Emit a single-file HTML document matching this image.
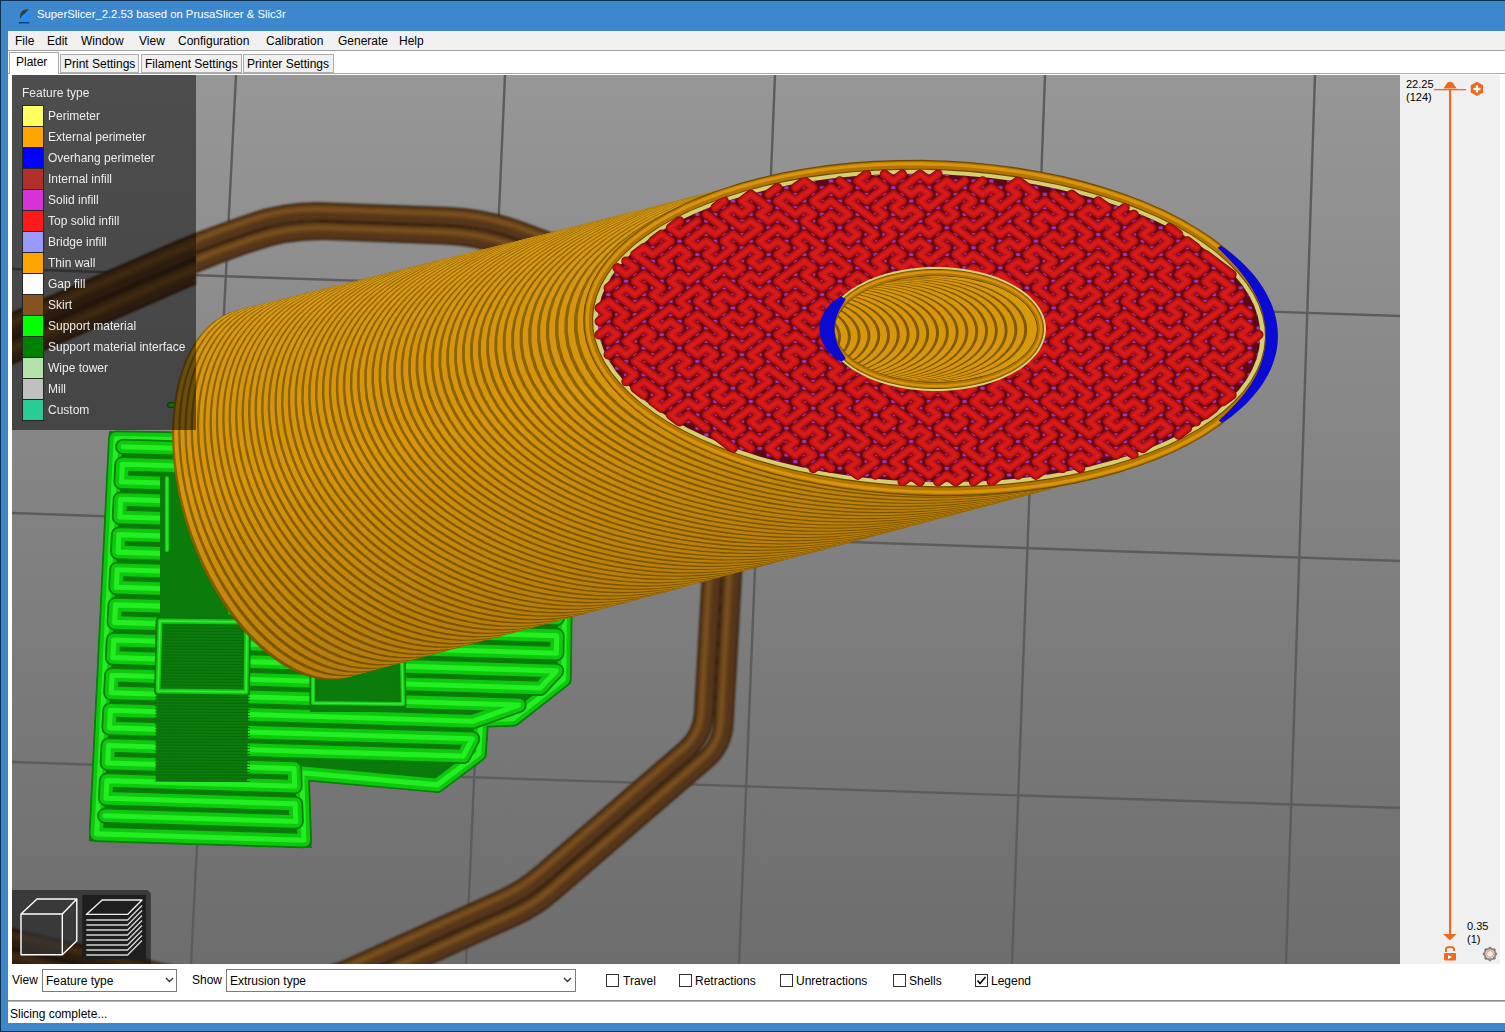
<!DOCTYPE html><html><head><meta charset="utf-8"><style>
html,body{margin:0;padding:0;}
body{width:1505px;height:1032px;position:relative;overflow:hidden;background:#3d87cd;font-family:"Liberation Sans",sans-serif;}
div{font-family:"Liberation Sans",sans-serif;}
</style></head><body>
<div style="position:absolute;left:0;top:0;width:1505px;height:1px;background:#12304f"></div>
<div style="position:absolute;left:0;top:0;width:1px;height:1032px;background:#12304f"></div>
<div style="position:absolute;left:0;top:1031px;width:1505px;height:1px;background:#12304f"></div>
<svg style="position:absolute;left:14px;top:4px" width="24" height="24" viewBox="0 0 24 24"><path d="M6.5 14.5 C5 10 7.5 4.5 14.8 5.2 L11 9.5 C8.5 11 7.2 12.5 7 14.5 Z" fill="#3c3c3c"/><path d="M7 15 C8 11.5 11.5 9.5 14.8 7.5 C16 11 15.5 15.5 13 17.2 C10.5 18.5 8 18 6 16.5 Z" fill="#1f8ef5"/><rect x="5" y="18" width="10.5" height="1.4" fill="#0a3470"/></svg>
<div style="position:absolute;left:37px;top:8px;color:#fff;font-size:11.3px;white-space:nowrap">SuperSlicer_2.2.53 based on PrusaSlicer &amp; Slic3r</div>
<div style="position:absolute;left:8px;top:31px;width:1497px;height:992px;background:#fff"></div>
<div style="position:absolute;left:8px;top:31px;width:1497px;height:19px;background:#f0f0f0"></div>
<div style="position:absolute;left:8px;top:50px;width:1497px;height:1px;background:#a0a0a0"></div>
<div style="position:absolute;left:15px;top:34px;font-size:12px;color:#000;white-space:nowrap">File</div>
<div style="position:absolute;left:47px;top:34px;font-size:12px;color:#000;white-space:nowrap">Edit</div>
<div style="position:absolute;left:81px;top:34px;font-size:12px;color:#000;white-space:nowrap">Window</div>
<div style="position:absolute;left:139px;top:34px;font-size:12px;color:#000;white-space:nowrap">View</div>
<div style="position:absolute;left:178px;top:34px;font-size:12px;color:#000;white-space:nowrap">Configuration</div>
<div style="position:absolute;left:266px;top:34px;font-size:12px;color:#000;white-space:nowrap">Calibration</div>
<div style="position:absolute;left:338px;top:34px;font-size:12px;color:#000;white-space:nowrap">Generate</div>
<div style="position:absolute;left:399px;top:34px;font-size:12px;color:#000;white-space:nowrap">Help</div>
<div style="position:absolute;left:8px;top:73px;width:1497px;height:1px;background:#a8a8a8"></div>
<div style="position:absolute;left:9px;top:52px;width:50px;height:22px;background:#fff;border:1px solid #a8a8a8;border-bottom:none;box-sizing:border-box"></div>
<div style="position:absolute;left:16px;top:55px;font-size:12px;white-space:nowrap">Plater</div>
<div style="position:absolute;left:60px;top:54px;width:79px;height:19px;background:#f0f0f0;border:1px solid #adadad;box-sizing:border-box"></div>
<div style="position:absolute;left:64px;top:57px;font-size:12px;white-space:nowrap">Print Settings</div>
<div style="position:absolute;left:141px;top:54px;width:101px;height:19px;background:#f0f0f0;border:1px solid #adadad;box-sizing:border-box"></div>
<div style="position:absolute;left:145px;top:57px;font-size:12px;white-space:nowrap">Filament Settings</div>
<div style="position:absolute;left:243px;top:54px;width:91px;height:19px;background:#f0f0f0;border:1px solid #adadad;box-sizing:border-box"></div>
<div style="position:absolute;left:247px;top:57px;font-size:12px;white-space:nowrap">Printer Settings</div>
<div style="position:absolute;left:1400px;top:75px;width:100px;height:889px;background:#f0f0f0"></div>
<div style="position:absolute;left:1406px;top:78px;font-size:11px;line-height:13px;color:#000">22.25<br>(124)</div>
<div style="position:absolute;left:1467px;top:920px;font-size:11px;line-height:13px;color:#000">0.35<br>(1)</div>
<svg style="position:absolute;left:1400px;top:75px" width="100" height="889" viewBox="0 0 100 889"><rect x="49" y="14" width="2.2" height="846" fill="#ed6b21"/><rect x="34" y="14" width="32" height="1.3" fill="#ed6b21"/><path d="M43.5 13.5 L47 8 Q50 5.5 53 8 L56.7 13.5 Z" fill="#ed6b21"/><path d="M77 6.7 L83.1 10.2 L83.1 17.5 L77 21 L70.7 17.5 L70.7 10.2 Z" fill="#ed6b21"/><rect x="75.9" y="10.5" width="2.2" height="7" fill="#fff"/><rect x="73.5" y="12.9" width="7" height="2.2" fill="#fff"/><path d="M43 859 L56.6 859 L50 865.5 Z" fill="#ed6b21"/><path d="M46 877 L46 874 Q46 872 50 872 Q54 872 54 874 L54 876" fill="none" stroke="#ed6b21" stroke-width="2"/><rect x="44" y="878" width="12" height="7.5" rx="1" fill="#ed6b21"/><path d="M48 880 L52 882 L48 884Z" fill="#fff"/><path d="M90.00 871.80 L92.14 873.83 L95.09 873.91 L95.17 876.86 L97.20 879.00 L95.17 881.14 L95.09 884.09 L92.14 884.17 L90.00 886.20 L87.86 884.17 L84.91 884.09 L84.83 881.14 L82.80 879.00 L84.83 876.86 L84.91 873.91 L87.86 873.83 Z" fill="#808080" stroke="#808080" stroke-width="1" stroke-linejoin="round"/><circle cx="90" cy="879" r="4.6" fill="#f0f0f0"/><circle cx="90" cy="879" r="3.4" fill="none" stroke="#ee8050" stroke-width="0.9"/></svg>
<div style="position:absolute;left:12px;top:973px;font-size:12px;white-space:nowrap">View</div>
<div style="position:absolute;left:42px;top:969px;width:135px;height:23px;border:1px solid #7a7a7a;box-sizing:border-box;background:#fff"></div>
<div style="position:absolute;left:46px;top:974px;font-size:12px;white-space:nowrap">Feature type</div>
<div style="position:absolute;left:192px;top:973px;font-size:12px;white-space:nowrap">Show</div>
<div style="position:absolute;left:226px;top:969px;width:350px;height:23px;border:1px solid #7a7a7a;box-sizing:border-box;background:#fff"></div>
<div style="position:absolute;left:230px;top:974px;font-size:12px;white-space:nowrap">Extrusion type</div>
<svg style="position:absolute;left:165px;top:976px" width="9" height="8"><path d="M1 2 L4.5 5.5 L8 2" fill="none" stroke="#333" stroke-width="1.4"/></svg>
<svg style="position:absolute;left:563px;top:976px" width="9" height="8"><path d="M1 2 L4.5 5.5 L8 2" fill="none" stroke="#333" stroke-width="1.4"/></svg>
<div style="position:absolute;left:606px;top:974px;width:13px;height:13px;border:1px solid #333;box-sizing:border-box;background:#fff"></div>
<div style="position:absolute;left:623px;top:974px;font-size:12px;white-space:nowrap">Travel</div>
<div style="position:absolute;left:679px;top:974px;width:13px;height:13px;border:1px solid #333;box-sizing:border-box;background:#fff"></div>
<div style="position:absolute;left:695px;top:974px;font-size:12px;white-space:nowrap">Retractions</div>
<div style="position:absolute;left:780px;top:974px;width:13px;height:13px;border:1px solid #333;box-sizing:border-box;background:#fff"></div>
<div style="position:absolute;left:796px;top:974px;font-size:12px;white-space:nowrap">Unretractions</div>
<div style="position:absolute;left:893px;top:974px;width:13px;height:13px;border:1px solid #333;box-sizing:border-box;background:#fff"></div>
<div style="position:absolute;left:909px;top:974px;font-size:12px;white-space:nowrap">Shells</div>
<div style="position:absolute;left:975px;top:974px;width:13px;height:13px;border:1px solid #333;box-sizing:border-box;background:#fff"></div>
<svg style="position:absolute;left:975px;top:974px" width="13" height="13"><path d="M2.5 6.5 L5 9.5 L10.5 3" fill="none" stroke="#000" stroke-width="1.6"/></svg>
<div style="position:absolute;left:991px;top:974px;font-size:12px;white-space:nowrap">Legend</div>
<div style="position:absolute;left:8px;top:1000px;width:1497px;height:1px;background:#8c8c8c"></div>
<div style="position:absolute;left:8px;top:1001px;width:1497px;height:1px;background:#b4b4b4"></div>
<div style="position:absolute;left:10px;top:1007px;font-size:12px;white-space:nowrap">Slicing complete...</div>
<svg style="position:absolute;left:0;top:0" width="1505" height="1032" viewBox="0 0 1505 1032">
<defs><clipPath id="vp"><rect x="12" y="75" width="1388" height="889"/></clipPath><linearGradient id="bg" x1="0" y1="75" x2="0" y2="964" gradientUnits="userSpaceOnUse"><stop offset="0" stop-color="#979797"/><stop offset="1" stop-color="#6d6d6d"/></linearGradient></defs>
<g clip-path="url(#vp)">
<rect x="12" y="75" width="1388" height="889" fill="url(#bg)"/>
<line x1="236" y1="75" x2="191" y2="964" stroke="#5c5c5c" stroke-width="2.4"/>
<line x1="505" y1="75" x2="466" y2="964" stroke="#5c5c5c" stroke-width="2.4"/>
<line x1="775" y1="75" x2="739" y2="964" stroke="#5c5c5c" stroke-width="2.4"/>
<line x1="1045" y1="75" x2="1012" y2="964" stroke="#5c5c5c" stroke-width="2.4"/>
<line x1="1315" y1="75" x2="1286" y2="964" stroke="#5c5c5c" stroke-width="2.4"/>
<line x1="12" y1="269" x2="1400" y2="316" stroke="#5c5c5c" stroke-width="2.4"/>
<line x1="12" y1="513" x2="1400" y2="561" stroke="#5c5c5c" stroke-width="2.4"/>
<line x1="12" y1="762" x2="1400" y2="808" stroke="#5c5c5c" stroke-width="2.4"/>
<filter id="bl1" x="-5%" y="-5%" width="110%" height="110%"><feGaussianBlur stdDeviation="0.9"/></filter>
<filter id="bl08" x="-2%" y="-2%" width="104%" height="104%"><feGaussianBlur stdDeviation="0.7"/></filter>
<g filter="url(#bl1)">
<clipPath id="skA"><rect x="0" y="0" width="196" height="600"/></clipPath><clipPath id="skB"><rect x="196" y="0" width="600" height="600"/></clipPath>
<g clip-path="url(#skA)">
<path d="M-35.2 346.0 L165.6 258.4 Q200.4 243.2 236.3 230.7 L250.9 225.6 Q286.8 213.1 324.8 214.5 L446.7 219.0 Q484.6 220.4 520.3 233.6 L635.8 276.3" fill="none" stroke="#3a2410" stroke-width="24.0" stroke-linejoin="round"/><path d="M-35.2 346.0 L165.6 258.4 Q200.4 243.2 236.3 230.7 L250.9 225.6 Q286.8 213.1 324.8 214.5 L446.7 219.0 Q484.6 220.4 520.3 233.6 L635.8 276.3" fill="none" stroke="#55361a" stroke-width="19.2" stroke-linejoin="round"/><path d="M-36.3 343.4 L164.5 255.8 Q199.4 240.6 235.2 228.1 L250.5 222.8 Q286.4 210.3 324.4 211.7 L447.2 216.2 Q485.2 217.6 520.8 230.8 L636.8 273.6" fill="none" stroke="#664218" stroke-width="10.8" stroke-linejoin="round"/><path d="M-36.3 343.4 L164.5 255.8 Q199.4 240.6 235.2 228.1 L250.5 222.8 Q286.4 210.3 324.4 211.7 L447.2 216.2 Q485.2 217.6 520.8 230.8 L636.8 273.6" fill="none" stroke="#7a5022" stroke-width="4.3" stroke-linejoin="round"/>
<path d="M-25.6 368.0 L174.3 280.7 Q209.1 265.5 245.0 253.0 L254.6 249.7 Q290.4 237.2 328.4 238.6 L441.9 242.9 Q479.9 244.3 515.6 257.4 L627.5 298.8" fill="none" stroke="#3a2410" stroke-width="24.0" stroke-linejoin="round"/><path d="M-25.6 368.0 L174.3 280.7 Q209.1 265.5 245.0 253.0 L254.6 249.7 Q290.4 237.2 328.4 238.6 L441.9 242.9 Q479.9 244.3 515.6 257.4 L627.5 298.8" fill="none" stroke="#55361a" stroke-width="19.2" stroke-linejoin="round"/><path d="M-26.7 365.4 L173.3 278.1 Q208.1 262.9 244.0 250.4 L254.1 246.9 Q290.0 234.4 328.0 235.8 L442.5 240.1 Q480.5 241.5 516.1 254.6 L628.5 296.1" fill="none" stroke="#664218" stroke-width="10.8" stroke-linejoin="round"/><path d="M-26.7 365.4 L173.3 278.1 Q208.1 262.9 244.0 250.4 L254.1 246.9 Q290.0 234.4 328.0 235.8 L442.5 240.1 Q480.5 241.5 516.1 254.6 L628.5 296.1" fill="none" stroke="#7a5022" stroke-width="4.3" stroke-linejoin="round"/>
</g><g clip-path="url(#skB)">
<path d="M-36.2 343.7 L164.6 256.1 Q199.5 240.9 235.4 228.4 L250.5 223.1 Q286.4 210.6 324.4 212.0 L447.2 216.5 Q485.1 217.9 520.8 231.1 L636.7 273.9" fill="none" stroke="#3a2410" stroke-width="19.0" stroke-linejoin="round"/><path d="M-36.2 343.7 L164.6 256.1 Q199.5 240.9 235.4 228.4 L250.5 223.1 Q286.4 210.6 324.4 212.0 L447.2 216.5 Q485.1 217.9 520.8 231.1 L636.7 273.9" fill="none" stroke="#55361a" stroke-width="15.2" stroke-linejoin="round"/><path d="M-37.3 341.1 L163.6 253.4 Q198.4 238.2 234.3 225.7 L250.1 220.2 Q286.0 207.7 324.0 209.2 L447.7 213.7 Q485.7 215.2 521.3 228.3 L637.7 271.3" fill="none" stroke="#664218" stroke-width="8.6" stroke-linejoin="round"/><path d="M-37.3 341.1 L163.6 253.4 Q198.4 238.2 234.3 225.7 L250.1 220.2 Q286.0 207.7 324.0 209.2 L447.7 213.7 Q485.7 215.2 521.3 228.3 L637.7 271.3" fill="none" stroke="#7a5022" stroke-width="3.4" stroke-linejoin="round"/>
<path d="M-28.8 360.7 L171.4 273.3 Q206.2 258.1 242.1 245.6 L253.3 241.7 Q289.2 229.2 327.2 230.6 L443.5 234.9 Q481.5 236.3 517.1 249.5 L630.3 291.3" fill="none" stroke="#3a2410" stroke-width="19.0" stroke-linejoin="round"/><path d="M-28.8 360.7 L171.4 273.3 Q206.2 258.1 242.1 245.6 L253.3 241.7 Q289.2 229.2 327.2 230.6 L443.5 234.9 Q481.5 236.3 517.1 249.5 L630.3 291.3" fill="none" stroke="#55361a" stroke-width="15.2" stroke-linejoin="round"/><path d="M-29.9 358.1 L170.4 270.7 Q205.2 255.5 241.1 243.0 L252.9 238.9 Q288.8 226.4 326.8 227.8 L444.1 232.1 Q482.0 233.5 517.7 246.7 L631.3 288.6" fill="none" stroke="#664218" stroke-width="8.6" stroke-linejoin="round"/><path d="M-29.9 358.1 L170.4 270.7 Q205.2 255.5 241.1 243.0 L252.9 238.9 Q288.8 226.4 326.8 227.8 L444.1 232.1 Q482.0 233.5 517.7 246.7 L631.3 288.6" fill="none" stroke="#7a5022" stroke-width="3.4" stroke-linejoin="round"/>
</g>
<path d="M734.0 539.4 L723.5 723.2 Q722.3 745.2 705.6 759.6 L551.2 892.6 Q534.6 907.0 514.5 916.0 L353.0 988.9 Q332.9 998.0 310.9 997.7 L193.2 996.3 Q171.2 996.0 149.8 991.0 L-37.7 947.3" fill="none" stroke="#3a2410" stroke-width="20.0" stroke-linejoin="round"/><path d="M734.0 539.4 L723.5 723.2 Q722.3 745.2 705.6 759.6 L551.2 892.6 Q534.6 907.0 514.5 916.0 L353.0 988.9 Q332.9 998.0 310.9 997.7 L193.2 996.3 Q171.2 996.0 149.8 991.0 L-37.7 947.3" fill="none" stroke="#55361a" stroke-width="16.0" stroke-linejoin="round"/><path d="M731.2 539.3 L720.8 721.9 Q719.5 743.8 702.9 758.2 L549.7 890.2 Q533.0 904.6 513.0 913.6 L352.4 986.1 Q332.3 995.2 310.3 994.9 L193.5 993.5 Q171.6 993.2 150.1 988.2 L-37.1 944.5" fill="none" stroke="#664218" stroke-width="9.0" stroke-linejoin="round"/><path d="M731.2 539.3 L720.8 721.9 Q719.5 743.8 702.9 758.2 L549.7 890.2 Q533.0 904.6 513.0 913.6 L352.4 986.1 Q332.3 995.2 310.3 994.9 L193.5 993.5 Q171.6 993.2 150.1 988.2 L-37.1 944.5" fill="none" stroke="#7a5022" stroke-width="3.6" stroke-linejoin="round"/>
<path d="M714.0 538.3 L704.0 713.6 Q702.8 735.6 686.1 749.9 L540.4 875.6 Q523.7 889.9 503.6 899.0 L348.8 968.9 Q328.7 977.9 306.7 977.7 L195.6 976.3 Q173.6 976.0 152.2 971.0 L-33.2 927.8" fill="none" stroke="#3a2410" stroke-width="20.0" stroke-linejoin="round"/><path d="M714.0 538.3 L704.0 713.6 Q702.8 735.6 686.1 749.9 L540.4 875.6 Q523.7 889.9 503.6 899.0 L348.8 968.9 Q328.7 977.9 306.7 977.7 L195.6 976.3 Q173.6 976.0 152.2 971.0 L-33.2 927.8" fill="none" stroke="#55361a" stroke-width="16.0" stroke-linejoin="round"/><path d="M711.3 538.1 L701.3 712.3 Q700.0 734.2 683.4 748.6 L538.8 873.2 Q522.2 887.6 502.1 896.6 L348.2 966.1 Q328.1 975.1 306.1 974.8 L196.0 973.5 Q174.0 973.2 152.5 968.2 L-32.5 925.1" fill="none" stroke="#664218" stroke-width="9.0" stroke-linejoin="round"/><path d="M711.3 538.1 L701.3 712.3 Q700.0 734.2 683.4 748.6 L538.8 873.2 Q522.2 887.6 502.1 896.6 L348.2 966.1 Q328.1 975.1 306.1 974.8 L196.0 973.5 Q174.0 973.2 152.5 968.2 L-32.5 925.1" fill="none" stroke="#7a5022" stroke-width="3.6" stroke-linejoin="round"/>
</g>
<path d="M109.0 431.0 L420.0 436.0 L560.0 445.0 L572.0 614.0 L571.0 683.0 L516.0 726.0 L488.0 727.0 L486.0 757.7 L439.5 792.6 L309.5 781.0 L311.7 847.9 L88.9 841.2 Z" fill="#0a7a0a"/>
<g filter="url(#bl08)">
<path d="M116.1 438.6 L96.8 833.9 L303.9 840.2 L301.7 772.8 L437.3 784.9 L478.7 753.8 L481.0 719.7 L513.3 718.6 L563.6 679.3 L564.5 614.2 L553.0 452.1 L419.7 443.5 L116.1 438.6 Z" fill="none" stroke="#087c08" stroke-width="16.0" stroke-linejoin="round" stroke-linecap="round"/><path d="M116.1 438.6 L96.8 833.9 L303.9 840.2 L301.7 772.8 L437.3 784.9 L478.7 753.8 L481.0 719.7 L513.3 718.6 L563.6 679.3 L564.5 614.2 L553.0 452.1 L419.7 443.5 L116.1 438.6 Z" fill="none" stroke="#0cc80c" stroke-width="12.5" stroke-linejoin="round" stroke-linecap="round"/><path d="M116.1 438.6 L96.8 833.9 L303.9 840.2 L301.7 772.8 L437.3 784.9 L478.7 753.8 L481.0 719.7 L513.3 718.6 L563.6 679.3 L564.5 614.2 L553.0 452.1 L419.7 443.5 L116.1 438.6 Z" fill="none" stroke="#22ee22" stroke-width="5.1" stroke-linejoin="round" stroke-linecap="round"/>
<path d="M123.2 446.7 L546.0 459.4 L547.2 477.0 L122.4 464.3 L121.5 481.8 L548.5 494.7 L549.7 512.3 L120.7 499.4 L119.8 517.0 L551.0 529.9 L552.2 547.6 L118.9 534.6 L118.1 552.1 L553.5 565.2 L554.7 582.8 L117.2 569.7 L116.4 587.3 L556.0 600.5 L556.9 618.1 L115.5 604.9 L114.6 622.4 L556.7 635.7 L556.4 653.3 L113.8 640.0 L112.9 657.6 L556.2 670.9 L540.2 688.0 L112.1 675.2 L111.2 692.7 L518.6 705.0 L473.3 721.2 L110.3 710.3 L109.5 727.9 L472.2 738.8 L463.2 756.1 L108.6 745.5 L107.7 763.0 L294.1 768.6 L294.7 786.2 L106.9 780.6 L106.0 798.2 L295.2 803.9 L295.8 821.5 L105.2 815.8" fill="none" stroke="#087c08" stroke-width="16.0" stroke-linejoin="round" stroke-linecap="round"/><path d="M123.2 446.7 L546.0 459.4 L547.2 477.0 L122.4 464.3 L121.5 481.8 L548.5 494.7 L549.7 512.3 L120.7 499.4 L119.8 517.0 L551.0 529.9 L552.2 547.6 L118.9 534.6 L118.1 552.1 L553.5 565.2 L554.7 582.8 L117.2 569.7 L116.4 587.3 L556.0 600.5 L556.9 618.1 L115.5 604.9 L114.6 622.4 L556.7 635.7 L556.4 653.3 L113.8 640.0 L112.9 657.6 L556.2 670.9 L540.2 688.0 L112.1 675.2 L111.2 692.7 L518.6 705.0 L473.3 721.2 L110.3 710.3 L109.5 727.9 L472.2 738.8 L463.2 756.1 L108.6 745.5 L107.7 763.0 L294.1 768.6 L294.7 786.2 L106.9 780.6 L106.0 798.2 L295.2 803.9 L295.8 821.5 L105.2 815.8" fill="none" stroke="#0cc80c" stroke-width="12.5" stroke-linejoin="round" stroke-linecap="round"/><path d="M123.2 446.7 L546.0 459.4 L547.2 477.0 L122.4 464.3 L121.5 481.8 L548.5 494.7 L549.7 512.3 L120.7 499.4 L119.8 517.0 L551.0 529.9 L552.2 547.6 L118.9 534.6 L118.1 552.1 L553.5 565.2 L554.7 582.8 L117.2 569.7 L116.4 587.3 L556.0 600.5 L556.9 618.1 L115.5 604.9 L114.6 622.4 L556.7 635.7 L556.4 653.3 L113.8 640.0 L112.9 657.6 L556.2 670.9 L540.2 688.0 L112.1 675.2 L111.2 692.7 L518.6 705.0 L473.3 721.2 L110.3 710.3 L109.5 727.9 L472.2 738.8 L463.2 756.1 L108.6 745.5 L107.7 763.0 L294.1 768.6 L294.7 786.2 L106.9 780.6 L106.0 798.2 L295.2 803.9 L295.8 821.5 L105.2 815.8" fill="none" stroke="#22ee22" stroke-width="5.1" stroke-linejoin="round" stroke-linecap="round"/>
</g>
<path d="M157 617 L250 617 L247 782 L156 781 Z" fill="#0b7c0b"/>
<g stroke="#0a6a0a" stroke-width="1"><line x1="155" y1="622" x2="250" y2="622.5"/><line x1="155" y1="625" x2="250" y2="625.5"/><line x1="155" y1="628" x2="250" y2="628.5"/><line x1="155" y1="631" x2="250" y2="631.5"/><line x1="155" y1="634" x2="250" y2="634.5"/><line x1="155" y1="637" x2="250" y2="637.5"/><line x1="155" y1="640" x2="250" y2="640.5"/><line x1="155" y1="643" x2="250" y2="643.5"/><line x1="155" y1="646" x2="250" y2="646.5"/><line x1="155" y1="649" x2="250" y2="649.5"/><line x1="155" y1="652" x2="250" y2="652.5"/><line x1="155" y1="655" x2="250" y2="655.5"/><line x1="155" y1="658" x2="250" y2="658.5"/><line x1="155" y1="661" x2="250" y2="661.5"/><line x1="155" y1="664" x2="250" y2="664.5"/><line x1="155" y1="667" x2="250" y2="667.5"/><line x1="155" y1="670" x2="250" y2="670.5"/><line x1="155" y1="673" x2="250" y2="673.5"/><line x1="155" y1="676" x2="250" y2="676.5"/><line x1="155" y1="679" x2="250" y2="679.5"/><line x1="155" y1="682" x2="250" y2="682.5"/><line x1="155" y1="685" x2="250" y2="685.5"/><line x1="155" y1="688" x2="250" y2="688.5"/><line x1="155" y1="691" x2="250" y2="691.5"/><line x1="155" y1="694" x2="250" y2="694.5"/><line x1="155" y1="697" x2="250" y2="697.5"/><line x1="155" y1="700" x2="250" y2="700.5"/><line x1="155" y1="703" x2="250" y2="703.5"/><line x1="155" y1="706" x2="250" y2="706.5"/><line x1="155" y1="709" x2="250" y2="709.5"/><line x1="155" y1="712" x2="250" y2="712.5"/><line x1="155" y1="715" x2="250" y2="715.5"/><line x1="155" y1="718" x2="250" y2="718.5"/><line x1="155" y1="721" x2="250" y2="721.5"/><line x1="155" y1="724" x2="250" y2="724.5"/><line x1="155" y1="727" x2="250" y2="727.5"/><line x1="155" y1="730" x2="250" y2="730.5"/><line x1="155" y1="733" x2="250" y2="733.5"/><line x1="155" y1="736" x2="250" y2="736.5"/><line x1="155" y1="739" x2="250" y2="739.5"/><line x1="155" y1="742" x2="250" y2="742.5"/><line x1="155" y1="745" x2="250" y2="745.5"/><line x1="155" y1="748" x2="250" y2="748.5"/><line x1="155" y1="751" x2="250" y2="751.5"/><line x1="155" y1="754" x2="250" y2="754.5"/><line x1="155" y1="757" x2="250" y2="757.5"/><line x1="155" y1="760" x2="250" y2="760.5"/><line x1="155" y1="763" x2="250" y2="763.5"/><line x1="155" y1="766" x2="250" y2="766.5"/><line x1="155" y1="769" x2="250" y2="769.5"/><line x1="155" y1="772" x2="250" y2="772.5"/><line x1="155" y1="775" x2="250" y2="775.5"/><line x1="155" y1="778" x2="250" y2="778.5"/><line x1="155" y1="781" x2="250" y2="781.5"/></g>
<path d="M160 621 L247 622 L246 692 L158 691 Z" fill="none" stroke="#0a7a0a" stroke-width="8.0" stroke-linejoin="round" stroke-linecap="round"/><path d="M160 621 L247 622 L246 692 L158 691 Z" fill="none" stroke="#16c816" stroke-width="4.8" stroke-linejoin="round" stroke-linecap="round"/><path d="M160 621 L247 622 L246 692 L158 691 Z" fill="none" stroke="#30f030" stroke-width="1.6" stroke-linejoin="round" stroke-linecap="round"/>
<path d="M160 476 L192 478 L200 554 L230 556 L228 617 L160 617 Z" fill="#0b7c0b"/>
<path d="M167 478 L167 550" fill="none" stroke="#0a7a0a" stroke-width="7.0" stroke-linejoin="round" stroke-linecap="round"/><path d="M167 478 L167 550" fill="none" stroke="#16c816" stroke-width="4.2" stroke-linejoin="round" stroke-linecap="round"/><path d="M167 478 L167 550" fill="none" stroke="#30f030" stroke-width="1.4" stroke-linejoin="round" stroke-linecap="round"/>
<path d="M310 654 L406 654 L406 712 L310 712 Z" fill="#0b7c0b"/>
<path d="M313 658 L402 658 L403 704 L313 703 Z" fill="none" stroke="#0a7a0a" stroke-width="7.0" stroke-linejoin="round" stroke-linecap="round"/><path d="M313 658 L402 658 L403 704 L313 703 Z" fill="none" stroke="#16c816" stroke-width="4.2" stroke-linejoin="round" stroke-linecap="round"/><path d="M313 658 L402 658 L403 704 L313 703 Z" fill="none" stroke="#30f030" stroke-width="1.4" stroke-linejoin="round" stroke-linecap="round"/>
<path d="M170 405 L195 405 L195 430" fill="none" stroke="#0a7a0a" stroke-width="6.0" stroke-linejoin="round" stroke-linecap="round"/><path d="M170 405 L195 405 L195 430" fill="none" stroke="#16c816" stroke-width="3.6" stroke-linejoin="round" stroke-linecap="round"/><path d="M170 405 L195 405 L195 430" fill="none" stroke="#30f030" stroke-width="1.2" stroke-linejoin="round" stroke-linecap="round"/>
<clipPath id="cylclip"><path d="M185.1 520.7 L189.7 535.1 L195.0 549.2 L200.8 562.9 L207.2 576.3 L214.1 589.1 L221.5 601.3 L229.4 612.9 L237.6 623.8 L246.1 633.8 L255.0 643.0 L264.0 651.3 L273.3 658.6 L282.6 664.9 L292.0 670.1 L301.5 674.2 L310.8 677.3 L320.0 679.2 L329.1 679.9 L337.9 679.5 L346.5 678.0 L354.7 675.4 L362.5 671.6 L369.9 666.7 L376.8 660.8 L383.2 653.8 L389.1 645.8 L394.3 636.9 L398.9 627.2 L402.8 616.6 L406.1 605.2 L408.6 593.2 L410.5 580.5 L411.6 567.4 L412.0 553.7 L411.6 539.7 L410.5 525.5 L408.6 511.0 L406.1 496.4 L402.8 481.8 L398.9 467.3 L394.3 452.9 L389.0 438.8 L383.2 425.1 L376.8 411.7 L369.9 398.9 L362.5 386.7 L354.6 375.1 L346.4 364.2 L337.9 354.2 L329.0 345.0 L320.0 336.7 L310.7 329.4 L301.4 323.1 L292.0 317.9 L282.5 313.8 L273.2 310.7 L264.0 308.8 L254.9 308.1 L246.1 308.5 L237.5 310.0 L229.3 312.6 L221.5 316.4 L214.1 321.3 L207.2 327.2 L200.8 334.2 L194.9 342.2 L189.7 351.1 L185.1 360.8 L181.2 371.4 L177.9 382.8 L175.4 394.8 L173.5 407.5 L172.4 420.6 L172.0 434.3 L172.4 448.3 L173.5 462.5 L175.4 477.0 L177.9 491.6 L181.2 506.2 Z"/><path d="M192.0 518.9 L196.8 533.2 L202.3 547.2 L208.4 560.9 L215.1 574.1 L222.3 586.9 L230.1 599.0 L238.3 610.5 L246.8 621.2 L255.8 631.2 L265.0 640.3 L274.5 648.4 L284.1 655.6 L293.9 661.8 L303.7 666.9 L313.5 670.9 L323.3 673.9 L332.9 675.7 L342.4 676.3 L351.6 675.9 L360.5 674.2 L369.0 671.5 L377.2 667.6 L384.9 662.7 L392.1 656.7 L398.8 649.6 L404.8 641.6 L410.3 632.7 L415.0 622.9 L419.1 612.3 L422.5 600.9 L425.2 588.8 L427.0 576.2 L428.2 563.0 L428.5 549.4 L428.1 535.4 L426.9 521.2 L425.0 506.7 L422.3 492.2 L418.9 477.7 L414.7 463.2 L409.9 448.9 L404.4 434.9 L398.3 421.2 L391.6 407.9 L384.4 395.2 L376.7 383.1 L368.5 371.6 L359.9 360.8 L351.0 350.9 L341.7 341.8 L332.3 333.6 L322.6 326.5 L312.9 320.3 L303.0 315.2 L293.2 311.1 L283.5 308.2 L273.8 306.4 L264.4 305.7 L255.2 306.2 L246.3 307.8 L237.7 310.6 L229.5 314.4 L221.8 319.4 L214.6 325.4 L208.0 332.4 L201.9 340.4 L196.5 349.4 L191.7 359.2 L187.6 369.8 L184.2 381.2 L181.6 393.2 L179.7 405.9 L178.6 419.1 L178.2 432.7 L178.6 446.7 L179.8 460.9 L181.7 475.3 L184.4 489.9 L187.9 504.4 Z"/><path d="M198.9 517.0 L203.9 531.3 L209.7 545.2 L216.0 558.8 L223.0 572.0 L230.6 584.6 L238.6 596.7 L247.2 608.1 L256.1 618.7 L265.4 628.6 L275.1 637.5 L284.9 645.6 L295.0 652.7 L305.1 658.7 L315.4 663.7 L325.6 667.7 L335.7 670.5 L345.8 672.2 L355.6 672.7 L365.2 672.2 L374.5 670.5 L383.4 667.6 L391.9 663.7 L399.9 658.7 L407.3 652.6 L414.3 645.5 L420.6 637.4 L426.2 628.5 L431.2 618.6 L435.4 608.0 L438.9 596.6 L441.6 584.5 L443.6 571.8 L444.7 558.7 L445.1 545.1 L444.6 531.1 L443.4 516.9 L441.3 502.5 L438.5 488.0 L434.9 473.5 L430.6 459.1 L425.6 444.9 L419.8 430.9 L413.5 417.3 L406.5 404.2 L398.9 391.5 L390.9 379.5 L382.3 368.1 L373.4 357.4 L364.1 347.6 L354.4 338.6 L344.6 330.6 L334.5 323.5 L324.4 317.4 L314.1 312.4 L303.9 308.5 L293.8 305.7 L283.7 304.0 L273.9 303.4 L264.3 304.0 L255.0 305.7 L246.1 308.5 L237.6 312.5 L229.6 317.5 L222.2 323.6 L215.2 330.6 L208.9 338.7 L203.3 347.7 L198.3 357.5 L194.1 368.2 L190.6 379.6 L187.9 391.6 L185.9 404.3 L184.8 417.5 L184.4 431.1 L184.9 445.0 L186.1 459.3 L188.2 473.7 L191.0 488.1 L194.6 502.6 Z"/><path d="M205.8 515.2 L211.1 529.3 L217.0 543.2 L223.7 556.7 L231.0 569.8 L238.8 582.4 L247.2 594.3 L256.1 605.6 L265.4 616.2 L275.1 625.9 L285.1 634.8 L295.4 642.7 L305.8 649.7 L316.4 655.7 L327.0 660.6 L337.6 664.4 L348.2 667.1 L358.6 668.7 L368.8 669.2 L378.8 668.5 L388.4 666.7 L397.7 663.8 L406.5 659.8 L414.8 654.7 L422.6 648.5 L429.7 641.4 L436.3 633.2 L442.1 624.2 L447.3 614.3 L451.6 603.7 L455.3 592.2 L458.1 580.2 L460.1 567.5 L461.3 554.3 L461.6 540.7 L461.1 526.8 L459.8 512.6 L457.7 498.3 L454.7 483.8 L451.0 469.4 L446.4 455.0 L441.2 440.9 L435.2 427.0 L428.6 413.5 L421.3 400.4 L413.4 387.8 L405.0 375.9 L396.2 364.6 L386.8 354.0 L377.2 344.3 L367.1 335.4 L356.9 327.5 L346.4 320.5 L335.9 314.6 L325.2 309.7 L314.6 305.8 L304.0 303.1 L293.6 301.5 L283.4 301.0 L273.5 301.7 L263.8 303.5 L254.6 306.4 L245.8 310.5 L237.5 315.6 L229.7 321.7 L222.5 328.9 L216.0 337.0 L210.1 346.0 L205.0 355.9 L200.6 366.6 L197.0 378.0 L194.2 390.0 L192.2 402.7 L191.0 415.9 L190.6 429.5 L191.1 443.4 L192.4 457.6 L194.6 472.0 L197.5 486.4 L201.3 500.8 Z"/><path d="M212.7 513.3 L218.2 527.4 L224.4 541.2 L231.3 554.7 L238.9 567.7 L247.1 580.1 L255.8 592.0 L265.0 603.2 L274.7 613.6 L284.8 623.3 L295.2 632.0 L305.8 639.9 L316.7 646.7 L327.6 652.6 L338.7 657.4 L349.7 661.1 L360.7 663.7 L371.5 665.2 L382.1 665.6 L392.4 664.8 L402.4 662.9 L412.0 659.9 L421.1 655.8 L429.7 650.7 L437.8 644.4 L445.2 637.2 L451.9 629.1 L458.0 620.0 L463.3 610.1 L467.9 599.4 L471.6 587.9 L474.5 575.8 L476.6 563.2 L477.8 550.0 L478.1 536.4 L477.6 522.5 L476.2 508.3 L473.9 494.0 L470.9 479.6 L467.0 465.2 L462.3 451.0 L456.8 436.9 L450.6 423.1 L443.7 409.6 L436.1 396.6 L427.9 384.1 L419.2 372.3 L410.0 361.1 L400.3 350.6 L390.2 341.0 L379.8 332.3 L369.2 324.4 L358.3 317.6 L347.4 311.7 L336.3 306.9 L325.3 303.2 L314.3 300.6 L303.5 299.1 L292.9 298.7 L282.6 299.5 L272.6 301.4 L263.0 304.4 L253.9 308.5 L245.3 313.6 L237.2 319.8 L229.8 327.1 L223.1 335.2 L217.0 344.3 L211.7 354.2 L207.1 364.9 L203.4 376.4 L200.5 388.4 L198.4 401.1 L197.2 414.3 L196.9 427.9 L197.4 441.8 L198.8 455.9 L201.1 470.3 L204.1 484.7 L208.0 499.0 Z"/><path d="M219.7 511.5 L225.4 525.5 L231.9 539.2 L239.0 552.6 L246.9 565.5 L255.4 577.9 L264.4 589.7 L274.0 600.8 L284.0 611.1 L294.5 620.6 L305.2 629.3 L316.3 637.0 L327.5 643.8 L338.9 649.5 L350.3 654.2 L361.8 657.8 L373.1 660.3 L384.3 661.7 L395.3 662.0 L406.0 661.2 L416.3 659.2 L426.2 656.1 L435.7 651.9 L444.6 646.7 L452.9 640.4 L460.6 633.1 L467.6 624.9 L473.9 615.8 L479.4 605.8 L484.0 595.1 L487.9 583.6 L490.9 571.5 L493.0 558.9 L494.2 545.7 L494.6 532.1 L494.0 518.2 L492.6 504.1 L490.2 489.8 L487.0 475.4 L482.9 461.1 L478.0 446.9 L472.3 432.9 L465.9 419.1 L458.7 405.8 L450.9 392.8 L442.4 380.5 L433.3 368.7 L423.8 357.6 L413.7 347.3 L403.3 337.7 L392.5 329.1 L381.5 321.3 L370.2 314.6 L358.9 308.8 L347.4 304.1 L336.0 300.5 L324.6 298.0 L313.4 296.6 L302.5 296.4 L291.8 297.2 L281.4 299.2 L271.5 302.3 L262.1 306.5 L253.1 311.7 L244.8 318.0 L237.1 325.2 L230.1 333.5 L223.9 342.6 L218.4 352.5 L213.7 363.3 L209.9 374.7 L206.9 386.8 L204.7 399.5 L203.5 412.7 L203.2 426.2 L203.7 440.1 L205.2 454.3 L207.5 468.6 L210.8 482.9 L214.8 497.2 Z"/><path d="M226.7 509.6 L232.6 523.6 L239.3 537.2 L246.7 550.5 L254.9 563.3 L263.7 575.6 L273.0 587.3 L283.0 598.3 L293.3 608.6 L304.2 618.0 L315.3 626.5 L326.7 634.2 L338.4 640.8 L350.1 646.5 L362.0 651.0 L373.8 654.6 L385.5 657.0 L397.1 658.3 L408.5 658.4 L419.5 657.5 L430.2 655.4 L440.5 652.2 L450.3 648.0 L459.5 642.7 L468.1 636.3 L476.0 629.0 L483.2 620.7 L489.7 611.6 L495.4 601.6 L500.2 590.8 L504.2 579.3 L507.2 567.2 L509.4 554.5 L510.7 541.4 L511.0 527.8 L510.4 513.9 L508.9 499.8 L506.4 485.6 L503.1 471.3 L498.9 457.0 L493.8 442.8 L487.9 428.9 L481.2 415.2 L473.8 401.9 L465.6 389.1 L456.8 376.8 L447.5 365.1 L437.5 354.1 L427.2 343.9 L416.3 334.4 L405.2 325.9 L393.8 318.3 L382.1 311.6 L370.4 306.0 L358.5 301.4 L346.7 297.9 L335.0 295.5 L323.4 294.2 L312.0 294.0 L301.0 294.9 L290.3 297.0 L280.0 300.2 L270.2 304.4 L261.0 309.8 L252.4 316.1 L244.5 323.4 L237.3 331.7 L230.8 340.9 L225.1 350.9 L220.3 361.6 L216.3 373.1 L213.3 385.2 L211.1 397.9 L209.8 411.0 L209.5 424.6 L210.1 438.5 L211.6 452.6 L214.1 466.8 L217.4 481.2 L221.6 495.4 Z"/><path d="M233.7 507.7 L239.8 521.6 L246.8 535.2 L254.5 548.4 L262.9 561.2 L272.0 573.4 L281.7 585.0 L291.9 595.9 L302.7 606.0 L313.9 615.3 L325.4 623.8 L337.2 631.3 L349.2 637.9 L361.4 643.4 L373.6 647.9 L385.8 651.3 L398.0 653.6 L409.9 654.8 L421.7 654.9 L433.1 653.8 L444.1 651.7 L454.7 648.4 L464.8 644.1 L474.3 638.7 L483.2 632.3 L491.4 624.9 L498.8 616.6 L505.5 607.4 L511.3 597.3 L516.3 586.5 L520.4 575.0 L523.6 562.9 L525.8 550.2 L527.1 537.1 L527.4 523.5 L526.8 509.7 L525.2 495.6 L522.6 481.4 L519.2 467.1 L514.8 452.9 L509.5 438.8 L503.4 424.9 L496.5 411.3 L488.8 398.1 L480.4 385.3 L471.3 373.1 L461.6 361.5 L451.3 350.6 L440.6 340.5 L429.4 331.2 L417.9 322.7 L406.0 315.2 L394.0 308.6 L381.8 303.1 L369.6 298.6 L357.4 295.2 L345.3 292.9 L333.3 291.7 L321.6 291.6 L310.2 292.7 L299.1 294.8 L288.5 298.1 L278.4 302.4 L268.9 307.8 L260.0 314.2 L251.9 321.6 L244.4 329.9 L237.7 339.1 L231.9 349.2 L226.9 360.0 L222.8 371.5 L219.7 383.6 L217.4 396.3 L216.2 409.4 L215.8 423.0 L216.5 436.8 L218.1 450.9 L220.6 465.1 L224.1 479.4 L228.5 493.6 Z"/><path d="M240.8 505.8 L247.1 519.7 L254.3 533.2 L262.2 546.3 L270.9 559.0 L280.3 571.1 L290.3 582.6 L300.9 593.4 L312.0 603.5 L323.6 612.7 L335.5 621.0 L347.7 628.5 L360.1 634.9 L372.7 640.3 L385.3 644.7 L397.9 648.0 L410.4 650.2 L422.8 651.3 L434.9 651.3 L446.6 650.2 L458.0 647.9 L469.0 644.6 L479.4 640.2 L489.2 634.7 L498.3 628.2 L506.7 620.8 L514.4 612.4 L521.3 603.2 L527.3 593.1 L532.4 582.3 L536.6 570.8 L539.9 558.6 L542.2 545.9 L543.5 532.8 L543.8 519.2 L543.1 505.4 L541.5 491.4 L538.8 477.2 L535.2 463.0 L530.7 448.8 L525.2 434.7 L518.9 420.9 L511.7 407.4 L503.8 394.2 L495.1 381.6 L485.7 369.5 L475.7 358.0 L465.1 347.2 L454.0 337.1 L442.4 327.9 L430.5 319.5 L418.3 312.1 L405.9 305.7 L393.3 300.2 L380.7 295.9 L368.1 292.6 L355.6 290.4 L343.2 289.3 L331.1 289.3 L319.4 290.4 L308.0 292.6 L297.0 296.0 L286.6 300.4 L276.8 305.9 L267.7 312.3 L259.3 319.8 L251.6 328.2 L244.7 337.4 L238.7 347.5 L233.6 358.3 L229.4 369.8 L226.1 382.0 L223.8 394.6 L222.5 407.8 L222.2 421.3 L222.9 435.2 L224.5 449.2 L227.2 463.4 L230.8 477.6 L235.3 491.8 Z"/><path d="M247.8 504.0 L254.4 517.7 L261.8 531.2 L270.0 544.2 L279.0 556.8 L288.7 568.8 L299.0 580.3 L309.9 591.0 L321.4 600.9 L333.3 610.0 L345.6 618.3 L358.2 625.6 L371.0 631.9 L383.9 637.3 L396.9 641.5 L409.9 644.7 L422.8 646.8 L435.6 647.8 L448.0 647.7 L460.2 646.5 L471.9 644.2 L483.2 640.8 L493.9 636.3 L504.0 630.7 L513.4 624.2 L522.1 616.7 L530.0 608.3 L537.0 599.0 L543.2 588.9 L548.5 578.0 L552.8 566.5 L556.2 554.3 L558.5 541.6 L559.8 528.5 L560.1 515.0 L559.4 501.2 L557.7 487.1 L555.0 473.0 L551.2 458.8 L546.5 444.7 L540.9 430.7 L534.4 416.9 L527.0 403.5 L518.8 390.4 L509.8 377.8 L500.1 365.8 L489.7 354.4 L478.8 343.7 L467.4 333.7 L455.4 324.6 L443.2 316.4 L430.6 309.0 L417.8 302.7 L404.8 297.4 L391.8 293.1 L378.8 289.9 L365.9 287.8 L353.2 286.8 L340.7 286.9 L328.6 288.1 L316.8 290.5 L305.6 293.9 L294.9 298.4 L284.8 303.9 L275.4 310.4 L266.7 317.9 L258.8 326.4 L251.7 335.7 L245.5 345.8 L240.3 356.6 L235.9 368.2 L232.6 380.3 L230.3 393.0 L228.9 406.1 L228.6 419.7 L229.3 433.5 L231.1 447.5 L233.8 461.7 L237.5 475.8 L242.2 490.0 Z"/><path d="M254.9 502.1 L261.7 515.8 L269.3 529.1 L277.8 542.1 L287.0 554.6 L297.0 566.6 L307.7 577.9 L319.0 588.5 L330.8 598.4 L343.0 607.4 L355.7 615.5 L368.6 622.7 L381.8 629.0 L395.2 634.2 L408.6 638.4 L422.0 641.5 L435.2 643.5 L448.3 644.4 L461.2 644.2 L473.7 642.9 L485.8 640.4 L497.3 636.9 L508.4 632.4 L518.8 626.8 L528.4 620.2 L537.4 612.6 L545.5 604.1 L552.8 594.8 L559.1 584.7 L564.5 573.8 L569.0 562.2 L572.4 550.0 L574.8 537.4 L576.1 524.2 L576.4 510.7 L575.7 496.9 L573.9 482.9 L571.1 468.8 L567.2 454.7 L562.4 440.6 L556.6 426.7 L549.8 413.0 L542.2 399.6 L533.7 386.6 L524.5 374.1 L514.5 362.1 L503.8 350.8 L492.5 340.2 L480.7 330.4 L468.5 321.3 L455.8 313.2 L442.9 306.0 L429.7 299.7 L416.3 294.5 L402.9 290.3 L389.5 287.2 L376.3 285.2 L363.2 284.3 L350.3 284.5 L337.8 285.9 L325.7 288.3 L314.2 291.8 L303.1 296.3 L292.7 301.9 L283.1 308.5 L274.1 316.1 L266.0 324.6 L258.7 333.9 L252.4 344.1 L247.0 354.9 L242.5 366.5 L239.1 378.7 L236.7 391.4 L235.4 404.5 L235.1 418.0 L235.8 431.8 L237.6 445.8 L240.4 459.9 L244.3 474.0 L249.1 488.1 Z"/><path d="M262.1 500.2 L269.0 513.8 L276.9 527.1 L285.6 540.0 L295.1 552.4 L305.4 564.3 L316.4 575.5 L328.0 586.1 L340.2 595.8 L352.8 604.7 L365.8 612.8 L379.1 619.9 L392.7 626.0 L406.4 631.1 L420.2 635.2 L434.0 638.2 L447.7 640.1 L461.1 640.9 L474.3 640.6 L487.2 639.2 L499.6 636.7 L511.5 633.1 L522.8 628.5 L533.5 622.8 L543.5 616.2 L552.7 608.5 L561.0 600.0 L568.5 590.6 L575.0 580.4 L580.5 569.5 L585.1 558.0 L588.6 545.8 L591.0 533.1 L592.4 519.9 L592.7 506.4 L591.9 492.7 L590.1 478.7 L587.2 464.6 L583.2 450.5 L578.2 436.5 L572.2 422.6 L565.2 409.0 L557.4 395.7 L548.6 382.8 L539.1 370.3 L528.8 358.5 L517.8 347.3 L506.2 336.7 L494.1 327.0 L481.5 318.1 L468.4 310.0 L455.1 302.9 L441.5 296.8 L427.8 291.7 L414.0 287.6 L400.3 284.6 L386.6 282.7 L373.1 281.9 L359.9 282.2 L347.1 283.6 L334.6 286.1 L322.7 289.7 L311.4 294.3 L300.7 300.0 L290.8 306.6 L281.6 314.3 L273.2 322.8 L265.8 332.2 L259.3 342.3 L253.7 353.3 L249.2 364.8 L245.7 377.0 L243.2 389.7 L241.8 402.8 L241.5 416.3 L242.3 430.1 L244.2 444.1 L247.1 458.2 L251.1 472.3 L256.1 486.3 Z"/><path d="M269.2 498.2 L276.4 511.8 L284.5 525.1 L293.4 537.9 L303.3 550.2 L313.8 562.0 L325.1 573.2 L337.1 583.6 L349.6 593.2 L362.5 602.1 L375.9 610.0 L389.6 617.0 L403.6 623.1 L417.7 628.1 L431.9 632.0 L446.0 634.9 L460.1 636.8 L473.9 637.5 L487.5 637.1 L500.7 635.6 L513.4 633.0 L525.7 629.3 L537.3 624.6 L548.3 618.9 L558.5 612.1 L567.9 604.5 L576.5 595.9 L584.1 586.5 L590.8 576.2 L596.5 565.3 L601.2 553.7 L604.8 541.5 L607.3 528.8 L608.7 515.7 L609.0 502.2 L608.2 488.4 L606.2 474.5 L603.2 460.5 L599.1 446.4 L594.0 432.4 L587.8 418.6 L580.6 405.0 L572.5 391.8 L563.6 379.0 L553.7 366.6 L543.2 354.8 L531.9 343.7 L519.9 333.3 L507.4 323.6 L494.5 314.8 L481.1 306.8 L467.4 299.8 L453.4 293.8 L439.3 288.8 L425.1 284.8 L411.0 281.9 L396.9 280.1 L383.1 279.4 L369.5 279.8 L356.3 281.3 L343.6 283.9 L331.3 287.5 L319.7 292.2 L308.7 298.0 L298.5 304.7 L289.1 312.4 L280.5 321.0 L272.9 330.4 L266.2 340.6 L260.5 351.6 L255.8 363.2 L252.2 375.3 L249.7 388.0 L248.3 401.2 L248.0 414.7 L248.8 428.4 L250.8 442.4 L253.8 456.4 L257.9 470.5 L263.0 484.4 Z"/><path d="M276.4 496.3 L283.8 509.8 L292.1 523.0 L301.3 535.8 L311.4 548.0 L322.3 559.7 L333.9 570.8 L346.1 581.1 L359.0 590.7 L372.3 599.4 L386.1 607.3 L400.1 614.2 L414.5 620.1 L429.0 625.0 L443.5 628.9 L458.0 631.7 L472.4 633.4 L486.7 634.0 L500.6 633.5 L514.1 631.9 L527.2 629.3 L539.8 625.5 L551.7 620.7 L563.0 614.9 L573.5 608.1 L583.1 600.4 L591.9 591.8 L599.8 582.3 L606.6 572.1 L612.5 561.1 L617.2 549.5 L620.9 537.3 L623.5 524.6 L624.9 511.4 L625.2 498.0 L624.3 484.2 L622.3 470.3 L619.2 456.3 L615.0 442.3 L609.7 428.4 L603.3 414.6 L596.0 401.1 L587.7 387.9 L578.4 375.2 L568.3 362.9 L557.5 351.2 L545.9 340.1 L533.6 329.8 L520.8 320.2 L507.4 311.5 L493.7 303.7 L479.6 296.8 L465.3 290.8 L450.8 285.9 L436.2 282.0 L421.7 279.2 L407.3 277.5 L393.1 276.9 L379.2 277.4 L365.6 279.0 L352.5 281.7 L340.0 285.4 L328.0 290.2 L316.8 296.0 L306.3 302.8 L296.6 310.5 L287.8 319.2 L280.0 328.6 L273.1 338.9 L267.3 349.8 L262.5 361.5 L258.8 373.7 L256.3 386.4 L254.8 399.5 L254.6 413.0 L255.4 426.7 L257.4 440.6 L260.5 454.6 L264.8 468.6 L270.1 482.6 Z"/><path d="M283.6 494.4 L291.2 507.9 L299.7 521.0 L309.2 533.6 L319.6 545.8 L330.7 557.4 L342.6 568.4 L355.2 578.7 L368.4 588.1 L382.1 596.8 L396.2 604.5 L410.7 611.3 L425.4 617.1 L440.2 622.0 L455.1 625.7 L470.0 628.4 L484.8 630.0 L499.4 630.6 L513.7 630.0 L527.6 628.3 L541.0 625.6 L553.9 621.7 L566.1 616.9 L577.7 611.0 L588.4 604.1 L598.3 596.3 L607.3 587.7 L615.4 578.2 L622.4 567.9 L628.4 556.9 L633.3 545.2 L637.0 533.0 L639.6 520.3 L641.1 507.2 L641.4 493.7 L640.5 480.0 L638.4 466.1 L635.2 452.1 L630.9 438.2 L625.4 424.3 L618.9 410.6 L611.3 397.1 L602.8 384.0 L593.3 371.4 L582.9 359.2 L571.8 347.6 L559.9 336.6 L547.3 326.3 L534.1 316.9 L520.4 308.2 L506.3 300.5 L491.8 293.7 L477.1 287.9 L462.3 283.0 L447.4 279.3 L432.5 276.6 L417.7 275.0 L403.1 274.4 L388.8 275.0 L374.9 276.7 L361.5 279.4 L348.6 283.3 L336.4 288.1 L324.8 294.0 L314.1 300.9 L304.2 308.7 L295.2 317.3 L287.1 326.8 L280.1 337.1 L274.1 348.1 L269.2 359.8 L265.5 372.0 L262.9 384.7 L261.4 397.8 L261.1 411.3 L262.0 425.0 L264.1 438.9 L267.3 452.9 L271.6 466.8 L277.1 480.7 Z"/><path d="M290.9 492.5 L298.6 505.9 L307.4 518.9 L317.1 531.5 L327.8 543.6 L339.2 555.1 L351.4 566.0 L364.3 576.2 L377.8 585.6 L391.9 594.1 L406.3 601.7 L421.2 608.4 L436.2 614.2 L451.5 618.9 L466.8 622.6 L482.1 625.2 L497.2 626.7 L512.2 627.1 L526.8 626.4 L541.0 624.7 L554.8 621.8 L568.0 617.9 L580.5 613.0 L592.4 607.1 L603.4 600.1 L613.5 592.3 L622.7 583.6 L631.0 574.0 L638.2 563.7 L644.3 552.7 L649.3 541.0 L653.1 528.8 L655.8 516.1 L657.2 503.0 L657.5 489.5 L656.6 475.8 L654.5 461.9 L651.2 448.0 L646.7 434.1 L641.1 420.2 L634.4 406.6 L626.6 393.2 L617.9 380.2 L608.1 367.6 L597.5 355.4 L586.0 343.9 L573.8 333.0 L560.9 322.9 L547.4 313.5 L533.4 305.0 L518.9 297.3 L504.1 290.6 L489.0 284.9 L473.8 280.2 L458.5 276.5 L443.2 273.9 L428.0 272.4 L413.1 272.0 L398.5 272.6 L384.2 274.4 L370.4 277.2 L357.3 281.1 L344.7 286.1 L332.9 292.0 L321.9 298.9 L311.7 306.8 L302.5 315.5 L294.3 325.1 L287.1 335.4 L281.0 346.4 L276.0 358.1 L272.1 370.3 L269.5 383.0 L268.0 396.1 L267.7 409.6 L268.7 423.3 L270.8 437.1 L274.1 451.1 L278.6 465.0 L284.2 478.8 Z"/><path d="M298.1 490.5 L306.1 503.9 L315.1 516.8 L325.1 529.4 L336.0 541.4 L347.7 552.8 L360.2 563.6 L373.5 573.7 L387.3 583.0 L401.7 591.4 L416.5 599.0 L431.7 605.6 L447.1 611.2 L462.7 615.8 L478.4 619.4 L494.1 621.9 L509.6 623.3 L524.9 623.7 L539.9 622.9 L554.5 621.1 L568.6 618.1 L582.1 614.2 L594.9 609.2 L607.0 603.1 L618.3 596.2 L628.7 588.3 L638.1 579.5 L646.5 569.9 L653.9 559.5 L660.1 548.5 L665.2 536.8 L669.1 524.6 L671.9 511.8 L673.4 498.7 L673.6 485.3 L672.7 471.6 L670.5 457.8 L667.1 443.9 L662.5 430.0 L656.7 416.2 L649.9 402.6 L641.9 389.3 L632.9 376.3 L622.9 363.8 L612.0 351.7 L600.3 340.3 L587.8 329.5 L574.5 319.4 L560.7 310.2 L546.3 301.7 L531.5 294.2 L516.3 287.6 L500.9 281.9 L485.3 277.3 L469.6 273.7 L453.9 271.2 L438.4 269.8 L423.1 269.5 L408.1 270.2 L393.5 272.1 L379.4 275.0 L365.9 279.0 L353.1 284.0 L341.0 290.0 L329.7 297.0 L319.3 304.9 L309.9 313.7 L301.5 323.3 L294.1 333.6 L287.9 344.7 L282.8 356.3 L278.9 368.6 L276.1 381.3 L274.6 394.4 L274.4 407.9 L275.3 421.5 L277.5 435.4 L280.9 449.3 L285.5 463.2 L291.3 476.9 Z"/><path d="M305.4 488.6 L313.6 501.9 L322.8 514.8 L333.0 527.2 L344.2 539.2 L356.2 550.5 L369.1 561.2 L382.6 571.2 L396.8 580.4 L411.5 588.8 L426.7 596.2 L442.2 602.7 L458.0 608.3 L474.0 612.8 L490.0 616.2 L506.1 618.7 L522.0 620.0 L537.6 620.2 L553.0 619.4 L567.9 617.4 L582.3 614.4 L596.1 610.4 L609.3 605.3 L621.6 599.2 L633.2 592.2 L643.8 584.2 L653.4 575.4 L662.0 565.8 L669.6 555.4 L675.9 544.3 L681.1 532.6 L685.2 520.3 L687.9 507.6 L689.4 494.5 L689.7 481.1 L688.7 467.4 L686.5 453.6 L683.0 439.7 L678.3 425.9 L672.4 412.2 L665.3 398.6 L657.2 385.4 L647.9 372.5 L637.7 360.0 L626.6 348.0 L614.5 336.7 L601.7 326.0 L588.2 316.0 L574.0 306.8 L559.3 298.5 L544.1 291.0 L528.5 284.5 L512.7 279.0 L496.8 274.4 L480.7 271.0 L464.7 268.6 L448.8 267.2 L433.1 267.0 L417.8 267.8 L402.9 269.8 L388.4 272.8 L374.6 276.8 L361.5 281.9 L349.1 288.0 L337.6 295.0 L327.0 303.0 L317.3 311.8 L308.7 321.5 L301.2 331.8 L294.8 342.9 L289.6 354.6 L285.6 366.9 L282.8 379.6 L281.3 392.7 L281.0 406.1 L282.0 419.8 L284.3 433.6 L287.8 447.5 L292.5 461.3 L298.4 475.0 Z"/><path d="M312.8 486.6 L321.1 499.8 L330.6 512.7 L341.0 525.1 L352.5 537.0 L364.8 548.2 L377.9 558.9 L391.8 568.7 L406.3 577.8 L421.3 586.1 L436.9 593.4 L452.8 599.9 L468.9 605.3 L485.3 609.7 L501.7 613.1 L518.1 615.4 L534.3 616.6 L550.3 616.8 L566.0 615.9 L581.3 613.8 L596.0 610.7 L610.2 606.6 L623.6 601.5 L636.2 595.3 L648.0 588.2 L658.9 580.2 L668.7 571.3 L677.5 561.7 L685.2 551.2 L691.7 540.1 L697.0 528.4 L701.1 516.1 L703.9 503.4 L705.5 490.3 L705.7 476.9 L704.7 463.2 L702.4 449.5 L698.8 435.6 L694.0 421.8 L688.0 408.1 L680.7 394.6 L672.4 381.4 L662.9 368.6 L652.5 356.2 L641.0 344.3 L628.7 333.1 L615.6 322.4 L601.7 312.5 L587.2 303.4 L572.2 295.2 L556.6 287.8 L540.7 281.4 L524.6 276.0 L508.2 271.6 L491.8 268.2 L475.4 265.9 L459.2 264.6 L443.2 264.5 L427.5 265.4 L412.2 267.5 L397.5 270.5 L383.3 274.7 L369.9 279.8 L357.3 286.0 L345.5 293.1 L334.6 301.1 L324.8 310.0 L316.0 319.6 L308.3 330.1 L301.8 341.2 L296.5 352.9 L292.4 365.1 L289.6 377.9 L288.0 391.0 L287.8 404.4 L288.8 418.0 L291.1 431.8 L294.7 445.7 L299.5 459.5 L305.5 473.1 Z"/><path d="M320.1 484.7 L328.7 497.8 L338.3 510.6 L349.0 522.9 L360.7 534.7 L373.3 545.9 L386.8 556.5 L400.9 566.3 L415.8 575.3 L431.2 583.4 L447.0 590.7 L463.3 597.0 L479.8 602.3 L496.5 606.7 L513.3 609.9 L530.1 612.2 L546.7 613.3 L563.0 613.4 L579.1 612.3 L594.7 610.2 L609.7 607.1 L624.2 602.9 L637.9 597.6 L650.8 591.4 L662.8 584.2 L673.9 576.2 L684.0 567.3 L693.0 557.5 L700.8 547.1 L707.5 536.0 L712.9 524.2 L717.1 511.9 L719.9 499.2 L721.5 486.1 L721.7 472.7 L720.7 459.1 L718.3 445.3 L714.6 431.5 L709.7 417.8 L703.5 404.1 L696.1 390.7 L687.6 377.5 L677.9 364.8 L667.2 352.4 L655.5 340.6 L642.9 329.4 L629.5 318.9 L615.3 309.1 L600.5 300.1 L585.1 291.9 L569.2 284.7 L553.0 278.4 L536.4 273.0 L519.7 268.7 L502.9 265.4 L486.2 263.2 L469.6 262.1 L453.2 262.0 L437.2 263.0 L421.6 265.1 L406.5 268.3 L392.1 272.5 L378.4 277.7 L365.4 283.9 L353.4 291.1 L342.3 299.2 L332.3 308.1 L323.3 317.8 L315.4 328.3 L308.8 339.4 L303.4 351.1 L299.2 363.4 L296.3 376.1 L294.8 389.2 L294.5 402.7 L295.6 416.3 L297.9 430.0 L301.6 443.8 L306.6 457.6 L312.7 471.2 Z"/><path d="M327.5 482.7 L336.3 495.8 L346.2 508.5 L357.1 520.8 L369.0 532.5 L381.9 543.6 L395.6 554.0 L410.1 563.8 L425.3 572.7 L441.0 580.7 L457.2 587.9 L473.8 594.1 L490.7 599.4 L507.8 603.6 L524.9 606.8 L542.0 608.9 L559.0 610.0 L575.7 609.9 L592.1 608.8 L608.0 606.6 L623.4 603.4 L638.1 599.1 L652.2 593.8 L665.4 587.5 L677.6 580.3 L689.0 572.2 L699.2 563.2 L708.4 553.5 L716.4 543.0 L723.2 531.8 L728.7 520.0 L733.0 507.8 L735.9 495.0 L737.5 481.9 L737.7 468.5 L736.6 454.9 L734.2 441.2 L730.4 427.4 L725.4 413.7 L719.0 400.1 L711.5 386.7 L702.7 373.6 L692.8 360.9 L681.9 348.7 L670.0 337.0 L657.1 325.8 L643.4 315.4 L628.9 305.7 L613.7 296.7 L598.0 288.7 L581.8 281.5 L565.2 275.3 L548.3 270.1 L531.2 265.8 L514.1 262.6 L497.0 260.5 L480.0 259.5 L463.3 259.5 L446.9 260.6 L431.0 262.8 L415.6 266.0 L400.9 270.3 L386.8 275.6 L373.6 281.9 L361.4 289.1 L350.0 297.3 L339.8 306.2 L330.6 316.0 L322.6 326.5 L315.8 337.6 L310.3 349.4 L306.0 361.7 L303.1 374.4 L301.5 387.5 L301.3 400.9 L302.4 414.5 L304.8 428.2 L308.6 442.0 L313.6 455.7 L320.0 469.3 Z"/><path d="M335.0 480.7 L343.9 493.8 L354.0 506.4 L365.2 518.6 L377.4 530.2 L390.5 541.3 L404.5 551.6 L419.3 561.3 L434.8 570.1 L450.9 578.1 L467.4 585.1 L484.4 591.3 L501.6 596.4 L519.1 600.5 L536.6 603.6 L554.0 605.7 L571.3 606.6 L588.4 606.5 L605.1 605.3 L621.4 603.0 L637.1 599.7 L652.1 595.3 L666.4 590.0 L679.9 583.6 L692.4 576.4 L704.0 568.2 L714.4 559.2 L723.8 549.4 L731.9 538.8 L738.9 527.7 L744.5 515.9 L748.8 503.6 L751.8 490.8 L753.4 477.7 L753.6 464.4 L752.5 450.8 L750.0 437.1 L746.2 423.3 L741.0 409.6 L734.5 396.1 L726.8 382.8 L717.8 369.7 L707.8 357.1 L696.6 344.9 L684.4 333.3 L671.2 322.2 L657.2 311.9 L642.4 302.2 L626.9 293.4 L610.9 285.4 L594.3 278.4 L577.4 272.2 L560.1 267.1 L542.7 263.0 L525.2 259.9 L507.7 257.8 L490.4 256.9 L473.3 257.0 L456.6 258.2 L440.4 260.5 L424.7 263.8 L409.6 268.2 L395.3 273.5 L381.9 279.9 L369.3 287.1 L357.8 295.3 L347.3 304.3 L338.0 314.1 L329.8 324.7 L322.9 335.8 L317.3 347.6 L312.9 359.9 L310.0 372.7 L308.3 385.8 L308.1 399.1 L309.2 412.7 L311.7 426.4 L315.6 440.2 L320.8 453.9 L327.2 467.4 Z"/><path d="M342.4 478.7 L351.6 491.7 L361.9 504.3 L373.3 516.4 L385.7 528.0 L399.2 538.9 L413.5 549.2 L428.6 558.8 L444.3 567.5 L460.8 575.4 L477.7 582.4 L495.0 588.4 L512.6 593.5 L530.3 597.5 L548.2 600.5 L566.0 602.4 L583.7 603.3 L601.1 603.1 L618.1 601.8 L634.7 599.4 L650.7 596.0 L666.1 591.6 L680.6 586.2 L694.4 579.8 L707.2 572.4 L718.9 564.2 L729.6 555.1 L739.1 545.3 L747.5 534.7 L754.5 523.5 L760.2 511.7 L764.6 499.4 L767.7 486.7 L769.3 473.6 L769.5 460.2 L768.4 446.6 L765.8 433.0 L761.9 419.3 L756.6 405.6 L750.0 392.1 L742.1 378.8 L732.9 365.9 L722.6 353.3 L711.2 341.2 L698.8 329.6 L685.3 318.6 L671.0 308.3 L655.9 298.8 L640.2 290.1 L623.7 282.2 L606.8 275.2 L589.5 269.2 L571.9 264.1 L554.2 260.1 L536.3 257.1 L518.5 255.1 L500.8 254.3 L483.4 254.5 L466.4 255.8 L449.8 258.1 L433.8 261.5 L418.4 266.0 L403.9 271.4 L390.1 277.8 L377.3 285.2 L365.6 293.4 L354.9 302.4 L345.4 312.3 L337.0 322.8 L330.0 334.1 L324.3 345.8 L319.9 358.2 L316.8 370.9 L315.2 384.0 L315.0 397.4 L316.1 410.9 L318.7 424.6 L322.6 438.3 L327.9 452.0 L334.5 465.5 Z"/><path d="M349.9 476.7 L359.2 489.7 L369.8 502.2 L381.4 514.2 L394.1 525.7 L407.8 536.6 L422.4 546.8 L437.8 556.3 L453.9 564.9 L470.6 572.7 L487.9 579.6 L505.5 585.5 L523.5 590.5 L541.6 594.4 L559.8 597.3 L578.0 599.2 L596.0 600.0 L613.7 599.7 L631.1 598.3 L648.0 595.9 L664.3 592.4 L680.0 587.9 L694.8 582.4 L708.8 575.9 L721.9 568.5 L733.9 560.2 L744.8 551.1 L754.5 541.2 L762.9 530.6 L770.1 519.4 L775.9 507.6 L780.4 495.3 L783.5 482.5 L785.2 469.4 L785.4 456.1 L784.2 442.5 L781.6 428.9 L777.5 415.2 L772.1 401.6 L765.4 388.1 L757.3 374.9 L748.0 362.0 L737.5 349.5 L725.8 337.4 L713.1 325.9 L699.4 315.0 L684.9 304.8 L669.5 295.4 L653.3 286.7 L636.6 278.9 L619.4 272.0 L601.7 266.1 L583.8 261.1 L565.7 257.2 L547.4 254.3 L529.3 252.5 L511.3 251.7 L493.5 252.0 L476.1 253.4 L459.2 255.8 L442.9 259.3 L427.3 263.8 L412.4 269.3 L398.4 275.8 L385.4 283.2 L373.4 291.4 L362.5 300.5 L352.8 310.4 L344.3 321.0 L337.1 332.2 L331.3 344.1 L326.8 356.4 L323.8 369.1 L322.1 382.2 L321.9 395.6 L323.1 409.1 L325.7 422.8 L329.7 436.5 L335.1 450.1 L341.9 463.5 Z"/><path d="M357.5 474.7 L367.0 487.6 L377.7 500.0 L389.6 512.0 L402.5 523.5 L416.5 534.3 L431.4 544.4 L447.1 553.8 L463.5 562.3 L480.5 570.0 L498.1 576.8 L516.1 582.7 L534.4 587.5 L552.9 591.4 L571.4 594.2 L589.9 595.9 L608.3 596.6 L626.4 596.2 L644.1 594.8 L661.3 592.3 L677.9 588.7 L693.9 584.1 L709.0 578.6 L723.3 572.0 L736.6 564.6 L748.8 556.2 L759.9 547.1 L769.7 537.2 L778.4 526.5 L785.7 515.3 L791.6 503.4 L796.2 491.1 L799.3 478.4 L801.0 465.3 L801.2 451.9 L800.0 438.4 L797.3 424.8 L793.2 411.1 L787.6 397.6 L780.8 384.1 L772.5 371.0 L763.0 358.1 L752.3 345.7 L740.4 333.7 L727.5 322.3 L713.5 311.5 L698.6 301.3 L682.9 292.0 L666.5 283.4 L649.5 275.7 L631.9 268.9 L613.9 263.0 L595.6 258.2 L577.1 254.3 L558.6 251.5 L540.1 249.8 L521.7 249.1 L503.6 249.5 L485.9 250.9 L468.7 253.4 L452.1 257.0 L436.1 261.6 L421.0 267.2 L406.7 273.7 L393.4 281.1 L381.2 289.5 L370.1 298.6 L360.3 308.5 L351.6 319.2 L344.3 330.4 L338.4 342.3 L333.8 354.6 L330.7 367.3 L329.0 380.4 L328.8 393.8 L330.0 407.3 L332.7 420.9 L336.8 434.6 L342.4 448.2 L349.2 461.6 Z"/><path d="M365.0 472.7 L374.7 485.5 L385.7 497.9 L397.8 509.8 L411.0 521.2 L425.2 531.9 L440.4 542.0 L456.3 551.2 L473.1 559.7 L490.5 567.3 L508.4 574.0 L526.7 579.8 L545.3 584.6 L564.1 588.3 L583.0 591.0 L601.9 592.7 L620.6 593.3 L639.0 592.8 L657.1 591.3 L674.6 588.7 L691.5 585.1 L707.8 580.4 L723.2 574.8 L737.7 568.2 L751.2 560.7 L763.6 552.3 L774.9 543.1 L785.0 533.1 L793.8 522.5 L801.2 511.2 L807.2 499.3 L811.9 487.0 L815.0 474.2 L816.7 461.1 L817.0 447.8 L815.7 434.3 L813.0 420.7 L808.8 407.1 L803.1 393.5 L796.1 380.2 L787.7 367.1 L778.0 354.3 L767.1 341.9 L755.0 330.0 L741.8 318.6 L727.6 307.9 L712.4 297.8 L696.4 288.5 L679.7 280.1 L662.3 272.4 L644.4 265.7 L626.1 260.0 L607.4 255.2 L588.6 251.5 L569.7 248.7 L550.9 247.1 L532.2 246.5 L513.7 246.9 L495.7 248.5 L478.2 251.1 L461.2 254.7 L445.0 259.4 L429.6 265.0 L415.1 271.6 L401.5 279.1 L389.1 287.5 L377.8 296.7 L367.8 306.7 L359.0 317.3 L351.6 328.6 L345.5 340.5 L340.9 352.8 L337.7 365.6 L336.0 378.6 L335.8 392.0 L337.1 405.5 L339.8 419.1 L344.0 432.7 L349.6 446.2 L356.7 459.6 Z"/><path d="M372.6 470.7 L382.5 483.4 L393.6 495.8 L406.0 507.6 L419.4 518.9 L433.9 529.6 L449.4 539.5 L465.7 548.7 L482.7 557.1 L500.4 564.7 L518.6 571.3 L537.3 576.9 L556.2 581.6 L575.4 585.3 L594.6 587.9 L613.8 589.5 L632.9 590.0 L651.6 589.4 L670.0 587.8 L687.9 585.1 L705.1 581.4 L721.6 576.7 L737.3 571.0 L752.1 564.3 L765.8 556.8 L778.5 548.3 L790.0 539.1 L800.2 529.1 L809.1 518.4 L816.7 507.1 L822.8 495.2 L827.5 482.9 L830.7 470.1 L832.5 457.0 L832.7 443.7 L831.4 430.2 L828.6 416.6 L824.3 403.0 L818.6 389.5 L811.4 376.2 L802.9 363.2 L793.0 350.4 L781.9 338.1 L769.5 326.2 L756.1 315.0 L741.6 304.3 L726.1 294.3 L709.8 285.1 L692.8 276.7 L675.1 269.2 L656.9 262.6 L638.2 256.9 L619.3 252.2 L600.1 248.6 L580.9 245.9 L561.7 244.4 L542.6 243.9 L523.9 244.4 L505.5 246.0 L487.6 248.7 L470.4 252.4 L453.9 257.2 L438.2 262.9 L423.4 269.5 L409.7 277.1 L397.0 285.5 L385.5 294.8 L375.3 304.8 L366.4 315.5 L358.8 326.8 L352.7 338.6 L348.0 351.0 L344.8 363.7 L343.0 376.8 L342.8 390.2 L344.1 403.7 L346.9 417.2 L351.2 430.8 L356.9 444.3 L364.1 457.6 Z"/><path d="M380.3 468.7 L390.3 481.4 L401.7 493.6 L414.2 505.4 L427.9 516.6 L442.7 527.2 L458.4 537.1 L475.0 546.2 L492.3 554.5 L510.3 562.0 L528.9 568.5 L547.9 574.1 L567.2 578.7 L586.7 582.2 L606.3 584.8 L625.8 586.3 L645.2 586.7 L664.2 586.0 L682.9 584.3 L701.1 581.6 L718.6 577.8 L735.4 573.0 L751.4 567.2 L766.4 560.5 L780.4 552.9 L793.3 544.4 L805.0 535.1 L815.4 525.1 L824.4 514.3 L832.1 503.0 L838.4 491.1 L843.1 478.8 L846.4 466.0 L848.2 452.9 L848.4 439.6 L847.0 426.1 L844.2 412.6 L839.8 399.0 L834.0 385.6 L826.7 372.3 L818.0 359.3 L807.9 346.6 L796.6 334.3 L784.0 322.5 L770.3 311.3 L755.6 300.7 L739.9 290.8 L723.3 281.7 L705.9 273.4 L687.9 266.0 L669.4 259.4 L650.4 253.9 L631.1 249.3 L611.6 245.7 L592.0 243.2 L572.5 241.7 L553.1 241.3 L534.0 241.9 L515.3 243.6 L497.2 246.4 L479.6 250.1 L462.8 254.9 L446.9 260.7 L431.8 267.4 L417.8 275.1 L405.0 283.6 L393.3 292.8 L382.9 302.9 L373.8 313.6 L366.1 324.9 L359.9 336.8 L355.1 349.2 L351.8 361.9 L350.1 375.0 L349.9 388.3 L351.2 401.8 L354.1 415.4 L358.4 428.9 L364.3 442.4 L371.6 455.7 Z"/><path d="M388.0 466.6 L398.2 479.3 L409.7 491.5 L422.5 503.2 L436.5 514.3 L451.5 524.8 L467.5 534.6 L484.3 543.7 L502.0 551.9 L520.3 559.3 L539.2 565.7 L558.5 571.2 L578.1 575.7 L598.0 579.2 L617.9 581.6 L637.7 583.0 L657.4 583.4 L676.8 582.6 L695.8 580.8 L714.3 578.0 L732.2 574.2 L749.2 569.3 L765.5 563.4 L780.7 556.7 L795.0 549.0 L808.1 540.4 L819.9 531.1 L830.5 521.0 L839.7 510.3 L847.5 498.9 L853.9 487.0 L858.7 474.7 L862.0 461.9 L863.8 448.8 L864.0 435.5 L862.6 422.0 L859.7 408.5 L855.3 395.0 L849.3 381.6 L841.9 368.3 L833.0 355.4 L822.8 342.7 L811.3 330.5 L798.5 318.8 L784.5 307.7 L769.5 297.2 L753.5 287.4 L736.7 278.3 L719.0 270.1 L700.7 262.7 L681.8 256.3 L662.5 250.8 L642.9 246.3 L623.0 242.8 L603.1 240.4 L583.3 239.0 L563.6 238.6 L544.2 239.4 L525.2 241.2 L506.7 244.0 L488.8 247.8 L471.8 252.7 L455.5 258.6 L440.3 265.3 L426.0 273.0 L412.9 281.6 L401.1 290.9 L390.5 301.0 L381.3 311.7 L373.5 323.1 L367.1 335.0 L362.3 347.3 L359.0 360.1 L357.2 373.2 L357.0 386.5 L358.4 400.0 L361.3 413.5 L365.7 427.0 L371.7 440.4 L379.1 453.7 Z"/><path d="M395.7 464.6 L406.1 477.2 L417.8 489.3 L430.8 501.0 L445.0 512.0 L460.3 522.5 L476.5 532.2 L493.7 541.2 L511.6 549.3 L530.3 556.6 L549.5 562.9 L569.1 568.3 L589.1 572.7 L609.2 576.1 L629.5 578.5 L649.7 579.8 L669.7 580.1 L689.4 579.2 L708.7 577.4 L727.5 574.5 L745.7 570.5 L763.0 565.6 L779.5 559.7 L795.0 552.8 L809.5 545.1 L822.8 536.5 L834.8 527.1 L845.6 517.0 L855.0 506.3 L862.9 494.9 L869.3 483.0 L874.3 470.6 L877.6 457.8 L879.4 444.7 L879.6 431.4 L878.2 418.0 L875.2 404.5 L870.7 391.0 L864.6 377.6 L857.1 364.4 L848.1 351.5 L837.6 338.9 L825.9 326.8 L812.9 315.1 L798.7 304.0 L783.5 293.6 L767.2 283.9 L750.1 274.9 L732.1 266.8 L713.5 259.5 L694.3 253.1 L674.6 247.7 L654.7 243.3 L634.5 239.9 L614.3 237.6 L594.1 236.3 L574.1 236.0 L554.3 236.8 L535.0 238.7 L516.2 241.6 L498.1 245.5 L480.7 250.5 L464.2 256.4 L448.7 263.2 L434.3 271.0 L421.0 279.5 L408.9 288.9 L398.2 299.0 L388.8 309.8 L380.9 321.2 L374.4 333.1 L369.5 345.5 L366.1 358.3 L364.3 371.3 L364.2 384.6 L365.5 398.1 L368.5 411.6 L373.0 425.1 L379.1 438.5 L386.7 451.7 Z"/><path d="M403.5 462.5 L414.0 475.0 L426.0 487.1 L439.2 498.7 L453.6 509.7 L469.1 520.1 L485.6 529.7 L503.1 538.6 L521.3 546.7 L540.3 553.9 L559.8 560.1 L579.7 565.4 L600.0 569.8 L620.5 573.1 L641.1 575.4 L661.6 576.6 L682.0 576.7 L702.0 575.9 L721.6 573.9 L740.7 570.9 L759.1 566.9 L776.8 561.9 L793.5 555.9 L809.3 549.0 L824.0 541.2 L837.5 532.6 L849.7 523.2 L860.6 513.0 L870.2 502.2 L878.2 490.8 L884.7 478.9 L889.7 466.5 L893.1 453.7 L895.0 440.7 L895.1 427.4 L893.7 413.9 L890.7 400.4 L886.1 387.0 L879.9 373.6 L872.2 360.5 L863.0 347.6 L852.5 335.1 L840.5 323.0 L827.3 311.4 L812.9 300.4 L797.4 290.1 L780.9 280.4 L763.4 271.5 L745.2 263.5 L726.2 256.3 L706.7 250.0 L686.8 244.7 L666.5 240.4 L646.0 237.1 L625.4 234.8 L604.9 233.6 L584.5 233.4 L564.5 234.3 L544.9 236.2 L525.8 239.2 L507.4 243.2 L489.7 248.2 L473.0 254.2 L457.2 261.1 L442.5 268.9 L429.0 277.5 L416.8 286.9 L405.9 297.1 L396.3 307.9 L388.3 319.3 L381.8 331.3 L376.8 343.6 L373.4 356.4 L371.5 369.5 L371.4 382.8 L372.8 396.2 L375.8 409.7 L380.4 423.2 L386.6 436.5 L394.3 449.6 Z"/><path d="M411.3 460.4 L422.0 472.9 L434.1 484.9 L447.6 496.5 L462.2 507.4 L478.0 517.7 L494.8 527.3 L512.5 536.1 L531.0 544.1 L550.3 551.2 L570.1 557.3 L590.4 562.6 L611.0 566.8 L631.8 570.0 L652.7 572.2 L673.5 573.4 L694.2 573.4 L714.6 572.5 L734.5 570.4 L753.9 567.4 L772.6 563.3 L790.5 558.2 L807.5 552.2 L823.5 545.2 L838.4 537.4 L852.1 528.7 L864.6 519.3 L875.7 509.1 L885.3 498.2 L893.5 486.8 L900.1 474.8 L905.2 462.4 L908.6 449.7 L910.5 436.6 L910.6 423.3 L909.2 409.9 L906.1 396.4 L901.4 383.0 L895.1 369.7 L887.3 356.6 L878.0 343.8 L867.2 331.3 L855.1 319.3 L841.7 307.7 L827.0 296.8 L811.3 286.5 L794.5 276.9 L776.7 268.1 L758.2 260.2 L739.0 253.1 L719.2 246.9 L698.9 241.6 L678.3 237.4 L657.5 234.2 L636.6 232.0 L615.7 230.9 L595.1 230.8 L574.7 231.7 L554.8 233.8 L535.4 236.8 L516.7 240.9 L498.8 246.0 L481.7 252.0 L465.7 259.0 L450.8 266.8 L437.1 275.5 L424.7 285.0 L413.6 295.1 L403.9 306.0 L395.8 317.4 L389.1 329.4 L384.1 341.8 L380.6 354.6 L378.8 367.6 L378.6 380.9 L380.1 394.3 L383.1 407.8 L387.8 421.2 L394.1 434.5 L401.9 447.6 Z"/><path d="M419.1 458.4 L430.0 470.8 L442.4 482.8 L456.0 494.2 L470.9 505.1 L486.9 515.3 L503.9 524.8 L521.9 533.5 L540.8 541.4 L560.3 548.5 L580.4 554.6 L601.0 559.7 L621.9 563.9 L643.1 567.0 L664.3 569.1 L685.4 570.1 L706.4 570.1 L727.1 569.1 L747.3 567.0 L767.0 563.9 L786.0 559.7 L804.2 554.6 L821.5 548.5 L837.7 541.4 L852.8 533.5 L866.8 524.8 L879.4 515.3 L890.6 505.1 L900.4 494.2 L908.7 482.8 L915.4 470.8 L920.6 458.4 L924.1 445.6 L925.9 432.5 L926.1 419.3 L924.6 405.9 L921.5 392.4 L916.7 379.0 L910.3 365.8 L902.4 352.7 L892.9 339.9 L882.0 327.5 L869.6 315.5 L856.0 304.1 L841.1 293.2 L825.1 283.0 L808.1 273.5 L790.1 264.8 L771.2 256.9 L751.7 249.8 L731.6 243.7 L711.0 238.6 L690.1 234.4 L668.9 231.3 L647.7 229.2 L626.6 228.1 L605.6 228.1 L584.9 229.2 L564.7 231.3 L545.0 234.4 L526.0 238.6 L507.8 243.7 L490.5 249.8 L474.3 256.8 L459.2 264.7 L445.2 273.5 L432.6 283.0 L421.4 293.2 L411.6 304.1 L403.3 315.5 L396.6 327.5 L391.4 339.9 L387.9 352.7 L386.1 365.7 L385.9 379.0 L387.4 392.4 L390.5 405.9 L395.3 419.2 L401.7 432.5 L409.6 445.6 Z"/><path d="M427.0 456.3 L438.1 468.6 L450.6 480.6 L464.5 491.9 L479.6 502.8 L495.8 512.9 L513.1 522.3 L531.4 531.0 L550.5 538.8 L570.3 545.7 L590.8 551.8 L611.6 556.8 L632.9 560.9 L654.3 563.9 L675.9 566.0 L697.4 566.9 L718.7 566.9 L739.6 565.7 L760.2 563.5 L780.1 560.3 L799.4 556.1 L817.8 550.9 L835.4 544.7 L851.9 537.7 L867.2 529.7 L881.3 520.9 L894.1 511.4 L905.5 501.1 L915.5 490.2 L923.9 478.8 L930.7 466.8 L935.9 454.4 L939.4 441.6 L941.3 428.5 L941.5 415.2 L940.0 401.9 L936.8 388.4 L931.9 375.1 L925.4 361.8 L917.4 348.8 L907.8 336.1 L896.7 323.7 L884.1 311.8 L870.3 300.4 L855.2 289.6 L838.9 279.5 L821.6 270.0 L803.4 261.4 L784.2 253.6 L764.4 246.6 L744.0 240.6 L723.1 235.5 L701.9 231.5 L680.4 228.4 L658.9 226.4 L637.4 225.4 L616.1 225.5 L595.1 226.6 L574.6 228.8 L554.6 232.0 L535.4 236.2 L516.9 241.5 L499.4 247.6 L482.9 254.7 L467.5 262.6 L453.4 271.4 L440.6 281.0 L429.2 291.2 L419.3 302.1 L410.9 313.6 L404.1 325.6 L398.9 338.0 L395.3 350.8 L393.4 363.9 L393.3 377.1 L394.8 390.5 L398.0 403.9 L402.8 417.3 L409.3 430.5 L417.4 443.5 Z"/><path d="M434.9 454.2 L446.2 466.5 L458.9 478.3 L473.0 489.7 L488.3 500.4 L504.8 510.5 L522.3 519.9 L540.9 528.4 L560.3 536.2 L580.4 543.0 L601.1 549.0 L622.3 553.9 L643.9 557.9 L665.6 560.9 L687.5 562.8 L709.3 563.7 L730.9 563.6 L752.1 562.4 L773.0 560.1 L793.2 556.8 L812.8 552.5 L831.5 547.3 L849.3 541.0 L866.0 533.9 L881.6 525.9 L895.9 517.1 L908.8 507.5 L920.4 497.2 L930.5 486.3 L939.0 474.8 L945.9 462.8 L951.2 450.3 L954.8 437.5 L956.7 424.5 L956.8 411.2 L955.3 397.9 L952.0 384.5 L947.1 371.1 L940.5 357.9 L932.3 344.9 L922.6 332.3 L911.3 319.9 L898.6 308.1 L884.5 296.8 L869.2 286.0 L852.7 275.9 L835.2 266.6 L816.6 258.0 L797.2 250.3 L777.1 243.4 L756.4 237.5 L735.2 232.5 L713.6 228.5 L691.9 225.5 L670.0 223.6 L648.2 222.7 L626.6 222.9 L605.4 224.1 L584.5 226.3 L564.3 229.6 L544.7 233.9 L526.0 239.2 L508.2 245.4 L491.5 252.5 L475.9 260.5 L461.6 269.4 L448.7 278.9 L437.1 289.2 L427.0 300.2 L418.5 311.7 L411.6 323.7 L406.3 336.1 L402.7 348.9 L400.8 361.9 L400.7 375.2 L402.2 388.6 L405.5 402.0 L410.4 415.3 L417.0 428.5 L425.2 441.5 Z"/><path d="M442.9 452.1 L454.3 464.3 L467.2 476.1 L481.5 487.4 L497.0 498.1 L513.8 508.1 L531.6 517.4 L550.4 525.9 L570.1 533.5 L590.5 540.3 L611.5 546.2 L633.0 551.1 L654.8 555.0 L676.9 557.9 L699.1 559.7 L721.2 560.5 L743.1 560.3 L764.6 559.0 L785.8 556.7 L806.3 553.3 L826.1 549.0 L845.1 543.6 L863.1 537.3 L880.1 530.1 L895.8 522.1 L910.4 513.2 L923.5 503.6 L935.2 493.3 L945.4 482.3 L954.1 470.8 L961.1 458.8 L966.4 446.3 L970.1 433.5 L972.0 420.5 L972.1 407.2 L970.6 393.9 L967.3 380.5 L962.2 367.2 L955.6 354.0 L947.2 341.1 L937.3 328.4 L925.9 316.2 L913.0 304.4 L898.8 293.1 L883.2 282.4 L866.5 272.4 L848.7 263.1 L829.9 254.6 L810.2 247.0 L789.8 240.2 L768.8 234.3 L747.3 229.4 L725.4 225.5 L703.3 222.6 L681.2 220.8 L659.1 220.0 L637.2 220.2 L615.6 221.5 L594.5 223.8 L574.0 227.2 L554.1 231.5 L535.2 236.9 L517.1 243.2 L500.2 250.4 L484.4 258.4 L469.9 267.3 L456.7 276.9 L445.0 287.2 L434.8 298.2 L426.2 309.7 L419.2 321.7 L413.8 334.2 L410.2 347.0 L408.3 360.0 L408.1 373.3 L409.7 386.6 L413.0 400.0 L418.0 413.3 L424.7 426.5 L433.0 439.4 Z"/><path d="M450.9 449.9 L462.5 462.1 L475.6 473.9 L490.1 485.1 L505.8 495.7 L522.8 505.7 L540.9 514.9 L559.9 523.3 L579.9 530.9 L600.6 537.6 L621.9 543.4 L643.7 548.2 L665.8 552.0 L688.2 554.8 L710.6 556.6 L733.0 557.3 L755.3 557.0 L777.1 555.6 L798.5 553.2 L819.3 549.8 L839.4 545.4 L858.7 540.0 L876.9 533.6 L894.1 526.4 L910.1 518.3 L924.8 509.4 L938.1 499.7 L950.0 489.4 L960.4 478.4 L969.1 466.8 L976.2 454.8 L981.6 442.3 L985.3 429.5 L987.2 416.5 L987.4 403.3 L985.8 389.9 L982.4 376.6 L977.3 363.3 L970.5 350.2 L962.1 337.2 L952.1 324.6 L940.5 312.4 L927.4 300.7 L912.9 289.5 L897.2 278.9 L880.2 268.9 L862.1 259.7 L843.1 251.3 L823.1 243.7 L802.4 237.0 L781.1 231.2 L759.3 226.4 L737.2 222.6 L714.8 219.8 L692.4 218.0 L670.0 217.2 L647.7 217.6 L625.9 218.9 L604.5 221.3 L583.7 224.8 L563.6 229.2 L544.3 234.6 L526.1 240.9 L508.9 248.2 L492.9 256.3 L478.2 265.2 L464.9 274.9 L453.0 285.2 L442.6 296.2 L433.9 307.7 L426.8 319.8 L421.4 332.2 L417.7 345.0 L415.8 358.1 L415.6 371.3 L417.2 384.7 L420.6 398.0 L425.7 411.3 L432.5 424.4 L440.9 437.3 Z"/><path d="M459.0 447.8 L470.8 459.9 L484.0 471.6 L498.7 482.8 L514.7 493.3 L531.9 503.2 L550.2 512.4 L569.5 520.7 L589.7 528.2 L610.7 534.9 L632.3 540.6 L654.3 545.3 L676.8 549.0 L699.5 551.8 L722.2 553.5 L744.9 554.1 L767.4 553.7 L789.6 552.3 L811.3 549.8 L832.4 546.3 L852.7 541.8 L872.2 536.4 L890.7 530.0 L908.1 522.7 L924.3 514.5 L939.2 505.6 L952.7 495.8 L964.7 485.5 L975.2 474.4 L984.1 462.9 L991.3 450.8 L996.7 438.4 L1000.4 425.6 L1002.4 412.5 L1002.5 399.3 L1000.9 386.0 L997.5 372.6 L992.4 359.4 L985.5 346.3 L976.9 333.4 L966.7 320.9 L955.0 308.7 L941.7 297.0 L927.1 285.8 L911.1 275.3 L893.9 265.4 L875.6 256.3 L856.3 247.9 L836.0 240.4 L815.1 233.8 L793.5 228.1 L771.4 223.3 L749.0 219.6 L726.3 216.9 L703.5 215.2 L680.8 214.5 L658.3 214.9 L636.2 216.4 L614.5 218.8 L593.4 222.3 L573.0 226.8 L553.5 232.3 L535.0 238.7 L517.6 246.0 L501.4 254.1 L486.5 263.1 L473.0 272.8 L461.0 283.2 L450.5 294.2 L441.7 305.8 L434.5 317.8 L429.0 330.3 L425.3 343.1 L423.4 356.1 L423.2 369.4 L424.8 382.7 L428.2 396.0 L433.4 409.3 L440.3 422.4 L448.8 435.2 Z"/><path d="M467.2 445.6 L479.1 457.7 L492.5 469.4 L507.3 480.5 L523.5 491.0 L541.0 500.8 L559.5 509.9 L579.1 518.2 L599.6 525.6 L620.8 532.1 L642.7 537.8 L665.0 542.4 L687.8 546.1 L710.8 548.7 L733.8 550.4 L756.8 550.9 L779.6 550.5 L802.0 548.9 L824.0 546.4 L845.4 542.8 L866.0 538.3 L885.7 532.8 L904.4 526.3 L922.1 518.9 L938.5 510.7 L953.6 501.7 L967.2 492.0 L979.4 481.6 L990.0 470.5 L999.0 458.9 L1006.3 446.9 L1011.8 434.4 L1015.5 421.6 L1017.5 408.5 L1017.7 395.3 L1016.0 382.0 L1012.6 368.7 L1007.3 355.5 L1000.3 342.4 L991.7 329.6 L981.3 317.1 L969.4 305.0 L956.0 293.3 L941.2 282.2 L925.0 271.7 L907.5 261.9 L889.0 252.8 L869.4 244.6 L848.9 237.1 L827.7 230.6 L805.8 224.9 L783.5 220.3 L760.7 216.6 L737.7 214.0 L714.7 212.4 L691.7 211.8 L668.9 212.3 L646.5 213.8 L624.5 216.3 L603.1 219.9 L582.5 224.4 L562.8 230.0 L544.1 236.4 L526.4 243.8 L510.0 252.0 L494.9 261.0 L481.3 270.7 L469.1 281.1 L458.5 292.2 L449.5 303.8 L442.2 315.8 L436.7 328.3 L433.0 341.1 L431.0 354.2 L430.8 367.4 L432.5 380.7 L435.9 394.0 L441.2 407.2 L448.2 420.3 L456.8 433.1 Z"/><path d="M475.3 443.5 L487.4 455.5 L501.0 467.1 L516.1 478.2 L532.4 488.6 L550.1 498.3 L568.9 507.4 L588.7 515.6 L609.4 522.9 L631.0 529.4 L653.1 535.0 L675.8 539.5 L698.8 543.1 L722.0 545.7 L745.4 547.2 L768.7 547.7 L791.7 547.2 L814.5 545.6 L836.7 543.0 L858.3 539.4 L879.2 534.7 L899.2 529.2 L918.2 522.6 L936.0 515.2 L952.6 507.0 L967.9 497.9 L981.7 488.2 L994.0 477.7 L1004.8 466.6 L1013.8 455.0 L1021.2 442.9 L1026.8 430.5 L1030.6 417.6 L1032.6 404.6 L1032.7 391.4 L1031.0 378.1 L1027.5 364.8 L1022.2 351.6 L1015.2 338.6 L1006.4 325.8 L995.9 313.3 L983.8 301.3 L970.2 289.7 L955.2 278.6 L938.8 268.2 L921.2 258.4 L902.4 249.4 L882.5 241.2 L861.8 233.9 L840.3 227.4 L818.1 221.8 L795.5 217.2 L772.5 213.7 L749.2 211.1 L725.9 209.5 L702.6 209.0 L679.5 209.6 L656.8 211.2 L634.5 213.8 L612.9 217.4 L592.0 222.0 L572.1 227.6 L553.1 234.2 L535.3 241.6 L518.6 249.8 L503.4 258.8 L489.5 268.6 L477.2 279.1 L466.5 290.2 L457.4 301.8 L450.1 313.9 L444.5 326.3 L440.7 339.1 L438.7 352.2 L438.5 365.4 L440.2 378.7 L443.7 392.0 L449.0 405.2 L456.1 418.2 L464.9 431.0 Z"/><path d="M483.6 441.3 L495.8 453.3 L509.6 464.8 L524.8 475.8 L541.4 486.2 L559.3 495.9 L578.3 504.8 L598.4 513.0 L619.4 520.3 L641.1 526.7 L663.5 532.1 L686.5 536.7 L709.8 540.2 L733.3 542.7 L757.0 544.1 L780.5 544.6 L803.9 543.9 L826.9 542.3 L849.4 539.6 L871.3 535.9 L892.4 531.2 L912.6 525.6 L931.8 519.0 L949.9 511.5 L966.7 503.2 L982.1 494.2 L996.1 484.3 L1008.6 473.8 L1019.5 462.8 L1028.6 451.1 L1036.1 439.0 L1041.7 426.5 L1045.6 413.7 L1047.6 400.7 L1047.7 387.5 L1046.0 374.2 L1042.5 360.9 L1037.1 347.8 L1029.9 334.8 L1021.0 322.0 L1010.4 309.6 L998.2 297.6 L984.4 286.0 L969.2 275.0 L952.6 264.7 L934.7 255.0 L915.7 246.0 L895.6 237.9 L874.6 230.6 L852.9 224.2 L830.5 218.7 L807.5 214.2 L784.2 210.7 L760.7 208.2 L737.0 206.7 L713.5 206.3 L690.1 206.9 L667.1 208.6 L644.6 211.3 L622.7 215.0 L601.6 219.6 L581.4 225.3 L562.2 231.9 L544.1 239.3 L527.3 247.6 L511.9 256.7 L497.9 266.5 L485.4 277.0 L474.5 288.1 L465.4 299.7 L457.9 311.8 L452.3 324.3 L448.4 337.1 L446.4 350.2 L446.3 363.4 L448.0 376.7 L451.5 389.9 L456.9 403.1 L464.1 416.1 L473.0 428.9 Z"/><path d="M491.9 439.1 L504.3 451.1 L518.2 462.5 L533.6 473.5 L550.4 483.8 L568.5 493.4 L587.7 502.3 L608.1 510.4 L629.3 517.6 L651.3 523.9 L674.0 529.3 L697.2 533.8 L720.8 537.2 L744.6 539.6 L768.5 541.0 L792.4 541.4 L816.0 540.7 L839.3 539.0 L862.1 536.2 L884.2 532.4 L905.6 527.7 L926.0 522.0 L945.4 515.4 L963.7 507.8 L980.7 499.5 L996.3 490.4 L1010.5 480.5 L1023.1 470.0 L1034.1 458.9 L1043.4 447.2 L1050.9 435.1 L1056.6 422.6 L1060.5 409.8 L1062.5 396.8 L1062.6 383.6 L1060.9 370.3 L1057.3 357.1 L1051.9 343.9 L1044.6 330.9 L1035.6 318.2 L1024.9 305.8 L1012.5 293.9 L998.6 282.4 L983.1 271.4 L966.3 261.1 L948.3 251.5 L929.0 242.6 L908.7 234.6 L887.5 227.3 L865.4 221.0 L842.7 215.6 L819.5 211.2 L795.9 207.7 L772.1 205.3 L748.2 203.9 L724.4 203.6 L700.7 204.2 L677.5 206.0 L654.7 208.7 L632.6 212.5 L611.2 217.2 L590.7 222.9 L571.3 229.6 L553.0 237.1 L536.0 245.4 L520.4 254.5 L506.3 264.4 L493.6 274.9 L482.7 286.0 L473.4 297.7 L465.9 309.8 L460.1 322.3 L456.3 335.1 L454.3 348.2 L454.1 361.4 L455.8 374.6 L459.4 387.9 L464.9 401.0 L472.1 414.0 L481.2 426.7 Z"/><path d="M500.2 436.9 L512.8 448.8 L526.9 460.2 L542.5 471.1 L559.5 481.4 L577.8 490.9 L597.2 499.8 L617.8 507.8 L639.3 514.9 L661.5 521.2 L684.5 526.5 L708.0 530.9 L731.8 534.2 L755.9 536.6 L780.1 537.9 L804.2 538.2 L828.1 537.4 L851.7 535.6 L874.7 532.8 L897.1 529.0 L918.7 524.2 L939.4 518.4 L959.0 511.7 L977.5 504.2 L994.7 495.8 L1010.5 486.6 L1024.8 476.7 L1037.6 466.2 L1048.6 455.0 L1058.0 443.4 L1065.6 431.2 L1071.4 418.7 L1075.3 405.9 L1077.4 392.9 L1077.5 379.7 L1075.7 366.4 L1072.1 353.2 L1066.6 340.1 L1059.2 327.2 L1050.1 314.5 L1039.3 302.1 L1026.7 290.2 L1012.6 278.8 L997.0 267.9 L980.0 257.6 L961.7 248.1 L942.3 239.2 L921.7 231.2 L900.2 224.1 L878.0 217.8 L855.0 212.5 L831.5 208.1 L807.7 204.8 L783.6 202.4 L759.4 201.1 L735.3 200.8 L711.4 201.6 L687.8 203.4 L664.8 206.2 L642.4 210.0 L620.8 214.8 L600.1 220.6 L580.5 227.3 L562.0 234.8 L544.8 243.2 L529.0 252.4 L514.7 262.3 L501.9 272.8 L490.9 284.0 L481.5 295.6 L473.9 307.8 L468.1 320.3 L464.2 333.1 L462.1 346.1 L462.0 359.3 L463.8 372.6 L467.4 385.8 L472.9 398.9 L480.3 411.8 L489.4 424.5 Z"/><path d="M508.7 434.6 L521.3 446.5 L535.6 457.9 L551.4 468.8 L568.6 479.0 L587.1 488.5 L606.8 497.2 L627.5 505.2 L649.3 512.2 L671.8 518.4 L695.0 523.7 L718.7 528.0 L742.9 531.3 L767.2 533.6 L791.7 534.8 L816.0 535.0 L840.2 534.2 L864.0 532.3 L887.3 529.4 L909.9 525.6 L931.8 520.7 L952.7 514.9 L972.5 508.1 L991.2 500.5 L1008.6 492.1 L1024.6 482.9 L1039.0 473.0 L1051.9 462.4 L1063.1 451.2 L1072.6 439.5 L1080.3 427.4 L1086.1 414.9 L1090.1 402.0 L1092.1 389.0 L1092.3 375.8 L1090.5 362.6 L1086.8 349.4 L1081.2 336.3 L1073.8 323.4 L1064.6 310.7 L1053.6 298.4 L1040.9 286.5 L1026.7 275.1 L1010.9 264.3 L993.7 254.1 L975.2 244.6 L955.5 235.9 L934.7 227.9 L913.0 220.8 L890.5 214.6 L867.3 209.4 L843.5 205.1 L819.4 201.8 L795.0 199.5 L770.6 198.3 L746.2 198.1 L722.0 198.9 L698.2 200.7 L675.0 203.6 L652.3 207.5 L630.5 212.4 L609.6 218.2 L589.7 224.9 L571.0 232.5 L553.7 241.0 L537.7 250.2 L523.2 260.1 L510.3 270.7 L499.1 281.9 L489.6 293.6 L481.9 305.7 L476.1 318.2 L472.2 331.0 L470.1 344.1 L470.0 357.2 L471.8 370.5 L475.5 383.7 L481.0 396.8 L488.5 409.7 L497.7 422.3 Z"/><path d="M517.2 432.4 L530.0 444.2 L544.4 455.6 L560.3 466.4 L577.7 476.5 L596.4 486.0 L616.3 494.7 L637.3 502.5 L659.3 509.6 L682.1 515.7 L705.5 520.9 L729.5 525.1 L753.9 528.3 L778.5 530.5 L803.2 531.7 L827.9 531.8 L852.3 531.0 L876.3 529.0 L899.9 526.1 L922.7 522.1 L944.8 517.2 L966.0 511.3 L986.0 504.5 L1004.9 496.9 L1022.4 488.4 L1038.6 479.2 L1053.2 469.2 L1066.2 458.6 L1077.6 447.4 L1087.1 435.7 L1094.9 423.5 L1100.8 411.0 L1104.8 398.2 L1106.9 385.2 L1107.0 372.0 L1105.2 358.8 L1101.4 345.6 L1095.8 332.5 L1088.3 319.6 L1078.9 307.0 L1067.8 294.7 L1055.0 282.9 L1040.6 271.6 L1024.7 260.8 L1007.3 250.6 L988.6 241.2 L968.7 232.5 L947.7 224.6 L925.7 217.6 L902.9 211.5 L879.5 206.3 L855.5 202.0 L831.1 198.8 L806.5 196.6 L781.8 195.4 L757.1 195.3 L732.7 196.2 L708.7 198.1 L685.1 201.1 L662.3 205.0 L640.2 209.9 L619.0 215.8 L599.0 222.6 L580.1 230.3 L562.6 238.7 L546.4 248.0 L531.8 257.9 L518.8 268.5 L507.4 279.7 L497.9 291.5 L490.1 303.6 L484.2 316.1 L480.2 329.0 L478.1 342.0 L478.0 355.2 L479.8 368.4 L483.6 381.6 L489.2 394.6 L496.7 407.5 L506.1 420.1 Z"/><path d="M525.7 430.1 L538.7 441.9 L553.2 453.2 L569.3 464.0 L586.9 474.1 L605.8 483.4 L625.9 492.1 L647.2 499.9 L669.3 506.9 L692.4 512.9 L716.1 518.1 L740.3 522.2 L764.9 525.4 L789.8 527.5 L814.8 528.6 L839.7 528.7 L864.3 527.7 L888.6 525.7 L912.4 522.7 L935.5 518.7 L957.8 513.7 L979.2 507.8 L999.4 501.0 L1018.5 493.3 L1036.2 484.7 L1052.6 475.5 L1067.3 465.5 L1080.5 454.8 L1091.9 443.6 L1101.6 431.9 L1109.4 419.7 L1115.4 407.2 L1119.4 394.4 L1121.5 381.3 L1121.6 368.2 L1119.8 355.0 L1116.0 341.8 L1110.3 328.7 L1102.7 315.9 L1093.2 303.3 L1082.0 291.1 L1069.1 279.3 L1054.5 268.0 L1038.4 257.2 L1020.8 247.2 L1001.9 237.8 L981.8 229.1 L960.6 221.3 L938.4 214.3 L915.4 208.3 L891.7 203.2 L867.5 199.0 L842.8 195.9 L817.9 193.7 L793.0 192.6 L768.1 192.5 L743.4 193.5 L719.1 195.5 L695.3 198.5 L672.2 202.5 L649.9 207.5 L628.6 213.4 L608.3 220.2 L589.2 227.9 L571.5 236.5 L555.2 245.8 L540.4 255.7 L527.3 266.4 L515.8 277.6 L506.2 289.3 L498.3 301.5 L492.4 314.0 L488.4 326.9 L486.3 339.9 L486.1 353.0 L488.0 366.3 L491.8 379.4 L497.5 392.5 L505.1 405.3 L514.5 417.9 Z"/><path d="M534.4 427.9 L547.4 439.6 L562.2 450.9 L578.4 461.6 L596.2 471.6 L615.3 480.9 L635.6 489.5 L657.0 497.3 L679.4 504.2 L702.7 510.2 L726.6 515.2 L751.1 519.3 L776.0 522.4 L801.1 524.5 L826.3 525.5 L851.5 525.5 L876.4 524.5 L900.9 522.4 L924.9 519.4 L948.3 515.3 L970.8 510.3 L992.3 504.3 L1012.8 497.4 L1032.1 489.7 L1050.0 481.1 L1066.4 471.8 L1081.4 461.8 L1094.6 451.1 L1106.2 439.8 L1115.9 428.1 L1123.9 415.9 L1129.9 403.4 L1133.9 390.5 L1136.0 377.5 L1136.1 364.4 L1134.3 351.2 L1130.5 338.0 L1124.7 325.0 L1117.0 312.2 L1107.5 299.6 L1096.1 287.4 L1083.1 275.7 L1068.3 264.4 L1052.1 253.7 L1034.3 243.7 L1015.2 234.4 L994.9 225.8 L973.5 218.0 L951.1 211.1 L927.8 205.1 L903.9 200.1 L879.4 196.0 L854.5 192.9 L829.4 190.8 L804.2 189.8 L779.0 189.8 L754.1 190.8 L729.6 192.8 L705.6 195.9 L682.2 200.0 L659.7 205.0 L638.2 211.0 L617.7 217.9 L598.4 225.6 L580.5 234.2 L564.1 243.5 L549.1 253.5 L535.9 264.2 L524.3 275.4 L514.6 287.2 L506.6 299.4 L500.6 311.9 L496.6 324.7 L494.5 337.8 L494.4 350.9 L496.2 364.1 L500.0 377.3 L505.8 390.3 L513.5 403.1 L523.0 415.7 Z"/><path d="M543.1 425.6 L556.3 437.3 L571.1 448.5 L587.6 459.1 L605.5 469.1 L624.8 478.4 L645.3 486.9 L666.9 494.6 L689.6 501.5 L713.0 507.4 L737.2 512.4 L761.9 516.4 L787.0 519.4 L812.4 521.4 L837.9 522.4 L863.2 522.4 L888.4 521.3 L913.2 519.2 L937.4 516.0 L961.0 511.9 L983.7 506.8 L1005.5 500.8 L1026.1 493.9 L1045.6 486.1 L1063.6 477.5 L1080.3 468.1 L1095.3 458.1 L1108.7 447.4 L1120.4 436.1 L1130.2 424.3 L1138.2 412.1 L1144.2 399.6 L1148.3 386.8 L1150.5 373.7 L1150.6 360.6 L1148.7 347.4 L1144.8 334.3 L1139.0 321.3 L1131.2 308.5 L1121.6 295.9 L1110.2 283.8 L1097.0 272.1 L1082.1 260.9 L1065.7 250.2 L1047.7 240.2 L1028.5 231.0 L1007.9 222.4 L986.3 214.7 L963.7 207.9 L940.2 202.0 L916.0 197.0 L891.3 192.9 L866.2 189.9 L840.8 187.9 L815.4 186.9 L790.0 187.0 L764.9 188.1 L740.1 190.2 L715.8 193.3 L692.3 197.4 L669.5 202.5 L647.8 208.6 L627.1 215.5 L607.7 223.3 L589.6 231.9 L573.0 241.2 L557.9 251.3 L544.5 262.0 L532.9 273.3 L523.0 285.0 L515.1 297.2 L509.0 309.8 L504.9 322.6 L502.8 335.6 L502.7 348.8 L504.6 361.9 L508.4 375.1 L514.2 388.1 L522.0 400.9 L531.6 413.4 Z"/><path d="M551.9 423.2 L565.2 434.9 L580.2 446.1 L596.8 456.7 L614.9 466.6 L634.4 475.8 L655.1 484.3 L676.9 492.0 L699.7 498.7 L723.4 504.6 L747.8 509.6 L772.8 513.5 L798.1 516.5 L823.7 518.4 L849.4 519.3 L875.0 519.2 L900.4 518.1 L925.4 515.9 L949.9 512.7 L973.6 508.5 L996.6 503.4 L1018.5 497.3 L1039.4 490.3 L1059.0 482.5 L1077.2 473.9 L1094.0 464.5 L1109.2 454.4 L1122.7 443.7 L1134.5 432.4 L1144.4 420.6 L1152.4 408.4 L1158.5 395.8 L1162.7 383.0 L1164.8 370.0 L1164.9 356.8 L1163.0 343.7 L1159.1 330.6 L1153.2 317.6 L1145.4 304.8 L1135.7 292.3 L1124.1 280.2 L1110.8 268.5 L1095.8 257.3 L1079.2 246.8 L1061.1 236.8 L1041.6 227.6 L1020.9 219.1 L999.1 211.5 L976.3 204.7 L952.6 198.8 L928.2 193.9 L903.2 189.9 L877.9 187.0 L852.3 185.0 L826.6 184.1 L801.0 184.2 L775.6 185.3 L750.6 187.5 L726.1 190.7 L702.4 194.9 L679.4 200.0 L657.5 206.1 L636.6 213.1 L617.0 220.9 L598.8 229.6 L582.0 238.9 L566.8 249.0 L553.3 259.8 L541.5 271.0 L531.6 282.8 L523.6 295.0 L517.5 307.6 L513.3 320.4 L511.2 333.4 L511.1 346.6 L513.0 359.7 L516.9 372.9 L522.8 385.9 L530.6 398.6 L540.3 411.1 Z"/><path d="M560.8 420.9 L574.2 432.5 L589.4 443.7 L606.1 454.2 L624.4 464.1 L644.0 473.3 L664.9 481.7 L686.9 489.3 L710.0 496.0 L733.9 501.8 L758.5 506.7 L783.6 510.6 L809.2 513.5 L835.0 515.4 L860.9 516.3 L886.8 516.1 L912.4 514.9 L937.6 512.7 L962.3 509.4 L986.2 505.2 L1009.4 500.0 L1031.5 493.9 L1052.6 486.8 L1072.3 479.0 L1090.7 470.3 L1107.6 460.9 L1123.0 450.8 L1136.6 440.0 L1148.5 428.7 L1158.5 416.9 L1166.6 404.7 L1172.7 392.1 L1176.9 379.3 L1179.0 366.3 L1179.1 353.1 L1177.2 340.0 L1173.3 326.9 L1167.3 313.9 L1159.4 301.2 L1149.6 288.7 L1138.0 276.6 L1124.5 265.0 L1109.4 253.8 L1092.6 243.3 L1074.4 233.4 L1054.8 224.2 L1033.9 215.8 L1011.8 208.2 L988.8 201.5 L964.9 195.7 L940.3 190.8 L915.1 186.9 L889.6 184.0 L863.7 182.1 L837.8 181.2 L812.0 181.4 L786.4 182.6 L761.2 184.8 L736.5 188.1 L712.5 192.3 L689.4 197.5 L667.2 203.6 L646.2 210.7 L626.4 218.5 L608.0 227.2 L591.1 236.6 L575.8 246.7 L562.2 257.5 L550.3 268.8 L540.3 280.6 L532.2 292.8 L526.0 305.4 L521.9 318.2 L519.7 331.2 L519.6 344.4 L521.5 357.5 L525.5 370.6 L531.4 383.6 L539.3 396.3 L549.1 408.8 Z"/><path d="M569.8 418.5 L583.4 430.1 L598.6 441.2 L615.5 451.7 L633.9 461.6 L653.7 470.7 L674.8 479.1 L697.0 486.6 L720.2 493.3 L744.3 499.0 L769.1 503.9 L794.5 507.7 L820.3 510.6 L846.3 512.4 L872.5 513.2 L898.5 513.0 L924.3 511.7 L949.8 509.4 L974.6 506.1 L998.8 501.8 L1022.1 496.6 L1044.5 490.4 L1065.7 483.4 L1085.6 475.5 L1104.1 466.7 L1121.2 457.3 L1136.6 447.1 L1150.4 436.4 L1162.3 425.0 L1172.4 413.2 L1180.6 401.0 L1186.8 388.4 L1191.0 375.6 L1193.2 362.6 L1193.3 349.4 L1191.3 336.3 L1187.3 323.2 L1181.3 310.3 L1173.4 297.5 L1163.5 285.1 L1151.7 273.0 L1138.1 261.4 L1122.9 250.4 L1106.0 239.9 L1087.6 230.0 L1067.8 220.9 L1046.7 212.5 L1024.5 205.0 L1001.3 198.3 L977.2 192.5 L952.4 187.7 L927.0 183.9 L901.2 181.0 L875.2 179.2 L849.0 178.4 L823.0 178.6 L797.2 179.9 L771.7 182.2 L746.9 185.4 L722.7 189.7 L699.4 195.0 L677.0 201.1 L655.8 208.2 L635.9 216.1 L617.4 224.8 L600.3 234.3 L584.9 244.4 L571.1 255.2 L559.2 266.5 L549.1 278.3 L540.9 290.6 L534.7 303.1 L530.5 316.0 L528.3 329.0 L528.2 342.1 L530.2 355.3 L534.2 368.4 L540.2 381.3 L548.1 394.0 L558.0 406.5 Z"/><path d="M578.9 416.1 L592.6 427.7 L608.0 438.7 L625.0 449.2 L643.5 459.0 L663.5 468.1 L684.7 476.4 L707.1 483.9 L730.5 490.5 L754.8 496.2 L779.8 501.0 L805.4 504.8 L831.4 507.6 L857.6 509.4 L884.0 510.1 L910.2 509.8 L936.2 508.5 L961.9 506.2 L986.9 502.8 L1011.3 498.5 L1034.8 493.2 L1057.3 487.0 L1078.7 479.9 L1098.8 472.0 L1117.5 463.2 L1134.6 453.7 L1150.2 443.6 L1164.0 432.8 L1176.1 421.4 L1186.3 409.6 L1194.5 397.3 L1200.7 384.8 L1205.0 371.9 L1207.1 358.9 L1207.2 345.8 L1205.3 332.7 L1201.3 319.6 L1195.2 306.7 L1187.2 294.0 L1177.2 281.5 L1165.3 269.5 L1151.7 257.9 L1136.3 246.9 L1119.2 236.4 L1100.7 226.6 L1080.8 217.5 L1059.5 209.2 L1037.1 201.7 L1013.7 195.1 L989.4 189.4 L964.4 184.6 L938.8 180.8 L912.8 178.1 L886.6 176.3 L860.3 175.5 L834.0 175.8 L808.0 177.1 L782.4 179.5 L757.3 182.8 L732.9 187.1 L709.4 192.4 L686.9 198.6 L665.6 205.7 L645.5 213.7 L626.8 222.4 L609.6 231.9 L594.1 242.1 L580.2 252.9 L568.2 264.2 L558.0 276.1 L549.8 288.3 L543.5 300.9 L539.3 313.7 L537.1 326.7 L537.0 339.8 L539.0 353.0 L543.0 366.1 L549.0 379.0 L557.1 391.7 L567.1 404.1 Z"/><path d="M588.2 413.7 L601.9 425.2 L617.5 436.2 L634.6 446.7 L653.3 456.4 L673.4 465.5 L694.8 473.8 L717.3 481.2 L740.9 487.8 L765.4 493.4 L790.6 498.1 L816.3 501.9 L842.5 504.6 L869.0 506.4 L895.5 507.1 L921.9 506.7 L948.1 505.4 L974.0 503.0 L999.2 499.6 L1023.7 495.2 L1047.4 489.9 L1070.1 483.6 L1091.6 476.5 L1111.8 468.5 L1130.7 459.7 L1148.0 450.2 L1163.6 440.0 L1177.6 429.2 L1189.7 417.8 L1199.9 406.0 L1208.2 393.7 L1214.5 381.1 L1218.8 368.3 L1221.0 355.3 L1221.1 342.2 L1219.1 329.1 L1215.0 316.0 L1208.9 303.1 L1200.8 290.4 L1190.8 278.0 L1178.8 266.0 L1165.1 254.5 L1149.5 243.5 L1132.4 233.0 L1113.7 223.3 L1093.6 214.2 L1072.2 206.0 L1049.7 198.5 L1026.1 191.9 L1001.6 186.3 L976.4 181.6 L950.7 177.8 L924.5 175.1 L898.0 173.4 L871.5 172.7 L845.1 173.0 L818.9 174.4 L793.0 176.7 L767.8 180.1 L743.3 184.5 L719.6 189.8 L696.9 196.1 L675.4 203.2 L655.2 211.2 L636.3 220.0 L619.0 229.5 L603.4 239.7 L589.4 250.5 L577.3 261.9 L567.1 273.7 L558.8 286.0 L552.5 298.6 L548.2 311.4 L546.0 324.4 L545.9 337.5 L547.9 350.7 L552.0 363.7 L558.1 376.6 L566.2 389.3 L576.2 401.7 Z"/><path d="M597.6 411.2 L611.4 422.7 L627.1 433.7 L644.3 444.1 L663.1 453.8 L683.4 462.8 L704.9 471.1 L727.6 478.5 L751.4 485.0 L776.0 490.6 L801.4 495.3 L827.3 499.0 L853.7 501.7 L880.3 503.3 L907.0 504.0 L933.6 503.6 L960.0 502.2 L986.0 499.8 L1011.4 496.3 L1036.1 491.9 L1059.9 486.6 L1082.8 480.3 L1104.4 473.1 L1124.8 465.1 L1143.7 456.3 L1161.1 446.7 L1176.9 436.5 L1191.0 425.7 L1203.2 414.3 L1213.5 402.4 L1221.8 390.2 L1228.1 377.6 L1232.4 364.7 L1234.6 351.7 L1234.7 338.6 L1232.7 325.5 L1228.6 312.5 L1222.5 299.6 L1214.3 286.9 L1204.2 274.5 L1192.2 262.6 L1178.3 251.1 L1162.7 240.1 L1145.4 229.7 L1126.6 220.0 L1106.4 211.0 L1084.8 202.7 L1062.1 195.3 L1038.4 188.8 L1013.7 183.2 L988.4 178.5 L962.4 174.8 L936.1 172.1 L909.5 170.4 L882.8 169.8 L856.1 170.2 L829.8 171.6 L803.8 174.0 L778.3 177.4 L753.6 181.9 L729.8 187.2 L707.0 193.5 L685.3 200.7 L665.0 208.7 L646.0 217.5 L628.6 227.1 L612.8 237.3 L598.8 248.1 L586.6 259.5 L576.3 271.4 L567.9 283.6 L561.6 296.2 L557.3 309.0 L555.1 322.1 L555.0 335.2 L557.0 348.3 L561.1 361.3 L567.3 374.2 L575.4 386.9 L585.5 399.2 Z"/><path d="M607.2 408.7 L621.1 420.2 L636.8 431.1 L654.2 441.5 L673.1 451.2 L693.5 460.2 L715.2 468.4 L738.0 475.7 L761.9 482.2 L786.7 487.8 L812.2 492.4 L838.3 496.1 L864.8 498.7 L891.6 500.3 L918.5 500.9 L945.3 500.5 L971.8 499.1 L997.9 496.6 L1023.5 493.1 L1048.4 488.7 L1072.3 483.3 L1095.3 477.0 L1117.1 469.7 L1137.6 461.7 L1156.6 452.9 L1174.2 443.3 L1190.0 433.1 L1204.1 422.2 L1216.4 410.8 L1226.8 398.9 L1235.2 386.7 L1241.5 374.1 L1245.8 361.2 L1248.0 348.2 L1248.1 335.1 L1246.1 322.0 L1242.0 309.0 L1235.8 296.1 L1227.6 283.4 L1217.4 271.1 L1205.3 259.2 L1191.4 247.7 L1175.7 236.7 L1158.3 226.4 L1139.4 216.7 L1119.0 207.7 L1097.3 199.5 L1074.5 192.1 L1050.6 185.7 L1025.8 180.1 L1000.3 175.5 L974.2 171.8 L947.7 169.2 L920.9 167.5 L894.0 166.9 L867.2 167.3 L840.7 168.8 L814.6 171.2 L789.0 174.7 L764.1 179.2 L740.2 184.6 L717.2 190.9 L695.4 198.1 L674.9 206.2 L655.9 215.0 L638.3 224.6 L622.5 234.8 L608.4 245.7 L596.1 257.0 L585.7 268.9 L577.3 281.2 L571.0 293.8 L566.7 306.6 L564.5 319.6 L564.4 332.7 L566.4 345.9 L570.5 358.9 L576.7 371.8 L584.9 384.4 L595.1 396.7 Z"/><path d="M617.0 406.1 L631.1 417.6 L646.9 428.5 L664.3 438.8 L683.3 448.5 L703.8 457.4 L725.6 465.6 L748.6 472.9 L772.6 479.4 L797.5 484.9 L823.1 489.5 L849.4 493.1 L876.0 495.7 L902.9 497.3 L929.9 497.9 L956.9 497.5 L983.5 496.0 L1009.8 493.5 L1035.5 490.0 L1060.5 485.5 L1084.6 480.0 L1107.7 473.7 L1129.6 466.5 L1150.2 458.4 L1169.3 449.5 L1186.9 439.9 L1202.9 429.7 L1217.1 418.8 L1229.4 407.4 L1239.8 395.5 L1248.2 383.2 L1254.6 370.6 L1259.0 357.8 L1261.2 344.8 L1261.3 331.7 L1259.2 318.6 L1255.1 305.6 L1248.9 292.7 L1240.6 280.1 L1230.4 267.7 L1218.2 255.8 L1204.2 244.4 L1188.4 233.4 L1170.9 223.1 L1151.9 213.4 L1131.4 204.5 L1109.6 196.3 L1086.7 189.0 L1062.7 182.5 L1037.8 177.0 L1012.1 172.4 L985.9 168.8 L959.2 166.2 L932.3 164.6 L905.3 164.0 L878.4 164.5 L851.7 166.0 L825.4 168.5 L799.7 172.0 L774.7 176.5 L750.6 181.9 L727.6 188.2 L705.7 195.5 L685.1 203.5 L665.9 212.4 L648.3 222.0 L632.4 232.3 L618.2 243.1 L605.9 254.5 L595.4 266.4 L587.0 278.7 L580.6 291.3 L576.3 304.1 L574.1 317.1 L574.0 330.2 L576.0 343.3 L580.1 356.4 L586.4 369.2 L594.6 381.9 L604.9 394.2 Z"/><path d="M627.4 403.4 L641.4 414.9 L657.3 425.8 L674.8 436.1 L693.9 445.7 L714.5 454.6 L736.3 462.8 L759.4 470.1 L783.5 476.5 L808.5 482.0 L834.2 486.6 L860.5 490.2 L887.3 492.8 L914.3 494.3 L941.4 494.9 L968.4 494.4 L995.2 492.9 L1021.5 490.4 L1047.3 486.9 L1072.4 482.3 L1096.6 476.9 L1119.7 470.5 L1141.7 463.3 L1162.4 455.2 L1181.6 446.3 L1199.3 436.7 L1215.3 426.4 L1229.5 415.5 L1241.9 404.1 L1252.3 392.2 L1260.8 380.0 L1267.2 367.4 L1271.5 354.5 L1273.7 341.5 L1273.8 328.4 L1271.8 315.3 L1267.7 302.3 L1261.4 289.4 L1253.1 276.8 L1242.8 264.5 L1230.6 252.6 L1216.6 241.1 L1200.7 230.2 L1183.2 219.9 L1164.1 210.3 L1143.5 201.4 L1121.7 193.2 L1098.6 185.9 L1074.5 179.5 L1049.5 174.0 L1023.8 169.4 L997.5 165.8 L970.7 163.2 L943.7 161.7 L916.6 161.1 L889.6 161.6 L862.8 163.1 L836.5 165.6 L810.7 169.1 L785.6 173.7 L761.4 179.1 L738.3 185.5 L716.3 192.7 L695.6 200.8 L676.4 209.7 L658.7 219.3 L642.7 229.6 L628.5 240.5 L616.1 251.9 L605.7 263.8 L597.2 276.0 L590.8 288.6 L586.5 301.5 L584.3 314.5 L584.2 327.6 L586.2 340.7 L590.3 353.7 L596.6 366.6 L604.9 379.2 L615.2 391.5 Z"/></clipPath>
<filter id="bl13" x="-2%" y="-2%" width="104%" height="104%"><feGaussianBlur stdDeviation="0.75"/></filter>
<g clip-path="url(#cylclip)"><g filter="url(#bl13)">
<rect x="150" y="140" width="1150" height="560" fill="#7a5200"/>
<path d="M185.1 520.7 L189.7 535.1 L195.0 549.2 L200.8 562.9 L207.2 576.3 L214.1 589.1 L221.5 601.3 L229.4 612.9 L237.6 623.8 L246.1 633.8 L255.0 643.0 L264.0 651.3 L273.3 658.6 L282.6 664.9 L292.0 670.1 L301.5 674.2 L310.8 677.3 L320.0 679.2 L329.1 679.9 L337.9 679.5 L346.5 678.0 L354.7 675.4 L362.5 671.6 L369.9 666.7 L376.8 660.8 L383.2 653.8 L389.1 645.8 L394.3 636.9 L398.9 627.2 L402.8 616.6 L406.1 605.2 L408.6 593.2 L410.5 580.5 L411.6 567.4 L412.0 553.7 L411.6 539.7 L410.5 525.5 L408.6 511.0 L406.1 496.4 L402.8 481.8 L398.9 467.3 L394.3 452.9 L389.0 438.8 L383.2 425.1 L376.8 411.7 L369.9 398.9 L362.5 386.7 L354.6 375.1 L346.4 364.2 L337.9 354.2 L329.0 345.0 L320.0 336.7 L310.7 329.4 L301.4 323.1 L292.0 317.9 L282.5 313.8 L273.2 310.7 L264.0 308.8 L254.9 308.1 L246.1 308.5 L237.5 310.0 L229.3 312.6 L221.5 316.4 L214.1 321.3 L207.2 327.2 L200.8 334.2 L194.9 342.2 L189.7 351.1 L185.1 360.8 L181.2 371.4 L177.9 382.8 L175.4 394.8 L173.5 407.5 L172.4 420.6 L172.0 434.3 L172.4 448.3 L173.5 462.5 L175.4 477.0 L177.9 491.6 L181.2 506.2 Z" fill="#8c6204"/><path d="M187.6 520.1 L192.3 534.4 L197.6 548.5 L203.5 562.2 L210.0 575.5 L217.1 588.3 L224.6 600.5 L232.6 612.1 L240.9 622.9 L249.6 632.9 L258.6 642.0 L267.8 650.2 L277.2 657.5 L286.7 663.8 L296.2 668.9 L305.8 673.0 L315.3 676.0 L324.7 677.9 L333.9 678.6 L342.8 678.2 L351.5 676.7 L359.9 674.0 L367.8 670.1 L375.3 665.2 L382.3 659.3 L388.8 652.3 L394.7 644.3 L400.0 635.4 L404.7 625.6 L408.7 615.0 L412.0 603.7 L414.6 591.6 L416.4 579.0 L417.6 565.8 L417.9 552.2 L417.5 538.2 L416.4 523.9 L414.5 509.4 L411.9 494.9 L408.6 480.3 L404.6 465.8 L399.9 451.5 L394.6 437.4 L388.6 423.7 L382.1 410.4 L375.1 397.6 L367.6 385.4 L359.6 373.8 L351.3 363.0 L342.6 353.0 L333.6 343.8 L324.4 335.6 L315.0 328.4 L305.5 322.1 L296.0 316.9 L286.4 312.8 L276.9 309.8 L267.5 308.0 L258.3 307.2 L249.3 307.7 L240.7 309.2 L232.3 311.9 L224.4 315.7 L216.9 320.6 L209.8 326.6 L203.4 333.6 L197.4 341.5 L192.1 350.5 L187.5 360.2 L183.5 370.8 L180.2 382.2 L177.6 394.2 L175.7 406.9 L174.6 420.1 L174.3 433.7 L174.6 447.7 L175.8 462.0 L177.7 476.4 L180.3 491.0 L183.6 505.6 Z" fill="#d8960a"/>
<path d="M192.0 518.9 L196.8 533.2 L202.3 547.2 L208.4 560.9 L215.1 574.1 L222.3 586.9 L230.1 599.0 L238.3 610.5 L246.8 621.2 L255.8 631.2 L265.0 640.3 L274.5 648.4 L284.1 655.6 L293.9 661.8 L303.7 666.9 L313.5 670.9 L323.3 673.9 L332.9 675.7 L342.4 676.3 L351.6 675.9 L360.5 674.2 L369.0 671.5 L377.2 667.6 L384.9 662.7 L392.1 656.7 L398.8 649.6 L404.8 641.6 L410.3 632.7 L415.0 622.9 L419.1 612.3 L422.5 600.9 L425.2 588.8 L427.0 576.2 L428.2 563.0 L428.5 549.4 L428.1 535.4 L426.9 521.2 L425.0 506.7 L422.3 492.2 L418.9 477.7 L414.7 463.2 L409.9 448.9 L404.4 434.9 L398.3 421.2 L391.6 407.9 L384.4 395.2 L376.7 383.1 L368.5 371.6 L359.9 360.8 L351.0 350.9 L341.7 341.8 L332.3 333.6 L322.6 326.5 L312.9 320.3 L303.0 315.2 L293.2 311.1 L283.5 308.2 L273.8 306.4 L264.4 305.7 L255.2 306.2 L246.3 307.8 L237.7 310.6 L229.5 314.4 L221.8 319.4 L214.6 325.4 L208.0 332.4 L201.9 340.4 L196.5 349.4 L191.7 359.2 L187.6 369.8 L184.2 381.2 L181.6 393.2 L179.7 405.9 L178.6 419.1 L178.2 432.7 L178.6 446.7 L179.8 460.9 L181.7 475.3 L184.4 489.9 L187.9 504.4 Z" fill="#8c6204"/><path d="M194.5 518.2 L199.4 532.5 L205.0 546.5 L211.2 560.1 L217.9 573.4 L225.3 586.1 L233.2 598.2 L241.5 609.6 L250.2 620.3 L259.3 630.2 L268.6 639.3 L278.2 647.4 L288.0 654.5 L297.9 660.7 L307.9 665.8 L317.9 669.8 L327.8 672.7 L337.5 674.4 L347.1 675.0 L356.5 674.5 L365.5 672.9 L374.2 670.1 L382.5 666.2 L390.3 661.2 L397.6 655.2 L404.3 648.1 L410.5 640.1 L416.0 631.2 L420.8 621.3 L425.0 610.7 L428.4 599.3 L431.1 587.3 L433.0 574.6 L434.1 561.5 L434.5 547.8 L434.1 533.9 L432.9 519.6 L430.9 505.2 L428.1 490.7 L424.7 476.2 L420.5 461.7 L415.6 447.5 L410.0 433.5 L403.8 419.8 L397.0 406.6 L389.6 393.9 L381.8 381.8 L373.5 370.3 L364.8 359.6 L355.7 349.7 L346.3 340.7 L336.7 332.5 L326.9 325.4 L317.0 319.3 L307.0 314.2 L297.1 310.2 L287.2 307.3 L277.4 305.5 L267.8 304.9 L258.5 305.4 L249.4 307.1 L240.7 309.8 L232.5 313.7 L224.6 318.7 L217.3 324.7 L210.6 331.8 L204.5 339.8 L198.9 348.8 L194.1 358.6 L189.9 369.2 L186.5 380.6 L183.9 392.7 L181.9 405.3 L180.8 418.5 L180.4 432.1 L180.9 446.1 L182.1 460.3 L184.1 474.7 L186.8 489.3 L190.3 503.8 Z" fill="#d8960a"/>
<path d="M198.9 517.0 L203.9 531.3 L209.7 545.2 L216.0 558.8 L223.0 572.0 L230.6 584.6 L238.6 596.7 L247.2 608.1 L256.1 618.7 L265.4 628.6 L275.1 637.5 L284.9 645.6 L295.0 652.7 L305.1 658.7 L315.4 663.7 L325.6 667.7 L335.7 670.5 L345.8 672.2 L355.6 672.7 L365.2 672.2 L374.5 670.5 L383.4 667.6 L391.9 663.7 L399.9 658.7 L407.3 652.6 L414.3 645.5 L420.6 637.4 L426.2 628.5 L431.2 618.6 L435.4 608.0 L438.9 596.6 L441.6 584.5 L443.6 571.8 L444.7 558.7 L445.1 545.1 L444.6 531.1 L443.4 516.9 L441.3 502.5 L438.5 488.0 L434.9 473.5 L430.6 459.1 L425.6 444.9 L419.8 430.9 L413.5 417.3 L406.5 404.2 L398.9 391.5 L390.9 379.5 L382.3 368.1 L373.4 357.4 L364.1 347.6 L354.4 338.6 L344.6 330.6 L334.5 323.5 L324.4 317.4 L314.1 312.4 L303.9 308.5 L293.8 305.7 L283.7 304.0 L273.9 303.4 L264.3 304.0 L255.0 305.7 L246.1 308.5 L237.6 312.5 L229.6 317.5 L222.2 323.6 L215.2 330.6 L208.9 338.7 L203.3 347.7 L198.3 357.5 L194.1 368.2 L190.6 379.6 L187.9 391.6 L185.9 404.3 L184.8 417.5 L184.4 431.1 L184.9 445.0 L186.1 459.3 L188.2 473.7 L191.0 488.1 L194.6 502.6 Z" fill="#8c6204"/><path d="M201.4 516.4 L206.5 530.6 L212.3 544.5 L218.8 558.1 L225.9 571.2 L233.5 583.8 L241.7 595.8 L250.4 607.2 L259.5 617.8 L268.9 627.6 L278.7 636.5 L288.7 644.5 L298.9 651.6 L309.2 657.6 L319.6 662.6 L329.9 666.5 L340.2 669.3 L350.4 670.9 L360.4 671.5 L370.1 670.8 L379.5 669.1 L388.5 666.2 L397.1 662.3 L405.2 657.2 L412.8 651.1 L419.8 644.0 L426.2 635.9 L431.9 626.9 L437.0 617.1 L441.3 606.4 L444.8 595.0 L447.6 582.9 L449.5 570.3 L450.7 557.1 L451.0 543.5 L450.6 529.6 L449.3 515.3 L447.2 501.0 L444.4 486.5 L440.7 472.0 L436.3 457.6 L431.2 443.4 L425.4 429.5 L418.9 415.9 L411.8 402.8 L404.2 390.2 L396.0 378.2 L387.3 366.8 L378.2 356.2 L368.8 346.4 L359.0 337.5 L349.0 329.5 L338.8 322.4 L328.5 316.4 L318.1 311.4 L307.8 307.5 L297.5 304.7 L287.3 303.1 L277.3 302.6 L267.6 303.2 L258.2 304.9 L249.2 307.8 L240.6 311.7 L232.4 316.8 L224.9 322.9 L217.9 330.0 L211.5 338.1 L205.8 347.1 L200.7 356.9 L196.4 367.6 L192.9 379.0 L190.1 391.1 L188.2 403.7 L187.0 416.9 L186.6 430.5 L187.1 444.4 L188.4 458.7 L190.5 473.0 L193.3 487.5 L197.0 502.0 Z" fill="#d8960a"/>
<path d="M205.8 515.2 L211.1 529.3 L217.0 543.2 L223.7 556.7 L231.0 569.8 L238.8 582.4 L247.2 594.3 L256.1 605.6 L265.4 616.2 L275.1 625.9 L285.1 634.8 L295.4 642.7 L305.8 649.7 L316.4 655.7 L327.0 660.6 L337.6 664.4 L348.2 667.1 L358.6 668.7 L368.8 669.2 L378.8 668.5 L388.4 666.7 L397.7 663.8 L406.5 659.8 L414.8 654.7 L422.6 648.5 L429.7 641.4 L436.3 633.2 L442.1 624.2 L447.3 614.3 L451.6 603.7 L455.3 592.2 L458.1 580.2 L460.1 567.5 L461.3 554.3 L461.6 540.7 L461.1 526.8 L459.8 512.6 L457.7 498.3 L454.7 483.8 L451.0 469.4 L446.4 455.0 L441.2 440.9 L435.2 427.0 L428.6 413.5 L421.3 400.4 L413.4 387.8 L405.0 375.9 L396.2 364.6 L386.8 354.0 L377.2 344.3 L367.1 335.4 L356.9 327.5 L346.4 320.5 L335.9 314.6 L325.2 309.7 L314.6 305.8 L304.0 303.1 L293.6 301.5 L283.4 301.0 L273.5 301.7 L263.8 303.5 L254.6 306.4 L245.8 310.5 L237.5 315.6 L229.7 321.7 L222.5 328.9 L216.0 337.0 L210.1 346.0 L205.0 355.9 L200.6 366.6 L197.0 378.0 L194.2 390.0 L192.2 402.7 L191.0 415.9 L190.6 429.5 L191.1 443.4 L192.4 457.6 L194.6 472.0 L197.5 486.4 L201.3 500.8 Z" fill="#8c6204"/><path d="M208.3 514.5 L213.6 528.6 L219.7 542.5 L226.4 556.0 L233.8 569.1 L241.8 581.6 L250.3 593.5 L259.3 604.8 L268.8 615.3 L278.6 625.0 L288.7 633.8 L299.1 641.7 L309.7 648.6 L320.4 654.5 L331.2 659.4 L342.0 663.2 L352.7 665.9 L363.2 667.4 L373.6 667.9 L383.7 667.2 L393.5 665.3 L402.8 662.4 L411.7 658.3 L420.2 653.2 L428.0 647.0 L435.3 639.9 L441.9 631.7 L447.8 622.7 L453.0 612.8 L457.5 602.1 L461.1 590.7 L464.0 578.6 L466.0 565.9 L467.2 552.8 L467.6 539.2 L467.1 525.3 L465.7 511.1 L463.5 496.7 L460.5 482.3 L456.7 467.9 L452.1 453.6 L446.8 439.4 L440.7 425.6 L434.0 412.1 L426.6 399.0 L418.7 386.5 L410.1 374.6 L401.1 363.3 L391.7 352.8 L381.9 343.1 L371.7 334.3 L361.3 326.4 L350.7 319.5 L340.0 313.5 L329.2 308.7 L318.5 304.9 L307.8 302.2 L297.2 300.6 L286.8 300.2 L276.7 300.9 L267.0 302.7 L257.6 305.7 L248.7 309.7 L240.3 314.9 L232.4 321.0 L225.1 328.2 L218.5 336.3 L212.6 345.4 L207.4 355.3 L203.0 366.0 L199.3 377.4 L196.4 389.5 L194.4 402.1 L193.2 415.3 L192.9 428.9 L193.4 442.8 L194.7 457.0 L196.9 471.4 L199.9 485.8 L203.7 500.2 Z" fill="#d8960a"/>
<path d="M212.7 513.3 L218.2 527.4 L224.4 541.2 L231.3 554.7 L238.9 567.7 L247.1 580.1 L255.8 592.0 L265.0 603.2 L274.7 613.6 L284.8 623.3 L295.2 632.0 L305.8 639.9 L316.7 646.7 L327.6 652.6 L338.7 657.4 L349.7 661.1 L360.7 663.7 L371.5 665.2 L382.1 665.6 L392.4 664.8 L402.4 662.9 L412.0 659.9 L421.1 655.8 L429.7 650.7 L437.8 644.4 L445.2 637.2 L451.9 629.1 L458.0 620.0 L463.3 610.1 L467.9 599.4 L471.6 587.9 L474.5 575.8 L476.6 563.2 L477.8 550.0 L478.1 536.4 L477.6 522.5 L476.2 508.3 L473.9 494.0 L470.9 479.6 L467.0 465.2 L462.3 451.0 L456.8 436.9 L450.6 423.1 L443.7 409.6 L436.1 396.6 L427.9 384.1 L419.2 372.3 L410.0 361.1 L400.3 350.6 L390.2 341.0 L379.8 332.3 L369.2 324.4 L358.3 317.6 L347.4 311.7 L336.3 306.9 L325.3 303.2 L314.3 300.6 L303.5 299.1 L292.9 298.7 L282.6 299.5 L272.6 301.4 L263.0 304.4 L253.9 308.5 L245.3 313.6 L237.2 319.8 L229.8 327.1 L223.1 335.2 L217.0 344.3 L211.7 354.2 L207.1 364.9 L203.4 376.4 L200.5 388.4 L198.4 401.1 L197.2 414.3 L196.9 427.9 L197.4 441.8 L198.8 455.9 L201.1 470.3 L204.1 484.7 L208.0 499.0 Z" fill="#8c6204"/><path d="M215.3 512.7 L220.8 526.7 L227.1 540.5 L234.1 553.9 L241.8 566.9 L250.1 579.3 L258.9 591.2 L268.3 602.3 L278.1 612.7 L288.3 622.3 L298.8 631.0 L309.6 638.8 L320.6 645.7 L331.7 651.5 L342.9 656.2 L354.0 659.9 L365.1 662.5 L376.1 664.0 L386.8 664.3 L397.3 663.5 L407.4 661.6 L417.1 658.5 L426.4 654.4 L435.1 649.2 L443.2 643.0 L450.7 635.8 L457.6 627.6 L463.7 618.5 L469.1 608.5 L473.7 597.8 L477.5 586.4 L480.4 574.3 L482.5 561.6 L483.7 548.5 L484.0 534.9 L483.5 521.0 L482.1 506.8 L479.8 492.5 L476.7 478.1 L472.7 463.7 L467.9 449.5 L462.4 435.4 L456.1 421.6 L449.1 408.2 L441.4 395.3 L433.1 382.8 L424.3 371.0 L414.9 359.8 L405.1 349.4 L394.9 339.8 L384.4 331.1 L373.6 323.3 L362.6 316.5 L351.5 310.7 L340.3 305.9 L329.1 302.2 L318.1 299.6 L307.1 298.2 L296.4 297.9 L285.9 298.7 L275.8 300.6 L266.1 303.6 L256.8 307.7 L248.1 312.9 L240.0 319.2 L232.5 326.4 L225.6 334.6 L219.5 343.7 L214.1 353.6 L209.5 364.3 L205.7 375.8 L202.8 387.9 L200.7 400.5 L199.5 413.7 L199.2 427.3 L199.7 441.2 L201.1 455.3 L203.4 469.7 L206.5 484.0 L210.5 498.4 Z" fill="#d8960a"/>
<path d="M219.7 511.5 L225.4 525.5 L231.9 539.2 L239.0 552.6 L246.9 565.5 L255.4 577.9 L264.4 589.7 L274.0 600.8 L284.0 611.1 L294.5 620.6 L305.2 629.3 L316.3 637.0 L327.5 643.8 L338.9 649.5 L350.3 654.2 L361.8 657.8 L373.1 660.3 L384.3 661.7 L395.3 662.0 L406.0 661.2 L416.3 659.2 L426.2 656.1 L435.7 651.9 L444.6 646.7 L452.9 640.4 L460.6 633.1 L467.6 624.9 L473.9 615.8 L479.4 605.8 L484.0 595.1 L487.9 583.6 L490.9 571.5 L493.0 558.9 L494.2 545.7 L494.6 532.1 L494.0 518.2 L492.6 504.1 L490.2 489.8 L487.0 475.4 L482.9 461.1 L478.0 446.9 L472.3 432.9 L465.9 419.1 L458.7 405.8 L450.9 392.8 L442.4 380.5 L433.3 368.7 L423.8 357.6 L413.7 347.3 L403.3 337.7 L392.5 329.1 L381.5 321.3 L370.2 314.6 L358.9 308.8 L347.4 304.1 L336.0 300.5 L324.6 298.0 L313.4 296.6 L302.5 296.4 L291.8 297.2 L281.4 299.2 L271.5 302.3 L262.1 306.5 L253.1 311.7 L244.8 318.0 L237.1 325.2 L230.1 333.5 L223.9 342.6 L218.4 352.5 L213.7 363.3 L209.9 374.7 L206.9 386.8 L204.7 399.5 L203.5 412.7 L203.2 426.2 L203.7 440.1 L205.2 454.3 L207.5 468.6 L210.8 482.9 L214.8 497.2 Z" fill="#8c6204"/><path d="M222.2 510.8 L228.0 524.8 L234.5 538.5 L241.8 551.8 L249.8 564.7 L258.3 577.1 L267.5 588.8 L277.2 599.9 L287.4 610.2 L297.9 619.7 L308.9 628.3 L320.0 636.0 L331.4 642.7 L342.9 648.4 L354.5 653.1 L366.1 656.6 L377.6 659.1 L388.9 660.5 L400.0 660.7 L410.9 659.8 L421.3 657.8 L431.4 654.7 L440.9 650.5 L450.0 645.2 L458.4 638.9 L466.2 631.6 L473.2 623.4 L479.6 614.3 L485.1 604.3 L489.9 593.5 L493.8 582.1 L496.8 570.0 L498.9 557.3 L500.2 544.1 L500.5 530.6 L499.9 516.7 L498.4 502.6 L496.1 488.3 L492.8 473.9 L488.7 459.6 L483.7 445.4 L477.9 431.4 L471.4 417.7 L464.1 404.4 L456.2 391.5 L447.6 379.1 L438.4 367.4 L428.7 356.3 L418.6 346.0 L408.0 336.5 L397.1 327.9 L385.9 320.2 L374.5 313.5 L363.0 307.8 L351.4 303.2 L339.8 299.6 L328.4 297.1 L317.0 295.7 L305.9 295.5 L295.1 296.4 L284.6 298.4 L274.6 301.5 L265.0 305.7 L256.0 311.0 L247.6 317.3 L239.8 324.6 L232.7 332.8 L226.4 342.0 L220.8 351.9 L216.1 362.7 L212.2 374.2 L209.2 386.3 L207.0 398.9 L205.8 412.1 L205.4 425.6 L206.0 439.5 L207.5 453.7 L209.9 467.9 L213.1 482.3 L217.3 496.6 Z" fill="#d8960a"/>
<path d="M226.7 509.6 L232.6 523.6 L239.3 537.2 L246.7 550.5 L254.9 563.3 L263.7 575.6 L273.0 587.3 L283.0 598.3 L293.3 608.6 L304.2 618.0 L315.3 626.5 L326.7 634.2 L338.4 640.8 L350.1 646.5 L362.0 651.0 L373.8 654.6 L385.5 657.0 L397.1 658.3 L408.5 658.4 L419.5 657.5 L430.2 655.4 L440.5 652.2 L450.3 648.0 L459.5 642.7 L468.1 636.3 L476.0 629.0 L483.2 620.7 L489.7 611.6 L495.4 601.6 L500.2 590.8 L504.2 579.3 L507.2 567.2 L509.4 554.5 L510.7 541.4 L511.0 527.8 L510.4 513.9 L508.9 499.8 L506.4 485.6 L503.1 471.3 L498.9 457.0 L493.8 442.8 L487.9 428.9 L481.2 415.2 L473.8 401.9 L465.6 389.1 L456.8 376.8 L447.5 365.1 L437.5 354.1 L427.2 343.9 L416.3 334.4 L405.2 325.9 L393.8 318.3 L382.1 311.6 L370.4 306.0 L358.5 301.4 L346.7 297.9 L335.0 295.5 L323.4 294.2 L312.0 294.0 L301.0 294.9 L290.3 297.0 L280.0 300.2 L270.2 304.4 L261.0 309.8 L252.4 316.1 L244.5 323.4 L237.3 331.7 L230.8 340.9 L225.1 350.9 L220.3 361.6 L216.3 373.1 L213.3 385.2 L211.1 397.9 L209.8 411.0 L209.5 424.6 L210.1 438.5 L211.6 452.6 L214.1 466.8 L217.4 481.2 L221.6 495.4 Z" fill="#8c6204"/><path d="M229.2 508.9 L235.2 522.9 L242.0 536.5 L249.5 549.8 L257.8 562.6 L266.6 574.8 L276.1 586.5 L286.2 597.4 L296.7 607.6 L307.6 617.0 L318.9 625.5 L330.5 633.1 L342.3 639.8 L354.2 645.4 L366.2 649.9 L378.1 653.4 L390.0 655.7 L401.7 657.0 L413.2 657.1 L424.4 656.2 L435.2 654.1 L445.6 650.9 L455.5 646.6 L464.8 641.2 L473.5 634.9 L481.6 627.5 L488.9 619.2 L495.4 610.1 L501.1 600.0 L506.0 589.3 L510.0 577.8 L513.1 565.7 L515.3 553.0 L516.6 539.8 L516.9 526.3 L516.3 512.4 L514.8 498.3 L512.3 484.1 L508.9 469.8 L504.6 455.5 L499.5 441.4 L493.5 427.4 L486.7 413.8 L479.2 400.5 L470.9 387.7 L462.0 375.5 L452.5 363.8 L442.5 352.9 L432.0 342.7 L421.0 333.3 L409.8 324.7 L398.2 317.2 L386.4 310.5 L374.5 304.9 L362.5 300.4 L350.5 296.9 L338.7 294.5 L326.9 293.3 L315.5 293.1 L304.3 294.1 L293.4 296.2 L283.1 299.4 L273.2 303.7 L263.9 309.1 L255.2 315.4 L247.1 322.8 L239.8 331.1 L233.3 340.2 L227.6 350.3 L222.7 361.0 L218.7 372.5 L215.6 384.6 L213.4 397.3 L212.1 410.5 L211.8 424.0 L212.4 437.9 L213.9 452.0 L216.4 466.2 L219.8 480.5 L224.1 494.8 Z" fill="#d8960a"/>
<path d="M233.7 507.7 L239.8 521.6 L246.8 535.2 L254.5 548.4 L262.9 561.2 L272.0 573.4 L281.7 585.0 L291.9 595.9 L302.7 606.0 L313.9 615.3 L325.4 623.8 L337.2 631.3 L349.2 637.9 L361.4 643.4 L373.6 647.9 L385.8 651.3 L398.0 653.6 L409.9 654.8 L421.7 654.9 L433.1 653.8 L444.1 651.7 L454.7 648.4 L464.8 644.1 L474.3 638.7 L483.2 632.3 L491.4 624.9 L498.8 616.6 L505.5 607.4 L511.3 597.3 L516.3 586.5 L520.4 575.0 L523.6 562.9 L525.8 550.2 L527.1 537.1 L527.4 523.5 L526.8 509.7 L525.2 495.6 L522.6 481.4 L519.2 467.1 L514.8 452.9 L509.5 438.8 L503.4 424.9 L496.5 411.3 L488.8 398.1 L480.4 385.3 L471.3 373.1 L461.6 361.5 L451.3 350.6 L440.6 340.5 L429.4 331.2 L417.9 322.7 L406.0 315.2 L394.0 308.6 L381.8 303.1 L369.6 298.6 L357.4 295.2 L345.3 292.9 L333.3 291.7 L321.6 291.6 L310.2 292.7 L299.1 294.8 L288.5 298.1 L278.4 302.4 L268.9 307.8 L260.0 314.2 L251.9 321.6 L244.4 329.9 L237.7 339.1 L231.9 349.2 L226.9 360.0 L222.8 371.5 L219.7 383.6 L217.4 396.3 L216.2 409.4 L215.8 423.0 L216.5 436.8 L218.1 450.9 L220.6 465.1 L224.1 479.4 L228.5 493.6 Z" fill="#8c6204"/><path d="M236.3 507.0 L242.4 520.9 L249.5 534.5 L257.3 547.7 L265.8 560.4 L275.0 572.6 L284.8 584.1 L295.2 595.0 L306.0 605.1 L317.4 614.4 L329.0 622.8 L341.0 630.3 L353.1 636.8 L365.5 642.3 L377.8 646.7 L390.2 650.1 L402.5 652.4 L414.6 653.5 L426.4 653.6 L438.0 652.5 L449.1 650.3 L459.9 647.0 L470.1 642.7 L479.7 637.3 L488.6 630.8 L496.9 623.4 L504.5 615.1 L511.2 605.9 L517.1 595.8 L522.1 585.0 L526.3 573.5 L529.5 561.4 L531.7 548.7 L533.0 535.5 L533.3 522.0 L532.7 508.1 L531.0 494.1 L528.5 479.9 L525.0 465.6 L520.5 451.4 L515.2 437.3 L509.0 423.4 L502.0 409.9 L494.2 396.7 L485.7 384.0 L476.5 371.8 L466.6 360.2 L456.3 349.4 L445.4 339.3 L434.1 330.0 L422.4 321.6 L410.5 314.1 L398.3 307.6 L386.0 302.1 L373.6 297.6 L361.3 294.3 L349.0 292.0 L336.9 290.8 L325.0 290.8 L313.5 291.9 L302.3 294.0 L291.6 297.3 L281.4 301.7 L271.8 307.1 L262.8 313.5 L254.5 321.0 L247.0 329.3 L240.2 338.5 L234.3 348.6 L229.3 359.4 L225.2 370.9 L222.0 383.0 L219.7 395.7 L218.4 408.8 L218.1 422.4 L218.8 436.2 L220.4 450.3 L223.0 464.5 L226.5 478.8 L230.9 493.0 Z" fill="#d8960a"/>
<path d="M240.8 505.8 L247.1 519.7 L254.3 533.2 L262.2 546.3 L270.9 559.0 L280.3 571.1 L290.3 582.6 L300.9 593.4 L312.0 603.5 L323.6 612.7 L335.5 621.0 L347.7 628.5 L360.1 634.9 L372.7 640.3 L385.3 644.7 L397.9 648.0 L410.4 650.2 L422.8 651.3 L434.9 651.3 L446.6 650.2 L458.0 647.9 L469.0 644.6 L479.4 640.2 L489.2 634.7 L498.3 628.2 L506.7 620.8 L514.4 612.4 L521.3 603.2 L527.3 593.1 L532.4 582.3 L536.6 570.8 L539.9 558.6 L542.2 545.9 L543.5 532.8 L543.8 519.2 L543.1 505.4 L541.5 491.4 L538.8 477.2 L535.2 463.0 L530.7 448.8 L525.2 434.7 L518.9 420.9 L511.7 407.4 L503.8 394.2 L495.1 381.6 L485.7 369.5 L475.7 358.0 L465.1 347.2 L454.0 337.1 L442.4 327.9 L430.5 319.5 L418.3 312.1 L405.9 305.7 L393.3 300.2 L380.7 295.9 L368.1 292.6 L355.6 290.4 L343.2 289.3 L331.1 289.3 L319.4 290.4 L308.0 292.6 L297.0 296.0 L286.6 300.4 L276.8 305.9 L267.7 312.3 L259.3 319.8 L251.6 328.2 L244.7 337.4 L238.7 347.5 L233.6 358.3 L229.4 369.8 L226.1 382.0 L223.8 394.6 L222.5 407.8 L222.2 421.3 L222.9 435.2 L224.5 449.2 L227.2 463.4 L230.8 477.6 L235.3 491.8 Z" fill="#8c6204"/><path d="M243.3 505.2 L249.7 519.0 L257.0 532.5 L265.0 545.6 L273.8 558.2 L283.3 570.3 L293.5 581.8 L304.2 592.5 L315.4 602.5 L327.1 611.7 L339.1 620.0 L351.5 627.4 L364.0 633.8 L376.7 639.2 L389.5 643.6 L402.2 646.8 L414.9 649.0 L427.4 650.1 L439.6 650.0 L451.5 648.8 L463.0 646.6 L474.1 643.2 L484.6 638.8 L494.5 633.3 L503.7 626.8 L512.3 619.3 L520.0 610.9 L527.0 601.7 L533.0 591.6 L538.2 580.7 L542.5 569.2 L545.7 557.1 L548.0 544.4 L549.4 531.2 L549.7 517.7 L549.0 503.9 L547.3 489.8 L544.6 475.7 L541.0 461.5 L536.4 447.3 L530.9 433.3 L524.5 419.5 L517.2 406.0 L509.2 392.9 L500.4 380.2 L490.9 368.1 L480.7 356.7 L470.0 345.9 L458.8 335.9 L447.1 326.7 L435.1 318.4 L422.7 311.0 L410.2 304.6 L397.5 299.2 L384.7 294.9 L372.0 291.6 L359.3 289.4 L346.8 288.4 L334.6 288.4 L322.7 289.6 L311.2 291.9 L300.1 295.2 L289.6 299.7 L279.7 305.2 L270.4 311.7 L261.9 319.1 L254.2 327.5 L247.2 336.8 L241.2 346.9 L236.0 357.7 L231.7 369.2 L228.4 381.4 L226.1 394.1 L224.8 407.2 L224.5 420.7 L225.2 434.6 L226.9 448.6 L229.6 462.8 L233.2 477.0 L237.8 491.1 Z" fill="#d8960a"/>
<path d="M247.8 504.0 L254.4 517.7 L261.8 531.2 L270.0 544.2 L279.0 556.8 L288.7 568.8 L299.0 580.3 L309.9 591.0 L321.4 600.9 L333.3 610.0 L345.6 618.3 L358.2 625.6 L371.0 631.9 L383.9 637.3 L396.9 641.5 L409.9 644.7 L422.8 646.8 L435.6 647.8 L448.0 647.7 L460.2 646.5 L471.9 644.2 L483.2 640.8 L493.9 636.3 L504.0 630.7 L513.4 624.2 L522.1 616.7 L530.0 608.3 L537.0 599.0 L543.2 588.9 L548.5 578.0 L552.8 566.5 L556.2 554.3 L558.5 541.6 L559.8 528.5 L560.1 515.0 L559.4 501.2 L557.7 487.1 L555.0 473.0 L551.2 458.8 L546.5 444.7 L540.9 430.7 L534.4 416.9 L527.0 403.5 L518.8 390.4 L509.8 377.8 L500.1 365.8 L489.7 354.4 L478.8 343.7 L467.4 333.7 L455.4 324.6 L443.2 316.4 L430.6 309.0 L417.8 302.7 L404.8 297.4 L391.8 293.1 L378.8 289.9 L365.9 287.8 L353.2 286.8 L340.7 286.9 L328.6 288.1 L316.8 290.5 L305.6 293.9 L294.9 298.4 L284.8 303.9 L275.4 310.4 L266.7 317.9 L258.8 326.4 L251.7 335.7 L245.5 345.8 L240.3 356.6 L235.9 368.2 L232.6 380.3 L230.3 393.0 L228.9 406.1 L228.6 419.7 L229.3 433.5 L231.1 447.5 L233.8 461.7 L237.5 475.8 L242.2 490.0 Z" fill="#8c6204"/><path d="M250.4 503.3 L257.0 517.0 L264.5 530.4 L272.8 543.5 L281.9 556.0 L291.7 568.0 L302.1 579.4 L313.2 590.1 L324.8 600.0 L336.8 609.1 L349.2 617.3 L361.9 624.6 L374.9 630.9 L388.0 636.2 L401.1 640.4 L414.3 643.6 L427.3 645.6 L440.2 646.6 L452.8 646.5 L465.0 645.2 L476.9 642.8 L488.3 639.4 L499.1 634.9 L509.3 629.3 L518.8 622.8 L527.6 615.2 L535.6 606.8 L542.7 597.5 L549.0 587.4 L554.3 576.5 L558.6 564.9 L562.0 552.8 L564.4 540.1 L565.7 527.0 L566.0 513.4 L565.3 499.6 L563.5 485.6 L560.8 471.5 L557.0 457.3 L552.2 443.2 L546.5 429.2 L539.9 415.5 L532.5 402.1 L524.1 389.0 L515.1 376.5 L505.3 364.5 L494.8 353.1 L483.7 342.4 L472.2 332.5 L460.1 323.4 L447.7 315.2 L435.0 307.9 L422.1 301.6 L409.0 296.4 L395.8 292.1 L382.7 288.9 L369.6 286.9 L356.8 285.9 L344.2 286.1 L331.9 287.3 L320.0 289.7 L308.7 293.1 L297.8 297.6 L287.6 303.2 L278.1 309.8 L269.3 317.3 L261.4 325.7 L254.2 335.0 L248.0 345.2 L242.7 356.0 L238.3 367.6 L234.9 379.7 L232.6 392.4 L231.2 405.6 L230.9 419.1 L231.7 432.9 L233.4 446.9 L236.2 461.0 L239.9 475.2 L244.7 489.3 Z" fill="#d8960a"/>
<path d="M254.9 502.1 L261.7 515.8 L269.3 529.1 L277.8 542.1 L287.0 554.6 L297.0 566.6 L307.7 577.9 L319.0 588.5 L330.8 598.4 L343.0 607.4 L355.7 615.5 L368.6 622.7 L381.8 629.0 L395.2 634.2 L408.6 638.4 L422.0 641.5 L435.2 643.5 L448.3 644.4 L461.2 644.2 L473.7 642.9 L485.8 640.4 L497.3 636.9 L508.4 632.4 L518.8 626.8 L528.4 620.2 L537.4 612.6 L545.5 604.1 L552.8 594.8 L559.1 584.7 L564.5 573.8 L569.0 562.2 L572.4 550.0 L574.8 537.4 L576.1 524.2 L576.4 510.7 L575.7 496.9 L573.9 482.9 L571.1 468.8 L567.2 454.7 L562.4 440.6 L556.6 426.7 L549.8 413.0 L542.2 399.6 L533.7 386.6 L524.5 374.1 L514.5 362.1 L503.8 350.8 L492.5 340.2 L480.7 330.4 L468.5 321.3 L455.8 313.2 L442.9 306.0 L429.7 299.7 L416.3 294.5 L402.9 290.3 L389.5 287.2 L376.3 285.2 L363.2 284.3 L350.3 284.5 L337.8 285.9 L325.7 288.3 L314.2 291.8 L303.1 296.3 L292.7 301.9 L283.1 308.5 L274.1 316.1 L266.0 324.6 L258.7 333.9 L252.4 344.1 L247.0 354.9 L242.5 366.5 L239.1 378.7 L236.7 391.4 L235.4 404.5 L235.1 418.0 L235.8 431.8 L237.6 445.8 L240.4 459.9 L244.3 474.0 L249.1 488.1 Z" fill="#8c6204"/><path d="M257.5 501.4 L264.3 515.1 L272.0 528.4 L280.6 541.4 L290.0 553.8 L300.1 565.8 L310.8 577.0 L322.2 587.6 L334.1 597.4 L346.5 606.4 L359.3 614.5 L372.4 621.7 L385.8 627.9 L399.2 633.1 L412.8 637.2 L426.3 640.3 L439.7 642.3 L452.9 643.1 L465.9 642.9 L478.5 641.5 L490.7 639.1 L502.4 635.6 L513.6 631.0 L524.1 625.4 L533.9 618.7 L542.9 611.1 L551.1 602.6 L558.4 593.3 L564.8 583.1 L570.3 572.2 L574.8 560.7 L578.2 548.5 L580.6 535.8 L582.0 522.7 L582.3 509.2 L581.6 495.4 L579.7 481.4 L576.9 467.3 L573.0 453.2 L568.1 439.1 L562.2 425.2 L555.4 411.5 L547.7 398.2 L539.1 385.2 L529.7 372.7 L519.6 360.8 L508.9 349.5 L497.5 339.0 L485.5 329.1 L473.1 320.1 L460.4 312.0 L447.3 304.9 L433.9 298.7 L420.5 293.5 L406.9 289.3 L393.4 286.3 L380.0 284.3 L366.7 283.4 L353.8 283.7 L341.1 285.0 L328.9 287.5 L317.2 291.0 L306.1 295.6 L295.6 301.2 L285.8 307.9 L276.8 315.4 L268.6 323.9 L261.3 333.3 L254.8 343.4 L249.4 354.3 L244.9 365.9 L241.5 378.1 L239.0 390.8 L237.7 403.9 L237.4 417.4 L238.1 431.2 L240.0 445.2 L242.8 459.3 L246.7 473.4 L251.6 487.5 Z" fill="#d8960a"/>
<path d="M262.1 500.2 L269.0 513.8 L276.9 527.1 L285.6 540.0 L295.1 552.4 L305.4 564.3 L316.4 575.5 L328.0 586.1 L340.2 595.8 L352.8 604.7 L365.8 612.8 L379.1 619.9 L392.7 626.0 L406.4 631.1 L420.2 635.2 L434.0 638.2 L447.7 640.1 L461.1 640.9 L474.3 640.6 L487.2 639.2 L499.6 636.7 L511.5 633.1 L522.8 628.5 L533.5 622.8 L543.5 616.2 L552.7 608.5 L561.0 600.0 L568.5 590.6 L575.0 580.4 L580.5 569.5 L585.1 558.0 L588.6 545.8 L591.0 533.1 L592.4 519.9 L592.7 506.4 L591.9 492.7 L590.1 478.7 L587.2 464.6 L583.2 450.5 L578.2 436.5 L572.2 422.6 L565.2 409.0 L557.4 395.7 L548.6 382.8 L539.1 370.3 L528.8 358.5 L517.8 347.3 L506.2 336.7 L494.1 327.0 L481.5 318.1 L468.4 310.0 L455.1 302.9 L441.5 296.8 L427.8 291.7 L414.0 287.6 L400.3 284.6 L386.6 282.7 L373.1 281.9 L359.9 282.2 L347.1 283.6 L334.6 286.1 L322.7 289.7 L311.4 294.3 L300.7 300.0 L290.8 306.6 L281.6 314.3 L273.2 322.8 L265.8 332.2 L259.3 342.3 L253.7 353.3 L249.2 364.8 L245.7 377.0 L243.2 389.7 L241.8 402.8 L241.5 416.3 L242.3 430.1 L244.2 444.1 L247.1 458.2 L251.1 472.3 L256.1 486.3 Z" fill="#8c6204"/><path d="M264.6 499.5 L271.7 513.1 L279.6 526.4 L288.4 539.3 L298.1 551.6 L308.5 563.5 L319.6 574.7 L331.3 585.2 L343.5 594.9 L356.3 603.8 L369.4 611.8 L382.9 618.9 L396.6 625.0 L410.5 630.0 L424.4 634.1 L438.3 637.0 L452.1 638.9 L465.7 639.7 L479.1 639.3 L492.0 637.9 L504.6 635.4 L516.6 631.8 L528.1 627.1 L538.8 621.4 L548.9 614.7 L558.2 607.1 L566.6 598.5 L574.1 589.1 L580.7 578.9 L586.3 568.0 L590.9 556.4 L594.4 544.2 L596.9 531.5 L598.3 518.4 L598.6 504.9 L597.8 491.1 L595.9 477.2 L592.9 463.1 L588.9 449.0 L583.9 435.0 L577.8 421.2 L570.8 407.6 L562.8 394.3 L554.0 381.4 L544.4 369.0 L534.0 357.2 L522.9 346.0 L511.2 335.5 L498.9 325.8 L486.1 316.9 L473.0 308.9 L459.5 301.8 L445.8 295.7 L432.0 290.6 L418.0 286.6 L404.1 283.6 L390.3 281.7 L376.7 281.0 L363.4 281.3 L350.4 282.7 L337.9 285.3 L325.8 288.9 L314.4 293.6 L303.6 299.3 L293.6 305.9 L284.3 313.6 L275.9 322.1 L268.3 331.5 L261.7 341.7 L256.1 352.6 L251.6 364.2 L248.0 376.4 L245.5 389.1 L244.2 402.2 L243.9 415.7 L244.7 429.5 L246.5 443.5 L249.5 457.5 L253.5 471.6 L258.6 485.6 Z" fill="#d8960a"/>
<path d="M269.2 498.2 L276.4 511.8 L284.5 525.1 L293.4 537.9 L303.3 550.2 L313.8 562.0 L325.1 573.2 L337.1 583.6 L349.6 593.2 L362.5 602.1 L375.9 610.0 L389.6 617.0 L403.6 623.1 L417.7 628.1 L431.9 632.0 L446.0 634.9 L460.1 636.8 L473.9 637.5 L487.5 637.1 L500.7 635.6 L513.4 633.0 L525.7 629.3 L537.3 624.6 L548.3 618.9 L558.5 612.1 L567.9 604.5 L576.5 595.9 L584.1 586.5 L590.8 576.2 L596.5 565.3 L601.2 553.7 L604.8 541.5 L607.3 528.8 L608.7 515.7 L609.0 502.2 L608.2 488.4 L606.2 474.5 L603.2 460.5 L599.1 446.4 L594.0 432.4 L587.8 418.6 L580.6 405.0 L572.5 391.8 L563.6 379.0 L553.7 366.6 L543.2 354.8 L531.9 343.7 L519.9 333.3 L507.4 323.6 L494.5 314.8 L481.1 306.8 L467.4 299.8 L453.4 293.8 L439.3 288.8 L425.1 284.8 L411.0 281.9 L396.9 280.1 L383.1 279.4 L369.5 279.8 L356.3 281.3 L343.6 283.9 L331.3 287.5 L319.7 292.2 L308.7 298.0 L298.5 304.7 L289.1 312.4 L280.5 321.0 L272.9 330.4 L266.2 340.6 L260.5 351.6 L255.8 363.2 L252.2 375.3 L249.7 388.0 L248.3 401.2 L248.0 414.7 L248.8 428.4 L250.8 442.4 L253.8 456.4 L257.9 470.5 L263.0 484.4 Z" fill="#8c6204"/><path d="M271.8 497.6 L279.0 511.1 L287.2 524.3 L296.3 537.1 L306.2 549.4 L316.9 561.2 L328.3 572.3 L340.3 582.7 L352.9 592.3 L366.1 601.1 L379.6 609.0 L393.4 616.0 L407.5 622.0 L421.7 627.0 L436.1 630.9 L450.3 633.8 L464.5 635.5 L478.5 636.2 L492.2 635.8 L505.5 634.3 L518.4 631.6 L530.8 628.0 L542.5 623.2 L553.6 617.5 L563.9 610.7 L573.4 603.0 L582.0 594.4 L589.8 585.0 L596.5 574.7 L602.3 563.8 L607.0 552.2 L610.6 540.0 L613.1 527.3 L614.5 514.2 L614.8 500.7 L614.0 486.9 L612.0 473.0 L609.0 459.0 L604.8 444.9 L599.6 431.0 L593.4 417.2 L586.2 403.6 L578.0 390.4 L568.9 377.6 L559.0 365.3 L548.3 353.5 L536.9 342.4 L524.9 332.0 L512.2 322.4 L499.1 313.6 L485.6 305.7 L471.8 298.7 L457.7 292.7 L443.4 287.8 L429.1 283.8 L414.9 281.0 L400.7 279.2 L386.7 278.5 L373.0 278.9 L359.7 280.5 L346.8 283.1 L334.4 286.8 L322.7 291.5 L311.6 297.3 L301.3 304.0 L291.8 311.7 L283.1 320.3 L275.4 329.8 L268.7 340.0 L262.9 350.9 L258.2 362.5 L254.6 374.7 L252.1 387.4 L250.7 400.6 L250.4 414.1 L251.2 427.8 L253.2 441.7 L256.2 455.8 L260.4 469.8 L265.6 483.8 Z" fill="#d8960a"/>
<path d="M276.4 496.3 L283.8 509.8 L292.1 523.0 L301.3 535.8 L311.4 548.0 L322.3 559.7 L333.9 570.8 L346.1 581.1 L359.0 590.7 L372.3 599.4 L386.1 607.3 L400.1 614.2 L414.5 620.1 L429.0 625.0 L443.5 628.9 L458.0 631.7 L472.4 633.4 L486.7 634.0 L500.6 633.5 L514.1 631.9 L527.2 629.3 L539.8 625.5 L551.7 620.7 L563.0 614.9 L573.5 608.1 L583.1 600.4 L591.9 591.8 L599.8 582.3 L606.6 572.1 L612.5 561.1 L617.2 549.5 L620.9 537.3 L623.5 524.6 L624.9 511.4 L625.2 498.0 L624.3 484.2 L622.3 470.3 L619.2 456.3 L615.0 442.3 L609.7 428.4 L603.3 414.6 L596.0 401.1 L587.7 387.9 L578.4 375.2 L568.3 362.9 L557.5 351.2 L545.9 340.1 L533.6 329.8 L520.8 320.2 L507.4 311.5 L493.7 303.7 L479.6 296.8 L465.3 290.8 L450.8 285.9 L436.2 282.0 L421.7 279.2 L407.3 277.5 L393.1 276.9 L379.2 277.4 L365.6 279.0 L352.5 281.7 L340.0 285.4 L328.0 290.2 L316.8 296.0 L306.3 302.8 L296.6 310.5 L287.8 319.2 L280.0 328.6 L273.1 338.9 L267.3 349.8 L262.5 361.5 L258.8 373.7 L256.3 386.4 L254.8 399.5 L254.6 413.0 L255.4 426.7 L257.4 440.6 L260.5 454.6 L264.8 468.6 L270.1 482.6 Z" fill="#8c6204"/><path d="M279.0 495.6 L286.4 509.1 L294.8 522.3 L304.2 535.0 L314.3 547.2 L325.3 558.9 L337.0 569.9 L349.4 580.2 L362.4 589.8 L375.8 598.5 L389.7 606.3 L403.9 613.1 L418.4 619.0 L433.0 623.9 L447.7 627.7 L462.4 630.5 L476.9 632.2 L491.3 632.8 L505.3 632.2 L519.0 630.6 L532.2 627.9 L544.9 624.2 L556.9 619.3 L568.3 613.5 L578.9 606.7 L588.6 598.9 L597.5 590.3 L605.4 580.8 L612.3 570.5 L618.2 559.6 L623.0 547.9 L626.7 535.7 L629.3 523.0 L630.7 509.9 L631.0 496.4 L630.2 482.7 L628.1 468.8 L625.0 454.8 L620.7 440.8 L615.4 426.9 L608.9 413.2 L601.5 399.7 L593.1 386.5 L583.8 373.8 L573.6 361.5 L562.6 349.9 L550.9 338.9 L538.5 328.6 L525.6 319.0 L512.1 310.3 L498.2 302.5 L484.0 295.7 L469.6 289.8 L454.9 284.9 L440.2 281.1 L425.6 278.3 L411.0 276.6 L396.7 276.0 L382.6 276.5 L369.0 278.2 L355.7 280.9 L343.1 284.6 L331.0 289.5 L319.7 295.3 L309.1 302.1 L299.3 309.9 L290.5 318.5 L282.5 328.0 L275.6 338.2 L269.7 349.2 L264.9 360.9 L261.2 373.1 L258.6 385.8 L257.2 398.9 L256.9 412.4 L257.8 426.1 L259.8 440.0 L263.0 454.0 L267.2 468.0 L272.6 481.9 Z" fill="#d8960a"/>
<path d="M283.6 494.4 L291.2 507.9 L299.7 521.0 L309.2 533.6 L319.6 545.8 L330.7 557.4 L342.6 568.4 L355.2 578.7 L368.4 588.1 L382.1 596.8 L396.2 604.5 L410.7 611.3 L425.4 617.1 L440.2 622.0 L455.1 625.7 L470.0 628.4 L484.8 630.0 L499.4 630.6 L513.7 630.0 L527.6 628.3 L541.0 625.6 L553.9 621.7 L566.1 616.9 L577.7 611.0 L588.4 604.1 L598.3 596.3 L607.3 587.7 L615.4 578.2 L622.4 567.9 L628.4 556.9 L633.3 545.2 L637.0 533.0 L639.6 520.3 L641.1 507.2 L641.4 493.7 L640.5 480.0 L638.4 466.1 L635.2 452.1 L630.9 438.2 L625.4 424.3 L618.9 410.6 L611.3 397.1 L602.8 384.0 L593.3 371.4 L582.9 359.2 L571.8 347.6 L559.9 336.6 L547.3 326.3 L534.1 316.9 L520.4 308.2 L506.3 300.5 L491.8 293.7 L477.1 287.9 L462.3 283.0 L447.4 279.3 L432.5 276.6 L417.7 275.0 L403.1 274.4 L388.8 275.0 L374.9 276.7 L361.5 279.4 L348.6 283.3 L336.4 288.1 L324.8 294.0 L314.1 300.9 L304.2 308.7 L295.2 317.3 L287.1 326.8 L280.1 337.1 L274.1 348.1 L269.2 359.8 L265.5 372.0 L262.9 384.7 L261.4 397.8 L261.1 411.3 L262.0 425.0 L264.1 438.9 L267.3 452.9 L271.6 466.8 L277.1 480.7 Z" fill="#8c6204"/><path d="M286.2 493.7 L293.9 507.1 L302.5 520.2 L312.1 532.9 L322.5 545.0 L333.8 556.6 L345.8 567.5 L358.5 577.8 L371.8 587.2 L385.6 595.8 L399.9 603.5 L414.4 610.3 L429.3 616.1 L444.3 620.8 L459.3 624.6 L474.4 627.2 L489.3 628.8 L504.0 629.3 L518.4 628.7 L532.4 627.0 L546.0 624.2 L559.0 620.4 L571.3 615.5 L583.0 609.6 L593.8 602.7 L603.8 594.9 L612.9 586.2 L621.0 576.7 L628.1 566.4 L634.1 555.4 L639.0 543.7 L642.8 531.5 L645.4 518.8 L646.9 505.7 L647.2 492.2 L646.3 478.5 L644.2 464.6 L641.0 450.7 L636.6 436.7 L631.1 422.8 L624.5 409.2 L616.8 395.7 L608.2 382.6 L598.6 370.0 L588.2 357.8 L576.9 346.2 L564.9 335.3 L552.2 325.1 L538.9 315.7 L525.1 307.1 L510.8 299.4 L496.3 292.6 L481.4 286.8 L466.4 282.0 L451.4 278.3 L436.3 275.6 L421.4 274.0 L406.7 273.6 L392.3 274.2 L378.2 275.9 L364.7 278.6 L351.7 282.5 L339.4 287.4 L327.7 293.3 L316.9 300.2 L306.9 308.0 L297.8 316.7 L289.7 326.2 L282.6 336.5 L276.6 347.5 L271.7 359.2 L267.9 371.4 L265.2 384.1 L263.8 397.2 L263.5 410.7 L264.4 424.4 L266.5 438.3 L269.7 452.2 L274.1 466.2 L279.6 480.0 Z" fill="#d8960a"/>
<path d="M290.9 492.5 L298.6 505.9 L307.4 518.9 L317.1 531.5 L327.8 543.6 L339.2 555.1 L351.4 566.0 L364.3 576.2 L377.8 585.6 L391.9 594.1 L406.3 601.7 L421.2 608.4 L436.2 614.2 L451.5 618.9 L466.8 622.6 L482.1 625.2 L497.2 626.7 L512.2 627.1 L526.8 626.4 L541.0 624.7 L554.8 621.8 L568.0 617.9 L580.5 613.0 L592.4 607.1 L603.4 600.1 L613.5 592.3 L622.7 583.6 L631.0 574.0 L638.2 563.7 L644.3 552.7 L649.3 541.0 L653.1 528.8 L655.8 516.1 L657.2 503.0 L657.5 489.5 L656.6 475.8 L654.5 461.9 L651.2 448.0 L646.7 434.1 L641.1 420.2 L634.4 406.6 L626.6 393.2 L617.9 380.2 L608.1 367.6 L597.5 355.4 L586.0 343.9 L573.8 333.0 L560.9 322.9 L547.4 313.5 L533.4 305.0 L518.9 297.3 L504.1 290.6 L489.0 284.9 L473.8 280.2 L458.5 276.5 L443.2 273.9 L428.0 272.4 L413.1 272.0 L398.5 272.6 L384.2 274.4 L370.4 277.2 L357.3 281.1 L344.7 286.1 L332.9 292.0 L321.9 298.9 L311.7 306.8 L302.5 315.5 L294.3 325.1 L287.1 335.4 L281.0 346.4 L276.0 358.1 L272.1 370.3 L269.5 383.0 L268.0 396.1 L267.7 409.6 L268.7 423.3 L270.8 437.1 L274.1 451.1 L278.6 465.0 L284.2 478.8 Z" fill="#8c6204"/><path d="M293.5 491.8 L301.3 505.1 L310.2 518.2 L320.0 530.7 L330.7 542.8 L342.3 554.3 L354.6 565.2 L367.6 575.3 L381.2 584.6 L395.4 593.1 L410.0 600.7 L425.0 607.4 L440.2 613.1 L455.5 617.8 L471.0 621.4 L486.4 624.0 L501.7 625.5 L516.7 625.9 L531.5 625.2 L545.9 623.4 L559.8 620.5 L573.1 616.6 L585.7 611.6 L597.6 605.6 L608.7 598.7 L619.0 590.8 L628.3 582.1 L636.6 572.5 L643.8 562.2 L650.0 551.2 L655.0 539.5 L658.9 527.3 L661.6 514.6 L663.0 501.4 L663.3 488.0 L662.4 474.3 L660.2 460.4 L656.9 446.5 L652.4 432.6 L646.7 418.8 L640.0 405.2 L632.1 391.8 L623.3 378.8 L613.5 366.2 L602.7 354.1 L591.2 342.6 L578.8 331.8 L565.8 321.6 L552.2 312.3 L538.0 303.8 L523.4 296.2 L508.5 289.5 L493.3 283.8 L477.9 279.1 L462.5 275.5 L447.1 272.9 L431.8 271.5 L416.7 271.1 L401.9 271.8 L387.6 273.6 L373.7 276.4 L360.4 280.4 L347.7 285.3 L335.8 291.3 L324.7 298.2 L314.5 306.1 L305.2 314.8 L296.9 324.4 L289.6 334.7 L283.5 345.8 L278.4 357.4 L274.6 369.7 L271.9 382.4 L270.4 395.5 L270.1 409.0 L271.1 422.6 L273.2 436.5 L276.5 450.4 L281.1 464.3 L286.7 478.1 Z" fill="#d8960a"/>
<path d="M298.1 490.5 L306.1 503.9 L315.1 516.8 L325.1 529.4 L336.0 541.4 L347.7 552.8 L360.2 563.6 L373.5 573.7 L387.3 583.0 L401.7 591.4 L416.5 599.0 L431.7 605.6 L447.1 611.2 L462.7 615.8 L478.4 619.4 L494.1 621.9 L509.6 623.3 L524.9 623.7 L539.9 622.9 L554.5 621.1 L568.6 618.1 L582.1 614.2 L594.9 609.2 L607.0 603.1 L618.3 596.2 L628.7 588.3 L638.1 579.5 L646.5 569.9 L653.9 559.5 L660.1 548.5 L665.2 536.8 L669.1 524.6 L671.9 511.8 L673.4 498.7 L673.6 485.3 L672.7 471.6 L670.5 457.8 L667.1 443.9 L662.5 430.0 L656.7 416.2 L649.9 402.6 L641.9 389.3 L632.9 376.3 L622.9 363.8 L612.0 351.7 L600.3 340.3 L587.8 329.5 L574.5 319.4 L560.7 310.2 L546.3 301.7 L531.5 294.2 L516.3 287.6 L500.9 281.9 L485.3 277.3 L469.6 273.7 L453.9 271.2 L438.4 269.8 L423.1 269.5 L408.1 270.2 L393.5 272.1 L379.4 275.0 L365.9 279.0 L353.1 284.0 L341.0 290.0 L329.7 297.0 L319.3 304.9 L309.9 313.7 L301.5 323.3 L294.1 333.6 L287.9 344.7 L282.8 356.3 L278.9 368.6 L276.1 381.3 L274.6 394.4 L274.4 407.9 L275.3 421.5 L277.5 435.4 L280.9 449.3 L285.5 463.2 L291.3 476.9 Z" fill="#8c6204"/><path d="M300.8 489.8 L308.8 503.1 L317.9 516.1 L327.9 528.6 L338.9 540.6 L350.8 552.0 L363.4 562.8 L376.7 572.8 L390.7 582.1 L405.2 590.5 L420.2 598.0 L435.5 604.6 L451.1 610.2 L466.8 614.7 L482.6 618.3 L498.4 620.7 L514.0 622.1 L529.5 622.4 L544.6 621.6 L559.3 619.8 L573.5 616.8 L587.1 612.8 L600.1 607.8 L612.3 601.7 L623.6 594.7 L634.1 586.8 L643.6 578.0 L652.1 568.4 L659.5 558.0 L665.8 547.0 L671.0 535.3 L674.9 523.0 L677.6 510.3 L679.2 497.2 L679.4 483.8 L678.4 470.1 L676.2 456.3 L672.8 442.4 L668.2 428.5 L662.4 414.7 L655.4 401.2 L647.4 387.9 L638.3 374.9 L628.3 362.4 L617.3 350.4 L605.4 339.0 L592.8 328.2 L579.4 318.2 L565.5 308.9 L551.0 300.5 L536.0 293.0 L520.7 286.5 L505.1 280.9 L489.4 276.3 L473.6 272.7 L457.8 270.3 L442.2 268.9 L426.7 268.6 L411.6 269.4 L396.9 271.2 L382.7 274.2 L369.1 278.2 L356.1 283.2 L343.9 289.3 L332.6 296.3 L322.1 304.2 L312.6 313.0 L304.1 322.6 L296.7 333.0 L290.4 344.0 L285.2 355.7 L281.3 368.0 L278.5 380.7 L277.0 393.8 L276.8 407.2 L277.7 420.9 L280.0 434.7 L283.4 448.6 L288.0 462.5 L293.8 476.3 Z" fill="#d8960a"/>
<path d="M305.4 488.6 L313.6 501.9 L322.8 514.8 L333.0 527.2 L344.2 539.2 L356.2 550.5 L369.1 561.2 L382.6 571.2 L396.8 580.4 L411.5 588.8 L426.7 596.2 L442.2 602.7 L458.0 608.3 L474.0 612.8 L490.0 616.2 L506.1 618.7 L522.0 620.0 L537.6 620.2 L553.0 619.4 L567.9 617.4 L582.3 614.4 L596.1 610.4 L609.3 605.3 L621.6 599.2 L633.2 592.2 L643.8 584.2 L653.4 575.4 L662.0 565.8 L669.6 555.4 L675.9 544.3 L681.1 532.6 L685.2 520.3 L687.9 507.6 L689.4 494.5 L689.7 481.1 L688.7 467.4 L686.5 453.6 L683.0 439.7 L678.3 425.9 L672.4 412.2 L665.3 398.6 L657.2 385.4 L647.9 372.5 L637.7 360.0 L626.6 348.0 L614.5 336.7 L601.7 326.0 L588.2 316.0 L574.0 306.8 L559.3 298.5 L544.1 291.0 L528.5 284.5 L512.7 279.0 L496.8 274.4 L480.7 271.0 L464.7 268.6 L448.8 267.2 L433.1 267.0 L417.8 267.8 L402.9 269.8 L388.4 272.8 L374.6 276.8 L361.5 281.9 L349.1 288.0 L337.6 295.0 L327.0 303.0 L317.3 311.8 L308.7 321.5 L301.2 331.8 L294.8 342.9 L289.6 354.6 L285.6 366.9 L282.8 379.6 L281.3 392.7 L281.0 406.1 L282.0 419.8 L284.3 433.6 L287.8 447.5 L292.5 461.3 L298.4 475.0 Z" fill="#8c6204"/><path d="M308.1 487.9 L316.3 501.1 L325.6 514.0 L335.9 526.5 L347.2 538.4 L359.3 549.7 L372.2 560.4 L385.9 570.3 L400.2 579.5 L415.0 587.8 L430.3 595.2 L446.0 601.7 L461.9 607.2 L478.1 611.7 L494.2 615.1 L510.4 617.5 L526.4 618.8 L542.2 619.0 L557.7 618.1 L572.7 616.1 L587.2 613.1 L601.2 609.0 L614.4 603.9 L626.9 597.8 L638.5 590.8 L649.2 582.8 L658.9 573.9 L667.6 564.3 L675.2 553.9 L681.6 542.8 L686.9 531.1 L690.9 518.8 L693.7 506.1 L695.2 493.0 L695.5 479.6 L694.5 465.9 L692.2 452.1 L688.7 438.3 L683.9 424.4 L678.0 410.7 L670.9 397.2 L662.6 383.9 L653.3 371.1 L643.0 358.6 L631.8 346.7 L619.6 335.4 L606.7 324.7 L593.1 314.7 L578.8 305.6 L563.9 297.3 L548.6 289.9 L532.9 283.4 L517.0 277.9 L500.9 273.4 L484.7 270.0 L468.6 267.6 L452.5 266.3 L436.7 266.1 L421.3 267.0 L406.2 268.9 L391.7 272.0 L377.8 276.1 L364.5 281.2 L352.1 287.3 L340.4 294.3 L329.7 302.3 L320.0 311.1 L311.3 320.8 L303.7 331.2 L297.3 342.3 L292.1 354.0 L288.0 366.2 L285.2 379.0 L283.7 392.1 L283.5 405.5 L284.5 419.2 L286.7 433.0 L290.3 446.8 L295.0 460.6 L301.0 474.4 Z" fill="#d8960a"/>
<path d="M312.8 486.6 L321.1 499.8 L330.6 512.7 L341.0 525.1 L352.5 537.0 L364.8 548.2 L377.9 558.9 L391.8 568.7 L406.3 577.8 L421.3 586.1 L436.9 593.4 L452.8 599.9 L468.9 605.3 L485.3 609.7 L501.7 613.1 L518.1 615.4 L534.3 616.6 L550.3 616.8 L566.0 615.9 L581.3 613.8 L596.0 610.7 L610.2 606.6 L623.6 601.5 L636.2 595.3 L648.0 588.2 L658.9 580.2 L668.7 571.3 L677.5 561.7 L685.2 551.2 L691.7 540.1 L697.0 528.4 L701.1 516.1 L703.9 503.4 L705.5 490.3 L705.7 476.9 L704.7 463.2 L702.4 449.5 L698.8 435.6 L694.0 421.8 L688.0 408.1 L680.7 394.6 L672.4 381.4 L662.9 368.6 L652.5 356.2 L641.0 344.3 L628.7 333.1 L615.6 322.4 L601.7 312.5 L587.2 303.4 L572.2 295.2 L556.6 287.8 L540.7 281.4 L524.6 276.0 L508.2 271.6 L491.8 268.2 L475.4 265.9 L459.2 264.6 L443.2 264.5 L427.5 265.4 L412.2 267.5 L397.5 270.5 L383.3 274.7 L369.9 279.8 L357.3 286.0 L345.5 293.1 L334.6 301.1 L324.8 310.0 L316.0 319.6 L308.3 330.1 L301.8 341.2 L296.5 352.9 L292.4 365.1 L289.6 377.9 L288.0 391.0 L287.8 404.4 L288.8 418.0 L291.1 431.8 L294.7 445.7 L299.5 459.5 L305.5 473.1 Z" fill="#8c6204"/><path d="M315.4 485.9 L323.8 499.1 L333.4 511.9 L343.9 524.3 L355.4 536.1 L367.8 547.4 L381.1 558.0 L395.1 567.8 L409.7 576.9 L424.9 585.1 L440.5 592.5 L456.5 598.8 L472.8 604.2 L489.3 608.6 L505.9 612.0 L522.4 614.2 L538.8 615.4 L554.9 615.6 L570.7 614.6 L586.1 612.5 L601.0 609.4 L615.2 605.3 L628.7 600.1 L641.5 593.9 L653.4 586.8 L664.3 578.8 L674.2 569.9 L683.1 560.2 L690.8 549.7 L697.4 538.6 L702.8 526.9 L706.9 514.6 L709.7 501.9 L711.3 488.8 L711.5 475.4 L710.5 461.7 L708.1 448.0 L704.5 434.1 L699.7 420.4 L693.6 406.7 L686.3 393.2 L677.8 380.0 L668.3 367.2 L657.8 354.9 L646.3 343.0 L633.8 331.8 L620.6 321.2 L606.6 311.3 L592.0 302.2 L576.8 294.0 L561.2 286.7 L545.1 280.3 L528.8 274.9 L512.4 270.5 L495.8 267.2 L479.3 264.9 L462.9 263.7 L446.8 263.6 L431.0 264.6 L415.6 266.6 L400.7 269.7 L386.5 273.9 L373.0 279.1 L360.2 285.2 L348.3 292.4 L337.4 300.4 L327.5 309.3 L318.6 319.0 L310.9 329.4 L304.3 340.5 L298.9 352.3 L294.8 364.5 L292.0 377.2 L290.4 390.4 L290.2 403.8 L291.2 417.4 L293.6 431.2 L297.2 445.0 L302.0 458.8 L308.1 472.5 Z" fill="#d8960a"/>
<path d="M320.1 484.7 L328.7 497.8 L338.3 510.6 L349.0 522.9 L360.7 534.7 L373.3 545.9 L386.8 556.5 L400.9 566.3 L415.8 575.3 L431.2 583.4 L447.0 590.7 L463.3 597.0 L479.8 602.3 L496.5 606.7 L513.3 609.9 L530.1 612.2 L546.7 613.3 L563.0 613.4 L579.1 612.3 L594.7 610.2 L609.7 607.1 L624.2 602.9 L637.9 597.6 L650.8 591.4 L662.8 584.2 L673.9 576.2 L684.0 567.3 L693.0 557.5 L700.8 547.1 L707.5 536.0 L712.9 524.2 L717.1 511.9 L719.9 499.2 L721.5 486.1 L721.7 472.7 L720.7 459.1 L718.3 445.3 L714.6 431.5 L709.7 417.8 L703.5 404.1 L696.1 390.7 L687.6 377.5 L677.9 364.8 L667.2 352.4 L655.5 340.6 L642.9 329.4 L629.5 318.9 L615.3 309.1 L600.5 300.1 L585.1 291.9 L569.2 284.7 L553.0 278.4 L536.4 273.0 L519.7 268.7 L502.9 265.4 L486.2 263.2 L469.6 262.1 L453.2 262.0 L437.2 263.0 L421.6 265.1 L406.5 268.3 L392.1 272.5 L378.4 277.7 L365.4 283.9 L353.4 291.1 L342.3 299.2 L332.3 308.1 L323.3 317.8 L315.4 328.3 L308.8 339.4 L303.4 351.1 L299.2 363.4 L296.3 376.1 L294.8 389.2 L294.5 402.7 L295.6 416.3 L297.9 430.0 L301.6 443.8 L306.6 457.6 L312.7 471.2 Z" fill="#8c6204"/><path d="M322.8 484.0 L331.4 497.1 L341.2 509.8 L351.9 522.1 L363.7 533.9 L376.4 545.1 L389.9 555.6 L404.2 565.4 L419.2 574.3 L434.7 582.5 L450.7 589.7 L467.1 596.0 L483.7 601.3 L500.6 605.6 L517.5 608.8 L534.4 611.0 L551.1 612.1 L567.6 612.1 L583.8 611.1 L599.5 608.9 L614.7 605.7 L629.2 601.5 L643.0 596.2 L656.0 590.0 L668.2 582.8 L679.3 574.7 L689.5 565.8 L698.5 556.1 L706.4 545.6 L713.1 534.5 L718.6 522.7 L722.8 510.4 L725.7 497.7 L727.3 484.6 L727.5 471.2 L726.4 457.6 L724.0 443.8 L720.3 430.0 L715.3 416.3 L709.1 402.7 L701.6 389.3 L693.0 376.1 L683.3 363.4 L672.5 351.1 L660.7 339.3 L648.0 328.1 L634.5 317.6 L620.2 307.9 L605.3 298.9 L589.7 290.8 L573.7 283.5 L557.4 277.3 L540.7 272.0 L523.9 267.7 L506.9 264.4 L490.1 262.2 L473.3 261.1 L456.8 261.1 L440.7 262.2 L425.0 264.3 L409.8 267.5 L395.2 271.7 L381.4 277.0 L368.4 283.2 L356.3 290.4 L345.1 298.5 L335.0 307.4 L325.9 317.2 L318.0 327.6 L311.3 338.8 L305.8 350.5 L301.7 362.8 L298.8 375.5 L297.2 388.6 L296.9 402.0 L298.0 415.6 L300.4 429.4 L304.1 443.2 L309.1 456.9 L315.3 470.6 Z" fill="#d8960a"/>
<path d="M327.5 482.7 L336.3 495.8 L346.2 508.5 L357.1 520.8 L369.0 532.5 L381.9 543.6 L395.6 554.0 L410.1 563.8 L425.3 572.7 L441.0 580.7 L457.2 587.9 L473.8 594.1 L490.7 599.4 L507.8 603.6 L524.9 606.8 L542.0 608.9 L559.0 610.0 L575.7 609.9 L592.1 608.8 L608.0 606.6 L623.4 603.4 L638.1 599.1 L652.2 593.8 L665.4 587.5 L677.6 580.3 L689.0 572.2 L699.2 563.2 L708.4 553.5 L716.4 543.0 L723.2 531.8 L728.7 520.0 L733.0 507.8 L735.9 495.0 L737.5 481.9 L737.7 468.5 L736.6 454.9 L734.2 441.2 L730.4 427.4 L725.4 413.7 L719.0 400.1 L711.5 386.7 L702.7 373.6 L692.8 360.9 L681.9 348.7 L670.0 337.0 L657.1 325.8 L643.4 315.4 L628.9 305.7 L613.7 296.7 L598.0 288.7 L581.8 281.5 L565.2 275.3 L548.3 270.1 L531.2 265.8 L514.1 262.6 L497.0 260.5 L480.0 259.5 L463.3 259.5 L446.9 260.6 L431.0 262.8 L415.6 266.0 L400.9 270.3 L386.8 275.6 L373.6 281.9 L361.4 289.1 L350.0 297.3 L339.8 306.2 L330.6 316.0 L322.6 326.5 L315.8 337.6 L310.3 349.4 L306.0 361.7 L303.1 374.4 L301.5 387.5 L301.3 400.9 L302.4 414.5 L304.8 428.2 L308.6 442.0 L313.6 455.7 L320.0 469.3 Z" fill="#8c6204"/><path d="M330.2 482.0 L339.0 495.1 L349.0 507.7 L360.0 520.0 L372.0 531.7 L385.0 542.8 L398.8 553.2 L413.4 562.9 L428.7 571.7 L444.6 579.8 L460.9 586.9 L477.6 593.1 L494.7 598.3 L511.9 602.5 L529.1 605.7 L546.4 607.7 L563.4 608.8 L580.3 608.7 L596.8 607.5 L612.8 605.3 L628.3 602.1 L643.2 597.7 L657.3 592.4 L670.6 586.1 L683.0 578.9 L694.4 570.7 L704.7 561.8 L713.9 552.0 L722.0 541.5 L728.8 530.3 L734.4 518.5 L738.7 506.3 L741.6 493.5 L743.2 480.4 L743.5 467.0 L742.3 453.4 L739.9 439.7 L736.1 426.0 L731.0 412.2 L724.6 398.7 L717.0 385.3 L708.2 372.2 L698.2 359.5 L687.2 347.3 L675.2 335.6 L662.2 324.5 L648.4 314.1 L633.8 304.4 L618.5 295.5 L602.6 287.5 L586.3 280.4 L569.6 274.2 L552.5 269.0 L535.3 264.8 L518.1 261.6 L500.8 259.6 L483.7 258.5 L466.9 258.6 L450.4 259.7 L434.4 262.0 L418.9 265.2 L404.0 269.5 L389.9 274.9 L376.6 281.2 L364.2 288.4 L352.8 296.6 L342.5 305.5 L333.2 315.3 L325.2 325.8 L318.4 337.0 L312.8 348.8 L308.5 361.0 L305.6 373.8 L304.0 386.9 L303.7 400.3 L304.8 413.9 L307.3 427.6 L311.1 441.3 L316.2 455.1 L322.6 468.6 Z" fill="#d8960a"/>
<path d="M335.0 480.7 L343.9 493.8 L354.0 506.4 L365.2 518.6 L377.4 530.2 L390.5 541.3 L404.5 551.6 L419.3 561.3 L434.8 570.1 L450.9 578.1 L467.4 585.1 L484.4 591.3 L501.6 596.4 L519.1 600.5 L536.6 603.6 L554.0 605.7 L571.3 606.6 L588.4 606.5 L605.1 605.3 L621.4 603.0 L637.1 599.7 L652.1 595.3 L666.4 590.0 L679.9 583.6 L692.4 576.4 L704.0 568.2 L714.4 559.2 L723.8 549.4 L731.9 538.8 L738.9 527.7 L744.5 515.9 L748.8 503.6 L751.8 490.8 L753.4 477.7 L753.6 464.4 L752.5 450.8 L750.0 437.1 L746.2 423.3 L741.0 409.6 L734.5 396.1 L726.8 382.8 L717.8 369.7 L707.8 357.1 L696.6 344.9 L684.4 333.3 L671.2 322.2 L657.2 311.9 L642.4 302.2 L626.9 293.4 L610.9 285.4 L594.3 278.4 L577.4 272.2 L560.1 267.1 L542.7 263.0 L525.2 259.9 L507.7 257.8 L490.4 256.9 L473.3 257.0 L456.6 258.2 L440.4 260.5 L424.7 263.8 L409.6 268.2 L395.3 273.5 L381.9 279.9 L369.3 287.1 L357.8 295.3 L347.3 304.3 L338.0 314.1 L329.8 324.7 L322.9 335.8 L317.3 347.6 L312.9 359.9 L310.0 372.7 L308.3 385.8 L308.1 399.1 L309.2 412.7 L311.7 426.4 L315.6 440.2 L320.8 453.9 L327.2 467.4 Z" fill="#8c6204"/><path d="M337.6 480.0 L346.7 493.0 L356.8 505.6 L368.1 517.8 L380.4 529.4 L393.6 540.4 L407.7 550.8 L422.6 560.4 L438.2 569.2 L454.4 577.1 L471.1 584.1 L488.2 590.2 L505.6 595.4 L523.1 599.4 L540.7 602.5 L558.3 604.5 L575.8 605.4 L593.0 605.3 L609.8 604.0 L626.2 601.7 L642.0 598.4 L657.1 594.0 L671.5 588.6 L685.1 582.2 L697.7 574.9 L709.4 566.7 L719.9 557.7 L729.3 547.9 L737.5 537.4 L744.5 526.2 L750.2 514.4 L754.5 502.1 L757.5 489.3 L759.1 476.2 L759.4 462.9 L758.2 449.3 L755.7 435.6 L751.8 421.9 L746.6 408.2 L740.1 394.7 L732.3 381.4 L723.3 368.3 L713.1 355.7 L701.9 343.6 L689.6 331.9 L676.3 320.9 L662.2 310.6 L647.3 301.0 L631.7 292.2 L615.5 284.3 L598.8 277.2 L581.7 271.1 L564.4 266.0 L546.8 261.9 L529.2 258.9 L511.6 256.9 L494.2 255.9 L477.0 256.1 L460.1 257.3 L443.8 259.6 L428.0 263.0 L412.8 267.4 L398.4 272.8 L384.8 279.1 L372.2 286.4 L360.6 294.6 L350.0 303.7 L340.6 313.5 L332.4 324.0 L325.4 335.2 L319.8 347.0 L315.4 359.3 L312.4 372.0 L310.8 385.1 L310.6 398.5 L311.7 412.1 L314.2 425.8 L318.1 439.5 L323.3 453.2 L329.9 466.7 Z" fill="#d8960a"/>
<path d="M342.4 478.7 L351.6 491.7 L361.9 504.3 L373.3 516.4 L385.7 528.0 L399.2 538.9 L413.5 549.2 L428.6 558.8 L444.3 567.5 L460.8 575.4 L477.7 582.4 L495.0 588.4 L512.6 593.5 L530.3 597.5 L548.2 600.5 L566.0 602.4 L583.7 603.3 L601.1 603.1 L618.1 601.8 L634.7 599.4 L650.7 596.0 L666.1 591.6 L680.6 586.2 L694.4 579.8 L707.2 572.4 L718.9 564.2 L729.6 555.1 L739.1 545.3 L747.5 534.7 L754.5 523.5 L760.2 511.7 L764.6 499.4 L767.7 486.7 L769.3 473.6 L769.5 460.2 L768.4 446.6 L765.8 433.0 L761.9 419.3 L756.6 405.6 L750.0 392.1 L742.1 378.8 L732.9 365.9 L722.6 353.3 L711.2 341.2 L698.8 329.6 L685.3 318.6 L671.0 308.3 L655.9 298.8 L640.2 290.1 L623.7 282.2 L606.8 275.2 L589.5 269.2 L571.9 264.1 L554.2 260.1 L536.3 257.1 L518.5 255.1 L500.8 254.3 L483.4 254.5 L466.4 255.8 L449.8 258.1 L433.8 261.5 L418.4 266.0 L403.9 271.4 L390.1 277.8 L377.3 285.2 L365.6 293.4 L354.9 302.4 L345.4 312.3 L337.0 322.8 L330.0 334.1 L324.3 345.8 L319.9 358.2 L316.8 370.9 L315.2 384.0 L315.0 397.4 L316.1 410.9 L318.7 424.6 L322.6 438.3 L327.9 452.0 L334.5 465.5 Z" fill="#8c6204"/><path d="M345.1 478.0 L354.3 491.0 L364.7 503.5 L376.2 515.6 L388.7 527.2 L402.3 538.1 L416.7 548.4 L431.9 557.9 L447.8 566.6 L464.3 574.4 L481.3 581.4 L498.8 587.4 L516.5 592.4 L534.4 596.4 L552.4 599.4 L570.3 601.3 L588.1 602.1 L605.6 601.8 L622.8 600.5 L639.5 598.1 L655.6 594.7 L671.1 590.3 L685.8 584.8 L699.6 578.4 L712.5 571.0 L724.3 562.8 L735.1 553.7 L744.7 543.8 L753.0 533.3 L760.1 522.0 L765.9 510.2 L770.3 497.9 L773.4 485.2 L775.0 472.1 L775.2 458.7 L774.1 445.2 L771.5 431.5 L767.5 417.8 L762.2 404.2 L755.5 390.7 L747.6 377.4 L738.4 364.5 L728.0 351.9 L716.5 339.8 L703.9 328.3 L690.4 317.3 L676.0 307.1 L660.8 297.6 L644.9 288.9 L628.4 281.0 L611.4 274.1 L593.9 268.1 L576.2 263.0 L558.3 259.0 L540.3 256.1 L522.4 254.2 L504.6 253.3 L487.1 253.6 L469.9 254.9 L453.2 257.3 L437.1 260.7 L421.6 265.2 L406.9 270.6 L393.1 277.1 L380.2 284.4 L368.4 292.7 L357.6 301.8 L348.0 311.6 L339.7 322.2 L332.6 333.4 L326.8 345.2 L322.4 357.5 L319.3 370.3 L317.7 383.4 L317.4 396.7 L318.6 410.3 L321.2 424.0 L325.2 437.6 L330.5 451.3 L337.2 464.8 Z" fill="#d8960a"/>
<path d="M349.9 476.7 L359.2 489.7 L369.8 502.2 L381.4 514.2 L394.1 525.7 L407.8 536.6 L422.4 546.8 L437.8 556.3 L453.9 564.9 L470.6 572.7 L487.9 579.6 L505.5 585.5 L523.5 590.5 L541.6 594.4 L559.8 597.3 L578.0 599.2 L596.0 600.0 L613.7 599.7 L631.1 598.3 L648.0 595.9 L664.3 592.4 L680.0 587.9 L694.8 582.4 L708.8 575.9 L721.9 568.5 L733.9 560.2 L744.8 551.1 L754.5 541.2 L762.9 530.6 L770.1 519.4 L775.9 507.6 L780.4 495.3 L783.5 482.5 L785.2 469.4 L785.4 456.1 L784.2 442.5 L781.6 428.9 L777.5 415.2 L772.1 401.6 L765.4 388.1 L757.3 374.9 L748.0 362.0 L737.5 349.5 L725.8 337.4 L713.1 325.9 L699.4 315.0 L684.9 304.8 L669.5 295.4 L653.3 286.7 L636.6 278.9 L619.4 272.0 L601.7 266.1 L583.8 261.1 L565.7 257.2 L547.4 254.3 L529.3 252.5 L511.3 251.7 L493.5 252.0 L476.1 253.4 L459.2 255.8 L442.9 259.3 L427.3 263.8 L412.4 269.3 L398.4 275.8 L385.4 283.2 L373.4 291.4 L362.5 300.5 L352.8 310.4 L344.3 321.0 L337.1 332.2 L331.3 344.1 L326.8 356.4 L323.8 369.1 L322.1 382.2 L321.9 395.6 L323.1 409.1 L325.7 422.8 L329.7 436.5 L335.1 450.1 L341.9 463.5 Z" fill="#8c6204"/><path d="M352.6 476.0 L362.0 488.9 L372.6 501.4 L384.3 513.4 L397.1 524.9 L410.9 535.8 L425.6 545.9 L441.1 555.4 L457.4 564.0 L474.2 571.7 L491.6 578.6 L509.3 584.5 L527.4 589.4 L545.7 593.3 L564.0 596.2 L582.3 598.0 L600.4 598.8 L618.3 598.4 L635.8 597.0 L652.8 594.6 L669.2 591.1 L685.0 586.5 L700.0 581.0 L714.0 574.5 L727.2 567.1 L739.2 558.8 L750.2 549.7 L760.0 539.8 L768.5 529.2 L775.7 517.9 L781.6 506.1 L786.1 493.8 L789.2 481.0 L790.9 467.9 L791.1 454.6 L789.9 441.0 L787.2 427.4 L783.2 413.7 L777.7 400.1 L770.9 386.7 L762.8 373.5 L753.4 360.6 L742.8 348.1 L731.1 336.1 L718.3 324.6 L704.5 313.7 L689.8 303.6 L674.3 294.1 L658.1 285.5 L641.2 277.8 L623.9 270.9 L606.1 265.0 L588.0 260.1 L569.8 256.2 L551.5 253.3 L533.2 251.5 L515.0 250.7 L497.2 251.1 L479.7 252.5 L462.6 254.9 L446.2 258.5 L430.4 263.0 L415.5 268.5 L401.4 275.0 L388.3 282.4 L376.2 290.7 L365.2 299.9 L355.5 309.7 L347.0 320.3 L339.7 331.6 L333.8 343.4 L329.3 355.7 L326.3 368.5 L324.6 381.6 L324.4 394.9 L325.6 408.5 L328.2 422.1 L332.3 435.8 L337.7 449.4 L344.5 462.8 Z" fill="#d8960a"/>
<path d="M357.5 474.7 L367.0 487.6 L377.7 500.0 L389.6 512.0 L402.5 523.5 L416.5 534.3 L431.4 544.4 L447.1 553.8 L463.5 562.3 L480.5 570.0 L498.1 576.8 L516.1 582.7 L534.4 587.5 L552.9 591.4 L571.4 594.2 L589.9 595.9 L608.3 596.6 L626.4 596.2 L644.1 594.8 L661.3 592.3 L677.9 588.7 L693.9 584.1 L709.0 578.6 L723.3 572.0 L736.6 564.6 L748.8 556.2 L759.9 547.1 L769.7 537.2 L778.4 526.5 L785.7 515.3 L791.6 503.4 L796.2 491.1 L799.3 478.4 L801.0 465.3 L801.2 451.9 L800.0 438.4 L797.3 424.8 L793.2 411.1 L787.6 397.6 L780.8 384.1 L772.5 371.0 L763.0 358.1 L752.3 345.7 L740.4 333.7 L727.5 322.3 L713.5 311.5 L698.6 301.3 L682.9 292.0 L666.5 283.4 L649.5 275.7 L631.9 268.9 L613.9 263.0 L595.6 258.2 L577.1 254.3 L558.6 251.5 L540.1 249.8 L521.7 249.1 L503.6 249.5 L485.9 250.9 L468.7 253.4 L452.1 257.0 L436.1 261.6 L421.0 267.2 L406.7 273.7 L393.4 281.1 L381.2 289.5 L370.1 298.6 L360.3 308.5 L351.6 319.2 L344.3 330.4 L338.4 342.3 L333.8 354.6 L330.7 367.3 L329.0 380.4 L328.8 393.8 L330.0 407.3 L332.7 420.9 L336.8 434.6 L342.4 448.2 L349.2 461.6 Z" fill="#8c6204"/><path d="M360.2 474.0 L369.8 486.8 L380.6 499.3 L392.5 511.2 L405.6 522.6 L419.6 533.4 L434.6 543.5 L450.4 552.9 L466.9 561.4 L484.1 569.1 L501.8 575.8 L519.9 581.6 L538.3 586.5 L556.9 590.3 L575.6 593.1 L594.2 594.8 L612.7 595.4 L630.9 595.0 L648.8 593.5 L666.1 591.0 L682.8 587.4 L698.9 582.8 L714.1 577.2 L728.5 570.6 L741.8 563.2 L754.1 554.8 L765.3 545.6 L775.2 535.7 L783.9 525.1 L791.3 513.8 L797.2 502.0 L801.8 489.6 L805.0 476.9 L806.7 463.8 L806.9 450.4 L805.6 436.9 L802.9 423.3 L798.8 409.7 L793.2 396.1 L786.3 382.7 L778.0 369.6 L768.4 356.7 L757.6 344.3 L745.7 332.3 L732.6 320.9 L718.6 310.2 L703.6 300.1 L687.8 290.7 L671.2 282.2 L654.1 274.5 L636.4 267.8 L618.3 261.9 L599.9 257.1 L581.3 253.3 L562.6 250.5 L544.0 248.8 L525.5 248.1 L507.3 248.6 L489.4 250.0 L472.1 252.6 L455.3 256.2 L439.3 260.8 L424.1 266.4 L409.7 272.9 L396.4 280.4 L384.1 288.8 L372.9 297.9 L363.0 307.9 L354.3 318.5 L346.9 329.8 L340.9 341.6 L336.4 353.9 L333.2 366.7 L331.5 379.8 L331.3 393.1 L332.6 406.7 L335.3 420.3 L339.4 433.9 L345.0 447.5 L351.9 460.9 Z" fill="#d8960a"/>
<path d="M365.0 472.7 L374.7 485.5 L385.7 497.9 L397.8 509.8 L411.0 521.2 L425.2 531.9 L440.4 542.0 L456.3 551.2 L473.1 559.7 L490.5 567.3 L508.4 574.0 L526.7 579.8 L545.3 584.6 L564.1 588.3 L583.0 591.0 L601.9 592.7 L620.6 593.3 L639.0 592.8 L657.1 591.3 L674.6 588.7 L691.5 585.1 L707.8 580.4 L723.2 574.8 L737.7 568.2 L751.2 560.7 L763.6 552.3 L774.9 543.1 L785.0 533.1 L793.8 522.5 L801.2 511.2 L807.2 499.3 L811.9 487.0 L815.0 474.2 L816.7 461.1 L817.0 447.8 L815.7 434.3 L813.0 420.7 L808.8 407.1 L803.1 393.5 L796.1 380.2 L787.7 367.1 L778.0 354.3 L767.1 341.9 L755.0 330.0 L741.8 318.6 L727.6 307.9 L712.4 297.8 L696.4 288.5 L679.7 280.1 L662.3 272.4 L644.4 265.7 L626.1 260.0 L607.4 255.2 L588.6 251.5 L569.7 248.7 L550.9 247.1 L532.2 246.5 L513.7 246.9 L495.7 248.5 L478.2 251.1 L461.2 254.7 L445.0 259.4 L429.6 265.0 L415.1 271.6 L401.5 279.1 L389.1 287.5 L377.8 296.7 L367.8 306.7 L359.0 317.3 L351.6 328.6 L345.5 340.5 L340.9 352.8 L337.7 365.6 L336.0 378.6 L335.8 392.0 L337.1 405.5 L339.8 419.1 L344.0 432.7 L349.6 446.2 L356.7 459.6 Z" fill="#8c6204"/><path d="M367.8 472.0 L377.5 484.8 L388.5 497.1 L400.7 509.0 L414.0 520.4 L428.3 531.1 L443.6 541.1 L459.7 550.3 L476.5 558.8 L494.0 566.4 L512.1 573.0 L530.5 578.8 L549.3 583.5 L568.2 587.2 L587.2 589.9 L606.2 591.5 L625.0 592.1 L643.6 591.6 L661.7 590.0 L679.4 587.4 L696.4 583.8 L712.7 579.1 L728.3 573.4 L742.9 566.8 L756.5 559.2 L769.0 550.8 L780.3 541.6 L790.5 531.7 L799.3 521.0 L806.8 509.7 L812.9 497.8 L817.5 485.5 L820.7 472.7 L822.4 459.7 L822.6 446.3 L821.4 432.8 L818.6 419.2 L814.4 405.6 L808.7 392.1 L801.6 378.8 L793.2 365.7 L783.4 352.9 L772.4 340.5 L760.2 328.6 L746.9 317.3 L732.6 306.6 L717.3 296.6 L701.2 287.3 L684.4 278.9 L666.9 271.3 L648.9 264.6 L630.4 258.9 L611.7 254.1 L592.7 250.4 L573.7 247.7 L554.7 246.1 L535.9 245.5 L517.4 246.0 L499.2 247.6 L481.6 250.2 L464.5 253.9 L448.2 258.6 L432.7 264.2 L418.1 270.9 L404.5 278.4 L392.0 286.8 L380.6 296.0 L370.5 306.0 L361.6 316.7 L354.2 327.9 L348.1 339.8 L343.4 352.1 L340.2 364.9 L338.5 378.0 L338.3 391.3 L339.6 404.8 L342.4 418.4 L346.6 432.0 L352.3 445.5 L359.3 458.9 Z" fill="#d8960a"/>
<path d="M372.6 470.7 L382.5 483.4 L393.6 495.8 L406.0 507.6 L419.4 518.9 L433.9 529.6 L449.4 539.5 L465.7 548.7 L482.7 557.1 L500.4 564.7 L518.6 571.3 L537.3 576.9 L556.2 581.6 L575.4 585.3 L594.6 587.9 L613.8 589.5 L632.9 590.0 L651.6 589.4 L670.0 587.8 L687.9 585.1 L705.1 581.4 L721.6 576.7 L737.3 571.0 L752.1 564.3 L765.8 556.8 L778.5 548.3 L790.0 539.1 L800.2 529.1 L809.1 518.4 L816.7 507.1 L822.8 495.2 L827.5 482.9 L830.7 470.1 L832.5 457.0 L832.7 443.7 L831.4 430.2 L828.6 416.6 L824.3 403.0 L818.6 389.5 L811.4 376.2 L802.9 363.2 L793.0 350.4 L781.9 338.1 L769.5 326.2 L756.1 315.0 L741.6 304.3 L726.1 294.3 L709.8 285.1 L692.8 276.7 L675.1 269.2 L656.9 262.6 L638.2 256.9 L619.3 252.2 L600.1 248.6 L580.9 245.9 L561.7 244.4 L542.6 243.9 L523.9 244.4 L505.5 246.0 L487.6 248.7 L470.4 252.4 L453.9 257.2 L438.2 262.9 L423.4 269.5 L409.7 277.1 L397.0 285.5 L385.5 294.8 L375.3 304.8 L366.4 315.5 L358.8 326.8 L352.7 338.6 L348.0 351.0 L344.8 363.7 L343.0 376.8 L342.8 390.2 L344.1 403.7 L346.9 417.2 L351.2 430.8 L356.9 444.3 L364.1 457.6 Z" fill="#8c6204"/><path d="M375.4 470.0 L385.3 482.7 L396.5 495.0 L408.9 506.8 L422.5 518.1 L437.1 528.7 L452.6 538.6 L469.0 547.8 L486.2 556.2 L504.0 563.7 L522.3 570.3 L541.1 575.9 L560.2 580.5 L579.5 584.2 L598.8 586.8 L618.1 588.3 L637.3 588.8 L656.2 588.2 L674.7 586.6 L692.6 583.9 L710.0 580.1 L726.6 575.4 L742.4 569.6 L757.2 562.9 L771.1 555.4 L783.8 546.9 L795.4 537.6 L805.7 527.6 L814.6 516.9 L822.2 505.6 L828.4 493.7 L833.2 481.4 L836.4 468.6 L838.1 455.5 L838.3 442.2 L837.0 428.7 L834.2 415.2 L829.9 401.6 L824.1 388.1 L816.9 374.8 L808.3 361.7 L798.4 349.0 L787.2 336.7 L774.7 324.9 L761.2 313.6 L746.6 303.0 L731.1 293.1 L714.7 283.9 L697.5 275.5 L679.7 268.0 L661.4 261.5 L642.6 255.8 L623.5 251.2 L604.2 247.5 L584.9 244.9 L565.5 243.4 L546.4 242.9 L527.5 243.5 L509.0 245.2 L491.1 247.9 L473.7 251.6 L457.1 256.4 L441.3 262.1 L426.5 268.8 L412.6 276.4 L399.9 284.8 L388.3 294.1 L378.0 304.1 L369.0 314.8 L361.4 326.1 L355.3 338.0 L350.5 350.3 L347.3 363.1 L345.6 376.2 L345.4 389.5 L346.7 403.0 L349.5 416.6 L353.8 430.1 L359.6 443.6 L366.8 456.9 Z" fill="#d8960a"/>
<path d="M380.3 468.7 L390.3 481.4 L401.7 493.6 L414.2 505.4 L427.9 516.6 L442.7 527.2 L458.4 537.1 L475.0 546.2 L492.3 554.5 L510.3 562.0 L528.9 568.5 L547.9 574.1 L567.2 578.7 L586.7 582.2 L606.3 584.8 L625.8 586.3 L645.2 586.7 L664.2 586.0 L682.9 584.3 L701.1 581.6 L718.6 577.8 L735.4 573.0 L751.4 567.2 L766.4 560.5 L780.4 552.9 L793.3 544.4 L805.0 535.1 L815.4 525.1 L824.4 514.3 L832.1 503.0 L838.4 491.1 L843.1 478.8 L846.4 466.0 L848.2 452.9 L848.4 439.6 L847.0 426.1 L844.2 412.6 L839.8 399.0 L834.0 385.6 L826.7 372.3 L818.0 359.3 L807.9 346.6 L796.6 334.3 L784.0 322.5 L770.3 311.3 L755.6 300.7 L739.9 290.8 L723.3 281.7 L705.9 273.4 L687.9 266.0 L669.4 259.4 L650.4 253.9 L631.1 249.3 L611.6 245.7 L592.0 243.2 L572.5 241.7 L553.1 241.3 L534.0 241.9 L515.3 243.6 L497.2 246.4 L479.6 250.1 L462.8 254.9 L446.9 260.7 L431.8 267.4 L417.8 275.1 L405.0 283.6 L393.3 292.8 L382.9 302.9 L373.8 313.6 L366.1 324.9 L359.9 336.8 L355.1 349.2 L351.8 361.9 L350.1 375.0 L349.9 388.3 L351.2 401.8 L354.1 415.4 L358.4 428.9 L364.3 442.4 L371.6 455.7 Z" fill="#8c6204"/><path d="M383.0 467.9 L393.2 480.6 L404.6 492.9 L417.2 504.6 L431.0 515.8 L445.8 526.3 L461.7 536.2 L478.3 545.3 L495.8 553.6 L513.9 561.0 L532.6 567.5 L551.7 573.0 L571.1 577.6 L590.7 581.1 L610.4 583.6 L630.1 585.1 L649.6 585.5 L668.8 584.8 L687.6 583.1 L705.9 580.3 L723.5 576.5 L740.4 571.7 L756.5 565.9 L771.6 559.1 L785.7 551.5 L798.6 543.0 L810.4 533.7 L820.8 523.6 L829.9 512.9 L837.7 501.5 L844.0 489.6 L848.8 477.3 L852.0 464.5 L853.8 451.4 L854.0 438.1 L852.7 424.6 L849.8 411.1 L845.4 397.6 L839.5 384.1 L832.2 370.9 L823.4 357.9 L813.3 345.2 L801.9 332.9 L789.2 321.2 L775.4 310.0 L760.6 299.4 L744.8 289.6 L728.1 280.5 L710.6 272.2 L692.5 264.8 L673.8 258.3 L654.7 252.8 L635.3 248.2 L615.7 244.7 L596.0 242.2 L576.3 240.7 L556.9 240.3 L537.7 241.0 L518.9 242.7 L500.6 245.5 L482.9 249.3 L466.0 254.1 L450.0 259.9 L434.9 266.7 L420.8 274.3 L407.8 282.8 L396.1 292.1 L385.6 302.2 L376.5 312.9 L368.8 324.3 L362.5 336.1 L357.7 348.5 L354.4 361.3 L352.6 374.4 L352.4 387.7 L353.8 401.2 L356.7 414.7 L361.1 428.2 L366.9 441.7 L374.3 454.9 Z" fill="#d8960a"/>
<path d="M388.0 466.6 L398.2 479.3 L409.7 491.5 L422.5 503.2 L436.5 514.3 L451.5 524.8 L467.5 534.6 L484.3 543.7 L502.0 551.9 L520.3 559.3 L539.2 565.7 L558.5 571.2 L578.1 575.7 L598.0 579.2 L617.9 581.6 L637.7 583.0 L657.4 583.4 L676.8 582.6 L695.8 580.8 L714.3 578.0 L732.2 574.2 L749.2 569.3 L765.5 563.4 L780.7 556.7 L795.0 549.0 L808.1 540.4 L819.9 531.1 L830.5 521.0 L839.7 510.3 L847.5 498.9 L853.9 487.0 L858.7 474.7 L862.0 461.9 L863.8 448.8 L864.0 435.5 L862.6 422.0 L859.7 408.5 L855.3 395.0 L849.3 381.6 L841.9 368.3 L833.0 355.4 L822.8 342.7 L811.3 330.5 L798.5 318.8 L784.5 307.7 L769.5 297.2 L753.5 287.4 L736.7 278.3 L719.0 270.1 L700.7 262.7 L681.8 256.3 L662.5 250.8 L642.9 246.3 L623.0 242.8 L603.1 240.4 L583.3 239.0 L563.6 238.6 L544.2 239.4 L525.2 241.2 L506.7 244.0 L488.8 247.8 L471.8 252.7 L455.5 258.6 L440.3 265.3 L426.0 273.0 L412.9 281.6 L401.1 290.9 L390.5 301.0 L381.3 311.7 L373.5 323.1 L367.1 335.0 L362.3 347.3 L359.0 360.1 L357.2 373.2 L357.0 386.5 L358.4 400.0 L361.3 413.5 L365.7 427.0 L371.7 440.4 L379.1 453.7 Z" fill="#8c6204"/><path d="M390.7 465.9 L401.0 478.5 L412.7 490.7 L425.5 502.4 L439.5 513.5 L454.6 524.0 L470.7 533.8 L487.7 542.8 L505.5 551.0 L523.9 558.3 L542.9 564.7 L562.3 570.2 L582.1 574.6 L602.0 578.1 L622.0 580.5 L642.0 581.9 L661.9 582.2 L681.4 581.4 L700.5 579.6 L719.1 576.7 L737.0 572.8 L754.2 568.0 L770.5 562.1 L785.9 555.3 L800.2 547.6 L813.4 539.0 L825.3 529.7 L835.9 519.6 L845.2 508.8 L853.1 497.5 L859.4 485.6 L864.3 473.2 L867.7 460.4 L869.4 447.3 L869.6 434.0 L868.3 420.6 L865.3 407.1 L860.8 393.5 L854.8 380.1 L847.4 366.9 L838.4 354.0 L828.1 341.4 L816.5 329.2 L803.7 317.5 L789.7 306.4 L774.6 295.9 L758.5 286.1 L741.5 277.1 L723.7 268.9 L705.3 261.6 L686.3 255.2 L666.9 249.7 L647.1 245.2 L627.2 241.8 L607.1 239.4 L587.2 238.0 L567.3 237.7 L547.8 238.5 L528.7 240.3 L510.1 243.1 L492.2 247.0 L475.0 251.9 L458.7 257.8 L443.3 264.6 L429.0 272.3 L415.8 280.8 L403.9 290.2 L393.3 300.3 L384.0 311.0 L376.1 322.4 L369.7 334.3 L364.9 346.7 L361.5 359.4 L359.8 372.5 L359.6 385.8 L360.9 399.3 L363.9 412.8 L368.4 426.3 L374.4 439.7 L381.8 452.9 Z" fill="#d8960a"/>
<path d="M395.7 464.6 L406.1 477.2 L417.8 489.3 L430.8 501.0 L445.0 512.0 L460.3 522.5 L476.5 532.2 L493.7 541.2 L511.6 549.3 L530.3 556.6 L549.5 562.9 L569.1 568.3 L589.1 572.7 L609.2 576.1 L629.5 578.5 L649.7 579.8 L669.7 580.1 L689.4 579.2 L708.7 577.4 L727.5 574.5 L745.7 570.5 L763.0 565.6 L779.5 559.7 L795.0 552.8 L809.5 545.1 L822.8 536.5 L834.8 527.1 L845.6 517.0 L855.0 506.3 L862.9 494.9 L869.3 483.0 L874.3 470.6 L877.6 457.8 L879.4 444.7 L879.6 431.4 L878.2 418.0 L875.2 404.5 L870.7 391.0 L864.6 377.6 L857.1 364.4 L848.1 351.5 L837.6 338.9 L825.9 326.8 L812.9 315.1 L798.7 304.0 L783.5 293.6 L767.2 283.9 L750.1 274.9 L732.1 266.8 L713.5 259.5 L694.3 253.1 L674.6 247.7 L654.7 243.3 L634.5 239.9 L614.3 237.6 L594.1 236.3 L574.1 236.0 L554.3 236.8 L535.0 238.7 L516.2 241.6 L498.1 245.5 L480.7 250.5 L464.2 256.4 L448.7 263.2 L434.3 271.0 L421.0 279.5 L408.9 288.9 L398.2 299.0 L388.8 309.8 L380.9 321.2 L374.4 333.1 L369.5 345.5 L366.1 358.3 L364.3 371.3 L364.2 384.6 L365.5 398.1 L368.5 411.6 L373.0 425.1 L379.1 438.5 L386.7 451.7 Z" fill="#8c6204"/><path d="M398.5 463.8 L409.0 476.4 L420.8 488.5 L433.8 500.1 L448.1 511.2 L463.5 521.6 L479.8 531.3 L497.1 540.2 L515.1 548.4 L533.9 555.6 L553.2 561.9 L572.9 567.3 L593.0 571.7 L613.3 575.0 L633.7 577.4 L654.0 578.6 L674.1 578.9 L694.0 578.0 L713.4 576.1 L732.3 573.2 L750.5 569.2 L768.0 564.3 L784.6 558.3 L800.2 551.5 L814.7 543.7 L828.1 535.1 L840.2 525.7 L851.0 515.6 L860.4 504.8 L868.4 493.4 L874.9 481.5 L879.8 469.1 L883.2 456.3 L885.0 443.3 L885.2 430.0 L883.8 416.5 L880.8 403.0 L876.2 389.5 L870.1 376.2 L862.5 363.0 L853.5 350.1 L843.0 337.5 L831.2 325.4 L818.1 313.8 L803.8 302.7 L788.5 292.3 L772.1 282.6 L754.9 273.7 L736.8 265.6 L718.1 258.3 L698.8 252.0 L679.0 246.6 L658.9 242.3 L638.6 238.9 L618.3 236.6 L598.0 235.3 L577.8 235.1 L558.0 235.9 L538.6 237.8 L519.7 240.7 L501.4 244.7 L484.0 249.7 L467.4 255.6 L451.8 262.5 L437.2 270.2 L423.9 278.8 L411.7 288.2 L400.9 298.3 L391.5 309.1 L383.5 320.5 L377.1 332.4 L372.1 344.8 L368.7 357.6 L366.9 370.7 L366.7 384.0 L368.1 397.4 L371.1 410.9 L375.7 424.4 L381.8 437.8 L389.4 450.9 Z" fill="#d8960a"/>
<path d="M403.5 462.5 L414.0 475.0 L426.0 487.1 L439.2 498.7 L453.6 509.7 L469.1 520.1 L485.6 529.7 L503.1 538.6 L521.3 546.7 L540.3 553.9 L559.8 560.1 L579.7 565.4 L600.0 569.8 L620.5 573.1 L641.1 575.4 L661.6 576.6 L682.0 576.7 L702.0 575.9 L721.6 573.9 L740.7 570.9 L759.1 566.9 L776.8 561.9 L793.5 555.9 L809.3 549.0 L824.0 541.2 L837.5 532.6 L849.7 523.2 L860.6 513.0 L870.2 502.2 L878.2 490.8 L884.7 478.9 L889.7 466.5 L893.1 453.7 L895.0 440.7 L895.1 427.4 L893.7 413.9 L890.7 400.4 L886.1 387.0 L879.9 373.6 L872.2 360.5 L863.0 347.6 L852.5 335.1 L840.5 323.0 L827.3 311.4 L812.9 300.4 L797.4 290.1 L780.9 280.4 L763.4 271.5 L745.2 263.5 L726.2 256.3 L706.7 250.0 L686.8 244.7 L666.5 240.4 L646.0 237.1 L625.4 234.8 L604.9 233.6 L584.5 233.4 L564.5 234.3 L544.9 236.2 L525.8 239.2 L507.4 243.2 L489.7 248.2 L473.0 254.2 L457.2 261.1 L442.5 268.9 L429.0 277.5 L416.8 286.9 L405.9 297.1 L396.3 307.9 L388.3 319.3 L381.8 331.3 L376.8 343.6 L373.4 356.4 L371.5 369.5 L371.4 382.8 L372.8 396.2 L375.8 409.7 L380.4 423.2 L386.6 436.5 L394.3 449.6 Z" fill="#8c6204"/><path d="M406.3 461.8 L416.9 474.3 L428.9 486.3 L442.2 497.9 L456.7 508.9 L472.3 519.2 L488.9 528.8 L506.5 537.7 L524.8 545.7 L543.9 552.9 L563.5 559.1 L583.6 564.4 L604.0 568.7 L624.6 572.0 L645.3 574.2 L665.9 575.4 L686.4 575.6 L706.5 574.6 L726.3 572.7 L745.4 569.7 L764.0 565.6 L781.7 560.6 L798.6 554.6 L814.4 547.7 L829.2 539.9 L842.8 531.2 L855.1 521.8 L866.1 511.6 L875.6 500.8 L883.7 489.4 L890.3 477.4 L895.3 465.0 L898.7 452.3 L900.5 439.2 L900.7 425.9 L899.3 412.5 L896.2 399.0 L891.6 385.6 L885.4 372.2 L877.7 359.1 L868.4 346.2 L857.8 333.7 L845.8 321.7 L832.5 310.1 L818.0 299.1 L802.4 288.8 L785.8 279.2 L768.2 270.3 L749.9 262.3 L730.8 255.1 L711.2 248.9 L691.1 243.6 L670.7 239.3 L650.1 236.0 L629.4 233.8 L608.8 232.6 L588.3 232.5 L568.2 233.4 L548.4 235.3 L529.2 238.4 L510.7 242.4 L493.0 247.4 L476.1 253.4 L460.3 260.3 L445.5 268.2 L431.9 276.8 L419.6 286.2 L408.6 296.4 L399.1 307.2 L391.0 318.6 L384.4 330.6 L379.4 343.0 L376.0 355.7 L374.2 368.8 L374.0 382.1 L375.4 395.5 L378.4 409.0 L383.1 422.5 L389.3 435.8 L397.0 448.9 Z" fill="#d8960a"/>
<path d="M411.3 460.4 L422.0 472.9 L434.1 484.9 L447.6 496.5 L462.2 507.4 L478.0 517.7 L494.8 527.3 L512.5 536.1 L531.0 544.1 L550.3 551.2 L570.1 557.3 L590.4 562.6 L611.0 566.8 L631.8 570.0 L652.7 572.2 L673.5 573.4 L694.2 573.4 L714.6 572.5 L734.5 570.4 L753.9 567.4 L772.6 563.3 L790.5 558.2 L807.5 552.2 L823.5 545.2 L838.4 537.4 L852.1 528.7 L864.6 519.3 L875.7 509.1 L885.3 498.2 L893.5 486.8 L900.1 474.8 L905.2 462.4 L908.6 449.7 L910.5 436.6 L910.6 423.3 L909.2 409.9 L906.1 396.4 L901.4 383.0 L895.1 369.7 L887.3 356.6 L878.0 343.8 L867.2 331.3 L855.1 319.3 L841.7 307.7 L827.0 296.8 L811.3 286.5 L794.5 276.9 L776.7 268.1 L758.2 260.2 L739.0 253.1 L719.2 246.9 L698.9 241.6 L678.3 237.4 L657.5 234.2 L636.6 232.0 L615.7 230.9 L595.1 230.8 L574.7 231.7 L554.8 233.8 L535.4 236.8 L516.7 240.9 L498.8 246.0 L481.7 252.0 L465.7 259.0 L450.8 266.8 L437.1 275.5 L424.7 285.0 L413.6 295.1 L403.9 306.0 L395.8 317.4 L389.1 329.4 L384.1 341.8 L380.6 354.6 L378.8 367.6 L378.6 380.9 L380.1 394.3 L383.1 407.8 L387.8 421.2 L394.1 434.5 L401.9 447.6 Z" fill="#8c6204"/><path d="M414.1 459.7 L424.9 472.1 L437.1 484.2 L450.6 495.7 L465.3 506.6 L481.2 516.8 L498.1 526.4 L515.9 535.2 L534.5 543.1 L553.9 550.2 L573.8 556.3 L594.2 561.5 L614.9 565.7 L635.8 568.9 L656.9 571.1 L677.8 572.2 L698.6 572.3 L719.1 571.3 L739.1 569.2 L758.6 566.1 L777.4 562.0 L795.4 556.9 L812.5 550.9 L828.6 543.9 L843.6 536.0 L857.4 527.3 L869.9 517.8 L881.0 507.6 L890.7 496.8 L899.0 485.3 L905.6 473.4 L910.7 461.0 L914.2 448.2 L916.0 435.1 L916.2 421.9 L914.7 408.4 L911.6 395.0 L906.9 381.6 L900.6 368.3 L892.7 355.2 L883.4 342.4 L872.5 329.9 L860.3 317.9 L846.8 306.4 L832.1 295.5 L816.3 285.2 L799.4 275.7 L781.5 266.9 L762.9 259.0 L743.6 251.9 L723.6 245.7 L703.3 240.5 L682.5 236.3 L661.6 233.1 L640.6 231.0 L619.6 229.9 L598.8 229.8 L578.4 230.8 L558.3 232.9 L538.8 236.0 L520.0 240.1 L502.0 245.2 L484.9 251.2 L468.8 258.2 L453.8 266.1 L440.0 274.8 L427.5 284.2 L416.4 294.4 L406.7 305.3 L398.5 316.7 L391.8 328.7 L386.7 341.1 L383.3 353.9 L381.4 366.9 L381.2 380.2 L382.7 393.6 L385.8 407.1 L390.5 420.5 L396.8 433.8 L404.7 446.9 Z" fill="#d8960a"/>
<path d="M419.1 458.4 L430.0 470.8 L442.4 482.8 L456.0 494.2 L470.9 505.1 L486.9 515.3 L503.9 524.8 L521.9 533.5 L540.8 541.4 L560.3 548.5 L580.4 554.6 L601.0 559.7 L621.9 563.9 L643.1 567.0 L664.3 569.1 L685.4 570.1 L706.4 570.1 L727.1 569.1 L747.3 567.0 L767.0 563.9 L786.0 559.7 L804.2 554.6 L821.5 548.5 L837.7 541.4 L852.8 533.5 L866.8 524.8 L879.4 515.3 L890.6 505.1 L900.4 494.2 L908.7 482.8 L915.4 470.8 L920.6 458.4 L924.1 445.6 L925.9 432.5 L926.1 419.3 L924.6 405.9 L921.5 392.4 L916.7 379.0 L910.3 365.8 L902.4 352.7 L892.9 339.9 L882.0 327.5 L869.6 315.5 L856.0 304.1 L841.1 293.2 L825.1 283.0 L808.1 273.5 L790.1 264.8 L771.2 256.9 L751.7 249.8 L731.6 243.7 L711.0 238.6 L690.1 234.4 L668.9 231.3 L647.7 229.2 L626.6 228.1 L605.6 228.1 L584.9 229.2 L564.7 231.3 L545.0 234.4 L526.0 238.6 L507.8 243.7 L490.5 249.8 L474.3 256.8 L459.2 264.7 L445.2 273.5 L432.6 283.0 L421.4 293.2 L411.6 304.1 L403.3 315.5 L396.6 327.5 L391.4 339.9 L387.9 352.7 L386.1 365.7 L385.9 379.0 L387.4 392.4 L390.5 405.9 L395.3 419.2 L401.7 432.5 L409.6 445.6 Z" fill="#8c6204"/><path d="M421.9 457.6 L432.9 470.0 L445.3 482.0 L459.0 493.4 L474.0 504.2 L490.1 514.4 L507.2 523.9 L525.3 532.6 L544.3 540.5 L563.9 547.5 L584.1 553.6 L604.8 558.7 L625.9 562.8 L647.1 565.9 L668.5 568.0 L689.7 569.0 L710.8 569.0 L731.6 567.9 L752.0 565.8 L771.7 562.6 L790.8 558.4 L809.1 553.2 L826.5 547.1 L842.8 540.1 L858.0 532.2 L872.0 523.4 L884.7 513.9 L896.0 503.7 L905.8 492.8 L914.2 481.3 L920.9 469.4 L926.1 456.9 L929.6 444.2 L931.5 431.1 L931.6 417.8 L930.1 404.4 L927.0 391.0 L922.2 377.6 L915.8 364.4 L907.8 351.3 L898.2 338.5 L887.3 326.1 L874.9 314.2 L861.2 302.8 L846.2 291.9 L830.1 281.7 L812.9 272.2 L794.8 263.5 L775.9 255.7 L756.3 248.7 L736.1 242.6 L715.4 237.5 L694.3 233.4 L673.1 230.3 L651.7 228.2 L630.5 227.2 L609.4 227.2 L588.6 228.3 L568.2 230.4 L548.5 233.6 L529.4 237.7 L511.1 242.9 L493.7 249.0 L477.4 256.1 L462.2 264.0 L448.2 272.7 L435.5 282.2 L424.2 292.5 L414.4 303.4 L406.0 314.8 L399.3 326.8 L394.1 339.2 L390.6 352.0 L388.7 365.1 L388.5 378.3 L390.0 391.7 L393.2 405.2 L398.0 418.5 L404.4 431.8 L412.4 444.9 Z" fill="#d8960a"/>
<path d="M427.0 456.3 L438.1 468.6 L450.6 480.6 L464.5 491.9 L479.6 502.8 L495.8 512.9 L513.1 522.3 L531.4 531.0 L550.5 538.8 L570.3 545.7 L590.8 551.8 L611.6 556.8 L632.9 560.9 L654.3 563.9 L675.9 566.0 L697.4 566.9 L718.7 566.9 L739.6 565.7 L760.2 563.5 L780.1 560.3 L799.4 556.1 L817.8 550.9 L835.4 544.7 L851.9 537.7 L867.2 529.7 L881.3 520.9 L894.1 511.4 L905.5 501.1 L915.5 490.2 L923.9 478.8 L930.7 466.8 L935.9 454.4 L939.4 441.6 L941.3 428.5 L941.5 415.2 L940.0 401.9 L936.8 388.4 L931.9 375.1 L925.4 361.8 L917.4 348.8 L907.8 336.1 L896.7 323.7 L884.1 311.8 L870.3 300.4 L855.2 289.6 L838.9 279.5 L821.6 270.0 L803.4 261.4 L784.2 253.6 L764.4 246.6 L744.0 240.6 L723.1 235.5 L701.9 231.5 L680.4 228.4 L658.9 226.4 L637.4 225.4 L616.1 225.5 L595.1 226.6 L574.6 228.8 L554.6 232.0 L535.4 236.2 L516.9 241.5 L499.4 247.6 L482.9 254.7 L467.5 262.6 L453.4 271.4 L440.6 281.0 L429.2 291.2 L419.3 302.1 L410.9 313.6 L404.1 325.6 L398.9 338.0 L395.3 350.8 L393.4 363.9 L393.3 377.1 L394.8 390.5 L398.0 403.9 L402.8 417.3 L409.3 430.5 L417.4 443.5 Z" fill="#8c6204"/><path d="M429.8 455.5 L441.0 467.9 L453.6 479.8 L467.5 491.1 L482.7 501.9 L499.0 512.0 L516.4 521.4 L534.8 530.1 L554.0 537.9 L573.9 544.8 L594.5 550.8 L615.5 555.8 L636.8 559.8 L658.4 562.8 L680.0 564.8 L701.6 565.8 L723.0 565.7 L744.1 564.5 L764.8 562.3 L784.8 559.1 L804.2 554.8 L822.8 549.6 L840.4 543.4 L856.9 536.3 L872.4 528.3 L886.6 519.5 L899.4 510.0 L910.9 499.7 L920.9 488.8 L929.3 477.3 L936.2 465.3 L941.4 452.9 L945.0 440.1 L946.8 427.1 L947.0 413.8 L945.5 400.4 L942.3 387.0 L937.4 373.7 L930.9 360.4 L922.8 347.4 L913.1 334.7 L901.9 322.4 L889.4 310.5 L875.4 299.1 L860.2 288.3 L843.9 278.2 L826.5 268.8 L808.1 260.2 L788.9 252.4 L769.0 245.5 L748.5 239.5 L727.5 234.4 L706.1 230.4 L684.5 227.4 L662.9 225.4 L641.3 224.4 L619.9 224.6 L598.8 225.7 L578.2 227.9 L558.1 231.2 L538.7 235.4 L520.2 240.6 L502.6 246.8 L486.0 253.9 L470.6 261.9 L456.4 270.7 L443.5 280.2 L432.0 290.5 L422.1 301.4 L413.6 312.9 L406.8 324.9 L401.5 337.3 L398.0 350.1 L396.1 363.2 L395.9 376.4 L397.4 389.8 L400.7 403.2 L405.5 416.6 L412.1 429.8 L420.2 442.8 Z" fill="#d8960a"/>
<path d="M434.9 454.2 L446.2 466.5 L458.9 478.3 L473.0 489.7 L488.3 500.4 L504.8 510.5 L522.3 519.9 L540.9 528.4 L560.3 536.2 L580.4 543.0 L601.1 549.0 L622.3 553.9 L643.9 557.9 L665.6 560.9 L687.5 562.8 L709.3 563.7 L730.9 563.6 L752.1 562.4 L773.0 560.1 L793.2 556.8 L812.8 552.5 L831.5 547.3 L849.3 541.0 L866.0 533.9 L881.6 525.9 L895.9 517.1 L908.8 507.5 L920.4 497.2 L930.5 486.3 L939.0 474.8 L945.9 462.8 L951.2 450.3 L954.8 437.5 L956.7 424.5 L956.8 411.2 L955.3 397.9 L952.0 384.5 L947.1 371.1 L940.5 357.9 L932.3 344.9 L922.6 332.3 L911.3 319.9 L898.6 308.1 L884.5 296.8 L869.2 286.0 L852.7 275.9 L835.2 266.6 L816.6 258.0 L797.2 250.3 L777.1 243.4 L756.4 237.5 L735.2 232.5 L713.6 228.5 L691.9 225.5 L670.0 223.6 L648.2 222.7 L626.6 222.9 L605.4 224.1 L584.5 226.3 L564.3 229.6 L544.7 233.9 L526.0 239.2 L508.2 245.4 L491.5 252.5 L475.9 260.5 L461.6 269.4 L448.7 278.9 L437.1 289.2 L427.0 300.2 L418.5 311.7 L411.6 323.7 L406.3 336.1 L402.7 348.9 L400.8 361.9 L400.7 375.2 L402.2 388.6 L405.5 402.0 L410.4 415.3 L417.0 428.5 L425.2 441.5 Z" fill="#8c6204"/><path d="M437.8 453.4 L449.1 465.7 L461.9 477.5 L476.0 488.9 L491.4 499.6 L508.0 509.6 L525.7 519.0 L544.3 527.5 L563.8 535.2 L584.0 542.1 L604.8 548.0 L626.1 552.9 L647.8 556.9 L669.7 559.8 L691.6 561.7 L713.5 562.6 L735.3 562.4 L756.6 561.1 L777.6 558.9 L797.9 555.6 L817.6 551.2 L836.4 545.9 L854.2 539.7 L871.1 532.5 L886.7 524.5 L901.1 515.7 L914.1 506.1 L925.8 495.8 L935.9 484.8 L944.4 473.3 L951.4 461.3 L956.7 448.9 L960.3 436.1 L962.2 423.0 L962.3 409.8 L960.8 396.4 L957.5 383.0 L952.6 369.7 L945.9 356.5 L937.7 343.6 L927.9 330.9 L916.6 318.6 L903.8 306.8 L889.7 295.4 L874.3 284.7 L857.7 274.7 L840.0 265.3 L821.4 256.8 L801.9 249.1 L781.7 242.2 L760.9 236.3 L739.5 231.4 L717.9 227.4 L696.0 224.5 L674.0 222.6 L652.1 221.7 L630.4 221.9 L609.0 223.1 L588.1 225.4 L567.8 228.7 L548.1 233.1 L529.3 238.3 L511.4 244.6 L494.6 251.7 L479.0 259.8 L464.6 268.6 L451.6 278.2 L439.9 288.5 L429.8 299.4 L421.3 311.0 L414.3 323.0 L409.0 335.4 L405.4 348.2 L403.5 361.3 L403.3 374.5 L404.9 387.9 L408.2 401.2 L413.1 414.6 L419.7 427.8 L428.0 440.7 Z" fill="#d8960a"/>
<path d="M442.9 452.1 L454.3 464.3 L467.2 476.1 L481.5 487.4 L497.0 498.1 L513.8 508.1 L531.6 517.4 L550.4 525.9 L570.1 533.5 L590.5 540.3 L611.5 546.2 L633.0 551.1 L654.8 555.0 L676.9 557.9 L699.1 559.7 L721.2 560.5 L743.1 560.3 L764.6 559.0 L785.8 556.7 L806.3 553.3 L826.1 549.0 L845.1 543.6 L863.1 537.3 L880.1 530.1 L895.8 522.1 L910.4 513.2 L923.5 503.6 L935.2 493.3 L945.4 482.3 L954.1 470.8 L961.1 458.8 L966.4 446.3 L970.1 433.5 L972.0 420.5 L972.1 407.2 L970.6 393.9 L967.3 380.5 L962.2 367.2 L955.6 354.0 L947.2 341.1 L937.3 328.4 L925.9 316.2 L913.0 304.4 L898.8 293.1 L883.2 282.4 L866.5 272.4 L848.7 263.1 L829.9 254.6 L810.2 247.0 L789.8 240.2 L768.8 234.3 L747.3 229.4 L725.4 225.5 L703.3 222.6 L681.2 220.8 L659.1 220.0 L637.2 220.2 L615.6 221.5 L594.5 223.8 L574.0 227.2 L554.1 231.5 L535.2 236.9 L517.1 243.2 L500.2 250.4 L484.4 258.4 L469.9 267.3 L456.7 276.9 L445.0 287.2 L434.8 298.2 L426.2 309.7 L419.2 321.7 L413.8 334.2 L410.2 347.0 L408.3 360.0 L408.1 373.3 L409.7 386.6 L413.0 400.0 L418.0 413.3 L424.7 426.5 L433.0 439.4 Z" fill="#8c6204"/><path d="M445.8 451.3 L457.3 463.5 L470.2 475.3 L484.6 486.6 L500.2 497.2 L517.0 507.2 L534.9 516.5 L553.8 524.9 L573.6 532.6 L594.1 539.3 L615.2 545.2 L636.8 550.0 L658.8 553.9 L681.0 556.8 L703.2 558.6 L725.4 559.4 L747.5 559.1 L769.1 557.8 L790.4 555.4 L811.0 552.1 L830.9 547.7 L850.0 542.3 L868.1 536.0 L885.1 528.8 L901.0 520.7 L915.6 511.8 L928.8 502.2 L940.6 491.9 L950.8 480.9 L959.5 469.4 L966.5 457.3 L971.9 444.9 L975.5 432.1 L977.5 419.0 L977.6 405.8 L976.0 392.5 L972.7 379.1 L967.7 365.8 L961.0 352.6 L952.6 339.7 L942.6 327.1 L931.1 314.8 L918.2 303.0 L903.9 291.8 L888.2 281.1 L871.4 271.2 L853.5 261.9 L834.6 253.4 L814.9 245.8 L794.3 239.0 L773.2 233.2 L751.6 228.3 L729.7 224.5 L707.5 221.6 L685.2 219.8 L663.0 219.0 L641.0 219.3 L619.3 220.6 L598.1 222.9 L577.4 226.3 L557.5 230.7 L538.5 236.1 L520.4 242.4 L503.3 249.6 L487.5 257.6 L472.9 266.5 L459.6 276.2 L447.9 286.5 L437.6 297.5 L428.9 309.0 L421.9 321.0 L416.5 333.5 L412.9 346.3 L411.0 359.3 L410.8 372.6 L412.4 385.9 L415.7 399.3 L420.8 412.6 L427.5 425.7 L435.8 438.7 Z" fill="#d8960a"/>
<path d="M450.9 449.9 L462.5 462.1 L475.6 473.9 L490.1 485.1 L505.8 495.7 L522.8 505.7 L540.9 514.9 L559.9 523.3 L579.9 530.9 L600.6 537.6 L621.9 543.4 L643.7 548.2 L665.8 552.0 L688.2 554.8 L710.6 556.6 L733.0 557.3 L755.3 557.0 L777.1 555.6 L798.5 553.2 L819.3 549.8 L839.4 545.4 L858.7 540.0 L876.9 533.6 L894.1 526.4 L910.1 518.3 L924.8 509.4 L938.1 499.7 L950.0 489.4 L960.4 478.4 L969.1 466.8 L976.2 454.8 L981.6 442.3 L985.3 429.5 L987.2 416.5 L987.4 403.3 L985.8 389.9 L982.4 376.6 L977.3 363.3 L970.5 350.2 L962.1 337.2 L952.1 324.6 L940.5 312.4 L927.4 300.7 L912.9 289.5 L897.2 278.9 L880.2 268.9 L862.1 259.7 L843.1 251.3 L823.1 243.7 L802.4 237.0 L781.1 231.2 L759.3 226.4 L737.2 222.6 L714.8 219.8 L692.4 218.0 L670.0 217.2 L647.7 217.6 L625.9 218.9 L604.5 221.3 L583.7 224.8 L563.6 229.2 L544.3 234.6 L526.1 240.9 L508.9 248.2 L492.9 256.3 L478.2 265.2 L464.9 274.9 L453.0 285.2 L442.6 296.2 L433.9 307.7 L426.8 319.8 L421.4 332.2 L417.7 345.0 L415.8 358.1 L415.6 371.3 L417.2 384.7 L420.6 398.0 L425.7 411.3 L432.5 424.4 L440.9 437.3 Z" fill="#8c6204"/><path d="M453.8 449.2 L465.5 461.3 L478.6 473.1 L493.2 484.3 L509.0 494.9 L526.1 504.8 L544.2 514.0 L563.4 522.4 L583.4 529.9 L604.2 536.6 L625.6 542.4 L647.5 547.1 L669.8 550.9 L692.3 553.7 L714.8 555.5 L737.3 556.2 L759.6 555.8 L781.6 554.4 L803.1 552.0 L824.0 548.6 L844.2 544.1 L863.5 538.7 L881.9 532.3 L899.2 525.0 L915.2 516.9 L930.0 508.0 L943.4 498.3 L955.3 488.0 L965.7 477.0 L974.5 465.4 L981.6 453.4 L987.1 440.9 L990.7 428.1 L992.7 415.1 L992.8 401.8 L991.2 388.5 L987.9 375.2 L982.7 361.9 L975.9 348.8 L967.4 335.9 L957.3 323.3 L945.7 311.1 L932.6 299.4 L918.0 288.2 L902.2 277.6 L885.1 267.7 L867.0 258.5 L847.8 250.1 L827.8 242.5 L807.0 235.8 L785.6 230.1 L763.7 225.3 L741.4 221.5 L718.9 218.7 L696.4 217.0 L673.9 216.3 L651.6 216.6 L629.6 218.0 L608.1 220.4 L587.2 223.9 L567.0 228.3 L547.7 233.8 L529.3 240.1 L512.0 247.4 L496.0 255.5 L481.2 264.4 L467.8 274.1 L455.9 284.5 L445.5 295.5 L436.7 307.0 L429.6 319.1 L424.1 331.5 L420.4 344.3 L418.5 357.4 L418.4 370.6 L420.0 383.9 L423.3 397.3 L428.4 410.6 L435.3 423.7 L443.7 436.6 Z" fill="#d8960a"/>
<path d="M459.0 447.8 L470.8 459.9 L484.0 471.6 L498.7 482.8 L514.7 493.3 L531.9 503.2 L550.2 512.4 L569.5 520.7 L589.7 528.2 L610.7 534.9 L632.3 540.6 L654.3 545.3 L676.8 549.0 L699.5 551.8 L722.2 553.5 L744.9 554.1 L767.4 553.7 L789.6 552.3 L811.3 549.8 L832.4 546.3 L852.7 541.8 L872.2 536.4 L890.7 530.0 L908.1 522.7 L924.3 514.5 L939.2 505.6 L952.7 495.8 L964.7 485.5 L975.2 474.4 L984.1 462.9 L991.3 450.8 L996.7 438.4 L1000.4 425.6 L1002.4 412.5 L1002.5 399.3 L1000.9 386.0 L997.5 372.6 L992.4 359.4 L985.5 346.3 L976.9 333.4 L966.7 320.9 L955.0 308.7 L941.7 297.0 L927.1 285.8 L911.1 275.3 L893.9 265.4 L875.6 256.3 L856.3 247.9 L836.0 240.4 L815.1 233.8 L793.5 228.1 L771.4 223.3 L749.0 219.6 L726.3 216.9 L703.5 215.2 L680.8 214.5 L658.3 214.9 L636.2 216.4 L614.5 218.8 L593.4 222.3 L573.0 226.8 L553.5 232.3 L535.0 238.7 L517.6 246.0 L501.4 254.1 L486.5 263.1 L473.0 272.8 L461.0 283.2 L450.5 294.2 L441.7 305.8 L434.5 317.8 L429.0 330.3 L425.3 343.1 L423.4 356.1 L423.2 369.4 L424.8 382.7 L428.2 396.0 L433.4 409.3 L440.3 422.4 L448.8 435.2 Z" fill="#8c6204"/><path d="M461.9 447.0 L473.8 459.2 L487.1 470.8 L501.8 482.0 L517.9 492.5 L535.1 502.4 L553.5 511.5 L572.9 519.8 L593.2 527.3 L614.3 533.9 L636.0 539.6 L658.2 544.3 L680.8 548.0 L703.5 550.7 L726.4 552.3 L749.2 553.0 L771.8 552.6 L794.1 551.1 L815.9 548.6 L837.1 545.1 L857.5 540.5 L877.1 535.1 L895.7 528.6 L913.1 521.3 L929.4 513.1 L944.4 504.2 L958.0 494.5 L970.0 484.1 L980.6 473.0 L989.4 461.5 L996.7 449.4 L1002.2 436.9 L1005.9 424.1 L1007.8 411.1 L1008.0 397.9 L1006.4 384.5 L1002.9 371.2 L997.8 358.0 L990.8 344.9 L982.2 332.0 L972.0 319.5 L960.2 307.4 L946.9 295.7 L932.1 284.5 L916.1 274.0 L898.8 264.2 L880.4 255.0 L861.0 246.7 L840.7 239.2 L819.6 232.6 L797.9 226.9 L775.7 222.2 L753.2 218.5 L730.4 215.8 L707.5 214.2 L684.7 213.5 L662.1 214.0 L639.9 215.4 L618.1 217.9 L596.9 221.4 L576.4 226.0 L556.9 231.4 L538.3 237.9 L520.8 245.2 L504.5 253.4 L489.6 262.3 L476.0 272.0 L463.9 282.5 L453.4 293.5 L444.5 305.1 L437.3 317.1 L431.8 329.6 L428.1 342.4 L426.1 355.4 L425.9 368.7 L427.6 382.0 L431.0 395.3 L436.2 408.5 L443.1 421.6 L451.7 434.5 Z" fill="#d8960a"/>
<path d="M467.2 445.6 L479.1 457.7 L492.5 469.4 L507.3 480.5 L523.5 491.0 L541.0 500.8 L559.5 509.9 L579.1 518.2 L599.6 525.6 L620.8 532.1 L642.7 537.8 L665.0 542.4 L687.8 546.1 L710.8 548.7 L733.8 550.4 L756.8 550.9 L779.6 550.5 L802.0 548.9 L824.0 546.4 L845.4 542.8 L866.0 538.3 L885.7 532.8 L904.4 526.3 L922.1 518.9 L938.5 510.7 L953.6 501.7 L967.2 492.0 L979.4 481.6 L990.0 470.5 L999.0 458.9 L1006.3 446.9 L1011.8 434.4 L1015.5 421.6 L1017.5 408.5 L1017.7 395.3 L1016.0 382.0 L1012.6 368.7 L1007.3 355.5 L1000.3 342.4 L991.7 329.6 L981.3 317.1 L969.4 305.0 L956.0 293.3 L941.2 282.2 L925.0 271.7 L907.5 261.9 L889.0 252.8 L869.4 244.6 L848.9 237.1 L827.7 230.6 L805.8 224.9 L783.5 220.3 L760.7 216.6 L737.7 214.0 L714.7 212.4 L691.7 211.8 L668.9 212.3 L646.5 213.8 L624.5 216.3 L603.1 219.9 L582.5 224.4 L562.8 230.0 L544.1 236.4 L526.4 243.8 L510.0 252.0 L494.9 261.0 L481.3 270.7 L469.1 281.1 L458.5 292.2 L449.5 303.8 L442.2 315.8 L436.7 328.3 L433.0 341.1 L431.0 354.2 L430.8 367.4 L432.5 380.7 L435.9 394.0 L441.2 407.2 L448.2 420.3 L456.8 433.1 Z" fill="#8c6204"/><path d="M470.1 444.9 L482.1 456.9 L495.6 468.6 L510.5 479.7 L526.7 490.1 L544.2 499.9 L562.9 509.0 L582.6 517.2 L603.1 524.6 L624.5 531.2 L646.4 536.8 L668.9 541.4 L691.8 545.0 L714.8 547.6 L738.0 549.2 L761.1 549.8 L784.0 549.3 L806.5 547.7 L828.6 545.2 L850.0 541.6 L870.7 537.0 L890.6 531.5 L909.4 525.0 L927.1 517.6 L943.6 509.4 L958.7 500.4 L972.5 490.6 L984.7 480.2 L995.3 469.1 L1004.3 457.5 L1011.6 445.5 L1017.2 433.0 L1021.0 420.2 L1022.9 407.1 L1023.1 393.9 L1021.4 380.6 L1018.0 367.3 L1012.7 354.1 L1005.7 341.0 L997.0 328.2 L986.6 315.7 L974.6 303.6 L961.1 292.0 L946.2 280.9 L930.0 270.5 L912.4 260.7 L893.8 251.6 L874.1 243.4 L853.6 235.9 L832.2 229.4 L810.3 223.8 L787.8 219.2 L764.9 215.6 L741.9 212.9 L718.7 211.3 L695.6 210.8 L672.7 211.3 L650.2 212.8 L628.1 215.4 L606.7 219.0 L586.0 223.6 L566.1 229.1 L547.3 235.6 L529.6 243.0 L513.1 251.2 L498.0 260.2 L484.2 270.0 L472.0 280.4 L461.4 291.5 L452.3 303.1 L445.0 315.1 L439.5 327.6 L435.7 340.4 L433.8 353.5 L433.6 366.7 L435.3 380.0 L438.7 393.3 L444.0 406.5 L451.0 419.5 L459.7 432.4 Z" fill="#d8960a"/>
<path d="M475.3 443.5 L487.4 455.5 L501.0 467.1 L516.1 478.2 L532.4 488.6 L550.1 498.3 L568.9 507.4 L588.7 515.6 L609.4 522.9 L631.0 529.4 L653.1 535.0 L675.8 539.5 L698.8 543.1 L722.0 545.7 L745.4 547.2 L768.7 547.7 L791.7 547.2 L814.5 545.6 L836.7 543.0 L858.3 539.4 L879.2 534.7 L899.2 529.2 L918.2 522.6 L936.0 515.2 L952.6 507.0 L967.9 497.9 L981.7 488.2 L994.0 477.7 L1004.8 466.6 L1013.8 455.0 L1021.2 442.9 L1026.8 430.5 L1030.6 417.6 L1032.6 404.6 L1032.7 391.4 L1031.0 378.1 L1027.5 364.8 L1022.2 351.6 L1015.2 338.6 L1006.4 325.8 L995.9 313.3 L983.8 301.3 L970.2 289.7 L955.2 278.6 L938.8 268.2 L921.2 258.4 L902.4 249.4 L882.5 241.2 L861.8 233.9 L840.3 227.4 L818.1 221.8 L795.5 217.2 L772.5 213.7 L749.2 211.1 L725.9 209.5 L702.6 209.0 L679.5 209.6 L656.8 211.2 L634.5 213.8 L612.9 217.4 L592.0 222.0 L572.1 227.6 L553.1 234.2 L535.3 241.6 L518.6 249.8 L503.4 258.8 L489.5 268.6 L477.2 279.1 L466.5 290.2 L457.4 301.8 L450.1 313.9 L444.5 326.3 L440.7 339.1 L438.7 352.2 L438.5 365.4 L440.2 378.7 L443.7 392.0 L449.0 405.2 L456.1 418.2 L464.9 431.0 Z" fill="#8c6204"/><path d="M478.3 442.7 L490.4 454.7 L504.1 466.3 L519.2 477.3 L535.7 487.7 L553.4 497.5 L572.3 506.4 L592.2 514.6 L613.0 522.0 L634.6 528.4 L656.9 533.9 L679.6 538.5 L702.8 542.1 L726.1 544.6 L749.6 546.1 L772.9 546.6 L796.1 546.0 L818.9 544.4 L841.3 541.8 L863.0 538.1 L884.0 533.5 L904.0 527.9 L923.1 521.3 L941.0 513.9 L957.7 505.6 L973.0 496.6 L986.9 486.8 L999.3 476.3 L1010.1 465.2 L1019.2 453.6 L1026.6 441.5 L1032.2 429.0 L1036.0 416.2 L1038.0 403.2 L1038.1 390.0 L1036.4 376.7 L1032.9 363.4 L1027.6 350.2 L1020.5 337.2 L1011.6 324.4 L1001.1 312.0 L989.0 299.9 L975.4 288.4 L960.2 277.3 L943.8 266.9 L926.0 257.2 L907.2 248.2 L887.3 240.0 L866.4 232.7 L844.8 226.2 L822.6 220.7 L799.8 216.2 L776.7 212.6 L753.3 210.0 L729.9 208.5 L706.5 208.1 L683.3 208.6 L660.5 210.2 L638.2 212.9 L616.4 216.5 L595.5 221.2 L575.4 226.8 L556.4 233.3 L538.4 240.8 L521.8 249.0 L506.4 258.1 L492.5 267.9 L480.1 278.3 L469.4 289.4 L460.3 301.0 L452.9 313.1 L447.3 325.6 L443.5 338.4 L441.5 351.5 L441.3 364.7 L443.0 378.0 L446.5 391.2 L451.9 404.4 L459.0 417.4 L467.8 430.2 Z" fill="#d8960a"/>
<path d="M483.6 441.3 L495.8 453.3 L509.6 464.8 L524.8 475.8 L541.4 486.2 L559.3 495.9 L578.3 504.8 L598.4 513.0 L619.4 520.3 L641.1 526.7 L663.5 532.1 L686.5 536.7 L709.8 540.2 L733.3 542.7 L757.0 544.1 L780.5 544.6 L803.9 543.9 L826.9 542.3 L849.4 539.6 L871.3 535.9 L892.4 531.2 L912.6 525.6 L931.8 519.0 L949.9 511.5 L966.7 503.2 L982.1 494.2 L996.1 484.3 L1008.6 473.8 L1019.5 462.8 L1028.6 451.1 L1036.1 439.0 L1041.7 426.5 L1045.6 413.7 L1047.6 400.7 L1047.7 387.5 L1046.0 374.2 L1042.5 360.9 L1037.1 347.8 L1029.9 334.8 L1021.0 322.0 L1010.4 309.6 L998.2 297.6 L984.4 286.0 L969.2 275.0 L952.6 264.7 L934.7 255.0 L915.7 246.0 L895.6 237.9 L874.6 230.6 L852.9 224.2 L830.5 218.7 L807.5 214.2 L784.2 210.7 L760.7 208.2 L737.0 206.7 L713.5 206.3 L690.1 206.9 L667.1 208.6 L644.6 211.3 L622.7 215.0 L601.6 219.6 L581.4 225.3 L562.2 231.9 L544.1 239.3 L527.3 247.6 L511.9 256.7 L497.9 266.5 L485.4 277.0 L474.5 288.1 L465.4 299.7 L457.9 311.8 L452.3 324.3 L448.4 337.1 L446.4 350.2 L446.3 363.4 L448.0 376.7 L451.5 389.9 L456.9 403.1 L464.1 416.1 L473.0 428.9 Z" fill="#8c6204"/><path d="M486.6 440.5 L498.8 452.5 L512.7 464.0 L528.0 475.0 L544.6 485.3 L562.6 495.0 L581.7 503.9 L601.9 512.0 L622.9 519.3 L644.8 525.7 L667.3 531.1 L690.3 535.6 L713.8 539.1 L737.4 541.6 L761.1 543.0 L784.8 543.4 L808.2 542.8 L831.3 541.1 L854.0 538.4 L875.9 534.7 L897.1 529.9 L917.4 524.3 L936.7 517.7 L954.9 510.2 L971.7 501.9 L987.3 492.8 L1001.3 483.0 L1013.8 472.5 L1024.7 461.4 L1033.9 449.7 L1041.4 437.6 L1047.1 425.1 L1050.9 412.3 L1053.0 399.3 L1053.1 386.1 L1051.4 372.8 L1047.8 359.5 L1042.4 346.4 L1035.2 333.4 L1026.3 320.6 L1015.6 308.2 L1003.4 296.2 L989.5 284.7 L974.2 273.7 L957.5 263.4 L939.6 253.7 L920.5 244.8 L900.3 236.7 L879.3 229.4 L857.4 223.0 L834.9 217.6 L811.8 213.1 L788.4 209.6 L764.8 207.2 L741.1 205.7 L717.4 205.3 L693.9 206.0 L670.8 207.6 L648.2 210.4 L626.3 214.1 L605.1 218.8 L584.7 224.4 L565.5 231.0 L547.3 238.5 L530.5 246.8 L514.9 255.9 L500.9 265.8 L488.4 276.3 L477.5 287.4 L468.2 299.0 L460.8 311.1 L455.1 323.6 L451.2 336.4 L449.2 349.5 L449.1 362.7 L450.8 375.9 L454.4 389.2 L459.8 402.3 L467.0 415.3 L475.9 428.1 Z" fill="#d8960a"/>
<path d="M491.9 439.1 L504.3 451.1 L518.2 462.5 L533.6 473.5 L550.4 483.8 L568.5 493.4 L587.7 502.3 L608.1 510.4 L629.3 517.6 L651.3 523.9 L674.0 529.3 L697.2 533.8 L720.8 537.2 L744.6 539.6 L768.5 541.0 L792.4 541.4 L816.0 540.7 L839.3 539.0 L862.1 536.2 L884.2 532.4 L905.6 527.7 L926.0 522.0 L945.4 515.4 L963.7 507.8 L980.7 499.5 L996.3 490.4 L1010.5 480.5 L1023.1 470.0 L1034.1 458.9 L1043.4 447.2 L1050.9 435.1 L1056.6 422.6 L1060.5 409.8 L1062.5 396.8 L1062.6 383.6 L1060.9 370.3 L1057.3 357.1 L1051.9 343.9 L1044.6 330.9 L1035.6 318.2 L1024.9 305.8 L1012.5 293.9 L998.6 282.4 L983.1 271.4 L966.3 261.1 L948.3 251.5 L929.0 242.6 L908.7 234.6 L887.5 227.3 L865.4 221.0 L842.7 215.6 L819.5 211.2 L795.9 207.7 L772.1 205.3 L748.2 203.9 L724.4 203.6 L700.7 204.2 L677.5 206.0 L654.7 208.7 L632.6 212.5 L611.2 217.2 L590.7 222.9 L571.3 229.6 L553.0 237.1 L536.0 245.4 L520.4 254.5 L506.3 264.4 L493.6 274.9 L482.7 286.0 L473.4 297.7 L465.9 309.8 L460.1 322.3 L456.3 335.1 L454.3 348.2 L454.1 361.4 L455.8 374.6 L459.4 387.9 L464.9 401.0 L472.1 414.0 L481.2 426.7 Z" fill="#8c6204"/><path d="M494.9 438.3 L507.3 450.3 L521.3 461.7 L536.8 472.6 L553.7 482.9 L571.8 492.5 L591.2 501.4 L611.6 509.4 L632.9 516.6 L655.0 522.9 L677.8 528.3 L701.1 532.7 L724.8 536.1 L748.7 538.5 L772.7 539.9 L796.6 540.2 L820.4 539.5 L843.7 537.8 L866.6 535.0 L888.8 531.2 L910.3 526.4 L930.8 520.7 L950.3 514.1 L968.7 506.5 L985.7 498.2 L1001.4 489.0 L1015.7 479.2 L1028.3 468.6 L1039.3 457.5 L1048.7 445.8 L1056.2 433.7 L1061.9 421.2 L1065.8 408.4 L1067.9 395.4 L1068.0 382.2 L1066.3 368.9 L1062.6 355.7 L1057.2 342.5 L1049.9 329.6 L1040.8 316.9 L1030.1 304.5 L1017.6 292.5 L1003.6 281.1 L988.2 270.2 L971.3 259.9 L953.1 250.3 L933.8 241.4 L913.4 233.4 L892.1 226.2 L869.9 219.8 L847.2 214.5 L823.9 210.1 L800.2 206.7 L776.2 204.3 L752.2 202.9 L728.3 202.6 L704.6 203.3 L681.2 205.0 L658.3 207.8 L636.1 211.6 L614.7 216.4 L594.1 222.1 L574.6 228.7 L556.3 236.3 L539.2 244.6 L523.5 253.8 L509.3 263.6 L496.6 274.2 L485.6 285.3 L476.3 297.0 L468.7 309.1 L463.0 321.6 L459.1 334.4 L457.1 347.4 L456.9 360.6 L458.7 373.9 L462.3 387.1 L467.8 400.3 L475.1 413.2 L484.1 425.9 Z" fill="#d8960a"/>
<path d="M500.2 436.9 L512.8 448.8 L526.9 460.2 L542.5 471.1 L559.5 481.4 L577.8 490.9 L597.2 499.8 L617.8 507.8 L639.3 514.9 L661.5 521.2 L684.5 526.5 L708.0 530.9 L731.8 534.2 L755.9 536.6 L780.1 537.9 L804.2 538.2 L828.1 537.4 L851.7 535.6 L874.7 532.8 L897.1 529.0 L918.7 524.2 L939.4 518.4 L959.0 511.7 L977.5 504.2 L994.7 495.8 L1010.5 486.6 L1024.8 476.7 L1037.6 466.2 L1048.6 455.0 L1058.0 443.4 L1065.6 431.2 L1071.4 418.7 L1075.3 405.9 L1077.4 392.9 L1077.5 379.7 L1075.7 366.4 L1072.1 353.2 L1066.6 340.1 L1059.2 327.2 L1050.1 314.5 L1039.3 302.1 L1026.7 290.2 L1012.6 278.8 L997.0 267.9 L980.0 257.6 L961.7 248.1 L942.3 239.2 L921.7 231.2 L900.2 224.1 L878.0 217.8 L855.0 212.5 L831.5 208.1 L807.7 204.8 L783.6 202.4 L759.4 201.1 L735.3 200.8 L711.4 201.6 L687.8 203.4 L664.8 206.2 L642.4 210.0 L620.8 214.8 L600.1 220.6 L580.5 227.3 L562.0 234.8 L544.8 243.2 L529.0 252.4 L514.7 262.3 L501.9 272.8 L490.9 284.0 L481.5 295.6 L473.9 307.8 L468.1 320.3 L464.2 333.1 L462.1 346.1 L462.0 359.3 L463.8 372.6 L467.4 385.8 L472.9 398.9 L480.3 411.8 L489.4 424.5 Z" fill="#8c6204"/><path d="M503.3 436.1 L515.8 448.0 L530.0 459.4 L545.7 470.3 L562.7 480.5 L581.1 490.0 L600.7 498.8 L621.3 506.8 L642.8 514.0 L665.2 520.2 L688.3 525.5 L711.8 529.8 L735.8 533.2 L760.0 535.5 L784.3 536.8 L808.5 537.0 L832.5 536.3 L856.1 534.4 L879.2 531.6 L901.7 527.8 L923.4 522.9 L944.2 517.1 L963.9 510.4 L982.4 502.9 L999.7 494.5 L1015.6 485.3 L1029.9 475.4 L1042.7 464.8 L1053.9 453.7 L1063.3 442.0 L1070.9 429.8 L1076.7 417.3 L1080.6 404.5 L1082.7 391.5 L1082.8 378.3 L1081.1 365.1 L1077.4 351.8 L1071.9 338.7 L1064.5 325.8 L1055.3 313.1 L1044.4 300.8 L1031.9 288.9 L1017.7 277.5 L1002.0 266.6 L985.0 256.4 L966.6 246.8 L947.0 238.0 L926.4 230.0 L904.8 222.9 L882.5 216.7 L859.4 211.4 L835.8 207.0 L811.9 203.7 L787.7 201.4 L763.4 200.1 L739.2 199.8 L715.2 200.6 L691.6 202.4 L668.5 205.3 L646.0 209.1 L624.3 213.9 L603.5 219.7 L583.8 226.4 L565.3 234.0 L548.0 242.4 L532.1 251.6 L517.8 261.5 L505.0 272.1 L493.8 283.2 L484.4 294.9 L476.8 307.0 L471.0 319.5 L467.0 332.4 L465.0 345.4 L464.9 358.6 L466.6 371.8 L470.3 385.0 L475.8 398.1 L483.2 411.1 L492.4 423.7 Z" fill="#d8960a"/>
<path d="M508.7 434.6 L521.3 446.5 L535.6 457.9 L551.4 468.8 L568.6 479.0 L587.1 488.5 L606.8 497.2 L627.5 505.2 L649.3 512.2 L671.8 518.4 L695.0 523.7 L718.7 528.0 L742.9 531.3 L767.2 533.6 L791.7 534.8 L816.0 535.0 L840.2 534.2 L864.0 532.3 L887.3 529.4 L909.9 525.6 L931.8 520.7 L952.7 514.9 L972.5 508.1 L991.2 500.5 L1008.6 492.1 L1024.6 482.9 L1039.0 473.0 L1051.9 462.4 L1063.1 451.2 L1072.6 439.5 L1080.3 427.4 L1086.1 414.9 L1090.1 402.0 L1092.1 389.0 L1092.3 375.8 L1090.5 362.6 L1086.8 349.4 L1081.2 336.3 L1073.8 323.4 L1064.6 310.7 L1053.6 298.4 L1040.9 286.5 L1026.7 275.1 L1010.9 264.3 L993.7 254.1 L975.2 244.6 L955.5 235.9 L934.7 227.9 L913.0 220.8 L890.5 214.6 L867.3 209.4 L843.5 205.1 L819.4 201.8 L795.0 199.5 L770.6 198.3 L746.2 198.1 L722.0 198.9 L698.2 200.7 L675.0 203.6 L652.3 207.5 L630.5 212.4 L609.6 218.2 L589.7 224.9 L571.0 232.5 L553.7 241.0 L537.7 250.2 L523.2 260.1 L510.3 270.7 L499.1 281.9 L489.6 293.6 L481.9 305.7 L476.1 318.2 L472.2 331.0 L470.1 344.1 L470.0 357.2 L471.8 370.5 L475.5 383.7 L481.0 396.8 L488.5 409.7 L497.7 422.3 Z" fill="#8c6204"/><path d="M511.7 433.8 L524.4 445.7 L538.7 457.1 L554.6 467.9 L571.8 478.1 L590.4 487.6 L610.2 496.3 L631.1 504.2 L652.9 511.3 L675.5 517.5 L698.8 522.7 L722.6 526.9 L746.8 530.2 L771.3 532.5 L795.8 533.7 L820.3 533.9 L844.6 533.0 L868.4 531.1 L891.8 528.2 L914.5 524.3 L936.5 519.4 L957.5 513.6 L977.4 506.8 L996.1 499.2 L1013.6 490.8 L1029.6 481.5 L1044.2 471.6 L1057.1 461.0 L1068.3 449.8 L1077.9 438.1 L1085.6 426.0 L1091.4 413.5 L1095.4 400.6 L1097.4 387.6 L1097.6 374.4 L1095.8 361.2 L1092.1 348.0 L1086.5 334.9 L1079.0 322.0 L1069.7 309.4 L1058.7 297.1 L1046.0 285.2 L1031.7 273.8 L1015.9 263.0 L998.6 252.9 L980.0 243.4 L960.2 234.6 L939.4 226.7 L917.6 219.7 L895.0 213.5 L871.7 208.3 L847.8 204.0 L823.6 200.7 L799.2 198.5 L774.6 197.2 L750.1 197.1 L725.9 197.9 L702.0 199.8 L678.6 202.7 L655.9 206.6 L634.0 211.5 L613.0 217.3 L593.0 224.1 L574.3 231.7 L556.9 240.2 L540.8 249.4 L526.3 259.3 L513.4 269.9 L502.1 281.1 L492.6 292.8 L484.9 304.9 L479.0 317.5 L475.0 330.3 L473.0 343.3 L472.9 356.5 L474.7 369.7 L478.4 382.9 L484.0 396.0 L491.4 408.9 L500.7 421.6 Z" fill="#d8960a"/>
<path d="M517.2 432.4 L530.0 444.2 L544.4 455.6 L560.3 466.4 L577.7 476.5 L596.4 486.0 L616.3 494.7 L637.3 502.5 L659.3 509.6 L682.1 515.7 L705.5 520.9 L729.5 525.1 L753.9 528.3 L778.5 530.5 L803.2 531.7 L827.9 531.8 L852.3 531.0 L876.3 529.0 L899.9 526.1 L922.7 522.1 L944.8 517.2 L966.0 511.3 L986.0 504.5 L1004.9 496.9 L1022.4 488.4 L1038.6 479.2 L1053.2 469.2 L1066.2 458.6 L1077.6 447.4 L1087.1 435.7 L1094.9 423.5 L1100.8 411.0 L1104.8 398.2 L1106.9 385.2 L1107.0 372.0 L1105.2 358.8 L1101.4 345.6 L1095.8 332.5 L1088.3 319.6 L1078.9 307.0 L1067.8 294.7 L1055.0 282.9 L1040.6 271.6 L1024.7 260.8 L1007.3 250.6 L988.6 241.2 L968.7 232.5 L947.7 224.6 L925.7 217.6 L902.9 211.5 L879.5 206.3 L855.5 202.0 L831.1 198.8 L806.5 196.6 L781.8 195.4 L757.1 195.3 L732.7 196.2 L708.7 198.1 L685.1 201.1 L662.3 205.0 L640.2 209.9 L619.0 215.8 L599.0 222.6 L580.1 230.3 L562.6 238.7 L546.4 248.0 L531.8 257.9 L518.8 268.5 L507.4 279.7 L497.9 291.5 L490.1 303.6 L484.2 316.1 L480.2 329.0 L478.1 342.0 L478.0 355.2 L479.8 368.4 L483.6 381.6 L489.2 394.6 L496.7 407.5 L506.1 420.1 Z" fill="#8c6204"/><path d="M520.2 431.6 L533.1 443.4 L547.6 454.7 L563.6 465.5 L581.0 475.6 L599.8 485.1 L619.8 493.7 L640.9 501.6 L662.9 508.6 L685.8 514.7 L709.3 519.9 L733.4 524.1 L757.9 527.3 L782.6 529.4 L807.4 530.6 L832.1 530.7 L856.6 529.8 L880.8 527.8 L904.4 524.9 L927.4 520.9 L949.5 516.0 L970.7 510.1 L990.9 503.3 L1009.8 495.6 L1027.4 487.1 L1043.6 477.8 L1058.3 467.9 L1071.4 457.2 L1082.7 446.0 L1092.4 434.3 L1100.1 422.2 L1106.0 409.6 L1110.1 396.8 L1112.1 383.8 L1112.3 370.6 L1110.4 357.4 L1106.7 344.2 L1101.0 331.1 L1093.5 318.3 L1084.1 305.7 L1073.0 293.4 L1060.1 281.6 L1045.6 270.3 L1029.6 259.5 L1012.2 249.4 L993.4 240.0 L973.4 231.3 L952.3 223.4 L930.3 216.4 L907.4 210.3 L883.9 205.1 L859.8 201.0 L835.3 197.8 L810.6 195.6 L785.8 194.4 L761.1 194.3 L736.6 195.2 L712.4 197.2 L688.8 200.1 L665.8 204.1 L643.7 209.1 L622.5 215.0 L602.3 221.8 L583.4 229.4 L565.8 237.9 L549.6 247.2 L534.9 257.1 L521.8 267.8 L510.4 279.0 L500.8 290.7 L493.1 302.9 L487.1 315.4 L483.1 328.2 L481.1 341.2 L480.9 354.4 L482.8 367.6 L486.5 380.8 L492.2 393.9 L499.7 406.7 L509.1 419.3 Z" fill="#d8960a"/>
<path d="M525.7 430.1 L538.7 441.9 L553.2 453.2 L569.3 464.0 L586.9 474.1 L605.8 483.4 L625.9 492.1 L647.2 499.9 L669.3 506.9 L692.4 512.9 L716.1 518.1 L740.3 522.2 L764.9 525.4 L789.8 527.5 L814.8 528.6 L839.7 528.7 L864.3 527.7 L888.6 525.7 L912.4 522.7 L935.5 518.7 L957.8 513.7 L979.2 507.8 L999.4 501.0 L1018.5 493.3 L1036.2 484.7 L1052.6 475.5 L1067.3 465.5 L1080.5 454.8 L1091.9 443.6 L1101.6 431.9 L1109.4 419.7 L1115.4 407.2 L1119.4 394.4 L1121.5 381.3 L1121.6 368.2 L1119.8 355.0 L1116.0 341.8 L1110.3 328.7 L1102.7 315.9 L1093.2 303.3 L1082.0 291.1 L1069.1 279.3 L1054.5 268.0 L1038.4 257.2 L1020.8 247.2 L1001.9 237.8 L981.8 229.1 L960.6 221.3 L938.4 214.3 L915.4 208.3 L891.7 203.2 L867.5 199.0 L842.8 195.9 L817.9 193.7 L793.0 192.6 L768.1 192.5 L743.4 193.5 L719.1 195.5 L695.3 198.5 L672.2 202.5 L649.9 207.5 L628.6 213.4 L608.3 220.2 L589.2 227.9 L571.5 236.5 L555.2 245.8 L540.4 255.7 L527.3 266.4 L515.8 277.6 L506.2 289.3 L498.3 301.5 L492.4 314.0 L488.4 326.9 L486.3 339.9 L486.1 353.0 L488.0 366.3 L491.8 379.4 L497.5 392.5 L505.1 405.3 L514.5 417.9 Z" fill="#8c6204"/><path d="M528.8 429.3 L541.8 441.1 L556.4 452.4 L572.6 463.1 L590.2 473.2 L609.2 482.5 L629.4 491.2 L650.7 499.0 L673.0 505.9 L696.1 511.9 L719.9 517.0 L744.2 521.2 L768.9 524.3 L793.9 526.4 L818.9 527.5 L843.9 527.5 L868.7 526.6 L893.1 524.6 L916.9 521.5 L940.1 517.5 L962.5 512.5 L983.9 506.5 L1004.3 499.7 L1023.4 492.0 L1041.2 483.4 L1057.6 474.1 L1072.4 464.1 L1085.6 453.5 L1097.1 442.3 L1106.8 430.5 L1114.6 418.3 L1120.6 405.8 L1124.6 393.0 L1126.7 380.0 L1126.8 366.8 L1125.0 353.6 L1121.2 340.4 L1115.5 327.4 L1107.9 314.5 L1098.4 302.0 L1087.1 289.8 L1074.1 278.0 L1059.5 266.7 L1043.3 256.0 L1025.7 245.9 L1006.7 236.5 L986.5 227.9 L965.2 220.1 L943.0 213.2 L919.9 207.1 L896.1 202.0 L871.8 197.9 L847.0 194.8 L822.1 192.7 L797.0 191.6 L772.0 191.5 L747.3 192.5 L722.9 194.5 L699.0 197.6 L675.8 201.6 L653.4 206.6 L632.0 212.5 L611.7 219.4 L592.5 227.1 L574.7 235.6 L558.4 244.9 L543.6 254.9 L530.4 265.6 L518.9 276.8 L509.2 288.6 L501.3 300.7 L495.3 313.3 L491.3 326.1 L489.2 339.1 L489.1 352.3 L490.9 365.5 L494.7 378.6 L500.5 391.7 L508.1 404.5 L517.6 417.1 Z" fill="#d8960a"/>
<path d="M534.4 427.9 L547.4 439.6 L562.2 450.9 L578.4 461.6 L596.2 471.6 L615.3 480.9 L635.6 489.5 L657.0 497.3 L679.4 504.2 L702.7 510.2 L726.6 515.2 L751.1 519.3 L776.0 522.4 L801.1 524.5 L826.3 525.5 L851.5 525.5 L876.4 524.5 L900.9 522.4 L924.9 519.4 L948.3 515.3 L970.8 510.3 L992.3 504.3 L1012.8 497.4 L1032.1 489.7 L1050.0 481.1 L1066.4 471.8 L1081.4 461.8 L1094.6 451.1 L1106.2 439.8 L1115.9 428.1 L1123.9 415.9 L1129.9 403.4 L1133.9 390.5 L1136.0 377.5 L1136.1 364.4 L1134.3 351.2 L1130.5 338.0 L1124.7 325.0 L1117.0 312.2 L1107.5 299.6 L1096.1 287.4 L1083.1 275.7 L1068.3 264.4 L1052.1 253.7 L1034.3 243.7 L1015.2 234.4 L994.9 225.8 L973.5 218.0 L951.1 211.1 L927.8 205.1 L903.9 200.1 L879.4 196.0 L854.5 192.9 L829.4 190.8 L804.2 189.8 L779.0 189.8 L754.1 190.8 L729.6 192.8 L705.6 195.9 L682.2 200.0 L659.7 205.0 L638.2 211.0 L617.7 217.9 L598.4 225.6 L580.5 234.2 L564.1 243.5 L549.1 253.5 L535.9 264.2 L524.3 275.4 L514.6 287.2 L506.6 299.4 L500.6 311.9 L496.6 324.7 L494.5 337.8 L494.4 350.9 L496.2 364.1 L500.0 377.3 L505.8 390.3 L513.5 403.1 L523.0 415.7 Z" fill="#8c6204"/><path d="M537.5 427.0 L550.6 438.8 L565.4 450.0 L581.7 460.7 L599.5 470.7 L618.7 480.0 L639.1 488.6 L660.6 496.3 L683.1 503.2 L706.4 509.2 L730.4 514.2 L755.0 518.3 L780.0 521.3 L805.2 523.4 L830.5 524.4 L855.7 524.4 L880.7 523.3 L905.3 521.3 L929.4 518.2 L952.9 514.1 L975.4 509.0 L997.1 503.0 L1017.6 496.1 L1036.9 488.4 L1054.9 479.8 L1071.4 470.5 L1086.4 460.4 L1099.7 449.7 L1111.3 438.5 L1121.1 426.7 L1129.0 414.6 L1135.0 402.0 L1139.1 389.2 L1141.2 376.2 L1141.3 363.0 L1139.5 349.8 L1135.6 336.7 L1129.9 323.6 L1122.1 310.8 L1112.6 298.3 L1101.2 286.1 L1088.1 274.4 L1073.3 263.1 L1057.0 252.5 L1039.2 242.4 L1020.0 233.1 L999.6 224.6 L978.1 216.8 L955.6 210.0 L932.3 204.0 L908.3 198.9 L883.7 194.9 L858.7 191.8 L833.5 189.8 L808.2 188.7 L783.0 188.8 L758.0 189.8 L733.4 191.9 L709.3 195.0 L685.8 199.1 L663.2 204.1 L641.6 210.1 L621.1 217.0 L601.8 224.8 L583.8 233.4 L567.3 242.7 L552.3 252.7 L539.0 263.4 L527.4 274.7 L517.6 286.4 L509.7 298.6 L503.6 311.1 L499.6 324.0 L497.5 337.0 L497.3 350.1 L499.2 363.3 L503.0 376.5 L508.8 389.5 L516.5 402.3 L526.1 414.9 Z" fill="#d8960a"/>
<path d="M543.1 425.6 L556.3 437.3 L571.1 448.5 L587.6 459.1 L605.5 469.1 L624.8 478.4 L645.3 486.9 L666.9 494.6 L689.6 501.5 L713.0 507.4 L737.2 512.4 L761.9 516.4 L787.0 519.4 L812.4 521.4 L837.9 522.4 L863.2 522.4 L888.4 521.3 L913.2 519.2 L937.4 516.0 L961.0 511.9 L983.7 506.8 L1005.5 500.8 L1026.1 493.9 L1045.6 486.1 L1063.6 477.5 L1080.3 468.1 L1095.3 458.1 L1108.7 447.4 L1120.4 436.1 L1130.2 424.3 L1138.2 412.1 L1144.2 399.6 L1148.3 386.8 L1150.5 373.7 L1150.6 360.6 L1148.7 347.4 L1144.8 334.3 L1139.0 321.3 L1131.2 308.5 L1121.6 295.9 L1110.2 283.8 L1097.0 272.1 L1082.1 260.9 L1065.7 250.2 L1047.7 240.2 L1028.5 231.0 L1007.9 222.4 L986.3 214.7 L963.7 207.9 L940.2 202.0 L916.0 197.0 L891.3 192.9 L866.2 189.9 L840.8 187.9 L815.4 186.9 L790.0 187.0 L764.9 188.1 L740.1 190.2 L715.8 193.3 L692.3 197.4 L669.5 202.5 L647.8 208.6 L627.1 215.5 L607.7 223.3 L589.6 231.9 L573.0 241.2 L557.9 251.3 L544.5 262.0 L532.9 273.3 L523.0 285.0 L515.1 297.2 L509.0 309.8 L504.9 322.6 L502.8 335.6 L502.7 348.8 L504.6 361.9 L508.4 375.1 L514.2 388.1 L522.0 400.9 L531.6 413.4 Z" fill="#8c6204"/><path d="M546.2 424.7 L559.5 436.4 L574.4 447.6 L590.9 458.2 L608.9 468.2 L628.2 477.5 L648.8 486.0 L670.5 493.7 L693.2 500.5 L716.8 506.4 L741.0 511.4 L765.8 515.4 L791.0 518.4 L816.5 520.4 L842.0 521.3 L867.5 521.2 L892.7 520.1 L917.6 518.0 L941.9 514.8 L965.5 510.7 L988.3 505.6 L1010.2 499.5 L1030.9 492.6 L1050.4 484.8 L1068.5 476.2 L1085.2 466.8 L1100.3 456.7 L1113.8 446.0 L1125.5 434.8 L1135.3 423.0 L1143.3 410.8 L1149.4 398.2 L1153.5 385.4 L1155.6 372.4 L1155.8 359.2 L1153.9 346.1 L1150.0 332.9 L1144.1 319.9 L1136.4 307.1 L1126.7 294.6 L1115.2 282.5 L1102.0 270.8 L1087.0 259.6 L1070.5 249.0 L1052.6 239.0 L1033.2 229.7 L1012.6 221.2 L990.9 213.6 L968.2 206.7 L944.7 200.8 L920.4 195.9 L895.6 191.9 L870.4 188.9 L845.0 186.9 L819.4 185.9 L794.0 186.0 L768.7 187.1 L743.9 189.2 L719.5 192.4 L695.9 196.5 L673.1 201.6 L651.3 207.7 L630.5 214.6 L611.0 222.4 L592.9 231.0 L576.2 240.4 L561.1 250.5 L547.7 261.2 L536.0 272.5 L526.1 284.2 L518.1 296.4 L512.0 309.0 L507.9 321.8 L505.8 334.8 L505.7 348.0 L507.6 361.2 L511.5 374.3 L517.3 387.3 L525.1 400.1 L534.8 412.6 Z" fill="#d8960a"/>
<path d="M551.9 423.2 L565.2 434.9 L580.2 446.1 L596.8 456.7 L614.9 466.6 L634.4 475.8 L655.1 484.3 L676.9 492.0 L699.7 498.7 L723.4 504.6 L747.8 509.6 L772.8 513.5 L798.1 516.5 L823.7 518.4 L849.4 519.3 L875.0 519.2 L900.4 518.1 L925.4 515.9 L949.9 512.7 L973.6 508.5 L996.6 503.4 L1018.5 497.3 L1039.4 490.3 L1059.0 482.5 L1077.2 473.9 L1094.0 464.5 L1109.2 454.4 L1122.7 443.7 L1134.5 432.4 L1144.4 420.6 L1152.4 408.4 L1158.5 395.8 L1162.7 383.0 L1164.8 370.0 L1164.9 356.8 L1163.0 343.7 L1159.1 330.6 L1153.2 317.6 L1145.4 304.8 L1135.7 292.3 L1124.1 280.2 L1110.8 268.5 L1095.8 257.3 L1079.2 246.8 L1061.1 236.8 L1041.6 227.6 L1020.9 219.1 L999.1 211.5 L976.3 204.7 L952.6 198.8 L928.2 193.9 L903.2 189.9 L877.9 187.0 L852.3 185.0 L826.6 184.1 L801.0 184.2 L775.6 185.3 L750.6 187.5 L726.1 190.7 L702.4 194.9 L679.4 200.0 L657.5 206.1 L636.6 213.1 L617.0 220.9 L598.8 229.6 L582.0 238.9 L566.8 249.0 L553.3 259.8 L541.5 271.0 L531.6 282.8 L523.6 295.0 L517.5 307.6 L513.3 320.4 L511.2 333.4 L511.1 346.6 L513.0 359.7 L516.9 372.9 L522.8 385.9 L530.6 398.6 L540.3 411.1 Z" fill="#8c6204"/><path d="M555.1 422.4 L568.5 434.1 L583.5 445.2 L600.2 455.8 L618.3 465.7 L637.8 474.9 L658.6 483.4 L680.5 491.0 L703.4 497.8 L727.2 503.6 L751.6 508.5 L776.7 512.5 L802.1 515.4 L827.8 517.3 L853.6 518.2 L879.2 518.1 L904.7 516.9 L929.8 514.7 L954.3 511.5 L978.2 507.3 L1001.2 502.2 L1023.2 496.1 L1044.1 489.1 L1063.8 481.2 L1082.1 472.6 L1098.9 463.2 L1114.2 453.1 L1127.7 442.4 L1139.5 431.1 L1149.5 419.3 L1157.5 407.1 L1163.7 394.5 L1167.8 381.7 L1169.9 368.6 L1170.1 355.5 L1168.1 342.3 L1164.2 329.2 L1158.3 316.2 L1150.5 303.5 L1140.7 291.0 L1129.1 278.9 L1115.7 267.2 L1100.7 256.1 L1084.0 245.5 L1065.9 235.6 L1046.4 226.4 L1025.6 217.9 L1003.7 210.3 L980.8 203.5 L957.0 197.7 L932.5 192.8 L907.5 188.8 L882.1 185.9 L856.4 184.0 L830.6 183.1 L804.9 183.2 L779.5 184.4 L754.4 186.6 L729.9 189.8 L706.0 194.0 L683.0 199.1 L661.0 205.2 L640.1 212.2 L620.4 220.1 L602.1 228.7 L585.3 238.1 L570.0 248.2 L556.5 258.9 L544.7 270.2 L534.7 282.0 L526.6 294.2 L520.5 306.8 L516.4 319.6 L514.2 332.7 L514.1 345.8 L516.0 359.0 L520.0 372.1 L525.9 385.0 L533.7 397.8 L543.5 410.3 Z" fill="#d8960a"/>
<path d="M560.8 420.9 L574.2 432.5 L589.4 443.7 L606.1 454.2 L624.4 464.1 L644.0 473.3 L664.9 481.7 L686.9 489.3 L710.0 496.0 L733.9 501.8 L758.5 506.7 L783.6 510.6 L809.2 513.5 L835.0 515.4 L860.9 516.3 L886.8 516.1 L912.4 514.9 L937.6 512.7 L962.3 509.4 L986.2 505.2 L1009.4 500.0 L1031.5 493.9 L1052.6 486.8 L1072.3 479.0 L1090.7 470.3 L1107.6 460.9 L1123.0 450.8 L1136.6 440.0 L1148.5 428.7 L1158.5 416.9 L1166.6 404.7 L1172.7 392.1 L1176.9 379.3 L1179.0 366.3 L1179.1 353.1 L1177.2 340.0 L1173.3 326.9 L1167.3 313.9 L1159.4 301.2 L1149.6 288.7 L1138.0 276.6 L1124.5 265.0 L1109.4 253.8 L1092.6 243.3 L1074.4 233.4 L1054.8 224.2 L1033.9 215.8 L1011.8 208.2 L988.8 201.5 L964.9 195.7 L940.3 190.8 L915.1 186.9 L889.6 184.0 L863.7 182.1 L837.8 181.2 L812.0 181.4 L786.4 182.6 L761.2 184.8 L736.5 188.1 L712.5 192.3 L689.4 197.5 L667.2 203.6 L646.2 210.7 L626.4 218.5 L608.0 227.2 L591.1 236.6 L575.8 246.7 L562.2 257.5 L550.3 268.8 L540.3 280.6 L532.2 292.8 L526.0 305.4 L521.9 318.2 L519.7 331.2 L519.6 344.4 L521.5 357.5 L525.5 370.6 L531.4 383.6 L539.3 396.3 L549.1 408.8 Z" fill="#8c6204"/><path d="M564.0 420.0 L577.5 431.7 L592.7 442.8 L609.5 453.3 L627.8 463.2 L647.5 472.4 L668.4 480.7 L690.5 488.3 L713.6 495.0 L737.6 500.8 L762.3 505.7 L787.5 509.6 L813.2 512.4 L839.1 514.3 L865.1 515.2 L891.0 515.0 L916.7 513.7 L942.0 511.5 L966.7 508.2 L990.8 504.0 L1014.0 498.8 L1036.2 492.6 L1057.3 485.6 L1077.1 477.7 L1095.6 469.0 L1112.5 459.6 L1127.9 449.5 L1141.6 438.7 L1153.5 427.4 L1163.5 415.6 L1171.6 403.3 L1177.8 390.8 L1182.0 377.9 L1184.1 364.9 L1184.2 351.8 L1182.3 338.6 L1178.4 325.6 L1172.4 312.6 L1164.5 299.8 L1154.6 287.4 L1142.9 275.3 L1129.4 263.7 L1114.2 252.6 L1097.5 242.0 L1079.2 232.2 L1059.5 223.0 L1038.5 214.6 L1016.4 207.0 L993.3 200.3 L969.3 194.5 L944.6 189.7 L919.4 185.8 L893.7 182.9 L867.8 181.1 L841.9 180.2 L815.9 180.4 L790.3 181.6 L765.0 183.9 L740.2 187.1 L716.2 191.4 L693.0 196.6 L670.7 202.7 L649.7 209.8 L629.8 217.7 L611.4 226.4 L594.4 235.8 L579.0 245.9 L565.4 256.7 L553.5 268.0 L543.4 279.8 L535.3 292.0 L529.1 304.6 L525.0 317.4 L522.8 330.4 L522.7 343.6 L524.6 356.7 L528.6 369.8 L534.5 382.8 L542.5 395.5 L552.3 408.0 Z" fill="#d8960a"/>
<path d="M569.8 418.5 L583.4 430.1 L598.6 441.2 L615.5 451.7 L633.9 461.6 L653.7 470.7 L674.8 479.1 L697.0 486.6 L720.2 493.3 L744.3 499.0 L769.1 503.9 L794.5 507.7 L820.3 510.6 L846.3 512.4 L872.5 513.2 L898.5 513.0 L924.3 511.7 L949.8 509.4 L974.6 506.1 L998.8 501.8 L1022.1 496.6 L1044.5 490.4 L1065.7 483.4 L1085.6 475.5 L1104.1 466.7 L1121.2 457.3 L1136.6 447.1 L1150.4 436.4 L1162.3 425.0 L1172.4 413.2 L1180.6 401.0 L1186.8 388.4 L1191.0 375.6 L1193.2 362.6 L1193.3 349.4 L1191.3 336.3 L1187.3 323.2 L1181.3 310.3 L1173.4 297.5 L1163.5 285.1 L1151.7 273.0 L1138.1 261.4 L1122.9 250.4 L1106.0 239.9 L1087.6 230.0 L1067.8 220.9 L1046.7 212.5 L1024.5 205.0 L1001.3 198.3 L977.2 192.5 L952.4 187.7 L927.0 183.9 L901.2 181.0 L875.2 179.2 L849.0 178.4 L823.0 178.6 L797.2 179.9 L771.7 182.2 L746.9 185.4 L722.7 189.7 L699.4 195.0 L677.0 201.1 L655.8 208.2 L635.9 216.1 L617.4 224.8 L600.3 234.3 L584.9 244.4 L571.1 255.2 L559.2 266.5 L549.1 278.3 L540.9 290.6 L534.7 303.1 L530.5 316.0 L528.3 329.0 L528.2 342.1 L530.2 355.3 L534.2 368.4 L540.2 381.3 L548.1 394.0 L558.0 406.5 Z" fill="#8c6204"/><path d="M573.1 417.7 L586.7 429.3 L602.0 440.3 L618.9 450.8 L637.4 460.7 L657.2 469.8 L678.4 478.1 L700.6 485.6 L723.9 492.3 L748.1 498.0 L773.0 502.8 L798.4 506.7 L824.3 509.5 L850.4 511.3 L876.6 512.1 L902.7 511.8 L928.6 510.6 L954.1 508.3 L979.1 504.9 L1003.3 500.6 L1026.7 495.4 L1049.1 489.2 L1070.4 482.1 L1090.4 474.2 L1109.0 465.5 L1126.0 456.0 L1141.5 445.8 L1155.3 435.1 L1167.3 423.7 L1177.4 411.9 L1185.6 399.7 L1191.8 387.1 L1196.0 374.3 L1198.2 361.2 L1198.3 348.1 L1196.4 335.0 L1192.4 321.9 L1186.3 309.0 L1178.4 296.2 L1168.4 283.8 L1156.6 271.8 L1143.0 260.2 L1127.7 249.1 L1110.8 238.6 L1092.3 228.8 L1072.5 219.7 L1051.3 211.3 L1029.1 203.8 L1005.8 197.1 L981.6 191.4 L956.7 186.6 L931.3 182.8 L905.4 180.0 L879.3 178.1 L853.1 177.4 L827.0 177.6 L801.1 178.9 L775.6 181.2 L750.6 184.5 L726.4 188.8 L703.0 194.1 L680.6 200.2 L659.3 207.3 L639.3 215.2 L620.7 224.0 L603.6 233.4 L588.2 243.6 L574.4 254.4 L562.4 265.7 L552.3 277.5 L544.1 289.8 L537.9 302.3 L533.7 315.2 L531.5 328.2 L531.4 341.3 L533.3 354.5 L537.3 367.5 L543.3 380.5 L551.3 393.2 L561.3 405.6 Z" fill="#d8960a"/>
<path d="M578.9 416.1 L592.6 427.7 L608.0 438.7 L625.0 449.2 L643.5 459.0 L663.5 468.1 L684.7 476.4 L707.1 483.9 L730.5 490.5 L754.8 496.2 L779.8 501.0 L805.4 504.8 L831.4 507.6 L857.6 509.4 L884.0 510.1 L910.2 509.8 L936.2 508.5 L961.9 506.2 L986.9 502.8 L1011.3 498.5 L1034.8 493.2 L1057.3 487.0 L1078.7 479.9 L1098.8 472.0 L1117.5 463.2 L1134.6 453.7 L1150.2 443.6 L1164.0 432.8 L1176.1 421.4 L1186.3 409.6 L1194.5 397.3 L1200.7 384.8 L1205.0 371.9 L1207.1 358.9 L1207.2 345.8 L1205.3 332.7 L1201.3 319.6 L1195.2 306.7 L1187.2 294.0 L1177.2 281.5 L1165.3 269.5 L1151.7 257.9 L1136.3 246.9 L1119.2 236.4 L1100.7 226.6 L1080.8 217.5 L1059.5 209.2 L1037.1 201.7 L1013.7 195.1 L989.4 189.4 L964.4 184.6 L938.8 180.8 L912.8 178.1 L886.6 176.3 L860.3 175.5 L834.0 175.8 L808.0 177.1 L782.4 179.5 L757.3 182.8 L732.9 187.1 L709.4 192.4 L686.9 198.6 L665.6 205.7 L645.5 213.7 L626.8 222.4 L609.6 231.9 L594.1 242.1 L580.2 252.9 L568.2 264.2 L558.0 276.1 L549.8 288.3 L543.5 300.9 L539.3 313.7 L537.1 326.7 L537.0 339.8 L539.0 353.0 L543.0 366.1 L549.0 379.0 L557.1 391.7 L567.1 404.1 Z" fill="#8c6204"/><path d="M582.2 415.3 L595.9 426.8 L611.4 437.9 L628.4 448.3 L647.0 458.1 L667.0 467.2 L688.3 475.5 L710.8 482.9 L734.3 489.5 L758.6 495.2 L783.7 500.0 L809.3 503.8 L835.4 506.5 L861.7 508.3 L888.1 509.0 L914.4 508.7 L940.5 507.4 L966.2 505.0 L991.4 501.7 L1015.8 497.3 L1039.4 492.0 L1061.9 485.8 L1083.3 478.7 L1103.5 470.7 L1122.2 462.0 L1139.5 452.5 L1155.1 442.3 L1168.9 431.5 L1181.0 420.1 L1191.2 408.3 L1199.5 396.0 L1205.7 383.5 L1210.0 370.6 L1212.1 357.6 L1212.2 344.5 L1210.3 331.4 L1206.2 318.3 L1200.2 305.4 L1192.1 292.7 L1182.1 280.3 L1170.2 268.3 L1156.5 256.7 L1141.1 245.7 L1124.0 235.2 L1105.4 225.4 L1085.4 216.3 L1064.1 208.0 L1041.6 200.6 L1018.2 194.0 L993.8 188.3 L968.7 183.5 L943.1 179.8 L917.0 177.0 L890.7 175.2 L864.3 174.5 L838.0 174.8 L811.9 176.1 L786.2 178.5 L761.1 181.8 L736.6 186.2 L713.1 191.5 L690.5 197.7 L669.1 204.8 L649.0 212.8 L630.2 221.6 L613.0 231.1 L597.4 241.2 L583.5 252.0 L571.4 263.4 L561.2 275.2 L553.0 287.5 L546.7 300.0 L542.5 312.9 L540.3 325.9 L540.2 339.0 L542.2 352.2 L546.2 365.2 L552.3 378.1 L560.3 390.8 L570.3 403.2 Z" fill="#d8960a"/>
<path d="M588.2 413.7 L601.9 425.2 L617.5 436.2 L634.6 446.7 L653.3 456.4 L673.4 465.5 L694.8 473.8 L717.3 481.2 L740.9 487.8 L765.4 493.4 L790.6 498.1 L816.3 501.9 L842.5 504.6 L869.0 506.4 L895.5 507.1 L921.9 506.7 L948.1 505.4 L974.0 503.0 L999.2 499.6 L1023.7 495.2 L1047.4 489.9 L1070.1 483.6 L1091.6 476.5 L1111.8 468.5 L1130.7 459.7 L1148.0 450.2 L1163.6 440.0 L1177.6 429.2 L1189.7 417.8 L1199.9 406.0 L1208.2 393.7 L1214.5 381.1 L1218.8 368.3 L1221.0 355.3 L1221.1 342.2 L1219.1 329.1 L1215.0 316.0 L1208.9 303.1 L1200.8 290.4 L1190.8 278.0 L1178.8 266.0 L1165.1 254.5 L1149.5 243.5 L1132.4 233.0 L1113.7 223.3 L1093.6 214.2 L1072.2 206.0 L1049.7 198.5 L1026.1 191.9 L1001.6 186.3 L976.4 181.6 L950.7 177.8 L924.5 175.1 L898.0 173.4 L871.5 172.7 L845.1 173.0 L818.9 174.4 L793.0 176.7 L767.8 180.1 L743.3 184.5 L719.6 189.8 L696.9 196.1 L675.4 203.2 L655.2 211.2 L636.3 220.0 L619.0 229.5 L603.4 239.7 L589.4 250.5 L577.3 261.9 L567.1 273.7 L558.8 286.0 L552.5 298.6 L548.2 311.4 L546.0 324.4 L545.9 337.5 L547.9 350.7 L552.0 363.7 L558.1 376.6 L566.2 389.3 L576.2 401.7 Z" fill="#8c6204"/><path d="M591.5 412.8 L605.3 424.3 L620.9 435.3 L638.1 445.8 L656.8 455.5 L677.0 464.5 L698.4 472.8 L721.0 480.2 L744.7 486.8 L769.2 492.4 L794.5 497.1 L820.3 500.8 L846.5 503.6 L873.0 505.3 L899.6 505.9 L926.1 505.6 L952.4 504.2 L978.3 501.8 L1003.6 498.4 L1028.2 494.0 L1051.9 488.7 L1074.7 482.4 L1096.2 475.3 L1116.5 467.3 L1135.4 458.5 L1152.7 449.0 L1168.4 438.7 L1182.4 427.9 L1194.6 416.6 L1204.8 404.7 L1213.1 392.4 L1219.5 379.9 L1223.7 367.0 L1225.9 354.0 L1226.0 340.9 L1224.0 327.8 L1219.9 314.7 L1213.8 301.8 L1205.7 289.1 L1195.6 276.8 L1183.6 264.8 L1169.8 253.2 L1154.3 242.2 L1137.1 231.8 L1118.4 222.1 L1098.2 213.0 L1076.8 204.8 L1054.2 197.4 L1030.5 190.8 L1006.0 185.2 L980.7 180.5 L954.9 176.7 L928.7 174.0 L902.2 172.3 L875.6 171.6 L849.1 172.0 L822.8 173.4 L796.9 175.8 L771.6 179.2 L747.0 183.5 L723.2 188.9 L700.5 195.2 L679.0 202.3 L658.7 210.3 L639.8 219.1 L622.5 228.6 L606.8 238.8 L592.8 249.7 L580.6 261.0 L570.4 272.9 L562.0 285.1 L555.7 297.7 L551.5 310.6 L549.3 323.6 L549.2 336.7 L551.2 349.8 L555.2 362.9 L561.4 375.8 L569.5 388.4 L579.6 400.8 Z" fill="#d8960a"/>
<path d="M597.6 411.2 L611.4 422.7 L627.1 433.7 L644.3 444.1 L663.1 453.8 L683.4 462.8 L704.9 471.1 L727.6 478.5 L751.4 485.0 L776.0 490.6 L801.4 495.3 L827.3 499.0 L853.7 501.7 L880.3 503.3 L907.0 504.0 L933.6 503.6 L960.0 502.2 L986.0 499.8 L1011.4 496.3 L1036.1 491.9 L1059.9 486.6 L1082.8 480.3 L1104.4 473.1 L1124.8 465.1 L1143.7 456.3 L1161.1 446.7 L1176.9 436.5 L1191.0 425.7 L1203.2 414.3 L1213.5 402.4 L1221.8 390.2 L1228.1 377.6 L1232.4 364.7 L1234.6 351.7 L1234.7 338.6 L1232.7 325.5 L1228.6 312.5 L1222.5 299.6 L1214.3 286.9 L1204.2 274.5 L1192.2 262.6 L1178.3 251.1 L1162.7 240.1 L1145.4 229.7 L1126.6 220.0 L1106.4 211.0 L1084.8 202.7 L1062.1 195.3 L1038.4 188.8 L1013.7 183.2 L988.4 178.5 L962.4 174.8 L936.1 172.1 L909.5 170.4 L882.8 169.8 L856.1 170.2 L829.8 171.6 L803.8 174.0 L778.3 177.4 L753.6 181.9 L729.8 187.2 L707.0 193.5 L685.3 200.7 L665.0 208.7 L646.0 217.5 L628.6 227.1 L612.8 237.3 L598.8 248.1 L586.6 259.5 L576.3 271.4 L567.9 283.6 L561.6 296.2 L557.3 309.0 L555.1 322.1 L555.0 335.2 L557.0 348.3 L561.1 361.3 L567.3 374.2 L575.4 386.9 L585.5 399.2 Z" fill="#8c6204"/><path d="M601.0 410.3 L614.9 421.8 L630.6 432.8 L647.9 443.2 L666.7 452.9 L687.0 461.9 L708.6 470.1 L731.4 477.5 L755.2 484.0 L779.9 489.6 L805.3 494.2 L831.3 497.9 L857.7 500.6 L884.4 502.3 L911.1 502.9 L937.8 502.5 L964.3 501.1 L990.3 498.6 L1015.8 495.2 L1040.5 490.8 L1064.4 485.4 L1087.3 479.1 L1109.0 471.9 L1129.4 463.9 L1148.4 455.0 L1165.9 445.5 L1181.7 435.3 L1195.7 424.4 L1208.0 413.0 L1218.3 401.2 L1226.7 388.9 L1233.0 376.3 L1237.3 363.5 L1239.5 350.5 L1239.6 337.4 L1237.6 324.2 L1233.5 311.2 L1227.3 298.3 L1219.1 285.6 L1209.0 273.3 L1196.9 261.3 L1183.0 249.8 L1167.4 238.9 L1150.1 228.5 L1131.2 218.8 L1110.9 209.8 L1089.3 201.6 L1066.6 194.2 L1042.8 187.7 L1018.1 182.1 L992.7 177.4 L966.7 173.7 L940.3 171.1 L913.6 169.4 L886.8 168.8 L860.1 169.2 L833.7 170.6 L807.6 173.0 L782.2 176.5 L757.4 180.9 L733.5 186.3 L710.7 192.6 L688.9 199.8 L668.5 207.8 L649.5 216.6 L632.1 226.2 L616.3 236.4 L602.2 247.2 L590.0 258.6 L579.7 270.5 L571.3 282.7 L564.9 295.3 L560.7 308.2 L558.5 321.2 L558.4 334.3 L560.4 347.4 L564.5 360.5 L570.6 373.3 L578.8 386.0 L588.9 398.4 Z" fill="#d8960a"/>
<path d="M607.2 408.7 L621.1 420.2 L636.8 431.1 L654.2 441.5 L673.1 451.2 L693.5 460.2 L715.2 468.4 L738.0 475.7 L761.9 482.2 L786.7 487.8 L812.2 492.4 L838.3 496.1 L864.8 498.7 L891.6 500.3 L918.5 500.9 L945.3 500.5 L971.8 499.1 L997.9 496.6 L1023.5 493.1 L1048.4 488.7 L1072.3 483.3 L1095.3 477.0 L1117.1 469.7 L1137.6 461.7 L1156.6 452.9 L1174.2 443.3 L1190.0 433.1 L1204.1 422.2 L1216.4 410.8 L1226.8 398.9 L1235.2 386.7 L1241.5 374.1 L1245.8 361.2 L1248.0 348.2 L1248.1 335.1 L1246.1 322.0 L1242.0 309.0 L1235.8 296.1 L1227.6 283.4 L1217.4 271.1 L1205.3 259.2 L1191.4 247.7 L1175.7 236.7 L1158.3 226.4 L1139.4 216.7 L1119.0 207.7 L1097.3 199.5 L1074.5 192.1 L1050.6 185.7 L1025.8 180.1 L1000.3 175.5 L974.2 171.8 L947.7 169.2 L920.9 167.5 L894.0 166.9 L867.2 167.3 L840.7 168.8 L814.6 171.2 L789.0 174.7 L764.1 179.2 L740.2 184.6 L717.2 190.9 L695.4 198.1 L674.9 206.2 L655.9 215.0 L638.3 224.6 L622.5 234.8 L608.4 245.7 L596.1 257.0 L585.7 268.9 L577.3 281.2 L571.0 293.8 L566.7 306.6 L564.5 319.6 L564.4 332.7 L566.4 345.9 L570.5 358.9 L576.7 371.8 L584.9 384.4 L595.1 396.7 Z" fill="#8c6204"/><path d="M610.7 407.8 L624.7 419.3 L640.4 430.2 L657.8 440.5 L676.8 450.2 L697.2 459.2 L718.9 467.4 L741.8 474.7 L765.7 481.2 L790.6 486.8 L816.1 491.4 L842.3 495.0 L868.9 497.6 L895.7 499.3 L922.6 499.9 L949.4 499.4 L976.0 498.0 L1002.2 495.5 L1027.9 492.0 L1052.8 487.5 L1076.8 482.1 L1099.8 475.8 L1121.6 468.6 L1142.1 460.5 L1161.2 451.7 L1178.8 442.1 L1194.7 431.8 L1208.8 421.0 L1221.1 409.6 L1231.5 397.7 L1239.9 385.4 L1246.3 372.8 L1250.6 360.0 L1252.8 347.0 L1252.9 333.9 L1250.9 320.8 L1246.8 307.7 L1240.6 294.9 L1232.3 282.2 L1222.1 269.9 L1210.0 257.9 L1196.0 246.5 L1180.3 235.5 L1162.9 225.2 L1143.9 215.5 L1123.5 206.5 L1101.8 198.4 L1078.9 191.0 L1054.9 184.5 L1030.1 179.0 L1004.5 174.4 L978.4 170.7 L951.8 168.1 L925.0 166.5 L898.1 165.9 L871.3 166.3 L844.7 167.8 L818.5 170.3 L792.8 173.7 L767.9 178.2 L743.9 183.6 L720.9 190.0 L699.1 197.2 L678.6 205.2 L659.5 214.1 L641.9 223.6 L626.0 233.9 L611.9 244.8 L599.6 256.2 L589.2 268.0 L580.8 280.3 L574.4 292.9 L570.1 305.7 L567.9 318.8 L567.8 331.9 L569.8 345.0 L573.9 358.0 L580.1 370.9 L588.3 383.5 L598.6 395.8 Z" fill="#d8960a"/>
<path d="M617.0 406.1 L631.1 417.6 L646.9 428.5 L664.3 438.8 L683.3 448.5 L703.8 457.4 L725.6 465.6 L748.6 472.9 L772.6 479.4 L797.5 484.9 L823.1 489.5 L849.4 493.1 L876.0 495.7 L902.9 497.3 L929.9 497.9 L956.9 497.5 L983.5 496.0 L1009.8 493.5 L1035.5 490.0 L1060.5 485.5 L1084.6 480.0 L1107.7 473.7 L1129.6 466.5 L1150.2 458.4 L1169.3 449.5 L1186.9 439.9 L1202.9 429.7 L1217.1 418.8 L1229.4 407.4 L1239.8 395.5 L1248.2 383.2 L1254.6 370.6 L1259.0 357.8 L1261.2 344.8 L1261.3 331.7 L1259.2 318.6 L1255.1 305.6 L1248.9 292.7 L1240.6 280.1 L1230.4 267.7 L1218.2 255.8 L1204.2 244.4 L1188.4 233.4 L1170.9 223.1 L1151.9 213.4 L1131.4 204.5 L1109.6 196.3 L1086.7 189.0 L1062.7 182.5 L1037.8 177.0 L1012.1 172.4 L985.9 168.8 L959.2 166.2 L932.3 164.6 L905.3 164.0 L878.4 164.5 L851.7 166.0 L825.4 168.5 L799.7 172.0 L774.7 176.5 L750.6 181.9 L727.6 188.2 L705.7 195.5 L685.1 203.5 L665.9 212.4 L648.3 222.0 L632.4 232.3 L618.2 243.1 L605.9 254.5 L595.4 266.4 L587.0 278.7 L580.6 291.3 L576.3 304.1 L574.1 317.1 L574.0 330.2 L576.0 343.3 L580.1 356.4 L586.4 369.2 L594.6 381.9 L604.9 394.2 Z" fill="#8c6204"/><path d="M620.7 405.2 L634.7 416.6 L650.5 427.5 L668.0 437.9 L687.1 447.5 L707.6 456.4 L729.4 464.6 L752.4 471.9 L776.5 478.4 L801.4 483.9 L827.1 488.5 L853.4 492.1 L880.1 494.7 L907.0 496.3 L934.1 496.8 L961.0 496.4 L987.8 494.9 L1014.1 492.3 L1039.8 488.8 L1064.8 484.3 L1089.0 478.9 L1112.1 472.5 L1134.0 465.3 L1154.6 457.2 L1173.8 448.3 L1191.4 438.7 L1207.4 428.5 L1221.6 417.6 L1234.0 406.2 L1244.4 394.3 L1252.9 382.0 L1259.3 369.4 L1263.6 356.6 L1265.8 343.6 L1265.9 330.5 L1263.9 317.4 L1259.7 304.4 L1253.5 291.5 L1245.2 278.9 L1235.0 266.6 L1222.8 254.6 L1208.7 243.2 L1192.9 232.3 L1175.4 221.9 L1156.4 212.3 L1135.8 203.3 L1114.0 195.2 L1091.0 187.9 L1067.0 181.4 L1042.0 175.9 L1016.3 171.3 L990.1 167.7 L963.4 165.1 L936.4 163.5 L909.4 163.0 L882.4 163.4 L855.7 164.9 L829.4 167.4 L803.6 171.0 L778.6 175.5 L754.5 180.9 L731.4 187.3 L709.4 194.5 L688.8 202.6 L669.6 211.5 L652.0 221.0 L636.0 231.3 L621.8 242.2 L609.5 253.6 L599.0 265.5 L590.6 277.8 L584.2 290.4 L579.9 303.2 L577.6 316.2 L577.6 329.3 L579.6 342.4 L583.7 355.4 L589.9 368.3 L598.2 380.9 L608.5 393.2 Z" fill="#d8960a"/>
<path d="M627.4 403.4 L641.4 414.9 L657.3 425.8 L674.8 436.1 L693.9 445.7 L714.5 454.6 L736.3 462.8 L759.4 470.1 L783.5 476.5 L808.5 482.0 L834.2 486.6 L860.5 490.2 L887.3 492.8 L914.3 494.3 L941.4 494.9 L968.4 494.4 L995.2 492.9 L1021.5 490.4 L1047.3 486.9 L1072.4 482.3 L1096.6 476.9 L1119.7 470.5 L1141.7 463.3 L1162.4 455.2 L1181.6 446.3 L1199.3 436.7 L1215.3 426.4 L1229.5 415.5 L1241.9 404.1 L1252.3 392.2 L1260.8 380.0 L1267.2 367.4 L1271.5 354.5 L1273.7 341.5 L1273.8 328.4 L1271.8 315.3 L1267.7 302.3 L1261.4 289.4 L1253.1 276.8 L1242.8 264.5 L1230.6 252.6 L1216.6 241.1 L1200.7 230.2 L1183.2 219.9 L1164.1 210.3 L1143.5 201.4 L1121.7 193.2 L1098.6 185.9 L1074.5 179.5 L1049.5 174.0 L1023.8 169.4 L997.5 165.8 L970.7 163.2 L943.7 161.7 L916.6 161.1 L889.6 161.6 L862.8 163.1 L836.5 165.6 L810.7 169.1 L785.6 173.7 L761.4 179.1 L738.3 185.5 L716.3 192.7 L695.6 200.8 L676.4 209.7 L658.7 219.3 L642.7 229.6 L628.5 240.5 L616.1 251.9 L605.7 263.8 L597.2 276.0 L590.8 288.6 L586.5 301.5 L584.3 314.5 L584.2 327.6 L586.2 340.7 L590.3 353.7 L596.6 366.6 L604.9 379.2 L615.2 391.5 Z" fill="#8c6204"/><path d="M627.4 403.4 L641.4 414.9 L657.3 425.8 L674.8 436.1 L693.9 445.7 L714.5 454.6 L736.3 462.8 L759.4 470.1 L783.5 476.5 L808.5 482.0 L834.2 486.6 L860.5 490.2 L887.3 492.8 L914.3 494.3 L941.4 494.9 L968.4 494.4 L995.2 492.9 L1021.5 490.4 L1047.3 486.9 L1072.4 482.3 L1096.6 476.9 L1119.7 470.5 L1141.7 463.3 L1162.4 455.2 L1181.6 446.3 L1199.3 436.7 L1215.3 426.4 L1229.5 415.5 L1241.9 404.1 L1252.3 392.2 L1260.8 380.0 L1267.2 367.4 L1271.5 354.5 L1273.7 341.5 L1273.8 328.4 L1271.8 315.3 L1267.7 302.3 L1261.4 289.4 L1253.1 276.8 L1242.8 264.5 L1230.6 252.6 L1216.6 241.1 L1200.7 230.2 L1183.2 219.9 L1164.1 210.3 L1143.5 201.4 L1121.7 193.2 L1098.6 185.9 L1074.5 179.5 L1049.5 174.0 L1023.8 169.4 L997.5 165.8 L970.7 163.2 L943.7 161.7 L916.6 161.1 L889.6 161.6 L862.8 163.1 L836.5 165.6 L810.7 169.1 L785.6 173.7 L761.4 179.1 L738.3 185.5 L716.3 192.7 L695.6 200.8 L676.4 209.7 L658.7 219.3 L642.7 229.6 L628.5 240.5 L616.1 251.9 L605.7 263.8 L597.2 276.0 L590.8 288.6 L586.5 301.5 L584.3 314.5 L584.2 327.6 L586.2 340.7 L590.3 353.7 L596.6 366.6 L604.9 379.2 L615.2 391.5 Z" fill="#d8960a"/>
</g>
<linearGradient id="cylsh" gradientUnits="userSpaceOnUse" x1="500" y1="239" x2="592" y2="609"><stop offset="0" stop-color="#fff2c0" stop-opacity="0.06"/><stop offset="0.45" stop-color="#2a1400" stop-opacity="0.0"/><stop offset="1" stop-color="#2a1400" stop-opacity="0.2"/></linearGradient>
<rect x="150" y="140" width="1150" height="560" fill="url(#cylsh)"/>
</g>
<path d="M1274.8 338.3 L1273.7 350.0 L1270.8 361.5 L1266.3 373.0 L1260.1 384.2 L1252.3 395.1 L1242.9 405.7 L1232.0 415.9 L1219.7 425.7 L1205.9 435.0 L1190.7 443.8 L1174.3 452.0 L1156.7 459.7 L1138.0 466.6 L1118.3 473.0 L1097.6 478.6 L1076.1 483.4 L1053.9 487.5 L1031.1 490.9 L1007.8 493.4 L984.1 495.2 L960.2 496.1 L936.1 496.2 L911.9 495.5 L887.9 493.9 L864.0 491.6 L840.5 488.5 L817.4 484.5 L794.8 479.9 L772.9 474.4 L751.8 468.3 L731.5 461.5 L712.1 454.0 L693.9 445.9 L676.8 437.3 L660.9 428.1 L646.3 418.4 L633.1 408.3 L621.3 397.8 L611.0 386.9 L602.3 375.8 L595.2 364.4 L589.7 352.9 L585.8 341.2 L583.6 329.5 L583.2 317.7 L584.3 306.0 L587.2 294.5 L591.7 283.0 L597.9 271.8 L605.7 260.9 L615.1 250.3 L626.0 240.1 L638.3 230.3 L652.1 221.0 L667.3 212.2 L683.7 204.0 L701.3 196.3 L720.0 189.4 L739.7 183.0 L760.4 177.4 L781.9 172.6 L804.1 168.5 L826.9 165.1 L850.2 162.6 L873.9 160.8 L897.8 159.9 L921.9 159.8 L946.1 160.5 L970.1 162.1 L994.0 164.4 L1017.5 167.5 L1040.6 171.5 L1063.2 176.1 L1085.1 181.6 L1106.2 187.7 L1126.5 194.5 L1145.9 202.0 L1164.1 210.1 L1181.2 218.7 L1197.1 227.9 L1211.7 237.6 L1224.9 247.7 L1236.7 258.2 L1247.0 269.1 L1255.7 280.2 L1262.8 291.6 L1268.3 303.1 L1272.2 314.8 L1274.4 326.5 Z" fill="#6e4a00"/>
<path d="M1269.8 338.1 L1268.7 349.5 L1265.9 360.7 L1261.4 371.8 L1255.3 382.6 L1247.6 393.2 L1238.4 403.5 L1227.7 413.4 L1215.5 422.9 L1201.9 432.0 L1187.0 440.5 L1170.8 448.5 L1153.5 455.8 L1135.0 462.6 L1115.6 468.7 L1095.2 474.2 L1074.1 478.9 L1052.2 482.9 L1029.7 486.1 L1006.8 488.5 L983.4 490.2 L959.8 491.1 L936.1 491.2 L912.3 490.5 L888.6 489.0 L865.0 486.7 L841.8 483.6 L819.1 479.8 L796.8 475.3 L775.2 470.0 L754.4 464.0 L734.4 457.4 L715.3 450.2 L697.3 442.3 L680.5 433.9 L664.8 425.0 L650.4 415.6 L637.4 405.8 L625.8 395.6 L615.7 385.0 L607.1 374.2 L600.0 363.2 L594.6 352.0 L590.8 340.7 L588.6 329.3 L588.2 317.9 L589.3 306.5 L592.1 295.3 L596.6 284.2 L602.7 273.4 L610.4 262.8 L619.6 252.5 L630.3 242.6 L642.5 233.1 L656.1 224.0 L671.0 215.5 L687.2 207.5 L704.5 200.2 L723.0 193.4 L742.4 187.3 L762.8 181.8 L783.9 177.1 L805.8 173.1 L828.3 169.9 L851.2 167.5 L874.6 165.8 L898.2 164.9 L921.9 164.8 L945.7 165.5 L969.4 167.0 L993.0 169.3 L1016.2 172.4 L1038.9 176.2 L1061.2 180.7 L1082.8 186.0 L1103.6 192.0 L1123.6 198.6 L1142.7 205.8 L1160.7 213.7 L1177.5 222.1 L1193.2 231.0 L1207.6 240.4 L1220.6 250.2 L1232.2 260.4 L1242.3 271.0 L1250.9 281.8 L1258.0 292.8 L1263.4 304.0 L1267.2 315.3 L1269.4 326.7 Z" fill="none" stroke="#b07406" stroke-width="7.5" filter="url(#bl08)"/>
<path d="M1270.8 338.1 L1269.7 349.6 L1266.8 360.9 L1262.4 372.0 L1256.3 382.9 L1248.6 393.6 L1239.3 403.9 L1228.6 413.9 L1216.3 423.5 L1202.7 432.6 L1187.7 441.1 L1171.5 449.2 L1154.1 456.6 L1135.6 463.4 L1116.1 469.6 L1095.7 475.0 L1074.5 479.8 L1052.5 483.8 L1030.0 487.0 L1007.0 489.5 L983.6 491.2 L959.9 492.1 L936.1 492.2 L912.2 491.5 L888.4 490.0 L864.8 487.7 L841.6 484.6 L818.7 480.8 L796.4 476.2 L774.8 470.9 L753.9 464.9 L733.8 458.2 L714.7 450.9 L696.6 443.0 L679.7 434.6 L664.0 425.6 L649.6 416.1 L636.5 406.3 L624.9 396.0 L614.7 385.4 L606.1 374.5 L599.1 363.4 L593.6 352.2 L589.8 340.8 L587.6 329.3 L587.2 317.9 L588.3 306.4 L591.2 295.1 L595.6 284.0 L601.7 273.1 L609.4 262.4 L618.7 252.1 L629.4 242.1 L641.7 232.5 L655.3 223.4 L670.3 214.9 L686.5 206.8 L703.9 199.4 L722.4 192.6 L741.9 186.4 L762.3 181.0 L783.5 176.2 L805.5 172.2 L828.0 169.0 L851.0 166.5 L874.4 164.8 L898.1 163.9 L921.9 163.8 L945.8 164.5 L969.6 166.0 L993.2 168.3 L1016.4 171.4 L1039.3 175.2 L1061.6 179.8 L1083.2 185.1 L1104.1 191.1 L1124.2 197.8 L1143.3 205.1 L1161.4 213.0 L1178.3 221.4 L1194.0 230.4 L1208.4 239.9 L1221.5 249.7 L1233.1 260.0 L1243.3 270.6 L1251.9 281.5 L1258.9 292.6 L1264.4 303.8 L1268.2 315.2 L1270.4 326.7 Z" fill="none" stroke="#d8940a" stroke-width="3.2" filter="url(#bl08)"/>
<path d="M1264.9 338.0 L1263.7 349.0 L1260.9 359.9 L1256.5 370.6 L1250.5 381.1 L1243.0 391.4 L1233.9 401.3 L1223.3 410.9 L1211.3 420.1 L1198.0 428.9 L1183.3 437.2 L1167.3 444.9 L1150.2 452.0 L1132.1 458.6 L1112.9 464.5 L1092.9 469.8 L1072.0 474.3 L1050.5 478.2 L1028.3 481.3 L1005.7 483.7 L982.7 485.3 L959.4 486.1 L936.0 486.2 L912.6 485.5 L889.2 484.0 L866.1 481.8 L843.2 478.8 L820.8 475.1 L798.8 470.7 L777.6 465.6 L757.0 459.8 L737.3 453.4 L718.5 446.3 L700.8 438.7 L684.2 430.5 L668.7 421.9 L654.5 412.8 L641.7 403.2 L630.3 393.3 L620.3 383.1 L611.8 372.6 L604.9 361.9 L599.5 351.1 L595.8 340.1 L593.6 329.1 L593.1 318.0 L594.3 307.0 L597.1 296.1 L601.5 285.4 L607.5 274.9 L615.0 264.6 L624.1 254.7 L634.7 245.1 L646.7 235.9 L660.0 227.1 L674.7 218.8 L690.7 211.1 L707.8 204.0 L725.9 197.4 L745.1 191.5 L765.1 186.2 L786.0 181.7 L807.5 177.8 L829.7 174.7 L852.3 172.3 L875.3 170.7 L898.6 169.9 L922.0 169.8 L945.4 170.5 L968.8 172.0 L991.9 174.2 L1014.8 177.2 L1037.2 180.9 L1059.2 185.3 L1080.4 190.4 L1101.0 196.2 L1120.7 202.6 L1139.5 209.7 L1157.2 217.3 L1173.8 225.5 L1189.3 234.1 L1203.5 243.2 L1216.3 252.8 L1227.7 262.7 L1237.7 272.9 L1246.2 283.4 L1253.1 294.1 L1258.5 304.9 L1262.2 315.9 L1264.4 326.9 Z" fill="#d4d070"/>
<clipPath id="infclip"><path d="M1265.9 338.0 L1264.7 349.1 L1261.9 360.0 L1257.5 370.8 L1251.5 381.4 L1243.9 391.8 L1234.8 401.8 L1224.2 411.4 L1212.2 420.7 L1198.7 429.5 L1184.0 437.8 L1168.0 445.6 L1150.9 452.8 L1132.7 459.4 L1113.5 465.3 L1093.3 470.6 L1072.4 475.2 L1050.8 479.1 L1028.6 482.2 L1005.9 484.6 L982.8 486.3 L959.5 487.1 L936.0 487.2 L912.5 486.5 L889.1 485.0 L865.9 482.8 L842.9 479.8 L820.4 476.1 L798.4 471.6 L777.1 466.5 L756.5 460.6 L736.7 454.2 L717.9 447.1 L700.1 439.4 L683.4 431.2 L667.9 422.5 L653.7 413.3 L640.8 403.7 L629.4 393.8 L619.4 383.5 L610.8 373.0 L603.9 362.2 L598.5 351.3 L594.8 340.2 L592.6 329.1 L592.1 318.0 L593.3 306.9 L596.1 296.0 L600.5 285.2 L606.5 274.6 L614.1 264.2 L623.2 254.2 L633.8 244.6 L645.8 235.3 L659.3 226.5 L674.0 218.2 L690.0 210.4 L707.1 203.2 L725.3 196.6 L744.5 190.7 L764.7 185.4 L785.6 180.8 L807.2 176.9 L829.4 173.8 L852.1 171.4 L875.2 169.7 L898.5 168.9 L922.0 168.8 L945.5 169.5 L968.9 171.0 L992.1 173.2 L1015.1 176.2 L1037.6 179.9 L1059.6 184.4 L1080.9 189.5 L1101.5 195.4 L1121.3 201.8 L1140.1 208.9 L1157.9 216.6 L1174.6 224.8 L1190.1 233.5 L1204.3 242.7 L1217.2 252.3 L1228.6 262.2 L1238.6 272.5 L1247.2 283.0 L1254.1 293.8 L1259.5 304.7 L1263.2 315.8 L1265.4 326.9 Z"/></clipPath>
<path d="M1260.4 337.8 L1259.2 348.5 L1256.5 359.2 L1252.2 369.6 L1246.3 379.9 L1238.8 389.9 L1229.8 399.6 L1219.4 409.0 L1207.6 417.9 L1194.4 426.4 L1179.9 434.5 L1164.2 442.0 L1147.3 449.0 L1129.4 455.4 L1110.5 461.1 L1090.7 466.2 L1070.1 470.7 L1048.9 474.4 L1027.0 477.4 L1004.7 479.7 L982.0 481.3 L959.1 482.1 L936.0 482.2 L912.9 481.5 L889.8 480.1 L867.0 477.9 L844.4 475.0 L822.3 471.4 L800.6 467.0 L779.6 462.0 L759.4 456.4 L739.9 450.1 L721.4 443.2 L703.9 435.8 L687.5 427.9 L672.2 419.4 L658.2 410.5 L645.6 401.2 L634.3 391.6 L624.4 381.6 L616.1 371.4 L609.2 361.0 L603.9 350.4 L600.2 339.7 L598.1 328.9 L597.6 318.2 L598.8 307.5 L601.5 296.8 L605.8 286.4 L611.7 276.1 L619.2 266.1 L628.2 256.4 L638.6 247.0 L650.4 238.1 L663.6 229.6 L678.1 221.5 L693.8 214.0 L710.7 207.0 L728.6 200.6 L747.5 194.9 L767.3 189.8 L787.9 185.3 L809.1 181.6 L831.0 178.6 L853.3 176.3 L876.0 174.7 L898.9 173.9 L922.0 173.8 L945.1 174.5 L968.2 175.9 L991.0 178.1 L1013.6 181.0 L1035.7 184.6 L1057.4 189.0 L1078.4 194.0 L1098.6 199.6 L1118.1 205.9 L1136.6 212.8 L1154.1 220.2 L1170.5 228.1 L1185.8 236.6 L1199.8 245.5 L1212.4 254.8 L1223.7 264.4 L1233.6 274.4 L1241.9 284.6 L1248.8 295.0 L1254.1 305.6 L1257.8 316.3 L1259.9 327.1 Z" fill="#5e0816"/>
<pattern id="purp" patternUnits="userSpaceOnUse" width="12.6" height="12.6" patternTransform="translate(929 328) scale(1 0.75) rotate(45)"><rect x="4.2" y="4.2" width="4.2" height="4.2" fill="#a834c0" transform="rotate(-45 6.3 6.3)"/></pattern>
<path d="M1260.4 337.8 L1259.2 348.5 L1256.5 359.2 L1252.2 369.6 L1246.3 379.9 L1238.8 389.9 L1229.8 399.6 L1219.4 409.0 L1207.6 417.9 L1194.4 426.4 L1179.9 434.5 L1164.2 442.0 L1147.3 449.0 L1129.4 455.4 L1110.5 461.1 L1090.7 466.2 L1070.1 470.7 L1048.9 474.4 L1027.0 477.4 L1004.7 479.7 L982.0 481.3 L959.1 482.1 L936.0 482.2 L912.9 481.5 L889.8 480.1 L867.0 477.9 L844.4 475.0 L822.3 471.4 L800.6 467.0 L779.6 462.0 L759.4 456.4 L739.9 450.1 L721.4 443.2 L703.9 435.8 L687.5 427.9 L672.2 419.4 L658.2 410.5 L645.6 401.2 L634.3 391.6 L624.4 381.6 L616.1 371.4 L609.2 361.0 L603.9 350.4 L600.2 339.7 L598.1 328.9 L597.6 318.2 L598.8 307.5 L601.5 296.8 L605.8 286.4 L611.7 276.1 L619.2 266.1 L628.2 256.4 L638.6 247.0 L650.4 238.1 L663.6 229.6 L678.1 221.5 L693.8 214.0 L710.7 207.0 L728.6 200.6 L747.5 194.9 L767.3 189.8 L787.9 185.3 L809.1 181.6 L831.0 178.6 L853.3 176.3 L876.0 174.7 L898.9 173.9 L922.0 173.8 L945.1 174.5 L968.2 175.9 L991.0 178.1 L1013.6 181.0 L1035.7 184.6 L1057.4 189.0 L1078.4 194.0 L1098.6 199.6 L1118.1 205.9 L1136.6 212.8 L1154.1 220.2 L1170.5 228.1 L1185.8 236.6 L1199.8 245.5 L1212.4 254.8 L1223.7 264.4 L1233.6 274.4 L1241.9 284.6 L1248.8 295.0 L1254.1 305.6 L1257.8 316.3 L1259.9 327.1 Z" fill="url(#purp)"/>
<g clip-path="url(#infclip)">
<path d="M1071.6 194.4L1080.5 201.0L1071.6 207.7L1062.6 201.0L1053.7 194.4M1044.8 187.7M884.5 174.3L893.4 181.0L902.3 174.3M937.9 174.3L929.0 181.0L920.1 174.3L911.2 181.0L902.3 187.7L911.2 194.4L920.1 187.7L929.0 194.4L920.1 201.0L929.0 207.7L937.9 201.0L946.8 194.4L937.9 187.7L946.8 181.0L955.7 187.7L964.6 181.0M955.7 174.3M1000.3 181.0M982.5 181.0L973.5 187.7L982.5 194.4L991.4 187.7L1000.3 194.4L991.4 201.0L1000.3 207.7L1009.2 201.0L1018.1 194.4L1009.2 187.7L1018.1 181.0L1027.0 187.7L1035.9 194.4L1027.0 201.0L1035.9 207.7L1044.8 201.0L1053.7 207.7L1062.6 214.4L1053.7 221.1L1044.8 214.4L1035.9 221.1L1044.8 227.8L1035.9 234.4L1027.0 227.8L1018.1 221.1L1027.0 214.4L1018.1 207.7L1009.2 214.4L1000.3 221.1L991.4 227.8L1000.3 234.4L1009.2 227.8L1018.1 234.4L1027.0 241.1L1018.1 247.8L1009.2 241.1L1000.3 247.8L1009.2 254.5L1000.3 261.2L991.4 254.5L982.5 247.8L991.4 241.1L982.5 234.4L973.5 241.1L964.6 234.4L955.7 227.8L964.6 221.1L973.5 227.8L982.5 221.1L991.4 214.4L982.5 207.7L973.5 214.4L964.6 207.7L973.5 201.0L964.6 194.4L955.7 201.0L946.8 207.7L955.7 214.4L946.8 221.1L937.9 214.4L929.0 221.1L937.9 227.8L929.0 234.4L920.1 227.8L911.2 234.4L902.3 241.1L911.2 247.8L920.1 241.1L929.0 247.8L920.1 254.5L929.0 261.2L937.9 254.5L946.8 247.8L937.9 241.1L946.8 234.4L955.7 241.1L964.6 247.8L955.7 254.5L964.6 261.2L973.5 254.5L982.5 261.2L991.4 267.9L982.5 274.5L973.5 267.9L964.6 274.5L973.5 281.2L964.6 287.9L955.7 281.2L946.8 274.5L955.7 267.9L946.8 261.2L937.9 267.9L929.0 274.5L920.1 281.2L929.0 287.9L937.9 281.2L946.8 287.9L955.7 294.6L946.8 301.3L937.9 294.6L929.0 301.3L937.9 308.0L929.0 314.6L920.1 308.0L911.2 301.3L920.1 294.6L911.2 287.9L902.3 294.6L893.4 287.9L884.5 281.2L893.4 274.5L902.3 281.2L911.2 274.5L920.1 267.9L911.2 261.2L902.3 267.9L893.4 261.2L902.3 254.5L893.4 247.8L884.5 254.5L875.5 261.2L884.5 267.9L875.5 274.5L866.6 267.9L857.7 261.2L866.6 254.5L857.7 247.8L848.8 254.5L839.9 247.8L831.0 241.1L839.9 234.4L848.8 241.1L857.7 234.4L848.8 227.8L857.7 221.1L866.6 227.8L875.5 234.4L866.6 241.1L875.5 247.8L884.5 241.1L893.4 234.4L884.5 227.8L893.4 221.1L902.3 227.8L911.2 221.1L920.1 214.4L911.2 207.7L902.3 214.4L893.4 207.7L902.3 201.0L893.4 194.4L884.5 201.0L875.5 207.7L884.5 214.4L875.5 221.1L866.6 214.4L857.7 207.7L848.8 201.0L857.7 194.4L866.6 201.0L875.5 194.4L884.5 187.7L875.5 181.0L866.6 187.7L857.7 181.0L866.6 174.3M839.9 181.0L848.8 187.7L839.9 194.4L831.0 187.7L822.1 194.4L813.2 201.0L822.1 207.7L831.0 201.0L839.9 207.7L848.8 214.4L839.9 221.1L831.0 214.4L822.1 221.1L831.0 227.8L822.1 234.4L813.2 227.8L804.3 221.1L813.2 214.4L804.3 207.7L795.4 214.4L786.4 207.7L777.5 201.0L786.4 194.4L795.4 201.0L804.3 194.4L813.2 187.7L804.3 181.0L795.4 187.7M777.5 187.7L768.6 194.4M822.1 181.0M715.2 434.9L724.1 441.6L733.0 448.3M750.8 448.3L741.9 441.6L750.8 434.9L759.7 441.6L768.6 434.9L777.5 428.2L768.6 421.6L759.7 428.2L750.8 421.6L759.7 414.9L750.8 408.2L741.9 414.9L733.0 421.6L741.9 428.2L733.0 434.9L724.1 428.2L715.2 421.6L706.3 414.9L715.2 408.2L724.1 414.9L733.0 408.2L741.9 401.5L733.0 394.8L724.1 401.5L715.2 394.8L724.1 388.1L715.2 381.5L706.3 388.1L697.4 394.8L706.3 401.5L697.4 408.2L688.4 401.5L679.5 408.2L670.6 414.9L679.5 421.6L688.4 414.9L697.4 421.6L706.3 428.2M688.4 428.2M643.9 394.8L635.0 388.1L643.9 381.5L652.8 388.1L661.7 394.8L652.8 401.5L661.7 408.2L670.6 401.5L679.5 394.8L670.6 388.1L679.5 381.5L688.4 388.1L697.4 381.5L706.3 374.8L697.4 368.1L688.4 374.8L679.5 368.1L688.4 361.4L679.5 354.7L670.6 361.4L661.7 368.1L670.6 374.8L661.7 381.5L652.8 374.8L643.9 368.1L635.0 361.4L643.9 354.7L652.8 361.4L661.7 354.7L670.6 348.0L661.7 341.4L652.8 348.0L643.9 341.4L652.8 334.7L643.9 328.0L635.0 334.7L626.1 341.4L635.0 348.0L626.1 354.7L617.2 348.0L608.3 354.7M617.2 361.4L626.1 368.1L635.0 374.8L626.1 381.5M608.3 341.4L617.2 334.7L608.3 328.0L599.3 334.7M599.3 321.3L608.3 314.6L599.3 308.0L608.3 301.3L617.2 308.0L626.1 314.6L617.2 321.3L626.1 328.0L635.0 321.3L643.9 314.6L652.8 308.0L643.9 301.3L635.0 308.0L626.1 301.3L617.2 294.6L626.1 287.9L635.0 294.6L643.9 287.9L635.0 281.2L643.9 274.5L652.8 281.2L661.7 287.9L652.8 294.6L661.7 301.3L670.6 294.6L679.5 287.9L670.6 281.2L679.5 274.5L688.4 281.2L697.4 274.5L706.3 267.9L697.4 261.2L688.4 267.9L679.5 261.2L688.4 254.5L679.5 247.8L670.6 254.5L661.7 261.2L670.6 267.9L661.7 274.5L652.8 267.9L643.9 261.2L635.0 254.5L643.9 247.8L652.8 254.5L661.7 247.8L670.6 241.1L661.7 234.4L652.8 241.1M626.1 261.2L635.0 267.9L626.1 274.5L617.2 267.9M617.2 281.2L608.3 287.9M724.1 201.0L715.2 207.7M679.5 221.1L670.6 227.8L679.5 234.4L688.4 227.8L697.4 221.1M706.3 214.4L715.2 221.1L724.1 227.8L715.2 234.4L706.3 227.8L697.4 234.4L688.4 241.1L697.4 247.8L706.3 241.1L715.2 247.8L706.3 254.5L715.2 261.2L724.1 254.5L733.0 247.8L724.1 241.1L733.0 234.4L741.9 241.1L750.8 234.4L759.7 227.8L750.8 221.1L741.9 227.8L733.0 221.1L724.1 214.4L733.0 207.7L741.9 214.4L750.8 207.7L741.9 201.0L750.8 194.4L759.7 201.0L768.6 207.7L759.7 214.4L768.6 221.1L777.5 214.4L786.4 221.1L795.4 227.8L786.4 234.4L777.5 227.8L768.6 234.4L759.7 241.1L768.6 247.8L777.5 241.1L786.4 247.8L777.5 254.5L786.4 261.2L795.4 254.5L804.3 247.8L795.4 241.1L804.3 234.4L813.2 241.1L822.1 247.8L813.2 254.5L822.1 261.2L831.0 254.5L839.9 261.2L848.8 267.9L839.9 274.5L831.0 267.9L822.1 274.5L831.0 281.2L822.1 287.9L813.2 281.2L804.3 274.5L813.2 267.9L804.3 261.2L795.4 267.9L786.4 274.5L777.5 281.2L786.4 287.9L795.4 281.2L804.3 287.9L813.2 294.6L804.3 301.3L795.4 294.6L786.4 301.3L795.4 308.0L786.4 314.6L777.5 308.0L768.6 301.3L777.5 294.6L768.6 287.9L759.7 294.6L750.8 287.9L741.9 281.2L750.8 274.5L759.7 281.2L768.6 274.5L777.5 267.9L768.6 261.2L759.7 267.9L750.8 261.2L759.7 254.5L750.8 247.8L741.9 254.5L733.0 261.2L741.9 267.9L733.0 274.5L724.1 267.9L715.2 274.5L706.3 281.2L715.2 287.9L724.1 281.2L733.0 287.9L741.9 294.6L733.0 301.3L724.1 294.6L715.2 301.3L724.1 308.0L715.2 314.6L706.3 308.0L697.4 301.3L706.3 294.6L697.4 287.9L688.4 294.6L679.5 301.3L688.4 308.0L679.5 314.6L670.6 308.0L661.7 314.6L652.8 321.3L661.7 328.0L670.6 321.3L679.5 328.0L670.6 334.7L679.5 341.4L688.4 334.7L697.4 328.0L688.4 321.3L697.4 314.6L706.3 321.3L715.2 328.0L724.1 334.7L715.2 341.4L706.3 334.7L697.4 341.4L688.4 348.0L697.4 354.7L706.3 348.0L715.2 354.7L706.3 361.4L715.2 368.1L724.1 361.4L733.0 354.7L724.1 348.0L733.0 341.4L741.9 348.0L750.8 341.4L759.7 334.7L750.8 328.0L741.9 334.7L733.0 328.0L724.1 321.3L733.0 314.6L741.9 321.3L750.8 314.6L741.9 308.0L750.8 301.3L759.7 308.0L768.6 314.6L759.7 321.3L768.6 328.0L777.5 321.3L786.4 328.0L777.5 334.7L786.4 341.4L795.4 334.7L804.3 341.4L813.2 348.0L804.3 354.7L795.4 348.0L786.4 354.7L795.4 361.4L786.4 368.1L777.5 361.4L768.6 354.7L777.5 348.0L768.6 341.4L759.7 348.0L750.8 354.7L759.7 361.4L750.8 368.1L741.9 361.4L733.0 368.1L724.1 374.8L733.0 381.5L741.9 374.8L750.8 381.5L741.9 388.1L750.8 394.8L759.7 388.1L768.6 381.5L759.7 374.8L768.6 368.1L777.5 374.8L786.4 381.5L795.4 388.1L786.4 394.8L777.5 388.1L768.6 394.8L759.7 401.5L768.6 408.2L777.5 401.5L786.4 408.2L777.5 414.9L786.4 421.6L795.4 414.9L804.3 408.2L795.4 401.5L804.3 394.8L813.2 401.5L822.1 394.8L831.0 388.1L822.1 381.5L813.2 388.1L804.3 381.5L795.4 374.8L804.3 368.1L813.2 374.8L822.1 368.1L813.2 361.4L822.1 354.7L831.0 361.4L839.9 368.1L831.0 374.8L839.9 381.5L848.8 374.8L857.7 368.1L848.8 361.4L857.7 354.7L866.6 361.4L875.5 354.7L884.5 348.0L875.5 341.4L866.6 348.0L857.7 341.4L866.6 334.7L857.7 328.0L848.8 334.7L839.9 341.4L848.8 348.0L839.9 354.7L831.0 348.0L822.1 341.4L831.0 334.7L822.1 328.0L813.2 334.7L804.3 328.0L795.4 321.3L804.3 314.6L813.2 321.3L822.1 314.6L813.2 308.0L822.1 301.3L831.0 308.0L839.9 314.6L831.0 321.3L839.9 328.0L848.8 321.3L857.7 314.6L866.6 308.0L857.7 301.3L848.8 308.0L839.9 301.3L831.0 294.6L839.9 287.9L848.8 294.6L857.7 287.9L848.8 281.2L857.7 274.5L866.6 281.2L875.5 287.9L866.6 294.6L875.5 301.3L884.5 294.6L893.4 301.3L902.3 308.0L893.4 314.6L884.5 308.0L875.5 314.6L866.6 321.3L875.5 328.0L884.5 321.3L893.4 328.0L884.5 334.7L893.4 341.4L902.3 334.7L911.2 328.0L902.3 321.3L911.2 314.6L920.1 321.3L929.0 328.0L937.9 334.7L929.0 341.4L920.1 334.7L911.2 341.4L902.3 348.0L911.2 354.7L920.1 348.0L929.0 354.7L920.1 361.4L929.0 368.1L937.9 361.4L946.8 354.7L937.9 348.0L946.8 341.4L955.7 348.0L964.6 354.7L955.7 361.4L964.6 368.1L973.5 361.4L982.5 368.1L991.4 374.8L982.5 381.5L973.5 374.8L964.6 381.5L973.5 388.1L964.6 394.8L955.7 388.1L946.8 381.5L955.7 374.8L946.8 368.1L937.9 374.8L929.0 381.5L920.1 388.1L929.0 394.8L937.9 388.1L946.8 394.8L955.7 401.5L946.8 408.2L937.9 401.5L929.0 408.2L937.9 414.9L929.0 421.6L920.1 414.9L911.2 408.2L920.1 401.5L911.2 394.8L902.3 401.5L893.4 394.8L884.5 388.1L893.4 381.5L902.3 388.1L911.2 381.5L920.1 374.8L911.2 368.1L902.3 374.8L893.4 368.1L902.3 361.4L893.4 354.7L884.5 361.4L875.5 368.1L884.5 374.8L875.5 381.5L866.6 374.8L857.7 381.5L848.8 388.1L857.7 394.8L866.6 388.1L875.5 394.8L884.5 401.5L875.5 408.2L866.6 401.5L857.7 408.2L866.6 414.9L857.7 421.6L848.8 414.9L839.9 408.2L848.8 401.5L839.9 394.8L831.0 401.5L822.1 408.2L831.0 414.9L822.1 421.6L813.2 414.9L804.3 421.6L795.4 428.2L804.3 434.9L813.2 428.2L822.1 434.9L813.2 441.6L822.1 448.3L831.0 441.6L839.9 434.9L831.0 428.2L839.9 421.6L848.8 428.2L857.7 434.9L866.6 441.6L857.7 448.3L848.8 441.6L839.9 448.3L831.0 455.0L839.9 461.6L848.8 455.0L857.7 461.6L848.8 468.3L857.7 475.0L866.6 468.3L875.5 461.6L866.6 455.0L875.5 448.3L884.5 455.0L893.4 448.3L902.3 441.6L893.4 434.9L884.5 441.6L875.5 434.9L866.6 428.2L875.5 421.6L884.5 428.2L893.4 421.6L884.5 414.9L893.4 408.2L902.3 414.9L911.2 421.6L902.3 428.2L911.2 434.9L920.1 428.2L929.0 434.9L920.1 441.6L929.0 448.3L937.9 441.6L946.8 448.3L955.7 455.0L946.8 461.6L937.9 455.0L929.0 461.6L937.9 468.3L929.0 475.0L920.1 468.3L911.2 461.6L920.1 455.0L911.2 448.3L902.3 455.0L893.4 461.6L902.3 468.3L893.4 475.0L884.5 468.3L875.5 475.0M902.3 481.7L911.2 475.0L920.1 481.7M937.9 481.7L946.8 475.0L955.7 481.7L964.6 475.0L955.7 468.3L964.6 461.6L973.5 468.3L982.5 475.0L973.5 481.7M991.4 481.7L1000.3 475.0L991.4 468.3L1000.3 461.6L1009.2 468.3L1018.1 461.6L1027.0 455.0L1018.1 448.3L1009.2 455.0L1000.3 448.3L1009.2 441.6L1000.3 434.9L991.4 441.6L982.5 448.3L991.4 455.0L982.5 461.6L973.5 455.0L964.6 448.3L973.5 441.6L964.6 434.9L955.7 441.6L946.8 434.9L937.9 428.2L946.8 421.6L955.7 428.2L964.6 421.6L955.7 414.9L964.6 408.2L973.5 414.9L982.5 421.6L973.5 428.2L982.5 434.9L991.4 428.2L1000.3 421.6L1009.2 414.9L1000.3 408.2L991.4 414.9L982.5 408.2L973.5 401.5L982.5 394.8L991.4 401.5L1000.3 394.8L991.4 388.1L1000.3 381.5L1009.2 388.1L1018.1 394.8L1009.2 401.5L1018.1 408.2L1027.0 401.5L1035.9 408.2L1044.8 414.9L1035.9 421.6L1027.0 414.9L1018.1 421.6L1009.2 428.2L1018.1 434.9L1027.0 428.2L1035.9 434.9L1027.0 441.6L1035.9 448.3L1044.8 441.6L1053.7 434.9L1044.8 428.2L1053.7 421.6L1062.6 428.2L1071.6 434.9L1062.6 441.6L1071.6 448.3L1080.5 441.6L1089.4 448.3L1098.3 455.0L1089.4 461.6L1080.5 455.0L1071.6 461.6L1080.5 468.3M1062.6 468.3L1053.7 461.6L1062.6 455.0L1053.7 448.3L1044.8 455.0L1035.9 461.6L1044.8 468.3L1035.9 475.0L1027.0 468.3L1018.1 475.0M1053.7 475.0M1107.2 461.6M839.9 475.0M831.0 468.3L822.1 461.6L813.2 468.3M786.4 461.6M804.3 461.6L813.2 455.0L804.3 448.3L795.4 455.0L786.4 448.3L795.4 441.6L786.4 434.9L777.5 441.6L768.6 448.3L777.5 455.0M759.7 455.0M1214.1 408.2L1205.2 414.9L1196.3 408.2L1187.4 401.5L1196.3 394.8L1205.2 401.5L1214.1 394.8L1205.2 388.1L1214.1 381.5L1223.0 388.1L1231.9 394.8L1223.0 401.5M1240.8 388.1M1249.7 368.1M1249.7 354.7L1240.8 361.4L1231.9 368.1L1240.8 374.8L1231.9 381.5L1223.0 374.8L1214.1 368.1L1205.2 361.4L1214.1 354.7L1223.0 361.4L1231.9 354.7L1240.8 348.0L1231.9 341.4L1223.0 348.0L1214.1 341.4L1223.0 334.7L1214.1 328.0L1205.2 334.7L1196.3 341.4L1205.2 348.0L1196.3 354.7L1187.4 348.0L1178.5 354.7L1169.6 361.4L1178.5 368.1L1187.4 361.4L1196.3 368.1L1205.2 374.8L1196.3 381.5L1187.4 374.8L1178.5 381.5L1187.4 388.1L1178.5 394.8L1169.6 388.1L1160.6 381.5L1169.6 374.8L1160.6 368.1L1151.7 374.8L1142.8 381.5L1151.7 388.1L1142.8 394.8L1133.9 388.1L1125.0 394.8L1116.1 401.5L1125.0 408.2L1133.9 401.5L1142.8 408.2L1133.9 414.9L1142.8 421.6L1151.7 414.9L1160.6 408.2L1151.7 401.5L1160.6 394.8L1169.6 401.5L1178.5 408.2L1169.6 414.9L1178.5 421.6L1187.4 414.9L1196.3 421.6M1187.4 428.2L1178.5 434.9M1160.6 434.9L1169.6 428.2L1160.6 421.6L1151.7 428.2L1142.8 434.9L1133.9 441.6L1142.8 448.3L1151.7 441.6M1133.9 455.0L1125.0 448.3L1116.1 455.0L1107.2 448.3L1098.3 441.6L1107.2 434.9L1116.1 441.6L1125.0 434.9L1133.9 428.2L1125.0 421.6L1116.1 428.2L1107.2 421.6L1116.1 414.9L1107.2 408.2L1098.3 414.9L1089.4 421.6L1098.3 428.2L1089.4 434.9L1080.5 428.2L1071.6 421.6L1080.5 414.9L1071.6 408.2L1062.6 414.9L1053.7 408.2L1044.8 401.5L1053.7 394.8L1062.6 401.5L1071.6 394.8L1062.6 388.1L1071.6 381.5L1080.5 388.1L1089.4 394.8L1080.5 401.5L1089.4 408.2L1098.3 401.5L1107.2 394.8L1098.3 388.1L1107.2 381.5L1116.1 388.1L1125.0 381.5L1133.9 374.8L1125.0 368.1L1116.1 374.8L1107.2 368.1L1116.1 361.4L1107.2 354.7L1098.3 361.4L1089.4 368.1L1098.3 374.8L1089.4 381.5L1080.5 374.8L1071.6 368.1L1062.6 361.4L1071.6 354.7L1080.5 361.4L1089.4 354.7L1098.3 348.0L1089.4 341.4L1080.5 348.0L1071.6 341.4L1080.5 334.7L1071.6 328.0L1062.6 334.7L1053.7 341.4L1062.6 348.0L1053.7 354.7L1044.8 348.0L1035.9 354.7L1027.0 361.4L1035.9 368.1L1044.8 361.4L1053.7 368.1L1062.6 374.8L1053.7 381.5L1044.8 374.8L1035.9 381.5L1044.8 388.1L1035.9 394.8L1027.0 388.1L1018.1 381.5L1027.0 374.8L1018.1 368.1L1009.2 374.8L1000.3 368.1L991.4 361.4L1000.3 354.7L1009.2 361.4L1018.1 354.7L1027.0 348.0L1018.1 341.4L1009.2 348.0L1000.3 341.4L1009.2 334.7L1000.3 328.0L991.4 334.7L982.5 341.4L991.4 348.0L982.5 354.7L973.5 348.0L964.6 341.4L973.5 334.7L964.6 328.0L955.7 334.7L946.8 328.0L937.9 321.3L946.8 314.6L955.7 321.3L964.6 314.6L955.7 308.0L964.6 301.3L973.5 308.0L982.5 314.6L973.5 321.3L982.5 328.0L991.4 321.3L1000.3 314.6L1009.2 308.0L1000.3 301.3L991.4 308.0L982.5 301.3L973.5 294.6L982.5 287.9L991.4 294.6L1000.3 287.9L991.4 281.2L1000.3 274.5L1009.2 281.2L1018.1 287.9L1009.2 294.6L1018.1 301.3L1027.0 294.6L1035.9 301.3L1044.8 308.0L1035.9 314.6L1027.0 308.0L1018.1 314.6L1009.2 321.3L1018.1 328.0L1027.0 321.3L1035.9 328.0L1027.0 334.7L1035.9 341.4L1044.8 334.7L1053.7 328.0L1044.8 321.3L1053.7 314.6L1062.6 321.3L1071.6 314.6L1062.6 308.0L1071.6 301.3L1080.5 308.0L1089.4 301.3L1098.3 294.6L1089.4 287.9L1080.5 294.6L1071.6 287.9L1080.5 281.2L1071.6 274.5L1062.6 281.2L1053.7 287.9L1062.6 294.6L1053.7 301.3L1044.8 294.6L1035.9 287.9L1044.8 281.2L1035.9 274.5L1027.0 281.2L1018.1 274.5L1009.2 267.9L1018.1 261.2L1027.0 267.9L1035.9 261.2L1027.0 254.5L1035.9 247.8L1044.8 254.5L1053.7 261.2L1044.8 267.9L1053.7 274.5L1062.6 267.9L1071.6 261.2L1080.5 254.5L1071.6 247.8L1062.6 254.5L1053.7 247.8L1044.8 241.1L1053.7 234.4L1062.6 241.1L1071.6 234.4L1062.6 227.8L1071.6 221.1L1080.5 227.8L1089.4 234.4L1080.5 241.1L1089.4 247.8L1098.3 241.1L1107.2 247.8L1116.1 254.5L1107.2 261.2L1098.3 254.5L1089.4 261.2L1080.5 267.9L1089.4 274.5L1098.3 267.9L1107.2 274.5L1098.3 281.2L1107.2 287.9L1116.1 281.2L1125.0 274.5L1116.1 267.9L1125.0 261.2L1133.9 267.9L1142.8 274.5L1133.9 281.2L1142.8 287.9L1151.7 281.2L1160.6 287.9L1169.6 294.6L1160.6 301.3L1151.7 294.6L1142.8 301.3L1151.7 308.0L1142.8 314.6L1133.9 308.0L1125.0 301.3L1133.9 294.6L1125.0 287.9L1116.1 294.6L1107.2 301.3L1116.1 308.0L1107.2 314.6L1098.3 308.0L1089.4 314.6L1080.5 321.3L1089.4 328.0L1098.3 321.3L1107.2 328.0L1098.3 334.7L1107.2 341.4L1116.1 334.7L1125.0 328.0L1116.1 321.3L1125.0 314.6L1133.9 321.3L1142.8 328.0L1151.7 334.7L1142.8 341.4L1133.9 334.7L1125.0 341.4L1116.1 348.0L1125.0 354.7L1133.9 348.0L1142.8 354.7L1133.9 361.4L1142.8 368.1L1151.7 361.4L1160.6 354.7L1151.7 348.0L1160.6 341.4L1169.6 348.0L1178.5 341.4L1187.4 334.7L1178.5 328.0L1169.6 334.7L1160.6 328.0L1151.7 321.3L1160.6 314.6L1169.6 321.3L1178.5 314.6L1169.6 308.0L1178.5 301.3L1187.4 308.0L1196.3 314.6L1187.4 321.3L1196.3 328.0L1205.2 321.3L1214.1 314.6L1223.0 308.0L1214.1 301.3L1205.2 308.0L1196.3 301.3L1187.4 294.6L1196.3 287.9L1205.2 294.6L1214.1 287.9L1205.2 281.2L1214.1 274.5L1223.0 281.2L1231.9 287.9L1223.0 294.6L1231.9 301.3L1240.8 294.6M1231.9 274.5L1223.0 267.9L1214.1 261.2L1205.2 254.5M1196.3 247.8L1187.4 241.1L1178.5 247.8L1169.6 254.5L1178.5 261.2L1187.4 254.5L1196.3 261.2L1205.2 267.9L1196.3 274.5L1187.4 267.9L1178.5 274.5L1187.4 281.2L1178.5 287.9L1169.6 281.2L1160.6 274.5L1169.6 267.9L1160.6 261.2L1151.7 267.9L1142.8 261.2L1133.9 254.5L1142.8 247.8L1151.7 254.5L1160.6 247.8L1169.6 241.1L1160.6 234.4L1151.7 241.1L1142.8 234.4L1151.7 227.8L1142.8 221.1L1133.9 227.8L1125.0 234.4L1133.9 241.1L1125.0 247.8L1116.1 241.1L1107.2 234.4L1116.1 227.8L1107.2 221.1L1098.3 227.8L1089.4 221.1L1080.5 214.4L1089.4 207.7L1098.3 214.4L1107.2 207.7L1098.3 201.0M1125.0 207.7L1116.1 214.4L1125.0 221.1L1133.9 214.4M1169.6 227.8L1178.5 234.4M1249.7 301.3M1249.7 314.6L1240.8 308.0L1231.9 314.6L1223.0 321.3L1231.9 328.0L1240.8 321.3L1249.7 328.0L1240.8 334.7L1249.7 341.4L1258.7 334.7M1258.7 321.3M1258.7 348.0" fill="none" stroke="#880a10" stroke-width="9.6" stroke-linejoin="round" stroke-linecap="round"/>
<path d="M1071.6 194.4L1080.5 201.0L1071.6 207.7L1062.6 201.0L1053.7 194.4M1044.8 187.7M884.5 174.3L893.4 181.0L902.3 174.3M937.9 174.3L929.0 181.0L920.1 174.3L911.2 181.0L902.3 187.7L911.2 194.4L920.1 187.7L929.0 194.4L920.1 201.0L929.0 207.7L937.9 201.0L946.8 194.4L937.9 187.7L946.8 181.0L955.7 187.7L964.6 181.0M955.7 174.3M1000.3 181.0M982.5 181.0L973.5 187.7L982.5 194.4L991.4 187.7L1000.3 194.4L991.4 201.0L1000.3 207.7L1009.2 201.0L1018.1 194.4L1009.2 187.7L1018.1 181.0L1027.0 187.7L1035.9 194.4L1027.0 201.0L1035.9 207.7L1044.8 201.0L1053.7 207.7L1062.6 214.4L1053.7 221.1L1044.8 214.4L1035.9 221.1L1044.8 227.8L1035.9 234.4L1027.0 227.8L1018.1 221.1L1027.0 214.4L1018.1 207.7L1009.2 214.4L1000.3 221.1L991.4 227.8L1000.3 234.4L1009.2 227.8L1018.1 234.4L1027.0 241.1L1018.1 247.8L1009.2 241.1L1000.3 247.8L1009.2 254.5L1000.3 261.2L991.4 254.5L982.5 247.8L991.4 241.1L982.5 234.4L973.5 241.1L964.6 234.4L955.7 227.8L964.6 221.1L973.5 227.8L982.5 221.1L991.4 214.4L982.5 207.7L973.5 214.4L964.6 207.7L973.5 201.0L964.6 194.4L955.7 201.0L946.8 207.7L955.7 214.4L946.8 221.1L937.9 214.4L929.0 221.1L937.9 227.8L929.0 234.4L920.1 227.8L911.2 234.4L902.3 241.1L911.2 247.8L920.1 241.1L929.0 247.8L920.1 254.5L929.0 261.2L937.9 254.5L946.8 247.8L937.9 241.1L946.8 234.4L955.7 241.1L964.6 247.8L955.7 254.5L964.6 261.2L973.5 254.5L982.5 261.2L991.4 267.9L982.5 274.5L973.5 267.9L964.6 274.5L973.5 281.2L964.6 287.9L955.7 281.2L946.8 274.5L955.7 267.9L946.8 261.2L937.9 267.9L929.0 274.5L920.1 281.2L929.0 287.9L937.9 281.2L946.8 287.9L955.7 294.6L946.8 301.3L937.9 294.6L929.0 301.3L937.9 308.0L929.0 314.6L920.1 308.0L911.2 301.3L920.1 294.6L911.2 287.9L902.3 294.6L893.4 287.9L884.5 281.2L893.4 274.5L902.3 281.2L911.2 274.5L920.1 267.9L911.2 261.2L902.3 267.9L893.4 261.2L902.3 254.5L893.4 247.8L884.5 254.5L875.5 261.2L884.5 267.9L875.5 274.5L866.6 267.9L857.7 261.2L866.6 254.5L857.7 247.8L848.8 254.5L839.9 247.8L831.0 241.1L839.9 234.4L848.8 241.1L857.7 234.4L848.8 227.8L857.7 221.1L866.6 227.8L875.5 234.4L866.6 241.1L875.5 247.8L884.5 241.1L893.4 234.4L884.5 227.8L893.4 221.1L902.3 227.8L911.2 221.1L920.1 214.4L911.2 207.7L902.3 214.4L893.4 207.7L902.3 201.0L893.4 194.4L884.5 201.0L875.5 207.7L884.5 214.4L875.5 221.1L866.6 214.4L857.7 207.7L848.8 201.0L857.7 194.4L866.6 201.0L875.5 194.4L884.5 187.7L875.5 181.0L866.6 187.7L857.7 181.0L866.6 174.3M839.9 181.0L848.8 187.7L839.9 194.4L831.0 187.7L822.1 194.4L813.2 201.0L822.1 207.7L831.0 201.0L839.9 207.7L848.8 214.4L839.9 221.1L831.0 214.4L822.1 221.1L831.0 227.8L822.1 234.4L813.2 227.8L804.3 221.1L813.2 214.4L804.3 207.7L795.4 214.4L786.4 207.7L777.5 201.0L786.4 194.4L795.4 201.0L804.3 194.4L813.2 187.7L804.3 181.0L795.4 187.7M777.5 187.7L768.6 194.4M822.1 181.0M715.2 434.9L724.1 441.6L733.0 448.3M750.8 448.3L741.9 441.6L750.8 434.9L759.7 441.6L768.6 434.9L777.5 428.2L768.6 421.6L759.7 428.2L750.8 421.6L759.7 414.9L750.8 408.2L741.9 414.9L733.0 421.6L741.9 428.2L733.0 434.9L724.1 428.2L715.2 421.6L706.3 414.9L715.2 408.2L724.1 414.9L733.0 408.2L741.9 401.5L733.0 394.8L724.1 401.5L715.2 394.8L724.1 388.1L715.2 381.5L706.3 388.1L697.4 394.8L706.3 401.5L697.4 408.2L688.4 401.5L679.5 408.2L670.6 414.9L679.5 421.6L688.4 414.9L697.4 421.6L706.3 428.2M688.4 428.2M643.9 394.8L635.0 388.1L643.9 381.5L652.8 388.1L661.7 394.8L652.8 401.5L661.7 408.2L670.6 401.5L679.5 394.8L670.6 388.1L679.5 381.5L688.4 388.1L697.4 381.5L706.3 374.8L697.4 368.1L688.4 374.8L679.5 368.1L688.4 361.4L679.5 354.7L670.6 361.4L661.7 368.1L670.6 374.8L661.7 381.5L652.8 374.8L643.9 368.1L635.0 361.4L643.9 354.7L652.8 361.4L661.7 354.7L670.6 348.0L661.7 341.4L652.8 348.0L643.9 341.4L652.8 334.7L643.9 328.0L635.0 334.7L626.1 341.4L635.0 348.0L626.1 354.7L617.2 348.0L608.3 354.7M617.2 361.4L626.1 368.1L635.0 374.8L626.1 381.5M608.3 341.4L617.2 334.7L608.3 328.0L599.3 334.7M599.3 321.3L608.3 314.6L599.3 308.0L608.3 301.3L617.2 308.0L626.1 314.6L617.2 321.3L626.1 328.0L635.0 321.3L643.9 314.6L652.8 308.0L643.9 301.3L635.0 308.0L626.1 301.3L617.2 294.6L626.1 287.9L635.0 294.6L643.9 287.9L635.0 281.2L643.9 274.5L652.8 281.2L661.7 287.9L652.8 294.6L661.7 301.3L670.6 294.6L679.5 287.9L670.6 281.2L679.5 274.5L688.4 281.2L697.4 274.5L706.3 267.9L697.4 261.2L688.4 267.9L679.5 261.2L688.4 254.5L679.5 247.8L670.6 254.5L661.7 261.2L670.6 267.9L661.7 274.5L652.8 267.9L643.9 261.2L635.0 254.5L643.9 247.8L652.8 254.5L661.7 247.8L670.6 241.1L661.7 234.4L652.8 241.1M626.1 261.2L635.0 267.9L626.1 274.5L617.2 267.9M617.2 281.2L608.3 287.9M724.1 201.0L715.2 207.7M679.5 221.1L670.6 227.8L679.5 234.4L688.4 227.8L697.4 221.1M706.3 214.4L715.2 221.1L724.1 227.8L715.2 234.4L706.3 227.8L697.4 234.4L688.4 241.1L697.4 247.8L706.3 241.1L715.2 247.8L706.3 254.5L715.2 261.2L724.1 254.5L733.0 247.8L724.1 241.1L733.0 234.4L741.9 241.1L750.8 234.4L759.7 227.8L750.8 221.1L741.9 227.8L733.0 221.1L724.1 214.4L733.0 207.7L741.9 214.4L750.8 207.7L741.9 201.0L750.8 194.4L759.7 201.0L768.6 207.7L759.7 214.4L768.6 221.1L777.5 214.4L786.4 221.1L795.4 227.8L786.4 234.4L777.5 227.8L768.6 234.4L759.7 241.1L768.6 247.8L777.5 241.1L786.4 247.8L777.5 254.5L786.4 261.2L795.4 254.5L804.3 247.8L795.4 241.1L804.3 234.4L813.2 241.1L822.1 247.8L813.2 254.5L822.1 261.2L831.0 254.5L839.9 261.2L848.8 267.9L839.9 274.5L831.0 267.9L822.1 274.5L831.0 281.2L822.1 287.9L813.2 281.2L804.3 274.5L813.2 267.9L804.3 261.2L795.4 267.9L786.4 274.5L777.5 281.2L786.4 287.9L795.4 281.2L804.3 287.9L813.2 294.6L804.3 301.3L795.4 294.6L786.4 301.3L795.4 308.0L786.4 314.6L777.5 308.0L768.6 301.3L777.5 294.6L768.6 287.9L759.7 294.6L750.8 287.9L741.9 281.2L750.8 274.5L759.7 281.2L768.6 274.5L777.5 267.9L768.6 261.2L759.7 267.9L750.8 261.2L759.7 254.5L750.8 247.8L741.9 254.5L733.0 261.2L741.9 267.9L733.0 274.5L724.1 267.9L715.2 274.5L706.3 281.2L715.2 287.9L724.1 281.2L733.0 287.9L741.9 294.6L733.0 301.3L724.1 294.6L715.2 301.3L724.1 308.0L715.2 314.6L706.3 308.0L697.4 301.3L706.3 294.6L697.4 287.9L688.4 294.6L679.5 301.3L688.4 308.0L679.5 314.6L670.6 308.0L661.7 314.6L652.8 321.3L661.7 328.0L670.6 321.3L679.5 328.0L670.6 334.7L679.5 341.4L688.4 334.7L697.4 328.0L688.4 321.3L697.4 314.6L706.3 321.3L715.2 328.0L724.1 334.7L715.2 341.4L706.3 334.7L697.4 341.4L688.4 348.0L697.4 354.7L706.3 348.0L715.2 354.7L706.3 361.4L715.2 368.1L724.1 361.4L733.0 354.7L724.1 348.0L733.0 341.4L741.9 348.0L750.8 341.4L759.7 334.7L750.8 328.0L741.9 334.7L733.0 328.0L724.1 321.3L733.0 314.6L741.9 321.3L750.8 314.6L741.9 308.0L750.8 301.3L759.7 308.0L768.6 314.6L759.7 321.3L768.6 328.0L777.5 321.3L786.4 328.0L777.5 334.7L786.4 341.4L795.4 334.7L804.3 341.4L813.2 348.0L804.3 354.7L795.4 348.0L786.4 354.7L795.4 361.4L786.4 368.1L777.5 361.4L768.6 354.7L777.5 348.0L768.6 341.4L759.7 348.0L750.8 354.7L759.7 361.4L750.8 368.1L741.9 361.4L733.0 368.1L724.1 374.8L733.0 381.5L741.9 374.8L750.8 381.5L741.9 388.1L750.8 394.8L759.7 388.1L768.6 381.5L759.7 374.8L768.6 368.1L777.5 374.8L786.4 381.5L795.4 388.1L786.4 394.8L777.5 388.1L768.6 394.8L759.7 401.5L768.6 408.2L777.5 401.5L786.4 408.2L777.5 414.9L786.4 421.6L795.4 414.9L804.3 408.2L795.4 401.5L804.3 394.8L813.2 401.5L822.1 394.8L831.0 388.1L822.1 381.5L813.2 388.1L804.3 381.5L795.4 374.8L804.3 368.1L813.2 374.8L822.1 368.1L813.2 361.4L822.1 354.7L831.0 361.4L839.9 368.1L831.0 374.8L839.9 381.5L848.8 374.8L857.7 368.1L848.8 361.4L857.7 354.7L866.6 361.4L875.5 354.7L884.5 348.0L875.5 341.4L866.6 348.0L857.7 341.4L866.6 334.7L857.7 328.0L848.8 334.7L839.9 341.4L848.8 348.0L839.9 354.7L831.0 348.0L822.1 341.4L831.0 334.7L822.1 328.0L813.2 334.7L804.3 328.0L795.4 321.3L804.3 314.6L813.2 321.3L822.1 314.6L813.2 308.0L822.1 301.3L831.0 308.0L839.9 314.6L831.0 321.3L839.9 328.0L848.8 321.3L857.7 314.6L866.6 308.0L857.7 301.3L848.8 308.0L839.9 301.3L831.0 294.6L839.9 287.9L848.8 294.6L857.7 287.9L848.8 281.2L857.7 274.5L866.6 281.2L875.5 287.9L866.6 294.6L875.5 301.3L884.5 294.6L893.4 301.3L902.3 308.0L893.4 314.6L884.5 308.0L875.5 314.6L866.6 321.3L875.5 328.0L884.5 321.3L893.4 328.0L884.5 334.7L893.4 341.4L902.3 334.7L911.2 328.0L902.3 321.3L911.2 314.6L920.1 321.3L929.0 328.0L937.9 334.7L929.0 341.4L920.1 334.7L911.2 341.4L902.3 348.0L911.2 354.7L920.1 348.0L929.0 354.7L920.1 361.4L929.0 368.1L937.9 361.4L946.8 354.7L937.9 348.0L946.8 341.4L955.7 348.0L964.6 354.7L955.7 361.4L964.6 368.1L973.5 361.4L982.5 368.1L991.4 374.8L982.5 381.5L973.5 374.8L964.6 381.5L973.5 388.1L964.6 394.8L955.7 388.1L946.8 381.5L955.7 374.8L946.8 368.1L937.9 374.8L929.0 381.5L920.1 388.1L929.0 394.8L937.9 388.1L946.8 394.8L955.7 401.5L946.8 408.2L937.9 401.5L929.0 408.2L937.9 414.9L929.0 421.6L920.1 414.9L911.2 408.2L920.1 401.5L911.2 394.8L902.3 401.5L893.4 394.8L884.5 388.1L893.4 381.5L902.3 388.1L911.2 381.5L920.1 374.8L911.2 368.1L902.3 374.8L893.4 368.1L902.3 361.4L893.4 354.7L884.5 361.4L875.5 368.1L884.5 374.8L875.5 381.5L866.6 374.8L857.7 381.5L848.8 388.1L857.7 394.8L866.6 388.1L875.5 394.8L884.5 401.5L875.5 408.2L866.6 401.5L857.7 408.2L866.6 414.9L857.7 421.6L848.8 414.9L839.9 408.2L848.8 401.5L839.9 394.8L831.0 401.5L822.1 408.2L831.0 414.9L822.1 421.6L813.2 414.9L804.3 421.6L795.4 428.2L804.3 434.9L813.2 428.2L822.1 434.9L813.2 441.6L822.1 448.3L831.0 441.6L839.9 434.9L831.0 428.2L839.9 421.6L848.8 428.2L857.7 434.9L866.6 441.6L857.7 448.3L848.8 441.6L839.9 448.3L831.0 455.0L839.9 461.6L848.8 455.0L857.7 461.6L848.8 468.3L857.7 475.0L866.6 468.3L875.5 461.6L866.6 455.0L875.5 448.3L884.5 455.0L893.4 448.3L902.3 441.6L893.4 434.9L884.5 441.6L875.5 434.9L866.6 428.2L875.5 421.6L884.5 428.2L893.4 421.6L884.5 414.9L893.4 408.2L902.3 414.9L911.2 421.6L902.3 428.2L911.2 434.9L920.1 428.2L929.0 434.9L920.1 441.6L929.0 448.3L937.9 441.6L946.8 448.3L955.7 455.0L946.8 461.6L937.9 455.0L929.0 461.6L937.9 468.3L929.0 475.0L920.1 468.3L911.2 461.6L920.1 455.0L911.2 448.3L902.3 455.0L893.4 461.6L902.3 468.3L893.4 475.0L884.5 468.3L875.5 475.0M902.3 481.7L911.2 475.0L920.1 481.7M937.9 481.7L946.8 475.0L955.7 481.7L964.6 475.0L955.7 468.3L964.6 461.6L973.5 468.3L982.5 475.0L973.5 481.7M991.4 481.7L1000.3 475.0L991.4 468.3L1000.3 461.6L1009.2 468.3L1018.1 461.6L1027.0 455.0L1018.1 448.3L1009.2 455.0L1000.3 448.3L1009.2 441.6L1000.3 434.9L991.4 441.6L982.5 448.3L991.4 455.0L982.5 461.6L973.5 455.0L964.6 448.3L973.5 441.6L964.6 434.9L955.7 441.6L946.8 434.9L937.9 428.2L946.8 421.6L955.7 428.2L964.6 421.6L955.7 414.9L964.6 408.2L973.5 414.9L982.5 421.6L973.5 428.2L982.5 434.9L991.4 428.2L1000.3 421.6L1009.2 414.9L1000.3 408.2L991.4 414.9L982.5 408.2L973.5 401.5L982.5 394.8L991.4 401.5L1000.3 394.8L991.4 388.1L1000.3 381.5L1009.2 388.1L1018.1 394.8L1009.2 401.5L1018.1 408.2L1027.0 401.5L1035.9 408.2L1044.8 414.9L1035.9 421.6L1027.0 414.9L1018.1 421.6L1009.2 428.2L1018.1 434.9L1027.0 428.2L1035.9 434.9L1027.0 441.6L1035.9 448.3L1044.8 441.6L1053.7 434.9L1044.8 428.2L1053.7 421.6L1062.6 428.2L1071.6 434.9L1062.6 441.6L1071.6 448.3L1080.5 441.6L1089.4 448.3L1098.3 455.0L1089.4 461.6L1080.5 455.0L1071.6 461.6L1080.5 468.3M1062.6 468.3L1053.7 461.6L1062.6 455.0L1053.7 448.3L1044.8 455.0L1035.9 461.6L1044.8 468.3L1035.9 475.0L1027.0 468.3L1018.1 475.0M1053.7 475.0M1107.2 461.6M839.9 475.0M831.0 468.3L822.1 461.6L813.2 468.3M786.4 461.6M804.3 461.6L813.2 455.0L804.3 448.3L795.4 455.0L786.4 448.3L795.4 441.6L786.4 434.9L777.5 441.6L768.6 448.3L777.5 455.0M759.7 455.0M1214.1 408.2L1205.2 414.9L1196.3 408.2L1187.4 401.5L1196.3 394.8L1205.2 401.5L1214.1 394.8L1205.2 388.1L1214.1 381.5L1223.0 388.1L1231.9 394.8L1223.0 401.5M1240.8 388.1M1249.7 368.1M1249.7 354.7L1240.8 361.4L1231.9 368.1L1240.8 374.8L1231.9 381.5L1223.0 374.8L1214.1 368.1L1205.2 361.4L1214.1 354.7L1223.0 361.4L1231.9 354.7L1240.8 348.0L1231.9 341.4L1223.0 348.0L1214.1 341.4L1223.0 334.7L1214.1 328.0L1205.2 334.7L1196.3 341.4L1205.2 348.0L1196.3 354.7L1187.4 348.0L1178.5 354.7L1169.6 361.4L1178.5 368.1L1187.4 361.4L1196.3 368.1L1205.2 374.8L1196.3 381.5L1187.4 374.8L1178.5 381.5L1187.4 388.1L1178.5 394.8L1169.6 388.1L1160.6 381.5L1169.6 374.8L1160.6 368.1L1151.7 374.8L1142.8 381.5L1151.7 388.1L1142.8 394.8L1133.9 388.1L1125.0 394.8L1116.1 401.5L1125.0 408.2L1133.9 401.5L1142.8 408.2L1133.9 414.9L1142.8 421.6L1151.7 414.9L1160.6 408.2L1151.7 401.5L1160.6 394.8L1169.6 401.5L1178.5 408.2L1169.6 414.9L1178.5 421.6L1187.4 414.9L1196.3 421.6M1187.4 428.2L1178.5 434.9M1160.6 434.9L1169.6 428.2L1160.6 421.6L1151.7 428.2L1142.8 434.9L1133.9 441.6L1142.8 448.3L1151.7 441.6M1133.9 455.0L1125.0 448.3L1116.1 455.0L1107.2 448.3L1098.3 441.6L1107.2 434.9L1116.1 441.6L1125.0 434.9L1133.9 428.2L1125.0 421.6L1116.1 428.2L1107.2 421.6L1116.1 414.9L1107.2 408.2L1098.3 414.9L1089.4 421.6L1098.3 428.2L1089.4 434.9L1080.5 428.2L1071.6 421.6L1080.5 414.9L1071.6 408.2L1062.6 414.9L1053.7 408.2L1044.8 401.5L1053.7 394.8L1062.6 401.5L1071.6 394.8L1062.6 388.1L1071.6 381.5L1080.5 388.1L1089.4 394.8L1080.5 401.5L1089.4 408.2L1098.3 401.5L1107.2 394.8L1098.3 388.1L1107.2 381.5L1116.1 388.1L1125.0 381.5L1133.9 374.8L1125.0 368.1L1116.1 374.8L1107.2 368.1L1116.1 361.4L1107.2 354.7L1098.3 361.4L1089.4 368.1L1098.3 374.8L1089.4 381.5L1080.5 374.8L1071.6 368.1L1062.6 361.4L1071.6 354.7L1080.5 361.4L1089.4 354.7L1098.3 348.0L1089.4 341.4L1080.5 348.0L1071.6 341.4L1080.5 334.7L1071.6 328.0L1062.6 334.7L1053.7 341.4L1062.6 348.0L1053.7 354.7L1044.8 348.0L1035.9 354.7L1027.0 361.4L1035.9 368.1L1044.8 361.4L1053.7 368.1L1062.6 374.8L1053.7 381.5L1044.8 374.8L1035.9 381.5L1044.8 388.1L1035.9 394.8L1027.0 388.1L1018.1 381.5L1027.0 374.8L1018.1 368.1L1009.2 374.8L1000.3 368.1L991.4 361.4L1000.3 354.7L1009.2 361.4L1018.1 354.7L1027.0 348.0L1018.1 341.4L1009.2 348.0L1000.3 341.4L1009.2 334.7L1000.3 328.0L991.4 334.7L982.5 341.4L991.4 348.0L982.5 354.7L973.5 348.0L964.6 341.4L973.5 334.7L964.6 328.0L955.7 334.7L946.8 328.0L937.9 321.3L946.8 314.6L955.7 321.3L964.6 314.6L955.7 308.0L964.6 301.3L973.5 308.0L982.5 314.6L973.5 321.3L982.5 328.0L991.4 321.3L1000.3 314.6L1009.2 308.0L1000.3 301.3L991.4 308.0L982.5 301.3L973.5 294.6L982.5 287.9L991.4 294.6L1000.3 287.9L991.4 281.2L1000.3 274.5L1009.2 281.2L1018.1 287.9L1009.2 294.6L1018.1 301.3L1027.0 294.6L1035.9 301.3L1044.8 308.0L1035.9 314.6L1027.0 308.0L1018.1 314.6L1009.2 321.3L1018.1 328.0L1027.0 321.3L1035.9 328.0L1027.0 334.7L1035.9 341.4L1044.8 334.7L1053.7 328.0L1044.8 321.3L1053.7 314.6L1062.6 321.3L1071.6 314.6L1062.6 308.0L1071.6 301.3L1080.5 308.0L1089.4 301.3L1098.3 294.6L1089.4 287.9L1080.5 294.6L1071.6 287.9L1080.5 281.2L1071.6 274.5L1062.6 281.2L1053.7 287.9L1062.6 294.6L1053.7 301.3L1044.8 294.6L1035.9 287.9L1044.8 281.2L1035.9 274.5L1027.0 281.2L1018.1 274.5L1009.2 267.9L1018.1 261.2L1027.0 267.9L1035.9 261.2L1027.0 254.5L1035.9 247.8L1044.8 254.5L1053.7 261.2L1044.8 267.9L1053.7 274.5L1062.6 267.9L1071.6 261.2L1080.5 254.5L1071.6 247.8L1062.6 254.5L1053.7 247.8L1044.8 241.1L1053.7 234.4L1062.6 241.1L1071.6 234.4L1062.6 227.8L1071.6 221.1L1080.5 227.8L1089.4 234.4L1080.5 241.1L1089.4 247.8L1098.3 241.1L1107.2 247.8L1116.1 254.5L1107.2 261.2L1098.3 254.5L1089.4 261.2L1080.5 267.9L1089.4 274.5L1098.3 267.9L1107.2 274.5L1098.3 281.2L1107.2 287.9L1116.1 281.2L1125.0 274.5L1116.1 267.9L1125.0 261.2L1133.9 267.9L1142.8 274.5L1133.9 281.2L1142.8 287.9L1151.7 281.2L1160.6 287.9L1169.6 294.6L1160.6 301.3L1151.7 294.6L1142.8 301.3L1151.7 308.0L1142.8 314.6L1133.9 308.0L1125.0 301.3L1133.9 294.6L1125.0 287.9L1116.1 294.6L1107.2 301.3L1116.1 308.0L1107.2 314.6L1098.3 308.0L1089.4 314.6L1080.5 321.3L1089.4 328.0L1098.3 321.3L1107.2 328.0L1098.3 334.7L1107.2 341.4L1116.1 334.7L1125.0 328.0L1116.1 321.3L1125.0 314.6L1133.9 321.3L1142.8 328.0L1151.7 334.7L1142.8 341.4L1133.9 334.7L1125.0 341.4L1116.1 348.0L1125.0 354.7L1133.9 348.0L1142.8 354.7L1133.9 361.4L1142.8 368.1L1151.7 361.4L1160.6 354.7L1151.7 348.0L1160.6 341.4L1169.6 348.0L1178.5 341.4L1187.4 334.7L1178.5 328.0L1169.6 334.7L1160.6 328.0L1151.7 321.3L1160.6 314.6L1169.6 321.3L1178.5 314.6L1169.6 308.0L1178.5 301.3L1187.4 308.0L1196.3 314.6L1187.4 321.3L1196.3 328.0L1205.2 321.3L1214.1 314.6L1223.0 308.0L1214.1 301.3L1205.2 308.0L1196.3 301.3L1187.4 294.6L1196.3 287.9L1205.2 294.6L1214.1 287.9L1205.2 281.2L1214.1 274.5L1223.0 281.2L1231.9 287.9L1223.0 294.6L1231.9 301.3L1240.8 294.6M1231.9 274.5L1223.0 267.9L1214.1 261.2L1205.2 254.5M1196.3 247.8L1187.4 241.1L1178.5 247.8L1169.6 254.5L1178.5 261.2L1187.4 254.5L1196.3 261.2L1205.2 267.9L1196.3 274.5L1187.4 267.9L1178.5 274.5L1187.4 281.2L1178.5 287.9L1169.6 281.2L1160.6 274.5L1169.6 267.9L1160.6 261.2L1151.7 267.9L1142.8 261.2L1133.9 254.5L1142.8 247.8L1151.7 254.5L1160.6 247.8L1169.6 241.1L1160.6 234.4L1151.7 241.1L1142.8 234.4L1151.7 227.8L1142.8 221.1L1133.9 227.8L1125.0 234.4L1133.9 241.1L1125.0 247.8L1116.1 241.1L1107.2 234.4L1116.1 227.8L1107.2 221.1L1098.3 227.8L1089.4 221.1L1080.5 214.4L1089.4 207.7L1098.3 214.4L1107.2 207.7L1098.3 201.0M1125.0 207.7L1116.1 214.4L1125.0 221.1L1133.9 214.4M1169.6 227.8L1178.5 234.4M1249.7 301.3M1249.7 314.6L1240.8 308.0L1231.9 314.6L1223.0 321.3L1231.9 328.0L1240.8 321.3L1249.7 328.0L1240.8 334.7L1249.7 341.4L1258.7 334.7M1258.7 321.3M1258.7 348.0" fill="none" stroke="#c01414" stroke-width="7.4" stroke-linejoin="round" stroke-linecap="round"/>
<path d="M1071.6 194.4L1080.5 201.0L1071.6 207.7L1062.6 201.0L1053.7 194.4M1044.8 187.7M884.5 174.3L893.4 181.0L902.3 174.3M937.9 174.3L929.0 181.0L920.1 174.3L911.2 181.0L902.3 187.7L911.2 194.4L920.1 187.7L929.0 194.4L920.1 201.0L929.0 207.7L937.9 201.0L946.8 194.4L937.9 187.7L946.8 181.0L955.7 187.7L964.6 181.0M955.7 174.3M1000.3 181.0M982.5 181.0L973.5 187.7L982.5 194.4L991.4 187.7L1000.3 194.4L991.4 201.0L1000.3 207.7L1009.2 201.0L1018.1 194.4L1009.2 187.7L1018.1 181.0L1027.0 187.7L1035.9 194.4L1027.0 201.0L1035.9 207.7L1044.8 201.0L1053.7 207.7L1062.6 214.4L1053.7 221.1L1044.8 214.4L1035.9 221.1L1044.8 227.8L1035.9 234.4L1027.0 227.8L1018.1 221.1L1027.0 214.4L1018.1 207.7L1009.2 214.4L1000.3 221.1L991.4 227.8L1000.3 234.4L1009.2 227.8L1018.1 234.4L1027.0 241.1L1018.1 247.8L1009.2 241.1L1000.3 247.8L1009.2 254.5L1000.3 261.2L991.4 254.5L982.5 247.8L991.4 241.1L982.5 234.4L973.5 241.1L964.6 234.4L955.7 227.8L964.6 221.1L973.5 227.8L982.5 221.1L991.4 214.4L982.5 207.7L973.5 214.4L964.6 207.7L973.5 201.0L964.6 194.4L955.7 201.0L946.8 207.7L955.7 214.4L946.8 221.1L937.9 214.4L929.0 221.1L937.9 227.8L929.0 234.4L920.1 227.8L911.2 234.4L902.3 241.1L911.2 247.8L920.1 241.1L929.0 247.8L920.1 254.5L929.0 261.2L937.9 254.5L946.8 247.8L937.9 241.1L946.8 234.4L955.7 241.1L964.6 247.8L955.7 254.5L964.6 261.2L973.5 254.5L982.5 261.2L991.4 267.9L982.5 274.5L973.5 267.9L964.6 274.5L973.5 281.2L964.6 287.9L955.7 281.2L946.8 274.5L955.7 267.9L946.8 261.2L937.9 267.9L929.0 274.5L920.1 281.2L929.0 287.9L937.9 281.2L946.8 287.9L955.7 294.6L946.8 301.3L937.9 294.6L929.0 301.3L937.9 308.0L929.0 314.6L920.1 308.0L911.2 301.3L920.1 294.6L911.2 287.9L902.3 294.6L893.4 287.9L884.5 281.2L893.4 274.5L902.3 281.2L911.2 274.5L920.1 267.9L911.2 261.2L902.3 267.9L893.4 261.2L902.3 254.5L893.4 247.8L884.5 254.5L875.5 261.2L884.5 267.9L875.5 274.5L866.6 267.9L857.7 261.2L866.6 254.5L857.7 247.8L848.8 254.5L839.9 247.8L831.0 241.1L839.9 234.4L848.8 241.1L857.7 234.4L848.8 227.8L857.7 221.1L866.6 227.8L875.5 234.4L866.6 241.1L875.5 247.8L884.5 241.1L893.4 234.4L884.5 227.8L893.4 221.1L902.3 227.8L911.2 221.1L920.1 214.4L911.2 207.7L902.3 214.4L893.4 207.7L902.3 201.0L893.4 194.4L884.5 201.0L875.5 207.7L884.5 214.4L875.5 221.1L866.6 214.4L857.7 207.7L848.8 201.0L857.7 194.4L866.6 201.0L875.5 194.4L884.5 187.7L875.5 181.0L866.6 187.7L857.7 181.0L866.6 174.3M839.9 181.0L848.8 187.7L839.9 194.4L831.0 187.7L822.1 194.4L813.2 201.0L822.1 207.7L831.0 201.0L839.9 207.7L848.8 214.4L839.9 221.1L831.0 214.4L822.1 221.1L831.0 227.8L822.1 234.4L813.2 227.8L804.3 221.1L813.2 214.4L804.3 207.7L795.4 214.4L786.4 207.7L777.5 201.0L786.4 194.4L795.4 201.0L804.3 194.4L813.2 187.7L804.3 181.0L795.4 187.7M777.5 187.7L768.6 194.4M822.1 181.0M715.2 434.9L724.1 441.6L733.0 448.3M750.8 448.3L741.9 441.6L750.8 434.9L759.7 441.6L768.6 434.9L777.5 428.2L768.6 421.6L759.7 428.2L750.8 421.6L759.7 414.9L750.8 408.2L741.9 414.9L733.0 421.6L741.9 428.2L733.0 434.9L724.1 428.2L715.2 421.6L706.3 414.9L715.2 408.2L724.1 414.9L733.0 408.2L741.9 401.5L733.0 394.8L724.1 401.5L715.2 394.8L724.1 388.1L715.2 381.5L706.3 388.1L697.4 394.8L706.3 401.5L697.4 408.2L688.4 401.5L679.5 408.2L670.6 414.9L679.5 421.6L688.4 414.9L697.4 421.6L706.3 428.2M688.4 428.2M643.9 394.8L635.0 388.1L643.9 381.5L652.8 388.1L661.7 394.8L652.8 401.5L661.7 408.2L670.6 401.5L679.5 394.8L670.6 388.1L679.5 381.5L688.4 388.1L697.4 381.5L706.3 374.8L697.4 368.1L688.4 374.8L679.5 368.1L688.4 361.4L679.5 354.7L670.6 361.4L661.7 368.1L670.6 374.8L661.7 381.5L652.8 374.8L643.9 368.1L635.0 361.4L643.9 354.7L652.8 361.4L661.7 354.7L670.6 348.0L661.7 341.4L652.8 348.0L643.9 341.4L652.8 334.7L643.9 328.0L635.0 334.7L626.1 341.4L635.0 348.0L626.1 354.7L617.2 348.0L608.3 354.7M617.2 361.4L626.1 368.1L635.0 374.8L626.1 381.5M608.3 341.4L617.2 334.7L608.3 328.0L599.3 334.7M599.3 321.3L608.3 314.6L599.3 308.0L608.3 301.3L617.2 308.0L626.1 314.6L617.2 321.3L626.1 328.0L635.0 321.3L643.9 314.6L652.8 308.0L643.9 301.3L635.0 308.0L626.1 301.3L617.2 294.6L626.1 287.9L635.0 294.6L643.9 287.9L635.0 281.2L643.9 274.5L652.8 281.2L661.7 287.9L652.8 294.6L661.7 301.3L670.6 294.6L679.5 287.9L670.6 281.2L679.5 274.5L688.4 281.2L697.4 274.5L706.3 267.9L697.4 261.2L688.4 267.9L679.5 261.2L688.4 254.5L679.5 247.8L670.6 254.5L661.7 261.2L670.6 267.9L661.7 274.5L652.8 267.9L643.9 261.2L635.0 254.5L643.9 247.8L652.8 254.5L661.7 247.8L670.6 241.1L661.7 234.4L652.8 241.1M626.1 261.2L635.0 267.9L626.1 274.5L617.2 267.9M617.2 281.2L608.3 287.9M724.1 201.0L715.2 207.7M679.5 221.1L670.6 227.8L679.5 234.4L688.4 227.8L697.4 221.1M706.3 214.4L715.2 221.1L724.1 227.8L715.2 234.4L706.3 227.8L697.4 234.4L688.4 241.1L697.4 247.8L706.3 241.1L715.2 247.8L706.3 254.5L715.2 261.2L724.1 254.5L733.0 247.8L724.1 241.1L733.0 234.4L741.9 241.1L750.8 234.4L759.7 227.8L750.8 221.1L741.9 227.8L733.0 221.1L724.1 214.4L733.0 207.7L741.9 214.4L750.8 207.7L741.9 201.0L750.8 194.4L759.7 201.0L768.6 207.7L759.7 214.4L768.6 221.1L777.5 214.4L786.4 221.1L795.4 227.8L786.4 234.4L777.5 227.8L768.6 234.4L759.7 241.1L768.6 247.8L777.5 241.1L786.4 247.8L777.5 254.5L786.4 261.2L795.4 254.5L804.3 247.8L795.4 241.1L804.3 234.4L813.2 241.1L822.1 247.8L813.2 254.5L822.1 261.2L831.0 254.5L839.9 261.2L848.8 267.9L839.9 274.5L831.0 267.9L822.1 274.5L831.0 281.2L822.1 287.9L813.2 281.2L804.3 274.5L813.2 267.9L804.3 261.2L795.4 267.9L786.4 274.5L777.5 281.2L786.4 287.9L795.4 281.2L804.3 287.9L813.2 294.6L804.3 301.3L795.4 294.6L786.4 301.3L795.4 308.0L786.4 314.6L777.5 308.0L768.6 301.3L777.5 294.6L768.6 287.9L759.7 294.6L750.8 287.9L741.9 281.2L750.8 274.5L759.7 281.2L768.6 274.5L777.5 267.9L768.6 261.2L759.7 267.9L750.8 261.2L759.7 254.5L750.8 247.8L741.9 254.5L733.0 261.2L741.9 267.9L733.0 274.5L724.1 267.9L715.2 274.5L706.3 281.2L715.2 287.9L724.1 281.2L733.0 287.9L741.9 294.6L733.0 301.3L724.1 294.6L715.2 301.3L724.1 308.0L715.2 314.6L706.3 308.0L697.4 301.3L706.3 294.6L697.4 287.9L688.4 294.6L679.5 301.3L688.4 308.0L679.5 314.6L670.6 308.0L661.7 314.6L652.8 321.3L661.7 328.0L670.6 321.3L679.5 328.0L670.6 334.7L679.5 341.4L688.4 334.7L697.4 328.0L688.4 321.3L697.4 314.6L706.3 321.3L715.2 328.0L724.1 334.7L715.2 341.4L706.3 334.7L697.4 341.4L688.4 348.0L697.4 354.7L706.3 348.0L715.2 354.7L706.3 361.4L715.2 368.1L724.1 361.4L733.0 354.7L724.1 348.0L733.0 341.4L741.9 348.0L750.8 341.4L759.7 334.7L750.8 328.0L741.9 334.7L733.0 328.0L724.1 321.3L733.0 314.6L741.9 321.3L750.8 314.6L741.9 308.0L750.8 301.3L759.7 308.0L768.6 314.6L759.7 321.3L768.6 328.0L777.5 321.3L786.4 328.0L777.5 334.7L786.4 341.4L795.4 334.7L804.3 341.4L813.2 348.0L804.3 354.7L795.4 348.0L786.4 354.7L795.4 361.4L786.4 368.1L777.5 361.4L768.6 354.7L777.5 348.0L768.6 341.4L759.7 348.0L750.8 354.7L759.7 361.4L750.8 368.1L741.9 361.4L733.0 368.1L724.1 374.8L733.0 381.5L741.9 374.8L750.8 381.5L741.9 388.1L750.8 394.8L759.7 388.1L768.6 381.5L759.7 374.8L768.6 368.1L777.5 374.8L786.4 381.5L795.4 388.1L786.4 394.8L777.5 388.1L768.6 394.8L759.7 401.5L768.6 408.2L777.5 401.5L786.4 408.2L777.5 414.9L786.4 421.6L795.4 414.9L804.3 408.2L795.4 401.5L804.3 394.8L813.2 401.5L822.1 394.8L831.0 388.1L822.1 381.5L813.2 388.1L804.3 381.5L795.4 374.8L804.3 368.1L813.2 374.8L822.1 368.1L813.2 361.4L822.1 354.7L831.0 361.4L839.9 368.1L831.0 374.8L839.9 381.5L848.8 374.8L857.7 368.1L848.8 361.4L857.7 354.7L866.6 361.4L875.5 354.7L884.5 348.0L875.5 341.4L866.6 348.0L857.7 341.4L866.6 334.7L857.7 328.0L848.8 334.7L839.9 341.4L848.8 348.0L839.9 354.7L831.0 348.0L822.1 341.4L831.0 334.7L822.1 328.0L813.2 334.7L804.3 328.0L795.4 321.3L804.3 314.6L813.2 321.3L822.1 314.6L813.2 308.0L822.1 301.3L831.0 308.0L839.9 314.6L831.0 321.3L839.9 328.0L848.8 321.3L857.7 314.6L866.6 308.0L857.7 301.3L848.8 308.0L839.9 301.3L831.0 294.6L839.9 287.9L848.8 294.6L857.7 287.9L848.8 281.2L857.7 274.5L866.6 281.2L875.5 287.9L866.6 294.6L875.5 301.3L884.5 294.6L893.4 301.3L902.3 308.0L893.4 314.6L884.5 308.0L875.5 314.6L866.6 321.3L875.5 328.0L884.5 321.3L893.4 328.0L884.5 334.7L893.4 341.4L902.3 334.7L911.2 328.0L902.3 321.3L911.2 314.6L920.1 321.3L929.0 328.0L937.9 334.7L929.0 341.4L920.1 334.7L911.2 341.4L902.3 348.0L911.2 354.7L920.1 348.0L929.0 354.7L920.1 361.4L929.0 368.1L937.9 361.4L946.8 354.7L937.9 348.0L946.8 341.4L955.7 348.0L964.6 354.7L955.7 361.4L964.6 368.1L973.5 361.4L982.5 368.1L991.4 374.8L982.5 381.5L973.5 374.8L964.6 381.5L973.5 388.1L964.6 394.8L955.7 388.1L946.8 381.5L955.7 374.8L946.8 368.1L937.9 374.8L929.0 381.5L920.1 388.1L929.0 394.8L937.9 388.1L946.8 394.8L955.7 401.5L946.8 408.2L937.9 401.5L929.0 408.2L937.9 414.9L929.0 421.6L920.1 414.9L911.2 408.2L920.1 401.5L911.2 394.8L902.3 401.5L893.4 394.8L884.5 388.1L893.4 381.5L902.3 388.1L911.2 381.5L920.1 374.8L911.2 368.1L902.3 374.8L893.4 368.1L902.3 361.4L893.4 354.7L884.5 361.4L875.5 368.1L884.5 374.8L875.5 381.5L866.6 374.8L857.7 381.5L848.8 388.1L857.7 394.8L866.6 388.1L875.5 394.8L884.5 401.5L875.5 408.2L866.6 401.5L857.7 408.2L866.6 414.9L857.7 421.6L848.8 414.9L839.9 408.2L848.8 401.5L839.9 394.8L831.0 401.5L822.1 408.2L831.0 414.9L822.1 421.6L813.2 414.9L804.3 421.6L795.4 428.2L804.3 434.9L813.2 428.2L822.1 434.9L813.2 441.6L822.1 448.3L831.0 441.6L839.9 434.9L831.0 428.2L839.9 421.6L848.8 428.2L857.7 434.9L866.6 441.6L857.7 448.3L848.8 441.6L839.9 448.3L831.0 455.0L839.9 461.6L848.8 455.0L857.7 461.6L848.8 468.3L857.7 475.0L866.6 468.3L875.5 461.6L866.6 455.0L875.5 448.3L884.5 455.0L893.4 448.3L902.3 441.6L893.4 434.9L884.5 441.6L875.5 434.9L866.6 428.2L875.5 421.6L884.5 428.2L893.4 421.6L884.5 414.9L893.4 408.2L902.3 414.9L911.2 421.6L902.3 428.2L911.2 434.9L920.1 428.2L929.0 434.9L920.1 441.6L929.0 448.3L937.9 441.6L946.8 448.3L955.7 455.0L946.8 461.6L937.9 455.0L929.0 461.6L937.9 468.3L929.0 475.0L920.1 468.3L911.2 461.6L920.1 455.0L911.2 448.3L902.3 455.0L893.4 461.6L902.3 468.3L893.4 475.0L884.5 468.3L875.5 475.0M902.3 481.7L911.2 475.0L920.1 481.7M937.9 481.7L946.8 475.0L955.7 481.7L964.6 475.0L955.7 468.3L964.6 461.6L973.5 468.3L982.5 475.0L973.5 481.7M991.4 481.7L1000.3 475.0L991.4 468.3L1000.3 461.6L1009.2 468.3L1018.1 461.6L1027.0 455.0L1018.1 448.3L1009.2 455.0L1000.3 448.3L1009.2 441.6L1000.3 434.9L991.4 441.6L982.5 448.3L991.4 455.0L982.5 461.6L973.5 455.0L964.6 448.3L973.5 441.6L964.6 434.9L955.7 441.6L946.8 434.9L937.9 428.2L946.8 421.6L955.7 428.2L964.6 421.6L955.7 414.9L964.6 408.2L973.5 414.9L982.5 421.6L973.5 428.2L982.5 434.9L991.4 428.2L1000.3 421.6L1009.2 414.9L1000.3 408.2L991.4 414.9L982.5 408.2L973.5 401.5L982.5 394.8L991.4 401.5L1000.3 394.8L991.4 388.1L1000.3 381.5L1009.2 388.1L1018.1 394.8L1009.2 401.5L1018.1 408.2L1027.0 401.5L1035.9 408.2L1044.8 414.9L1035.9 421.6L1027.0 414.9L1018.1 421.6L1009.2 428.2L1018.1 434.9L1027.0 428.2L1035.9 434.9L1027.0 441.6L1035.9 448.3L1044.8 441.6L1053.7 434.9L1044.8 428.2L1053.7 421.6L1062.6 428.2L1071.6 434.9L1062.6 441.6L1071.6 448.3L1080.5 441.6L1089.4 448.3L1098.3 455.0L1089.4 461.6L1080.5 455.0L1071.6 461.6L1080.5 468.3M1062.6 468.3L1053.7 461.6L1062.6 455.0L1053.7 448.3L1044.8 455.0L1035.9 461.6L1044.8 468.3L1035.9 475.0L1027.0 468.3L1018.1 475.0M1053.7 475.0M1107.2 461.6M839.9 475.0M831.0 468.3L822.1 461.6L813.2 468.3M786.4 461.6M804.3 461.6L813.2 455.0L804.3 448.3L795.4 455.0L786.4 448.3L795.4 441.6L786.4 434.9L777.5 441.6L768.6 448.3L777.5 455.0M759.7 455.0M1214.1 408.2L1205.2 414.9L1196.3 408.2L1187.4 401.5L1196.3 394.8L1205.2 401.5L1214.1 394.8L1205.2 388.1L1214.1 381.5L1223.0 388.1L1231.9 394.8L1223.0 401.5M1240.8 388.1M1249.7 368.1M1249.7 354.7L1240.8 361.4L1231.9 368.1L1240.8 374.8L1231.9 381.5L1223.0 374.8L1214.1 368.1L1205.2 361.4L1214.1 354.7L1223.0 361.4L1231.9 354.7L1240.8 348.0L1231.9 341.4L1223.0 348.0L1214.1 341.4L1223.0 334.7L1214.1 328.0L1205.2 334.7L1196.3 341.4L1205.2 348.0L1196.3 354.7L1187.4 348.0L1178.5 354.7L1169.6 361.4L1178.5 368.1L1187.4 361.4L1196.3 368.1L1205.2 374.8L1196.3 381.5L1187.4 374.8L1178.5 381.5L1187.4 388.1L1178.5 394.8L1169.6 388.1L1160.6 381.5L1169.6 374.8L1160.6 368.1L1151.7 374.8L1142.8 381.5L1151.7 388.1L1142.8 394.8L1133.9 388.1L1125.0 394.8L1116.1 401.5L1125.0 408.2L1133.9 401.5L1142.8 408.2L1133.9 414.9L1142.8 421.6L1151.7 414.9L1160.6 408.2L1151.7 401.5L1160.6 394.8L1169.6 401.5L1178.5 408.2L1169.6 414.9L1178.5 421.6L1187.4 414.9L1196.3 421.6M1187.4 428.2L1178.5 434.9M1160.6 434.9L1169.6 428.2L1160.6 421.6L1151.7 428.2L1142.8 434.9L1133.9 441.6L1142.8 448.3L1151.7 441.6M1133.9 455.0L1125.0 448.3L1116.1 455.0L1107.2 448.3L1098.3 441.6L1107.2 434.9L1116.1 441.6L1125.0 434.9L1133.9 428.2L1125.0 421.6L1116.1 428.2L1107.2 421.6L1116.1 414.9L1107.2 408.2L1098.3 414.9L1089.4 421.6L1098.3 428.2L1089.4 434.9L1080.5 428.2L1071.6 421.6L1080.5 414.9L1071.6 408.2L1062.6 414.9L1053.7 408.2L1044.8 401.5L1053.7 394.8L1062.6 401.5L1071.6 394.8L1062.6 388.1L1071.6 381.5L1080.5 388.1L1089.4 394.8L1080.5 401.5L1089.4 408.2L1098.3 401.5L1107.2 394.8L1098.3 388.1L1107.2 381.5L1116.1 388.1L1125.0 381.5L1133.9 374.8L1125.0 368.1L1116.1 374.8L1107.2 368.1L1116.1 361.4L1107.2 354.7L1098.3 361.4L1089.4 368.1L1098.3 374.8L1089.4 381.5L1080.5 374.8L1071.6 368.1L1062.6 361.4L1071.6 354.7L1080.5 361.4L1089.4 354.7L1098.3 348.0L1089.4 341.4L1080.5 348.0L1071.6 341.4L1080.5 334.7L1071.6 328.0L1062.6 334.7L1053.7 341.4L1062.6 348.0L1053.7 354.7L1044.8 348.0L1035.9 354.7L1027.0 361.4L1035.9 368.1L1044.8 361.4L1053.7 368.1L1062.6 374.8L1053.7 381.5L1044.8 374.8L1035.9 381.5L1044.8 388.1L1035.9 394.8L1027.0 388.1L1018.1 381.5L1027.0 374.8L1018.1 368.1L1009.2 374.8L1000.3 368.1L991.4 361.4L1000.3 354.7L1009.2 361.4L1018.1 354.7L1027.0 348.0L1018.1 341.4L1009.2 348.0L1000.3 341.4L1009.2 334.7L1000.3 328.0L991.4 334.7L982.5 341.4L991.4 348.0L982.5 354.7L973.5 348.0L964.6 341.4L973.5 334.7L964.6 328.0L955.7 334.7L946.8 328.0L937.9 321.3L946.8 314.6L955.7 321.3L964.6 314.6L955.7 308.0L964.6 301.3L973.5 308.0L982.5 314.6L973.5 321.3L982.5 328.0L991.4 321.3L1000.3 314.6L1009.2 308.0L1000.3 301.3L991.4 308.0L982.5 301.3L973.5 294.6L982.5 287.9L991.4 294.6L1000.3 287.9L991.4 281.2L1000.3 274.5L1009.2 281.2L1018.1 287.9L1009.2 294.6L1018.1 301.3L1027.0 294.6L1035.9 301.3L1044.8 308.0L1035.9 314.6L1027.0 308.0L1018.1 314.6L1009.2 321.3L1018.1 328.0L1027.0 321.3L1035.9 328.0L1027.0 334.7L1035.9 341.4L1044.8 334.7L1053.7 328.0L1044.8 321.3L1053.7 314.6L1062.6 321.3L1071.6 314.6L1062.6 308.0L1071.6 301.3L1080.5 308.0L1089.4 301.3L1098.3 294.6L1089.4 287.9L1080.5 294.6L1071.6 287.9L1080.5 281.2L1071.6 274.5L1062.6 281.2L1053.7 287.9L1062.6 294.6L1053.7 301.3L1044.8 294.6L1035.9 287.9L1044.8 281.2L1035.9 274.5L1027.0 281.2L1018.1 274.5L1009.2 267.9L1018.1 261.2L1027.0 267.9L1035.9 261.2L1027.0 254.5L1035.9 247.8L1044.8 254.5L1053.7 261.2L1044.8 267.9L1053.7 274.5L1062.6 267.9L1071.6 261.2L1080.5 254.5L1071.6 247.8L1062.6 254.5L1053.7 247.8L1044.8 241.1L1053.7 234.4L1062.6 241.1L1071.6 234.4L1062.6 227.8L1071.6 221.1L1080.5 227.8L1089.4 234.4L1080.5 241.1L1089.4 247.8L1098.3 241.1L1107.2 247.8L1116.1 254.5L1107.2 261.2L1098.3 254.5L1089.4 261.2L1080.5 267.9L1089.4 274.5L1098.3 267.9L1107.2 274.5L1098.3 281.2L1107.2 287.9L1116.1 281.2L1125.0 274.5L1116.1 267.9L1125.0 261.2L1133.9 267.9L1142.8 274.5L1133.9 281.2L1142.8 287.9L1151.7 281.2L1160.6 287.9L1169.6 294.6L1160.6 301.3L1151.7 294.6L1142.8 301.3L1151.7 308.0L1142.8 314.6L1133.9 308.0L1125.0 301.3L1133.9 294.6L1125.0 287.9L1116.1 294.6L1107.2 301.3L1116.1 308.0L1107.2 314.6L1098.3 308.0L1089.4 314.6L1080.5 321.3L1089.4 328.0L1098.3 321.3L1107.2 328.0L1098.3 334.7L1107.2 341.4L1116.1 334.7L1125.0 328.0L1116.1 321.3L1125.0 314.6L1133.9 321.3L1142.8 328.0L1151.7 334.7L1142.8 341.4L1133.9 334.7L1125.0 341.4L1116.1 348.0L1125.0 354.7L1133.9 348.0L1142.8 354.7L1133.9 361.4L1142.8 368.1L1151.7 361.4L1160.6 354.7L1151.7 348.0L1160.6 341.4L1169.6 348.0L1178.5 341.4L1187.4 334.7L1178.5 328.0L1169.6 334.7L1160.6 328.0L1151.7 321.3L1160.6 314.6L1169.6 321.3L1178.5 314.6L1169.6 308.0L1178.5 301.3L1187.4 308.0L1196.3 314.6L1187.4 321.3L1196.3 328.0L1205.2 321.3L1214.1 314.6L1223.0 308.0L1214.1 301.3L1205.2 308.0L1196.3 301.3L1187.4 294.6L1196.3 287.9L1205.2 294.6L1214.1 287.9L1205.2 281.2L1214.1 274.5L1223.0 281.2L1231.9 287.9L1223.0 294.6L1231.9 301.3L1240.8 294.6M1231.9 274.5L1223.0 267.9L1214.1 261.2L1205.2 254.5M1196.3 247.8L1187.4 241.1L1178.5 247.8L1169.6 254.5L1178.5 261.2L1187.4 254.5L1196.3 261.2L1205.2 267.9L1196.3 274.5L1187.4 267.9L1178.5 274.5L1187.4 281.2L1178.5 287.9L1169.6 281.2L1160.6 274.5L1169.6 267.9L1160.6 261.2L1151.7 267.9L1142.8 261.2L1133.9 254.5L1142.8 247.8L1151.7 254.5L1160.6 247.8L1169.6 241.1L1160.6 234.4L1151.7 241.1L1142.8 234.4L1151.7 227.8L1142.8 221.1L1133.9 227.8L1125.0 234.4L1133.9 241.1L1125.0 247.8L1116.1 241.1L1107.2 234.4L1116.1 227.8L1107.2 221.1L1098.3 227.8L1089.4 221.1L1080.5 214.4L1089.4 207.7L1098.3 214.4L1107.2 207.7L1098.3 201.0M1125.0 207.7L1116.1 214.4L1125.0 221.1L1133.9 214.4M1169.6 227.8L1178.5 234.4M1249.7 301.3M1249.7 314.6L1240.8 308.0L1231.9 314.6L1223.0 321.3L1231.9 328.0L1240.8 321.3L1249.7 328.0L1240.8 334.7L1249.7 341.4L1258.7 334.7M1258.7 321.3M1258.7 348.0" fill="none" stroke="#d81a1a" stroke-width="3.6" stroke-linejoin="round" stroke-linecap="round"/>
</g>
<path d="M1046.0 329.0 L1045.7 333.3 L1044.9 337.6 L1043.6 341.9 L1041.7 346.1 L1039.4 350.2 L1036.5 354.2 L1033.1 358.1 L1029.3 361.9 L1025.0 365.4 L1020.3 368.9 L1015.1 372.1 L1009.6 375.1 L1003.7 377.9 L997.5 380.4 L991.0 382.7 L984.2 384.7 L977.2 386.5 L970.0 388.0 L962.6 389.2 L955.1 390.1 L947.5 390.7 L939.8 391.0 L932.2 391.0 L924.5 390.7 L916.9 390.1 L909.4 389.2 L902.0 388.0 L894.8 386.5 L887.8 384.7 L881.0 382.7 L874.5 380.4 L868.3 377.9 L862.4 375.1 L856.9 372.1 L851.7 368.9 L847.0 365.4 L842.7 361.9 L838.9 358.1 L835.5 354.2 L832.6 350.2 L830.3 346.1 L828.4 341.9 L827.1 337.6 L826.3 333.3 L826.0 329.0 L826.3 324.7 L827.1 320.4 L828.4 316.1 L830.3 311.9 L832.6 307.8 L835.5 303.8 L838.9 299.9 L842.7 296.1 L847.0 292.6 L851.7 289.1 L856.9 285.9 L862.4 282.9 L868.3 280.1 L874.5 277.6 L881.0 275.3 L887.8 273.3 L894.8 271.5 L902.0 270.0 L909.4 268.8 L916.9 267.9 L924.5 267.3 L932.2 267.0 L939.8 267.0 L947.5 267.3 L955.1 267.9 L962.6 268.8 L970.0 270.0 L977.2 271.5 L984.2 273.3 L991.0 275.3 L997.5 277.6 L1003.7 280.1 L1009.6 282.9 L1015.1 285.9 L1020.3 289.1 L1025.0 292.6 L1029.3 296.1 L1033.1 299.9 L1036.5 303.8 L1039.4 307.8 L1041.7 311.9 L1043.6 316.1 L1044.9 320.4 L1045.7 324.7 Z" fill="#d6d27a"/>
<path d="M1044.0 329.0 L1043.7 333.2 L1042.9 337.4 L1041.6 341.5 L1039.8 345.5 L1037.5 349.5 L1034.7 353.4 L1031.4 357.2 L1027.6 360.8 L1023.4 364.3 L1018.7 367.6 L1013.7 370.7 L1008.3 373.6 L1002.5 376.3 L996.4 378.7 L990.0 381.0 L983.3 382.9 L976.5 384.6 L969.4 386.1 L962.1 387.2 L954.8 388.1 L947.3 388.7 L939.8 389.0 L932.2 389.0 L924.7 388.7 L917.2 388.1 L909.9 387.2 L902.6 386.1 L895.5 384.6 L888.7 382.9 L882.0 381.0 L875.6 378.7 L869.5 376.3 L863.7 373.6 L858.3 370.7 L853.3 367.6 L848.6 364.3 L844.4 360.8 L840.6 357.2 L837.3 353.4 L834.5 349.5 L832.2 345.5 L830.4 341.5 L829.1 337.4 L828.3 333.2 L828.0 329.0 L828.3 324.8 L829.1 320.6 L830.4 316.5 L832.2 312.5 L834.5 308.5 L837.3 304.6 L840.6 300.8 L844.4 297.2 L848.6 293.7 L853.3 290.4 L858.3 287.3 L863.7 284.4 L869.5 281.7 L875.6 279.3 L882.0 277.0 L888.7 275.1 L895.5 273.4 L902.6 271.9 L909.9 270.8 L917.2 269.9 L924.7 269.3 L932.2 269.0 L939.8 269.0 L947.3 269.3 L954.8 269.9 L962.1 270.8 L969.4 271.9 L976.5 273.4 L983.3 275.1 L990.0 277.0 L996.4 279.3 L1002.5 281.7 L1008.3 284.4 L1013.7 287.3 L1018.7 290.4 L1023.4 293.7 L1027.6 297.2 L1031.4 300.8 L1034.7 304.6 L1037.5 308.5 L1039.8 312.5 L1041.6 316.5 L1042.9 320.6 L1043.7 324.8 Z" fill="#6e4a00"/>
<path d="M1040.5 329.0 L1040.2 332.9 L1039.5 336.9 L1038.2 340.7 L1036.5 344.6 L1034.2 348.3 L1031.5 352.0 L1028.3 355.5 L1024.6 358.9 L1020.5 362.2 L1016.1 365.3 L1011.2 368.2 L1005.9 371.0 L1000.3 373.5 L994.4 375.8 L988.2 377.9 L981.8 379.8 L975.1 381.4 L968.3 382.7 L961.3 383.8 L954.1 384.6 L946.9 385.2 L939.6 385.5 L932.4 385.5 L925.1 385.2 L917.9 384.6 L910.7 383.8 L903.7 382.7 L896.9 381.4 L890.2 379.8 L883.8 377.9 L877.6 375.8 L871.7 373.5 L866.1 371.0 L860.8 368.2 L855.9 365.3 L851.5 362.2 L847.4 358.9 L843.7 355.5 L840.5 352.0 L837.8 348.3 L835.5 344.6 L833.8 340.7 L832.5 336.9 L831.8 332.9 L831.5 329.0 L831.8 325.1 L832.5 321.1 L833.8 317.3 L835.5 313.4 L837.8 309.7 L840.5 306.0 L843.7 302.5 L847.4 299.1 L851.5 295.8 L855.9 292.7 L860.8 289.8 L866.1 287.0 L871.7 284.5 L877.6 282.2 L883.8 280.1 L890.2 278.2 L896.9 276.6 L903.7 275.3 L910.7 274.2 L917.9 273.4 L925.1 272.8 L932.4 272.5 L939.6 272.5 L946.9 272.8 L954.1 273.4 L961.3 274.2 L968.3 275.3 L975.1 276.6 L981.8 278.2 L988.2 280.1 L994.4 282.2 L1000.3 284.5 L1005.9 287.0 L1011.2 289.8 L1016.1 292.7 L1020.5 295.8 L1024.6 299.1 L1028.3 302.5 L1031.5 306.0 L1034.2 309.7 L1036.5 313.4 L1038.2 317.3 L1039.5 321.1 L1040.2 325.1 Z" fill="none" stroke="#b07406" stroke-width="5.5" filter="url(#bl08)"/>
<path d="M1041.0 329.0 L1040.7 333.0 L1040.0 336.9 L1038.7 340.9 L1036.9 344.7 L1034.7 348.5 L1031.9 352.2 L1028.7 355.8 L1025.0 359.2 L1020.9 362.5 L1016.4 365.6 L1011.5 368.6 L1006.3 371.4 L1000.6 373.9 L994.7 376.3 L988.5 378.4 L982.0 380.2 L975.3 381.8 L968.4 383.2 L961.4 384.3 L954.2 385.1 L947.0 385.7 L939.7 386.0 L932.3 386.0 L925.0 385.7 L917.8 385.1 L910.6 384.3 L903.6 383.2 L896.7 381.8 L890.0 380.2 L883.5 378.4 L877.3 376.3 L871.4 373.9 L865.7 371.4 L860.5 368.6 L855.6 365.6 L851.1 362.5 L847.0 359.2 L843.3 355.8 L840.1 352.2 L837.3 348.5 L835.1 344.7 L833.3 340.9 L832.0 336.9 L831.3 333.0 L831.0 329.0 L831.3 325.0 L832.0 321.1 L833.3 317.1 L835.1 313.3 L837.3 309.5 L840.1 305.8 L843.3 302.2 L847.0 298.8 L851.1 295.5 L855.6 292.4 L860.5 289.4 L865.7 286.6 L871.4 284.1 L877.3 281.7 L883.5 279.6 L890.0 277.8 L896.7 276.2 L903.6 274.8 L910.6 273.7 L917.8 272.9 L925.0 272.3 L932.3 272.0 L939.7 272.0 L947.0 272.3 L954.2 272.9 L961.4 273.7 L968.4 274.8 L975.3 276.2 L982.0 277.8 L988.5 279.6 L994.7 281.7 L1000.6 284.1 L1006.3 286.6 L1011.5 289.4 L1016.4 292.4 L1020.9 295.5 L1025.0 298.8 L1028.7 302.2 L1031.9 305.8 L1034.7 309.5 L1036.9 313.3 L1038.7 317.1 L1040.0 321.1 L1040.7 325.0 Z" fill="none" stroke="#d8940a" stroke-width="2.4" filter="url(#bl08)"/>
<clipPath id="holeclip"><path d="M1037.0 329.0 L1036.8 332.7 L1036.0 336.4 L1034.8 340.0 L1033.1 343.6 L1030.9 347.1 L1028.3 350.6 L1025.2 353.9 L1021.7 357.1 L1017.7 360.2 L1013.4 363.1 L1008.7 365.8 L1003.6 368.4 L998.2 370.8 L992.5 372.9 L986.5 374.9 L980.3 376.6 L973.8 378.1 L967.2 379.4 L960.4 380.4 L953.5 381.2 L946.6 381.7 L939.5 382.0 L932.5 382.0 L925.4 381.7 L918.5 381.2 L911.6 380.4 L904.8 379.4 L898.2 378.1 L891.7 376.6 L885.5 374.9 L879.5 372.9 L873.8 370.8 L868.4 368.4 L863.3 365.8 L858.6 363.1 L854.3 360.2 L850.3 357.1 L846.8 353.9 L843.7 350.6 L841.1 347.1 L838.9 343.6 L837.2 340.0 L836.0 336.4 L835.2 332.7 L835.0 329.0 L835.2 325.3 L836.0 321.6 L837.2 318.0 L838.9 314.4 L841.1 310.9 L843.7 307.4 L846.8 304.1 L850.3 300.9 L854.3 297.8 L858.6 294.9 L863.3 292.2 L868.4 289.6 L873.8 287.2 L879.5 285.1 L885.5 283.1 L891.7 281.4 L898.2 279.9 L904.8 278.6 L911.6 277.6 L918.5 276.8 L925.4 276.3 L932.5 276.0 L939.5 276.0 L946.6 276.3 L953.5 276.8 L960.4 277.6 L967.2 278.6 L973.8 279.9 L980.3 281.4 L986.5 283.1 L992.5 285.1 L998.2 287.2 L1003.6 289.6 L1008.7 292.2 L1013.4 294.9 L1017.7 297.8 L1021.7 300.9 L1025.2 304.1 L1028.3 307.4 L1030.9 310.9 L1033.1 314.4 L1034.8 318.0 L1036.0 321.6 L1036.8 325.3 Z"/></clipPath>
<g clip-path="url(#holeclip)"><g filter="url(#bl08)">
<path d="M1037.0 329.0 L1036.8 332.7 L1036.0 336.4 L1034.8 340.0 L1033.1 343.6 L1030.9 347.1 L1028.3 350.6 L1025.2 353.9 L1021.7 357.1 L1017.7 360.2 L1013.4 363.1 L1008.7 365.8 L1003.6 368.4 L998.2 370.8 L992.5 372.9 L986.5 374.9 L980.3 376.6 L973.8 378.1 L967.2 379.4 L960.4 380.4 L953.5 381.2 L946.6 381.7 L939.5 382.0 L932.5 382.0 L925.4 381.7 L918.5 381.2 L911.6 380.4 L904.8 379.4 L898.2 378.1 L891.7 376.6 L885.5 374.9 L879.5 372.9 L873.8 370.8 L868.4 368.4 L863.3 365.8 L858.6 363.1 L854.3 360.2 L850.3 357.1 L846.8 353.9 L843.7 350.6 L841.1 347.1 L838.9 343.6 L837.2 340.0 L836.0 336.4 L835.2 332.7 L835.0 329.0 L835.2 325.3 L836.0 321.6 L837.2 318.0 L838.9 314.4 L841.1 310.9 L843.7 307.4 L846.8 304.1 L850.3 300.9 L854.3 297.8 L858.6 294.9 L863.3 292.2 L868.4 289.6 L873.8 287.2 L879.5 285.1 L885.5 283.1 L891.7 281.4 L898.2 279.9 L904.8 278.6 L911.6 277.6 L918.5 276.8 L925.4 276.3 L932.5 276.0 L939.5 276.0 L946.6 276.3 L953.5 276.8 L960.4 277.6 L967.2 278.6 L973.8 279.9 L980.3 281.4 L986.5 283.1 L992.5 285.1 L998.2 287.2 L1003.6 289.6 L1008.7 292.2 L1013.4 294.9 L1017.7 297.8 L1021.7 300.9 L1025.2 304.1 L1028.3 307.4 L1030.9 310.9 L1033.1 314.4 L1034.8 318.0 L1036.0 321.6 L1036.8 325.3 Z" fill="#d69a10"/>
<path d="M1027.2 329.4 L1026.8 334.0 L1025.7 338.5 L1023.8 342.9 L1021.2 347.3 L1017.8 351.5 L1013.8 355.5 L1009.2 359.4 L1003.9 363.0 L998.0 366.4 L991.6 369.5 L984.6 372.2 L977.3 374.7 L969.6 376.8 L961.5 378.5 L953.2 379.9 L944.7 380.9 L936.1 381.5 L927.4 381.7 L918.7 381.5 L910.1 380.9 L901.6 379.9 L893.3 378.5 L885.2 376.8 L877.5 374.7 L870.2 372.2 L863.2 369.5 L856.8 366.4 L850.9 363.0 L845.6 359.4 L841.0 355.6 L837.0 351.5 L833.6 347.3 L831.0 342.9 L829.1 338.5 L828.0 334.0 L827.6 329.4 L828.0 324.8 L829.1 320.3 L831.0 315.9 L833.6 311.5 L837.0 307.3 L841.0 303.2 L845.6 299.4 L850.9 295.8 L856.8 292.4 L863.2 289.3 L870.2 286.6 L877.5 284.1 L885.2 282.0 L893.3 280.3 L901.6 278.9 L910.1 277.9 L918.7 277.3 L927.4 277.1 L936.1 277.3 L944.7 277.9 L953.2 278.9 L961.5 280.3 L969.6 282.0 L977.3 284.1 L984.6 286.6 L991.6 289.3 L998.0 292.4 L1003.9 295.8 L1009.2 299.4 L1013.8 303.2 L1017.8 307.3 L1021.2 311.5 L1023.8 315.9 L1025.7 320.3 L1026.8 324.8 Z" fill="#7e5802"/>
<path d="M1024.3 329.5 L1023.9 334.1 L1022.7 338.6 L1020.9 343.0 L1018.3 347.3 L1014.9 351.5 L1010.9 355.6 L1006.3 359.4 L1001.0 363.0 L995.1 366.4 L988.7 369.4 L981.9 372.2 L974.5 374.6 L966.8 376.7 L958.8 378.5 L950.6 379.8 L942.1 380.8 L933.5 381.4 L924.8 381.6 L916.2 381.4 L907.6 380.8 L899.1 379.8 L890.8 378.5 L882.8 376.7 L875.1 374.6 L867.8 372.2 L860.9 369.4 L854.5 366.4 L848.6 363.0 L843.4 359.4 L838.7 355.6 L834.7 351.5 L831.4 347.3 L828.8 343.0 L826.9 338.6 L825.8 334.1 L825.4 329.5 L825.8 325.0 L826.9 320.5 L828.8 316.0 L831.4 311.7 L834.7 307.5 L838.7 303.5 L843.4 299.6 L848.6 296.0 L854.5 292.7 L860.9 289.6 L867.8 286.9 L875.1 284.4 L882.8 282.3 L890.8 280.6 L899.1 279.2 L907.6 278.2 L916.2 277.6 L924.8 277.4 L933.5 277.6 L942.1 278.2 L950.6 279.2 L958.8 280.6 L966.8 282.3 L974.5 284.4 L981.9 286.9 L988.7 289.6 L995.1 292.7 L1001.0 296.0 L1006.3 299.6 L1010.9 303.5 L1014.9 307.5 L1018.3 311.7 L1020.9 316.0 L1022.7 320.5 L1023.9 325.0 Z" fill="#d8960a"/>
<path d="M1017.4 329.8 L1017.0 334.3 L1015.9 338.8 L1014.0 343.2 L1011.5 347.4 L1008.2 351.6 L1004.2 355.6 L999.6 359.4 L994.3 363.0 L988.5 366.3 L982.2 369.3 L975.4 372.1 L968.1 374.5 L960.5 376.6 L952.5 378.3 L944.3 379.6 L935.9 380.6 L927.4 381.2 L918.8 381.4 L910.2 381.2 L901.7 380.6 L893.3 379.6 L885.1 378.3 L877.1 376.6 L869.5 374.5 L862.2 372.1 L855.4 369.3 L849.1 366.3 L843.3 363.0 L838.0 359.4 L833.4 355.6 L829.4 351.6 L826.1 347.4 L823.6 343.2 L821.7 338.8 L820.6 334.3 L820.2 329.8 L820.6 325.3 L821.7 320.8 L823.6 316.4 L826.1 312.2 L829.4 308.0 L833.4 304.0 L838.0 300.2 L843.3 296.6 L849.1 293.3 L855.4 290.3 L862.2 287.5 L869.5 285.1 L877.1 283.0 L885.1 281.3 L893.3 280.0 L901.7 279.0 L910.2 278.4 L918.8 278.2 L927.4 278.4 L935.9 279.0 L944.3 280.0 L952.5 281.3 L960.5 283.0 L968.1 285.1 L975.4 287.5 L982.2 290.3 L988.5 293.3 L994.3 296.6 L999.6 300.2 L1004.2 304.0 L1008.2 308.0 L1011.5 312.2 L1014.0 316.4 L1015.9 320.8 L1017.0 325.3 Z" fill="#7e5802"/>
<path d="M1014.5 329.9 L1014.1 334.4 L1013.0 338.8 L1011.1 343.2 L1008.5 347.5 L1005.3 351.6 L1001.3 355.6 L996.7 359.4 L991.5 363.0 L985.7 366.3 L979.4 369.3 L972.6 372.0 L965.3 374.4 L957.7 376.5 L949.8 378.2 L941.6 379.6 L933.3 380.5 L924.8 381.1 L916.2 381.3 L907.7 381.1 L899.2 380.5 L890.8 379.6 L882.6 378.2 L874.7 376.5 L867.1 374.4 L859.9 372.0 L853.1 369.3 L846.8 366.3 L841.0 363.0 L835.7 359.4 L831.1 355.6 L827.2 351.6 L823.9 347.5 L821.3 343.2 L819.5 338.8 L818.4 334.4 L818.0 329.9 L818.4 325.4 L819.5 321.0 L821.3 316.6 L823.9 312.3 L827.2 308.2 L831.1 304.2 L835.7 300.4 L841.0 296.9 L846.8 293.6 L853.1 290.6 L859.9 287.8 L867.1 285.4 L874.7 283.3 L882.6 281.6 L890.8 280.3 L899.2 279.3 L907.7 278.7 L916.2 278.5 L924.8 278.7 L933.3 279.3 L941.6 280.3 L949.8 281.6 L957.7 283.3 L965.3 285.4 L972.6 287.8 L979.4 290.6 L985.7 293.6 L991.5 296.9 L996.7 300.4 L1001.3 304.2 L1005.3 308.2 L1008.5 312.3 L1011.1 316.6 L1013.0 321.0 L1014.1 325.4 Z" fill="#d8960a"/>
<path d="M1007.6 330.2 L1007.2 334.6 L1006.1 339.0 L1004.3 343.4 L1001.7 347.6 L998.5 351.7 L994.6 355.6 L990.0 359.4 L984.8 362.9 L979.1 366.2 L972.8 369.2 L966.1 371.9 L958.9 374.3 L951.4 376.3 L943.5 378.0 L935.4 379.4 L927.1 380.3 L918.7 380.9 L910.2 381.1 L901.7 380.9 L893.3 380.3 L885.0 379.4 L876.9 378.0 L869.0 376.3 L861.5 374.3 L854.3 371.9 L847.6 369.2 L841.3 366.2 L835.6 362.9 L830.4 359.4 L825.8 355.6 L821.9 351.7 L818.7 347.6 L816.1 343.4 L814.3 339.0 L813.2 334.6 L812.8 330.2 L813.2 325.8 L814.3 321.4 L816.1 317.0 L818.7 312.8 L821.9 308.7 L825.8 304.8 L830.4 301.0 L835.6 297.5 L841.3 294.2 L847.6 291.2 L854.3 288.5 L861.5 286.1 L869.0 284.1 L876.9 282.4 L885.0 281.0 L893.3 280.1 L901.7 279.5 L910.2 279.3 L918.7 279.5 L927.1 280.1 L935.4 281.0 L943.5 282.4 L951.4 284.1 L958.9 286.1 L966.1 288.5 L972.8 291.2 L979.1 294.2 L984.8 297.5 L990.0 301.0 L994.6 304.8 L998.5 308.7 L1001.7 312.8 L1004.3 317.0 L1006.1 321.4 L1007.2 325.8 Z" fill="#7e5802"/>
<path d="M1004.7 330.3 L1004.3 334.7 L1003.2 339.1 L1001.4 343.4 L998.8 347.7 L995.6 351.7 L991.7 355.7 L987.1 359.4 L982.0 362.9 L976.2 366.2 L970.0 369.2 L963.3 371.8 L956.1 374.2 L948.6 376.3 L940.8 378.0 L932.7 379.3 L924.5 380.2 L916.1 380.8 L907.6 381.0 L899.2 380.8 L890.8 380.2 L882.5 379.3 L874.4 378.0 L866.6 376.3 L859.1 374.2 L852.0 371.8 L845.2 369.2 L839.0 366.2 L833.3 362.9 L828.1 359.4 L823.6 355.7 L819.7 351.7 L816.4 347.7 L813.9 343.4 L812.1 339.1 L810.9 334.7 L810.6 330.3 L810.9 325.9 L812.1 321.5 L813.9 317.2 L816.4 313.0 L819.7 308.9 L823.6 305.0 L828.1 301.2 L833.3 297.7 L839.0 294.5 L845.2 291.5 L852.0 288.8 L859.1 286.4 L866.6 284.4 L874.4 282.7 L882.5 281.4 L890.8 280.4 L899.2 279.8 L907.6 279.6 L916.1 279.8 L924.5 280.4 L932.7 281.4 L940.8 282.7 L948.6 284.4 L956.1 286.4 L963.3 288.8 L970.0 291.5 L976.2 294.5 L982.0 297.7 L987.1 301.2 L991.7 305.0 L995.6 308.9 L998.8 313.0 L1001.4 317.2 L1003.2 321.5 L1004.3 325.9 Z" fill="#d8960a"/>
<path d="M997.8 330.6 L997.4 335.0 L996.3 339.3 L994.5 343.6 L992.0 347.8 L988.8 351.8 L984.9 355.7 L980.4 359.4 L975.3 362.9 L969.6 366.1 L963.4 369.1 L956.8 371.7 L949.7 374.1 L942.3 376.1 L934.5 377.8 L926.5 379.1 L918.3 380.0 L910.0 380.6 L901.6 380.8 L893.2 380.6 L884.9 380.0 L876.7 379.1 L868.7 377.8 L860.9 376.1 L853.5 374.1 L846.4 371.7 L839.8 369.1 L833.6 366.1 L827.9 362.9 L822.8 359.4 L818.3 355.7 L814.4 351.8 L811.2 347.8 L808.7 343.6 L806.9 339.3 L805.8 335.0 L805.4 330.6 L805.8 326.2 L806.9 321.9 L808.7 317.6 L811.2 313.4 L814.4 309.4 L818.3 305.5 L822.8 301.8 L827.9 298.3 L833.6 295.1 L839.8 292.1 L846.4 289.5 L853.5 287.1 L860.9 285.1 L868.7 283.4 L876.7 282.1 L884.9 281.2 L893.2 280.6 L901.6 280.4 L910.0 280.6 L918.3 281.2 L926.5 282.1 L934.5 283.4 L942.3 285.1 L949.7 287.1 L956.8 289.5 L963.4 292.1 L969.6 295.1 L975.3 298.3 L980.4 301.8 L984.9 305.5 L988.8 309.4 L992.0 313.4 L994.5 317.6 L996.3 321.9 L997.4 326.2 Z" fill="#7e5802"/>
<path d="M994.9 330.7 L994.5 335.1 L993.4 339.4 L991.6 343.7 L989.1 347.8 L985.9 351.8 L982.0 355.7 L977.5 359.4 L972.4 362.9 L966.8 366.1 L960.6 369.0 L954.0 371.7 L946.9 374.0 L939.5 376.0 L931.8 377.7 L923.8 379.0 L915.7 380.0 L907.4 380.5 L899.0 380.7 L890.7 380.5 L882.4 380.0 L874.2 379.0 L866.2 377.7 L858.5 376.0 L851.1 374.0 L844.0 371.7 L837.4 369.0 L831.3 366.1 L825.6 362.9 L820.5 359.4 L816.0 355.7 L812.2 351.8 L809.0 347.8 L806.4 343.7 L804.6 339.4 L803.5 335.1 L803.2 330.7 L803.5 326.4 L804.6 322.0 L806.4 317.8 L809.0 313.6 L812.2 309.6 L816.0 305.7 L820.5 302.0 L825.6 298.6 L831.3 295.4 L837.4 292.4 L844.0 289.8 L851.1 287.4 L858.5 285.4 L866.2 283.7 L874.2 282.4 L882.4 281.5 L890.7 280.9 L899.0 280.7 L907.4 280.9 L915.7 281.5 L923.8 282.4 L931.8 283.7 L939.5 285.4 L946.9 287.4 L954.0 289.8 L960.6 292.4 L966.8 295.4 L972.4 298.6 L977.5 302.0 L982.0 305.7 L985.9 309.6 L989.1 313.6 L991.6 317.8 L993.4 322.0 L994.5 326.4 Z" fill="#d8960a"/>
<path d="M988.0 331.0 L987.6 335.3 L986.6 339.6 L984.8 343.8 L982.3 347.9 L979.1 351.9 L975.3 355.8 L970.8 359.4 L965.8 362.8 L960.2 366.0 L954.1 368.9 L947.5 371.5 L940.5 373.9 L933.1 375.9 L925.5 377.5 L917.6 378.8 L909.5 379.7 L901.3 380.3 L893.0 380.5 L884.7 380.3 L876.5 379.7 L868.4 378.8 L860.5 377.5 L852.9 375.9 L845.5 373.9 L838.5 371.5 L831.9 368.9 L825.8 366.0 L820.2 362.8 L815.2 359.4 L810.7 355.8 L806.9 351.9 L803.7 347.9 L801.2 343.8 L799.4 339.6 L798.4 335.3 L798.0 331.0 L798.4 326.7 L799.4 322.4 L801.2 318.2 L803.7 314.1 L806.9 310.1 L810.7 306.2 L815.2 302.6 L820.2 299.2 L825.8 296.0 L831.9 293.1 L838.5 290.5 L845.5 288.1 L852.9 286.1 L860.5 284.5 L868.4 283.2 L876.5 282.3 L884.7 281.7 L893.0 281.5 L901.3 281.7 L909.5 282.3 L917.6 283.2 L925.5 284.5 L933.1 286.1 L940.5 288.1 L947.5 290.5 L954.1 293.1 L960.2 296.0 L965.8 299.2 L970.8 302.6 L975.3 306.2 L979.1 310.1 L982.3 314.1 L984.8 318.2 L986.6 322.4 L987.6 326.7 Z" fill="#7e5802"/>
<path d="M985.1 331.1 L984.7 335.4 L983.6 339.7 L981.8 343.9 L979.4 348.0 L976.2 352.0 L972.4 355.8 L967.9 359.4 L962.9 362.8 L957.3 366.0 L951.3 368.9 L944.7 371.5 L937.7 373.8 L930.4 375.8 L922.8 377.4 L914.9 378.7 L906.9 379.7 L898.7 380.2 L890.4 380.4 L882.2 380.2 L874.0 379.7 L865.9 378.7 L858.1 377.4 L850.4 375.8 L843.1 373.8 L836.1 371.5 L829.6 368.9 L823.5 366.0 L817.9 362.8 L812.9 359.4 L808.5 355.8 L804.6 352.0 L801.5 348.0 L799.0 343.9 L797.2 339.7 L796.1 335.4 L795.8 331.1 L796.1 326.8 L797.2 322.6 L799.0 318.4 L801.5 314.3 L804.6 310.3 L808.5 306.5 L812.9 302.8 L817.9 299.4 L823.5 296.3 L829.6 293.4 L836.1 290.7 L843.1 288.4 L850.4 286.4 L858.1 284.8 L865.9 283.5 L874.0 282.6 L882.2 282.0 L890.4 281.8 L898.7 282.0 L906.9 282.6 L914.9 283.5 L922.8 284.8 L930.4 286.4 L937.7 288.4 L944.7 290.7 L951.3 293.4 L957.3 296.3 L962.9 299.4 L967.9 302.8 L972.4 306.5 L976.2 310.3 L979.4 314.3 L981.8 318.4 L983.6 322.6 L984.7 326.8 Z" fill="#d8960a"/>
<path d="M978.2 331.4 L977.8 335.7 L976.8 339.9 L975.0 344.0 L972.5 348.1 L969.4 352.0 L965.6 355.8 L961.2 359.4 L956.3 362.8 L950.7 365.9 L944.7 368.8 L938.2 371.4 L931.3 373.7 L924.0 375.6 L916.5 377.3 L908.7 378.5 L900.7 379.5 L892.6 380.0 L884.4 380.2 L876.2 380.0 L868.1 379.5 L860.1 378.5 L852.3 377.3 L844.8 375.6 L837.5 373.7 L830.6 371.4 L824.1 368.8 L818.1 365.9 L812.5 362.8 L807.6 359.4 L803.2 355.8 L799.4 352.0 L796.3 348.1 L793.8 344.0 L792.0 339.9 L791.0 335.7 L790.6 331.4 L791.0 327.1 L792.0 322.9 L793.8 318.8 L796.3 314.7 L799.4 310.8 L803.2 307.0 L807.6 303.4 L812.5 300.0 L818.1 296.9 L824.1 294.0 L830.6 291.4 L837.5 289.1 L844.8 287.2 L852.3 285.5 L860.1 284.3 L868.1 283.3 L876.2 282.8 L884.4 282.6 L892.6 282.8 L900.7 283.3 L908.7 284.3 L916.5 285.5 L924.0 287.2 L931.3 289.1 L938.2 291.4 L944.7 294.0 L950.7 296.9 L956.3 300.0 L961.2 303.4 L965.6 307.0 L969.4 310.8 L972.5 314.7 L975.0 318.8 L976.8 322.9 L977.8 327.1 Z" fill="#7e5802"/>
<path d="M975.3 331.5 L974.9 335.8 L973.8 340.0 L972.1 344.1 L969.6 348.1 L966.5 352.1 L962.7 355.8 L958.4 359.4 L953.4 362.8 L947.9 365.9 L941.9 368.7 L935.4 371.3 L928.5 373.6 L921.3 375.6 L913.8 377.2 L906.0 378.5 L898.0 379.4 L890.0 379.9 L881.8 380.1 L873.7 379.9 L865.6 379.4 L857.6 378.5 L849.9 377.2 L842.3 375.6 L835.1 373.6 L828.2 371.3 L821.8 368.7 L815.7 365.9 L810.2 362.8 L805.3 359.4 L800.9 355.8 L797.1 352.1 L794.0 348.1 L791.6 344.1 L789.8 340.0 L788.7 335.8 L788.4 331.5 L788.7 327.3 L789.8 323.1 L791.6 318.9 L794.0 314.9 L797.1 311.0 L800.9 307.2 L805.3 303.6 L810.2 300.3 L815.7 297.2 L821.8 294.3 L828.2 291.7 L835.1 289.4 L842.3 287.5 L849.9 285.9 L857.6 284.6 L865.6 283.7 L873.7 283.1 L881.8 282.9 L890.0 283.1 L898.0 283.7 L906.0 284.6 L913.8 285.9 L921.3 287.5 L928.5 289.4 L935.4 291.7 L941.9 294.3 L947.9 297.2 L953.4 300.3 L958.4 303.6 L962.7 307.2 L966.5 311.0 L969.6 314.9 L972.1 318.9 L973.8 323.1 L974.9 327.3 Z" fill="#d8960a"/>
<path d="M968.4 331.8 L968.0 336.0 L967.0 340.2 L965.2 344.2 L962.8 348.3 L959.7 352.1 L956.0 355.9 L951.7 359.4 L946.7 362.7 L941.3 365.8 L935.3 368.6 L928.9 371.2 L922.1 373.5 L914.9 375.4 L907.5 377.0 L899.8 378.3 L891.9 379.2 L883.9 379.7 L875.8 379.9 L867.7 379.7 L859.7 379.2 L851.8 378.3 L844.1 377.0 L836.7 375.4 L829.5 373.5 L822.7 371.2 L816.3 368.6 L810.3 365.8 L804.9 362.7 L799.9 359.4 L795.6 355.9 L791.9 352.1 L788.8 348.3 L786.4 344.2 L784.6 340.2 L783.6 336.0 L783.2 331.8 L783.6 327.6 L784.6 323.4 L786.4 319.4 L788.8 315.3 L791.9 311.5 L795.6 307.8 L799.9 304.2 L804.9 300.9 L810.3 297.8 L816.3 295.0 L822.7 292.4 L829.5 290.1 L836.7 288.2 L844.1 286.6 L851.8 285.3 L859.7 284.4 L867.7 283.9 L875.8 283.7 L883.9 283.9 L891.9 284.4 L899.8 285.3 L907.5 286.6 L914.9 288.2 L922.1 290.1 L928.9 292.4 L935.3 295.0 L941.3 297.8 L946.7 300.9 L951.7 304.2 L956.0 307.8 L959.7 311.5 L962.8 315.3 L965.2 319.4 L967.0 323.4 L968.0 327.6 Z" fill="#7e5802"/>
<path d="M965.5 331.9 L965.1 336.1 L964.1 340.2 L962.3 344.3 L959.9 348.3 L956.8 352.2 L953.1 355.9 L948.8 359.4 L943.9 362.7 L938.4 365.8 L932.5 368.6 L926.1 371.1 L919.3 373.4 L912.2 375.3 L904.8 376.9 L897.1 378.2 L889.2 379.1 L881.3 379.6 L873.2 379.8 L865.2 379.6 L857.2 379.1 L849.3 378.2 L841.7 376.9 L834.2 375.3 L827.1 373.4 L820.3 371.1 L813.9 368.6 L808.0 365.8 L802.6 362.7 L797.7 359.4 L793.3 355.9 L789.6 352.2 L786.5 348.3 L784.1 344.3 L782.4 340.2 L781.3 336.1 L781.0 331.9 L781.3 327.7 L782.4 323.6 L784.1 319.5 L786.5 315.5 L789.6 311.7 L793.3 308.0 L797.7 304.5 L802.6 301.1 L808.0 298.1 L813.9 295.2 L820.3 292.7 L827.1 290.4 L834.2 288.5 L841.7 286.9 L849.3 285.7 L857.2 284.8 L865.2 284.2 L873.2 284.0 L881.3 284.2 L889.2 284.8 L897.1 285.7 L904.8 286.9 L912.2 288.5 L919.3 290.4 L926.1 292.7 L932.5 295.2 L938.4 298.1 L943.9 301.1 L948.8 304.5 L953.1 308.0 L956.8 311.7 L959.9 315.5 L962.3 319.5 L964.1 323.6 L965.1 327.7 Z" fill="#d8960a"/>
<path d="M958.6 332.2 L958.3 336.3 L957.2 340.4 L955.5 344.5 L953.1 348.4 L950.0 352.2 L946.4 355.9 L942.1 359.4 L937.2 362.7 L931.8 365.7 L926.0 368.5 L919.6 371.0 L912.9 373.2 L905.8 375.2 L898.5 376.7 L890.9 378.0 L883.1 378.9 L875.2 379.4 L867.2 379.6 L859.2 379.4 L851.3 378.9 L843.5 378.0 L835.9 376.7 L828.6 375.2 L821.5 373.2 L814.8 371.0 L808.4 368.5 L802.6 365.7 L797.2 362.7 L792.3 359.4 L788.0 355.9 L784.4 352.2 L781.3 348.4 L778.9 344.5 L777.2 340.4 L776.1 336.3 L775.8 332.2 L776.1 328.1 L777.2 324.0 L778.9 319.9 L781.3 316.0 L784.4 312.2 L788.0 308.5 L792.3 305.0 L797.2 301.7 L802.6 298.7 L808.4 295.9 L814.8 293.4 L821.5 291.2 L828.6 289.2 L835.9 287.7 L843.5 286.4 L851.3 285.5 L859.2 285.0 L867.2 284.8 L875.2 285.0 L883.1 285.5 L890.9 286.4 L898.5 287.7 L905.8 289.2 L912.9 291.2 L919.6 293.4 L926.0 295.9 L931.8 298.7 L937.2 301.7 L942.1 305.0 L946.4 308.5 L950.0 312.2 L953.1 316.0 L955.5 319.9 L957.2 324.0 L958.3 328.1 Z" fill="#7e5802"/>
<path d="M955.7 332.3 L955.3 336.4 L954.3 340.5 L952.6 344.5 L950.2 348.5 L947.1 352.3 L943.5 355.9 L939.2 359.4 L934.4 362.7 L929.0 365.7 L923.1 368.5 L916.8 371.0 L910.1 373.2 L903.1 375.1 L895.8 376.7 L888.2 377.9 L880.4 378.8 L872.6 379.3 L864.6 379.5 L856.7 379.3 L848.8 378.8 L841.1 377.9 L833.5 376.7 L826.1 375.1 L819.1 373.2 L812.4 371.0 L806.1 368.5 L800.2 365.7 L794.9 362.7 L790.0 359.4 L785.8 355.9 L782.1 352.3 L779.1 348.5 L776.7 344.5 L775.0 340.5 L773.9 336.4 L773.6 332.3 L773.9 328.2 L775.0 324.1 L776.7 320.1 L779.1 316.2 L782.1 312.4 L785.8 308.7 L790.0 305.3 L794.9 302.0 L800.2 299.0 L806.1 296.2 L812.4 293.7 L819.1 291.5 L826.1 289.6 L833.5 288.0 L841.1 286.7 L848.8 285.8 L856.7 285.3 L864.6 285.1 L872.6 285.3 L880.4 285.8 L888.2 286.7 L895.8 288.0 L903.1 289.6 L910.1 291.5 L916.8 293.7 L923.1 296.2 L929.0 299.0 L934.4 302.0 L939.2 305.3 L943.5 308.7 L947.1 312.4 L950.2 316.2 L952.6 320.1 L954.3 324.1 L955.3 328.2 Z" fill="#d8960a"/>
<path d="M948.8 332.6 L948.5 336.7 L947.4 340.7 L945.7 344.7 L943.4 348.6 L940.3 352.3 L936.7 356.0 L932.5 359.4 L927.7 362.6 L922.4 365.6 L916.6 368.4 L910.3 370.9 L903.7 373.0 L896.7 374.9 L889.5 376.5 L881.9 377.7 L874.3 378.6 L866.5 379.1 L858.6 379.3 L850.7 379.1 L842.9 378.6 L835.3 377.7 L827.7 376.5 L820.5 374.9 L813.5 373.0 L806.9 370.9 L800.6 368.4 L794.8 365.6 L789.5 362.6 L784.7 359.4 L780.5 356.0 L776.9 352.3 L773.8 348.6 L771.5 344.7 L769.8 340.7 L768.7 336.7 L768.4 332.6 L768.7 328.5 L769.8 324.5 L771.5 320.5 L773.8 316.6 L776.9 312.9 L780.5 309.2 L784.7 305.8 L789.5 302.6 L794.8 299.6 L800.6 296.8 L806.9 294.3 L813.5 292.2 L820.5 290.3 L827.7 288.7 L835.3 287.5 L842.9 286.6 L850.7 286.1 L858.6 285.9 L866.5 286.1 L874.3 286.6 L881.9 287.5 L889.5 288.7 L896.7 290.3 L903.7 292.2 L910.3 294.3 L916.6 296.8 L922.4 299.6 L927.7 302.6 L932.5 305.8 L936.7 309.3 L940.3 312.9 L943.4 316.6 L945.7 320.5 L947.4 324.5 L948.5 328.5 Z" fill="#7e5802"/>
<path d="M945.9 332.7 L945.5 336.8 L944.5 340.8 L942.8 344.8 L940.4 348.6 L937.4 352.4 L933.8 356.0 L929.6 359.4 L924.8 362.6 L919.5 365.6 L913.8 368.3 L907.6 370.8 L900.9 373.0 L894.0 374.9 L886.7 376.4 L879.3 377.6 L871.6 378.5 L863.9 379.0 L856.0 379.2 L848.2 379.0 L840.4 378.5 L832.8 377.6 L825.3 376.4 L818.1 374.9 L811.1 373.0 L804.5 370.8 L798.3 368.3 L792.5 365.6 L787.2 362.6 L782.4 359.4 L778.2 356.0 L774.6 352.4 L771.6 348.6 L769.2 344.8 L767.5 340.8 L766.5 336.8 L766.2 332.7 L766.5 328.7 L767.5 324.6 L769.2 320.7 L771.6 316.8 L774.6 313.1 L778.2 309.5 L782.4 306.1 L787.2 302.8 L792.5 299.8 L798.3 297.1 L804.5 294.6 L811.1 292.5 L818.1 290.6 L825.3 289.0 L832.8 287.8 L840.4 286.9 L848.2 286.4 L856.0 286.2 L863.9 286.4 L871.6 286.9 L879.3 287.8 L886.7 289.0 L894.0 290.6 L900.9 292.5 L907.6 294.6 L913.8 297.1 L919.5 299.8 L924.8 302.8 L929.6 306.1 L933.8 309.5 L937.4 313.1 L940.4 316.8 L942.8 320.7 L944.5 324.6 L945.5 328.7 Z" fill="#d8960a"/>
<path d="M939.0 333.0 L938.7 337.0 L937.6 341.0 L936.0 344.9 L933.6 348.7 L930.7 352.4 L927.1 356.0 L922.9 359.4 L918.2 362.6 L912.9 365.5 L907.2 368.2 L901.0 370.7 L894.5 372.8 L887.6 374.7 L880.4 376.2 L873.0 377.4 L865.5 378.3 L857.8 378.8 L850.0 379.0 L842.2 378.8 L834.5 378.3 L827.0 377.4 L819.6 376.2 L812.4 374.7 L805.5 372.8 L799.0 370.7 L792.8 368.2 L787.1 365.5 L781.8 362.6 L777.1 359.4 L772.9 356.0 L769.3 352.4 L766.4 348.7 L764.0 344.9 L762.4 341.0 L761.3 337.0 L761.0 333.0 L761.3 329.0 L762.4 325.0 L764.0 321.1 L766.4 317.3 L769.3 313.6 L772.9 310.0 L777.1 306.6 L781.8 303.4 L787.1 300.5 L792.8 297.8 L799.0 295.3 L805.5 293.2 L812.4 291.3 L819.6 289.8 L827.0 288.6 L834.5 287.7 L842.2 287.2 L850.0 287.0 L857.8 287.2 L865.5 287.7 L873.0 288.6 L880.4 289.8 L887.6 291.3 L894.5 293.2 L901.0 295.3 L907.2 297.8 L912.9 300.5 L918.2 303.4 L922.9 306.6 L927.1 310.0 L930.7 313.6 L933.6 317.3 L936.0 321.1 L937.6 325.0 L938.7 329.0 Z" fill="#7e5802"/>
<path d="M936.1 333.1 L935.7 337.1 L934.7 341.1 L933.0 345.0 L930.7 348.8 L927.8 352.5 L924.2 356.0 L920.0 359.4 L915.3 362.6 L910.1 365.5 L904.4 368.2 L898.3 370.6 L891.7 372.8 L884.9 374.6 L877.7 376.1 L870.4 377.3 L862.8 378.2 L855.1 378.7 L847.4 378.9 L839.7 378.7 L832.0 378.2 L824.5 377.3 L817.1 376.1 L810.0 374.6 L803.1 372.8 L796.6 370.6 L790.4 368.2 L784.7 365.5 L779.5 362.6 L774.8 359.4 L770.7 356.0 L767.1 352.5 L764.1 348.8 L761.8 345.0 L760.1 341.1 L759.1 337.1 L758.8 333.1 L759.1 329.1 L760.1 325.2 L761.8 321.3 L764.1 317.5 L767.1 313.8 L770.7 310.2 L774.8 306.9 L779.5 303.7 L784.7 300.7 L790.4 298.0 L796.6 295.6 L803.1 293.5 L810.0 291.6 L817.1 290.1 L824.5 288.9 L832.0 288.0 L839.7 287.5 L847.4 287.3 L855.1 287.5 L862.8 288.0 L870.4 288.9 L877.7 290.1 L884.9 291.6 L891.7 293.5 L898.3 295.6 L904.4 298.0 L910.1 300.7 L915.3 303.7 L920.0 306.9 L924.2 310.2 L927.8 313.8 L930.7 317.5 L933.0 321.3 L934.7 325.2 L935.7 329.1 Z" fill="#d8960a"/>
<path d="M929.2 333.4 L928.9 337.3 L927.9 341.3 L926.2 345.1 L923.9 348.9 L921.0 352.5 L917.4 356.0 L913.3 359.4 L908.7 362.5 L903.5 365.4 L897.8 368.1 L891.8 370.5 L885.3 372.6 L878.5 374.5 L871.4 376.0 L864.1 377.2 L856.6 378.0 L849.1 378.5 L841.4 378.7 L833.7 378.5 L826.2 378.0 L818.7 377.2 L811.4 376.0 L804.3 374.5 L797.5 372.6 L791.0 370.5 L785.0 368.1 L779.3 365.4 L774.1 362.5 L769.5 359.4 L765.4 356.1 L761.8 352.5 L758.9 348.9 L756.6 345.1 L754.9 341.3 L753.9 337.3 L753.6 333.4 L753.9 329.5 L754.9 325.5 L756.6 321.7 L758.9 317.9 L761.8 314.3 L765.4 310.8 L769.5 307.4 L774.1 304.3 L779.3 301.4 L785.0 298.7 L791.0 296.3 L797.5 294.2 L804.3 292.3 L811.4 290.8 L818.7 289.6 L826.2 288.8 L833.7 288.3 L841.4 288.1 L849.1 288.3 L856.6 288.8 L864.1 289.6 L871.4 290.8 L878.5 292.3 L885.3 294.2 L891.8 296.3 L897.8 298.7 L903.5 301.4 L908.7 304.3 L913.3 307.4 L917.4 310.8 L921.0 314.3 L923.9 317.9 L926.2 321.7 L927.9 325.5 L928.9 329.5 Z" fill="#7e5802"/>
<path d="M926.3 333.5 L925.9 337.4 L924.9 341.3 L923.3 345.2 L921.0 348.9 L918.1 352.6 L914.5 356.1 L910.4 359.4 L905.8 362.5 L900.6 365.4 L895.0 368.1 L889.0 370.5 L882.5 372.6 L875.8 374.4 L868.7 375.9 L861.5 377.1 L854.0 377.9 L846.4 378.4 L838.8 378.6 L831.2 378.4 L823.6 377.9 L816.2 377.1 L808.9 375.9 L801.9 374.4 L795.1 372.6 L788.7 370.5 L782.6 368.1 L777.0 365.4 L771.8 362.5 L767.2 359.4 L763.1 356.1 L759.6 352.6 L756.7 348.9 L754.4 345.2 L752.7 341.3 L751.7 337.4 L751.4 333.5 L751.7 329.6 L752.7 325.7 L754.4 321.8 L756.7 318.1 L759.6 314.5 L763.1 311.0 L767.2 307.7 L771.8 304.5 L777.0 301.6 L782.6 299.0 L788.7 296.6 L795.1 294.5 L801.9 292.7 L808.9 291.1 L816.2 290.0 L823.6 289.1 L831.2 288.6 L838.8 288.4 L846.4 288.6 L854.0 289.1 L861.5 290.0 L868.7 291.1 L875.8 292.7 L882.5 294.5 L889.0 296.6 L895.0 299.0 L900.6 301.6 L905.8 304.5 L910.4 307.7 L914.5 311.0 L918.1 314.5 L921.0 318.1 L923.3 321.8 L924.9 325.7 L925.9 329.6 Z" fill="#d8960a"/>
<path d="M919.4 333.8 L919.1 337.7 L918.1 341.5 L916.4 345.3 L914.2 349.1 L911.3 352.6 L907.8 356.1 L903.7 359.4 L899.1 362.5 L894.0 365.3 L888.5 368.0 L882.5 370.3 L876.1 372.4 L869.4 374.2 L862.4 375.7 L855.2 376.9 L847.8 377.7 L840.3 378.2 L832.8 378.4 L825.3 378.2 L817.8 377.7 L810.4 376.9 L803.2 375.7 L796.2 374.2 L789.5 372.4 L783.1 370.3 L777.1 368.0 L771.6 365.3 L766.5 362.5 L761.9 359.4 L757.8 356.1 L754.3 352.6 L751.4 349.1 L749.2 345.3 L747.5 341.5 L746.5 337.7 L746.2 333.8 L746.5 329.9 L747.5 326.1 L749.2 322.3 L751.4 318.5 L754.3 315.0 L757.8 311.5 L761.9 308.2 L766.5 305.1 L771.6 302.3 L777.1 299.6 L783.1 297.3 L789.5 295.2 L796.2 293.4 L803.2 291.9 L810.4 290.7 L817.8 289.9 L825.3 289.4 L832.8 289.2 L840.3 289.4 L847.8 289.9 L855.2 290.7 L862.4 291.9 L869.4 293.4 L876.1 295.2 L882.5 297.3 L888.5 299.6 L894.0 302.3 L899.1 305.1 L903.7 308.2 L907.8 311.5 L911.3 315.0 L914.2 318.5 L916.4 322.3 L918.1 326.1 L919.1 329.9 Z" fill="#7e5802"/>
<path d="M916.5 333.9 L916.1 337.8 L915.1 341.6 L913.5 345.4 L911.3 349.1 L908.4 352.7 L904.9 356.1 L900.9 359.4 L896.3 362.5 L891.2 365.3 L885.7 367.9 L879.7 370.3 L873.3 372.4 L866.7 374.2 L859.7 375.6 L852.5 376.8 L845.2 377.6 L837.7 378.1 L830.2 378.3 L822.7 378.1 L815.2 377.6 L807.9 376.8 L800.7 375.6 L793.8 374.2 L787.1 372.4 L780.8 370.3 L774.8 367.9 L769.2 365.3 L764.2 362.5 L759.6 359.4 L755.5 356.1 L752.1 352.7 L749.2 349.1 L746.9 345.4 L745.3 341.6 L744.3 337.8 L744.0 333.9 L744.3 330.1 L745.3 326.2 L746.9 322.4 L749.2 318.7 L752.1 315.2 L755.5 311.7 L759.6 308.5 L764.2 305.4 L769.2 302.5 L774.8 299.9 L780.8 297.6 L787.1 295.5 L793.8 293.7 L800.7 292.2 L807.9 291.0 L815.2 290.2 L822.7 289.7 L830.2 289.5 L837.7 289.7 L845.2 290.2 L852.5 291.0 L859.7 292.2 L866.7 293.7 L873.3 295.5 L879.7 297.6 L885.7 299.9 L891.2 302.5 L896.3 305.4 L900.9 308.5 L904.9 311.7 L908.4 315.2 L911.3 318.7 L913.5 322.4 L915.1 326.2 L916.1 330.1 Z" fill="#d8960a"/>
<path d="M909.6 334.2 L909.3 338.0 L908.3 341.8 L906.7 345.6 L904.4 349.2 L901.6 352.8 L898.2 356.1 L894.2 359.4 L889.6 362.4 L884.6 365.2 L879.1 367.8 L873.2 370.2 L866.9 372.2 L860.3 374.0 L853.4 375.5 L846.3 376.6 L839.0 377.4 L831.6 377.9 L824.2 378.1 L816.8 377.9 L809.4 377.4 L802.1 376.6 L795.0 375.5 L788.1 374.0 L781.5 372.2 L775.2 370.2 L769.3 367.8 L763.8 365.2 L758.8 362.4 L754.2 359.4 L750.2 356.1 L746.8 352.8 L744.0 349.2 L741.7 345.6 L740.1 341.8 L739.1 338.0 L738.8 334.2 L739.1 330.4 L740.1 326.6 L741.7 322.8 L744.0 319.2 L746.8 315.6 L750.2 312.2 L754.2 309.0 L758.8 306.0 L763.8 303.2 L769.3 300.6 L775.2 298.2 L781.5 296.2 L788.1 294.4 L795.0 292.9 L802.1 291.8 L809.4 291.0 L816.8 290.5 L824.2 290.3 L831.6 290.5 L839.0 291.0 L846.3 291.8 L853.4 292.9 L860.3 294.4 L866.9 296.2 L873.2 298.2 L879.1 300.6 L884.6 303.2 L889.6 306.0 L894.2 309.0 L898.2 312.2 L901.6 315.6 L904.4 319.2 L906.7 322.8 L908.3 326.6 L909.3 330.4 Z" fill="#7e5802"/>
<path d="M906.7 334.3 L906.3 338.1 L905.4 341.9 L903.8 345.6 L901.5 349.3 L898.7 352.8 L895.3 356.2 L891.3 359.4 L886.8 362.4 L881.8 365.2 L876.3 367.8 L870.4 370.1 L864.1 372.2 L857.6 373.9 L850.7 375.4 L843.6 376.5 L836.4 377.3 L829.0 377.8 L821.6 378.0 L814.2 377.8 L806.9 377.3 L799.6 376.5 L792.5 375.4 L785.7 373.9 L779.1 372.2 L772.8 370.1 L767.0 367.8 L761.5 365.2 L756.5 362.4 L752.0 359.4 L748.0 356.2 L744.5 352.8 L741.7 349.3 L739.5 345.6 L737.9 341.9 L736.9 338.1 L736.6 334.3 L736.9 330.5 L737.9 326.7 L739.5 323.0 L741.7 319.4 L744.5 315.9 L748.0 312.5 L752.0 309.3 L756.5 306.2 L761.5 303.4 L767.0 300.9 L772.8 298.5 L779.1 296.5 L785.7 294.7 L792.5 293.3 L799.6 292.1 L806.9 291.3 L814.2 290.8 L821.6 290.6 L829.0 290.8 L836.4 291.3 L843.6 292.1 L850.7 293.3 L857.6 294.7 L864.1 296.5 L870.4 298.5 L876.3 300.9 L881.8 303.4 L886.8 306.2 L891.3 309.3 L895.3 312.5 L898.7 315.9 L901.5 319.4 L903.8 323.0 L905.4 326.7 L906.3 330.5 Z" fill="#d8960a"/>
<path d="M899.8 334.6 L899.5 338.4 L898.5 342.1 L896.9 345.8 L894.7 349.4 L891.9 352.9 L888.5 356.2 L884.6 359.4 L880.1 362.4 L875.1 365.1 L869.7 367.7 L863.9 370.0 L857.7 372.0 L851.2 373.8 L844.4 375.2 L837.4 376.3 L830.2 377.1 L822.9 377.6 L815.6 377.8 L808.3 377.6 L801.0 377.1 L793.8 376.3 L786.8 375.2 L780.0 373.8 L773.5 372.0 L767.3 370.0 L761.5 367.7 L756.1 365.1 L751.1 362.4 L746.6 359.4 L742.7 356.2 L739.3 352.9 L736.5 349.4 L734.3 345.8 L732.7 342.1 L731.7 338.4 L731.4 334.6 L731.7 330.8 L732.7 327.1 L734.3 323.4 L736.5 319.8 L739.3 316.3 L742.7 313.0 L746.6 309.8 L751.1 306.8 L756.1 304.1 L761.5 301.5 L767.3 299.2 L773.5 297.2 L780.0 295.4 L786.8 294.0 L793.8 292.9 L801.0 292.1 L808.3 291.6 L815.6 291.4 L822.9 291.6 L830.2 292.1 L837.4 292.9 L844.4 294.0 L851.2 295.4 L857.7 297.2 L863.9 299.2 L869.7 301.5 L875.1 304.1 L880.1 306.8 L884.6 309.8 L888.5 313.0 L891.9 316.3 L894.7 319.8 L896.9 323.4 L898.5 327.1 L899.5 330.8 Z" fill="#7e5802"/>
<path d="M896.9 334.7 L896.5 338.5 L895.6 342.2 L894.0 345.8 L891.8 349.4 L889.0 352.9 L885.6 356.2 L881.7 359.4 L877.2 362.4 L872.3 365.1 L866.9 367.7 L861.1 369.9 L854.9 372.0 L848.5 373.7 L841.7 375.1 L834.7 376.2 L827.6 377.1 L820.3 377.5 L813.0 377.7 L805.7 377.5 L798.5 377.1 L791.3 376.2 L784.3 375.1 L777.6 373.7 L771.1 372.0 L764.9 369.9 L759.1 367.7 L753.7 365.1 L748.8 362.4 L744.3 359.4 L740.4 356.2 L737.0 352.9 L734.2 349.4 L732.0 345.8 L730.5 342.2 L729.5 338.5 L729.2 334.7 L729.5 331.0 L730.5 327.3 L732.0 323.6 L734.2 320.0 L737.0 316.6 L740.4 313.2 L744.3 310.1 L748.8 307.1 L753.7 304.3 L759.1 301.8 L764.9 299.5 L771.1 297.5 L777.6 295.8 L784.3 294.3 L791.3 293.2 L798.5 292.4 L805.7 291.9 L813.0 291.7 L820.3 291.9 L827.6 292.4 L834.7 293.2 L841.7 294.3 L848.5 295.8 L854.9 297.5 L861.1 299.5 L866.9 301.8 L872.3 304.3 L877.2 307.1 L881.7 310.1 L885.6 313.2 L889.0 316.6 L891.8 320.0 L894.0 323.6 L895.6 327.3 L896.5 331.0 Z" fill="#d8960a"/>
<path d="M890.0 335.0 L889.7 338.7 L888.7 342.4 L887.2 346.0 L885.0 349.5 L882.2 353.0 L878.9 356.2 L875.0 359.4 L870.6 362.3 L865.7 365.1 L860.4 367.6 L854.6 369.8 L848.5 371.8 L842.1 373.5 L835.4 374.9 L828.5 376.1 L821.4 376.9 L814.2 377.3 L807.0 377.5 L799.8 377.3 L792.6 376.9 L785.5 376.1 L778.6 374.9 L771.9 373.5 L765.5 371.8 L759.4 369.8 L753.6 367.6 L748.3 365.1 L743.4 362.3 L739.0 359.4 L735.1 356.2 L731.8 353.0 L729.0 349.5 L726.8 346.0 L725.3 342.4 L724.3 338.7 L724.0 335.0 L724.3 331.3 L725.3 327.6 L726.8 324.0 L729.0 320.5 L731.8 317.0 L735.1 313.8 L739.0 310.6 L743.4 307.7 L748.3 304.9 L753.6 302.4 L759.4 300.2 L765.5 298.2 L771.9 296.5 L778.6 295.1 L785.5 293.9 L792.6 293.1 L799.8 292.7 L807.0 292.5 L814.2 292.7 L821.4 293.1 L828.5 293.9 L835.4 295.1 L842.1 296.5 L848.5 298.2 L854.6 300.2 L860.4 302.4 L865.7 304.9 L870.6 307.7 L875.0 310.6 L878.9 313.8 L882.2 317.0 L885.0 320.5 L887.2 324.0 L888.7 327.6 L889.7 331.3 Z" fill="#7e5802"/>
<path d="M887.1 335.1 L886.7 338.8 L885.8 342.5 L884.2 346.1 L882.1 349.6 L879.3 353.0 L876.0 356.3 L872.1 359.4 L867.7 362.3 L862.9 365.0 L857.5 367.5 L851.8 369.8 L845.7 371.7 L839.3 373.4 L832.7 374.9 L825.8 376.0 L818.8 376.8 L811.6 377.2 L804.4 377.4 L797.2 377.2 L790.1 376.8 L783.0 376.0 L776.2 374.9 L769.5 373.4 L763.1 371.7 L757.0 369.8 L751.3 367.5 L746.0 365.0 L741.1 362.3 L736.7 359.4 L732.9 356.3 L729.5 353.0 L726.8 349.6 L724.6 346.1 L723.0 342.5 L722.1 338.8 L721.8 335.1 L722.1 331.4 L723.0 327.8 L724.6 324.2 L726.8 320.7 L729.5 317.2 L732.9 314.0 L736.7 310.9 L741.1 307.9 L746.0 305.2 L751.3 302.7 L757.0 300.5 L763.1 298.5 L769.5 296.8 L776.2 295.4 L783.0 294.3 L790.1 293.5 L797.2 293.0 L804.4 292.8 L811.6 293.0 L818.8 293.5 L825.8 294.3 L832.7 295.4 L839.3 296.8 L845.7 298.5 L851.8 300.5 L857.5 302.7 L862.9 305.2 L867.7 307.9 L872.1 310.9 L876.0 314.0 L879.3 317.2 L882.1 320.7 L884.2 324.2 L885.8 327.8 L886.7 331.4 Z" fill="#d8960a"/>
<path d="M880.2 335.4 L879.9 339.0 L879.0 342.7 L877.4 346.2 L875.3 349.7 L872.5 353.1 L869.2 356.3 L865.4 359.4 L861.1 362.3 L856.2 365.0 L851.0 367.4 L845.3 369.6 L839.3 371.6 L833.0 373.3 L826.4 374.7 L819.6 375.8 L812.6 376.6 L805.5 377.0 L798.4 377.2 L791.3 377.0 L784.2 376.6 L777.2 375.8 L770.4 374.7 L763.8 373.3 L757.5 371.6 L751.5 369.6 L745.8 367.4 L740.6 365.0 L735.7 362.3 L731.4 359.4 L727.6 356.3 L724.3 353.1 L721.5 349.7 L719.4 346.2 L717.8 342.7 L716.9 339.0 L716.6 335.4 L716.9 331.8 L717.8 328.1 L719.4 324.6 L721.5 321.1 L724.3 317.7 L727.6 314.5 L731.4 311.4 L735.7 308.5 L740.6 305.8 L745.8 303.4 L751.5 301.2 L757.5 299.2 L763.8 297.5 L770.4 296.1 L777.2 295.0 L784.2 294.2 L791.3 293.8 L798.4 293.6 L805.5 293.8 L812.6 294.2 L819.6 295.0 L826.4 296.1 L833.0 297.5 L839.3 299.2 L845.3 301.2 L851.0 303.4 L856.2 305.8 L861.1 308.5 L865.4 311.4 L869.2 314.5 L872.5 317.7 L875.3 321.1 L877.4 324.6 L879.0 328.1 L879.9 331.8 Z" fill="#7e5802"/>
<path d="M877.3 335.5 L877.0 339.1 L876.0 342.7 L874.5 346.3 L872.3 349.7 L869.6 353.1 L866.3 356.3 L862.5 359.4 L858.2 362.3 L853.4 364.9 L848.2 367.4 L842.5 369.6 L836.5 371.5 L830.2 373.2 L823.7 374.6 L816.9 375.7 L810.0 376.5 L802.9 377.0 L795.8 377.1 L788.7 377.0 L781.7 376.5 L774.7 375.7 L768.0 374.6 L761.4 373.2 L755.1 371.5 L749.1 369.6 L743.5 367.4 L738.2 364.9 L733.4 362.3 L729.1 359.4 L725.3 356.3 L722.0 353.1 L719.3 349.7 L717.2 346.3 L715.6 342.7 L714.7 339.1 L714.4 335.5 L714.7 331.9 L715.6 328.3 L717.2 324.8 L719.3 321.3 L722.0 317.9 L725.3 314.7 L729.1 311.7 L733.4 308.8 L738.2 306.1 L743.5 303.7 L749.1 301.5 L755.1 299.5 L761.4 297.8 L768.0 296.4 L774.7 295.3 L781.7 294.6 L788.7 294.1 L795.8 293.9 L802.9 294.1 L810.0 294.6 L816.9 295.3 L823.7 296.4 L830.2 297.8 L836.5 299.5 L842.5 301.5 L848.2 303.7 L853.4 306.1 L858.2 308.8 L862.5 311.7 L866.3 314.7 L869.6 317.9 L872.3 321.3 L874.5 324.8 L876.0 328.3 L877.0 331.9 Z" fill="#d8960a"/>
<path d="M870.4 335.8 L870.1 339.4 L869.2 342.9 L867.7 346.4 L865.5 349.9 L862.8 353.2 L859.6 356.4 L855.8 359.4 L851.5 362.2 L846.8 364.9 L841.6 367.3 L836.0 369.5 L830.1 371.4 L823.9 373.0 L817.4 374.4 L810.7 375.5 L803.8 376.3 L796.8 376.7 L789.8 376.9 L782.8 376.7 L775.8 376.3 L768.9 375.5 L762.2 374.4 L755.7 373.0 L749.5 371.4 L743.6 369.5 L738.0 367.3 L732.8 364.9 L728.1 362.2 L723.8 359.4 L720.0 356.4 L716.8 353.2 L714.1 349.9 L711.9 346.4 L710.4 342.9 L709.5 339.4 L709.2 335.8 L709.5 332.2 L710.4 328.7 L711.9 325.2 L714.1 321.7 L716.8 318.4 L720.0 315.2 L723.8 312.2 L728.1 309.4 L732.8 306.7 L738.0 304.3 L743.6 302.1 L749.5 300.2 L755.7 298.6 L762.2 297.2 L768.9 296.1 L775.8 295.3 L782.8 294.9 L789.8 294.7 L796.8 294.9 L803.8 295.3 L810.7 296.1 L817.4 297.2 L823.9 298.6 L830.1 300.2 L836.0 302.1 L841.6 304.3 L846.8 306.7 L851.5 309.4 L855.8 312.2 L859.6 315.2 L862.8 318.4 L865.5 321.7 L867.7 325.2 L869.2 328.7 L870.1 332.2 Z" fill="#7e5802"/>
<path d="M867.5 335.9 L867.2 339.5 L866.2 343.0 L864.7 346.5 L862.6 349.9 L859.9 353.2 L856.7 356.4 L852.9 359.4 L848.7 362.2 L844.0 364.8 L838.8 367.2 L833.2 369.4 L827.3 371.3 L821.1 373.0 L814.7 374.3 L808.0 375.4 L801.2 376.2 L794.2 376.7 L787.2 376.8 L780.2 376.7 L773.3 376.2 L766.5 375.4 L759.8 374.3 L753.3 373.0 L747.1 371.3 L741.2 369.4 L735.6 367.2 L730.5 364.8 L725.8 362.2 L721.5 359.4 L717.7 356.4 L714.5 353.2 L711.8 349.9 L709.7 346.5 L708.2 343.0 L707.3 339.5 L707.0 335.9 L707.3 332.4 L708.2 328.8 L709.7 325.3 L711.8 321.9 L714.5 318.6 L717.7 315.5 L721.5 312.5 L725.8 309.6 L730.5 307.0 L735.6 304.6 L741.2 302.4 L747.1 300.5 L753.3 298.9 L759.8 297.5 L766.5 296.4 L773.3 295.7 L780.2 295.2 L787.2 295.0 L794.2 295.2 L801.2 295.7 L808.0 296.4 L814.7 297.5 L821.1 298.9 L827.3 300.5 L833.2 302.4 L838.8 304.6 L844.0 307.0 L848.7 309.6 L852.9 312.5 L856.7 315.5 L859.9 318.6 L862.6 321.9 L864.7 325.3 L866.2 328.8 L867.2 332.4 Z" fill="#d8960a"/>
<path d="M860.6 336.2 L860.3 339.7 L859.4 343.2 L857.9 346.7 L855.8 350.0 L853.2 353.3 L850.0 356.4 L846.2 359.4 L842.0 362.2 L837.3 364.8 L832.2 367.1 L826.7 369.3 L820.9 371.2 L814.8 372.8 L808.4 374.2 L801.8 375.2 L795.0 376.0 L788.1 376.4 L781.2 376.6 L774.3 376.4 L767.4 376.0 L760.6 375.2 L754.0 374.2 L747.6 372.8 L741.5 371.2 L735.7 369.3 L730.2 367.1 L725.1 364.8 L720.4 362.2 L716.2 359.4 L712.4 356.4 L709.2 353.3 L706.6 350.0 L704.5 346.7 L703.0 343.2 L702.1 339.7 L701.8 336.2 L702.1 332.7 L703.0 329.2 L704.5 325.7 L706.6 322.4 L709.2 319.1 L712.4 316.0 L716.2 313.0 L720.4 310.2 L725.1 307.6 L730.2 305.3 L735.7 303.1 L741.5 301.2 L747.6 299.6 L754.0 298.2 L760.6 297.2 L767.4 296.4 L774.3 296.0 L781.2 295.8 L788.1 296.0 L795.0 296.4 L801.8 297.2 L808.4 298.2 L814.8 299.6 L820.9 301.2 L826.7 303.1 L832.2 305.3 L837.3 307.6 L842.0 310.2 L846.2 313.0 L850.0 316.0 L853.2 319.1 L855.8 322.4 L857.9 325.7 L859.4 329.2 L860.3 332.7 Z" fill="#7e5802"/>
<path d="M857.7 336.3 L857.4 339.8 L856.5 343.3 L855.0 346.7 L852.9 350.1 L850.3 353.3 L847.1 356.4 L843.4 359.4 L839.2 362.2 L834.5 364.7 L829.4 367.1 L824.0 369.2 L818.1 371.1 L812.0 372.7 L805.7 374.1 L799.1 375.1 L792.3 375.9 L785.5 376.4 L778.6 376.5 L771.7 376.4 L764.9 375.9 L758.2 375.1 L751.6 374.1 L745.2 372.7 L739.1 371.1 L733.3 369.2 L727.8 367.1 L722.7 364.7 L718.1 362.2 L713.9 359.4 L710.2 356.4 L707.0 353.3 L704.3 350.1 L702.3 346.7 L700.8 343.3 L699.9 339.8 L699.6 336.3 L699.9 332.8 L700.8 329.3 L702.3 325.9 L704.3 322.6 L707.0 319.3 L710.2 316.2 L713.9 313.3 L718.1 310.5 L722.7 307.9 L727.8 305.5 L733.3 303.4 L739.1 301.5 L745.2 299.9 L751.6 298.6 L758.2 297.5 L764.9 296.7 L771.7 296.3 L778.6 296.1 L785.5 296.3 L792.3 296.7 L799.1 297.5 L805.7 298.6 L812.0 299.9 L818.1 301.5 L824.0 303.4 L829.4 305.5 L834.5 307.9 L839.2 310.5 L843.4 313.3 L847.1 316.2 L850.3 319.3 L852.9 322.6 L855.0 325.9 L856.5 329.3 L857.4 332.8 Z" fill="#d8960a"/>
<path d="M850.8 336.6 L850.5 340.1 L849.6 343.5 L848.1 346.9 L846.1 350.2 L843.5 353.4 L840.3 356.5 L836.7 359.4 L832.5 362.1 L827.9 364.7 L822.9 367.0 L817.5 369.1 L811.7 371.0 L805.6 372.6 L799.3 373.9 L792.8 374.9 L786.2 375.7 L779.4 376.1 L772.6 376.3 L765.8 376.1 L759.0 375.7 L752.4 374.9 L745.9 373.9 L739.6 372.6 L733.5 371.0 L727.7 369.1 L722.3 367.0 L717.3 364.7 L712.7 362.1 L708.5 359.4 L704.9 356.5 L701.7 353.4 L699.1 350.2 L697.1 346.9 L695.6 343.5 L694.7 340.1 L694.4 336.6 L694.7 333.1 L695.6 329.7 L697.1 326.3 L699.1 323.0 L701.7 319.8 L704.9 316.8 L708.5 313.8 L712.7 311.1 L717.3 308.5 L722.3 306.2 L727.7 304.1 L733.5 302.2 L739.6 300.6 L745.9 299.3 L752.4 298.3 L759.0 297.5 L765.8 297.1 L772.6 296.9 L779.4 297.1 L786.2 297.5 L792.8 298.3 L799.3 299.3 L805.6 300.6 L811.7 302.2 L817.5 304.1 L822.9 306.2 L827.9 308.5 L832.5 311.1 L836.7 313.8 L840.3 316.8 L843.5 319.8 L846.1 323.0 L848.1 326.3 L849.6 329.7 L850.5 333.1 Z" fill="#7e5802"/>
<path d="M847.9 336.7 L847.6 340.2 L846.7 343.6 L845.2 346.9 L843.2 350.2 L840.6 353.4 L837.4 356.5 L833.8 359.4 L829.6 362.1 L825.1 364.6 L820.1 367.0 L814.7 369.1 L808.9 370.9 L802.9 372.5 L796.6 373.8 L790.2 374.9 L783.5 375.6 L776.8 376.1 L770.0 376.2 L763.2 376.1 L756.5 375.6 L749.9 374.9 L743.4 373.8 L737.1 372.5 L731.1 370.9 L725.4 369.1 L720.0 367.0 L715.0 364.6 L710.4 362.1 L706.3 359.4 L702.6 356.5 L699.5 353.4 L696.9 350.2 L694.8 346.9 L693.4 343.6 L692.5 340.2 L692.2 336.7 L692.5 333.3 L693.4 329.9 L694.8 326.5 L696.9 323.2 L699.5 320.0 L702.6 317.0 L706.3 314.1 L710.4 311.3 L715.0 308.8 L720.0 306.5 L725.4 304.4 L731.1 302.5 L737.1 300.9 L743.4 299.6 L749.9 298.6 L756.5 297.8 L763.2 297.4 L770.0 297.2 L776.8 297.4 L783.5 297.8 L790.2 298.6 L796.6 299.6 L802.9 300.9 L808.9 302.5 L814.7 304.4 L820.1 306.5 L825.1 308.8 L829.6 311.3 L833.8 314.1 L837.4 317.0 L840.6 320.0 L843.2 323.2 L845.2 326.5 L846.7 329.9 L847.6 333.3 Z" fill="#d8960a"/>
<path d="M841.0 337.0 L840.7 340.4 L839.8 343.8 L838.4 347.1 L836.4 350.3 L833.8 353.5 L830.7 356.5 L827.1 359.4 L823.0 362.1 L818.4 364.6 L813.5 366.9 L808.2 368.9 L802.5 370.8 L796.5 372.3 L790.3 373.6 L783.9 374.7 L777.4 375.4 L770.7 375.9 L764.0 376.0 L757.3 375.9 L750.6 375.4 L744.1 374.7 L737.7 373.6 L731.5 372.3 L725.5 370.8 L719.8 368.9 L714.5 366.9 L709.6 364.6 L705.0 362.1 L700.9 359.4 L697.3 356.5 L694.2 353.5 L691.6 350.3 L689.6 347.1 L688.2 343.8 L687.3 340.4 L687.0 337.0 L687.3 333.6 L688.2 330.2 L689.6 326.9 L691.6 323.7 L694.2 320.5 L697.3 317.5 L700.9 314.6 L705.0 311.9 L709.6 309.4 L714.5 307.1 L719.8 305.1 L725.5 303.2 L731.5 301.7 L737.7 300.4 L744.1 299.3 L750.6 298.6 L757.3 298.1 L764.0 298.0 L770.7 298.1 L777.4 298.6 L783.9 299.3 L790.3 300.4 L796.5 301.7 L802.5 303.2 L808.2 305.1 L813.5 307.1 L818.4 309.4 L823.0 311.9 L827.1 314.6 L830.7 317.5 L833.8 320.5 L836.4 323.7 L838.4 326.9 L839.8 330.2 L840.7 333.6 Z" fill="#7e5802"/>
<path d="M838.1 337.1 L837.8 340.5 L836.9 343.9 L835.4 347.2 L833.4 350.4 L830.9 353.5 L827.8 356.5 L824.2 359.4 L820.1 362.1 L815.6 364.5 L810.7 366.8 L805.4 368.9 L799.7 370.7 L793.8 372.3 L787.6 373.6 L781.3 374.6 L774.7 375.3 L768.1 375.8 L761.4 375.9 L754.7 375.8 L748.1 375.3 L741.6 374.6 L735.2 373.6 L729.0 372.3 L723.1 370.7 L717.5 368.9 L712.2 366.8 L707.2 364.5 L702.7 362.1 L698.6 359.4 L695.0 356.5 L692.0 353.5 L689.4 350.4 L687.4 347.2 L685.9 343.9 L685.1 340.5 L684.8 337.1 L685.1 333.7 L685.9 330.4 L687.4 327.1 L689.4 323.9 L692.0 320.7 L695.0 317.7 L698.6 314.9 L702.7 312.2 L707.2 309.7 L712.2 307.4 L717.5 305.3 L723.1 303.5 L729.0 302.0 L735.2 300.7 L741.6 299.7 L748.1 298.9 L754.7 298.5 L761.4 298.3 L768.1 298.5 L774.7 298.9 L781.3 299.7 L787.6 300.7 L793.8 302.0 L799.7 303.5 L805.4 305.3 L810.7 307.4 L815.6 309.7 L820.1 312.2 L824.2 314.9 L827.8 317.7 L830.9 320.7 L833.4 323.9 L835.4 327.1 L836.9 330.4 L837.8 333.7 Z" fill="#d8960a"/>
<path d="M831.2 337.4 L830.9 340.7 L830.0 344.1 L828.6 347.3 L826.6 350.5 L824.1 353.6 L821.0 356.5 L817.5 359.4 L813.5 362.0 L809.0 364.5 L804.1 366.7 L798.9 368.8 L793.3 370.6 L787.4 372.1 L781.3 373.4 L775.0 374.4 L768.6 375.1 L762.0 375.6 L755.4 375.7 L748.8 375.6 L742.2 375.1 L735.8 374.4 L729.5 373.4 L723.4 372.1 L717.5 370.6 L711.9 368.8 L706.7 366.7 L701.8 364.5 L697.3 362.0 L693.3 359.4 L689.8 356.6 L686.7 353.6 L684.2 350.5 L682.2 347.3 L680.8 344.1 L679.9 340.7 L679.6 337.4 L679.9 334.1 L680.8 330.7 L682.2 327.5 L684.2 324.3 L686.7 321.2 L689.8 318.2 L693.3 315.4 L697.3 312.8 L701.8 310.3 L706.7 308.1 L711.9 306.0 L717.5 304.2 L723.4 302.7 L729.5 301.4 L735.8 300.4 L742.2 299.7 L748.8 299.2 L755.4 299.1 L762.0 299.2 L768.6 299.7 L775.0 300.4 L781.3 301.4 L787.4 302.7 L793.3 304.2 L798.9 306.0 L804.1 308.1 L809.0 310.3 L813.5 312.8 L817.5 315.4 L821.0 318.2 L824.1 321.2 L826.6 324.3 L828.6 327.5 L830.0 330.7 L830.9 334.1 Z" fill="#7e5802"/>
<path d="M828.3 337.5 L828.0 340.8 L827.1 344.1 L825.7 347.4 L823.7 350.5 L821.2 353.6 L818.2 356.6 L814.6 359.4 L810.6 362.0 L806.2 364.5 L801.3 366.7 L796.1 368.7 L790.5 370.5 L784.7 372.0 L778.6 373.3 L772.3 374.3 L765.9 375.0 L759.4 375.5 L752.8 375.6 L746.2 375.5 L739.7 375.0 L733.3 374.3 L727.0 373.3 L720.9 372.0 L715.1 370.5 L709.5 368.7 L704.3 366.7 L699.5 364.5 L695.0 362.0 L691.0 359.4 L687.5 356.6 L684.4 353.6 L681.9 350.5 L680.0 347.4 L678.5 344.1 L677.7 340.8 L677.4 337.5 L677.7 334.2 L678.5 330.9 L680.0 327.7 L681.9 324.5 L684.4 321.4 L687.5 318.5 L691.0 315.7 L695.0 313.0 L699.5 310.6 L704.3 308.3 L709.5 306.3 L715.1 304.5 L720.9 303.0 L727.0 301.7 L733.3 300.7 L739.7 300.0 L746.2 299.6 L752.8 299.4 L759.4 299.6 L765.9 300.0 L772.3 300.7 L778.6 301.7 L784.7 303.0 L790.5 304.5 L796.1 306.3 L801.3 308.3 L806.2 310.6 L810.6 313.0 L814.6 315.7 L818.2 318.5 L821.2 321.4 L823.7 324.5 L825.7 327.7 L827.1 330.9 L828.0 334.2 Z" fill="#d8960a"/>
<path d="M821.4 337.8 L821.1 341.1 L820.3 344.3 L818.9 347.5 L816.9 350.7 L814.4 353.7 L811.4 356.6 L807.9 359.4 L803.9 362.0 L799.6 364.4 L794.8 366.6 L789.6 368.6 L784.1 370.4 L778.3 371.9 L772.3 373.1 L766.1 374.1 L759.8 374.8 L753.3 375.3 L746.8 375.4 L740.3 375.3 L733.8 374.8 L727.5 374.1 L721.3 373.1 L715.3 371.9 L709.5 370.4 L704.0 368.6 L698.8 366.6 L694.0 364.4 L689.7 362.0 L685.7 359.4 L682.2 356.6 L679.2 353.7 L676.7 350.7 L674.7 347.5 L673.3 344.3 L672.5 341.1 L672.2 337.8 L672.5 334.5 L673.3 331.3 L674.7 328.1 L676.7 324.9 L679.2 321.9 L682.2 319.0 L685.7 316.2 L689.7 313.6 L694.0 311.2 L698.8 309.0 L704.0 307.0 L709.5 305.2 L715.3 303.7 L721.3 302.5 L727.5 301.5 L733.8 300.8 L740.3 300.3 L746.8 300.2 L753.3 300.3 L759.8 300.8 L766.1 301.5 L772.3 302.5 L778.3 303.7 L784.1 305.2 L789.6 307.0 L794.8 309.0 L799.6 311.2 L803.9 313.6 L807.9 316.2 L811.4 319.0 L814.4 321.9 L816.9 324.9 L818.9 328.1 L820.3 331.3 L821.1 334.5 Z" fill="#7e5802"/>
<path d="M818.5 337.9 L818.2 341.2 L817.3 344.4 L815.9 347.6 L814.0 350.7 L811.5 353.7 L808.5 356.6 L805.0 359.4 L801.1 362.0 L796.7 364.4 L791.9 366.6 L786.8 368.5 L781.3 370.3 L775.6 371.8 L769.6 373.1 L763.4 374.0 L757.1 374.7 L750.7 375.2 L744.2 375.3 L737.7 375.2 L731.3 374.7 L725.0 374.0 L718.8 373.1 L712.8 371.8 L707.1 370.3 L701.6 368.5 L696.5 366.6 L691.7 364.4 L687.3 362.0 L683.4 359.4 L679.9 356.6 L676.9 353.7 L674.5 350.7 L672.5 347.6 L671.1 344.4 L670.3 341.2 L670.0 337.9 L670.3 334.7 L671.1 331.4 L672.5 328.2 L674.5 325.1 L676.9 322.1 L679.9 319.2 L683.4 316.5 L687.3 313.9 L691.7 311.5 L696.5 309.3 L701.6 307.3 L707.1 305.5 L712.8 304.0 L718.8 302.8 L725.0 301.8 L731.3 301.1 L737.7 300.7 L744.2 300.5 L750.7 300.7 L757.1 301.1 L763.4 301.8 L769.6 302.8 L775.6 304.0 L781.3 305.5 L786.8 307.3 L791.9 309.3 L796.7 311.5 L801.1 313.9 L805.0 316.5 L808.5 319.2 L811.5 322.1 L814.0 325.1 L815.9 328.2 L817.3 331.4 L818.2 334.7 Z" fill="#d8960a"/>
<path d="M811.6 338.2 L811.3 341.4 L810.5 344.6 L809.1 347.8 L807.2 350.8 L804.7 353.8 L801.8 356.6 L798.3 359.4 L794.4 361.9 L790.1 364.3 L785.4 366.5 L780.3 368.4 L774.9 370.2 L769.2 371.6 L763.3 372.9 L757.2 373.8 L750.9 374.5 L744.6 375.0 L738.2 375.1 L731.8 375.0 L725.5 374.5 L719.2 373.8 L713.1 372.9 L707.2 371.6 L701.5 370.2 L696.1 368.4 L691.0 366.5 L686.3 364.3 L682.0 361.9 L678.1 359.4 L674.6 356.6 L671.7 353.8 L669.2 350.8 L667.3 347.8 L665.9 344.6 L665.1 341.4 L664.8 338.2 L665.1 335.0 L665.9 331.8 L667.3 328.6 L669.2 325.6 L671.7 322.6 L674.6 319.8 L678.1 317.0 L682.0 314.5 L686.3 312.1 L691.0 309.9 L696.1 308.0 L701.5 306.2 L707.2 304.8 L713.1 303.5 L719.2 302.6 L725.5 301.9 L731.8 301.4 L738.2 301.3 L744.6 301.4 L750.9 301.9 L757.2 302.6 L763.3 303.5 L769.2 304.8 L774.9 306.2 L780.3 308.0 L785.4 309.9 L790.1 312.1 L794.4 314.5 L798.3 317.0 L801.8 319.8 L804.7 322.6 L807.2 325.6 L809.1 328.6 L810.5 331.8 L811.3 335.0 Z" fill="#7e5802"/>
<path d="M808.7 338.3 L808.4 341.5 L807.6 344.7 L806.2 347.8 L804.3 350.9 L801.8 353.8 L798.9 356.7 L795.5 359.4 L791.6 361.9 L787.3 364.3 L782.6 366.4 L777.5 368.4 L772.1 370.1 L766.5 371.6 L760.6 372.8 L754.5 373.8 L748.3 374.5 L742.0 374.9 L735.6 375.0 L729.3 374.9 L722.9 374.5 L716.7 373.8 L710.6 372.8 L704.8 371.6 L699.1 370.1 L693.7 368.4 L688.7 366.4 L684.0 364.3 L679.7 361.9 L675.8 359.4 L672.4 356.7 L669.4 353.8 L667.0 350.9 L665.1 347.8 L663.7 344.7 L662.9 341.5 L662.6 338.3 L662.9 335.1 L663.7 331.9 L665.1 328.8 L667.0 325.8 L669.4 322.8 L672.4 320.0 L675.8 317.3 L679.7 314.7 L684.0 312.4 L688.7 310.2 L693.7 308.3 L699.1 306.5 L704.8 305.1 L710.6 303.8 L716.7 302.9 L722.9 302.2 L729.3 301.8 L735.6 301.6 L742.0 301.8 L748.3 302.2 L754.5 302.9 L760.6 303.8 L766.5 305.1 L772.1 306.5 L777.5 308.3 L782.6 310.2 L787.3 312.4 L791.6 314.7 L795.5 317.3 L798.9 320.0 L801.8 322.8 L804.3 325.8 L806.2 328.8 L807.6 331.9 L808.4 335.1 Z" fill="#d8960a"/>
<path d="M801.8 338.6 L801.5 341.8 L800.7 344.9 L799.3 348.0 L797.4 351.0 L795.0 353.9 L792.1 356.7 L788.7 359.4 L784.9 361.9 L780.7 364.2 L776.0 366.3 L771.0 368.3 L765.7 370.0 L760.1 371.4 L754.3 372.6 L748.3 373.6 L742.1 374.3 L735.9 374.7 L729.6 374.8 L723.3 374.7 L717.1 374.3 L710.9 373.6 L704.9 372.6 L699.1 371.4 L693.5 370.0 L688.2 368.3 L683.2 366.3 L678.5 364.2 L674.3 361.9 L670.5 359.4 L667.1 356.7 L664.2 353.9 L661.8 351.0 L659.9 348.0 L658.5 344.9 L657.7 341.8 L657.4 338.6 L657.7 335.4 L658.5 332.3 L659.9 329.2 L661.8 326.2 L664.2 323.3 L667.1 320.5 L670.5 317.8 L674.3 315.3 L678.5 313.0 L683.2 310.9 L688.2 308.9 L693.5 307.2 L699.1 305.8 L704.9 304.6 L710.9 303.6 L717.1 302.9 L723.3 302.5 L729.6 302.4 L735.9 302.5 L742.1 302.9 L748.3 303.6 L754.3 304.6 L760.1 305.8 L765.7 307.2 L771.0 308.9 L776.0 310.9 L780.7 313.0 L784.9 315.3 L788.7 317.8 L792.1 320.5 L795.0 323.3 L797.4 326.2 L799.3 329.2 L800.7 332.3 L801.5 335.4 Z" fill="#7e5802"/>
<path d="M798.9 338.7 L798.6 341.9 L797.8 345.0 L796.4 348.0 L794.5 351.0 L792.1 353.9 L789.2 356.7 L785.9 359.4 L782.1 361.9 L777.8 364.2 L773.2 366.3 L768.2 368.2 L762.9 369.9 L757.4 371.3 L751.6 372.5 L745.6 373.5 L739.5 374.2 L733.3 374.6 L727.0 374.7 L720.8 374.6 L714.5 374.2 L708.4 373.5 L702.4 372.5 L696.7 371.3 L691.1 369.9 L685.8 368.2 L680.8 366.3 L676.2 364.2 L672.0 361.9 L668.2 359.4 L664.8 356.7 L661.9 353.9 L659.5 351.0 L657.6 348.0 L656.3 345.0 L655.5 341.9 L655.2 338.7 L655.5 335.6 L656.3 332.5 L657.6 329.4 L659.5 326.4 L661.9 323.5 L664.8 320.7 L668.2 318.1 L672.0 315.6 L676.2 313.3 L680.8 311.2 L685.8 309.2 L691.1 307.6 L696.7 306.1 L702.4 304.9 L708.4 304.0 L714.5 303.3 L720.8 302.9 L727.0 302.7 L733.3 302.9 L739.5 303.3 L745.6 304.0 L751.6 304.9 L757.4 306.1 L762.9 307.6 L768.2 309.2 L773.2 311.2 L777.8 313.3 L782.1 315.6 L785.9 318.1 L789.2 320.7 L792.1 323.5 L794.5 326.4 L796.4 329.4 L797.8 332.5 L798.6 335.6 Z" fill="#d8960a"/>
<path d="M792.0 339.0 L791.7 342.1 L790.9 345.2 L789.6 348.2 L787.7 351.1 L785.3 354.0 L782.5 356.8 L779.2 359.4 L775.4 361.8 L771.2 364.1 L766.6 366.2 L761.7 368.1 L756.5 369.7 L751.0 371.2 L745.3 372.4 L739.4 373.3 L733.3 374.0 L727.2 374.4 L721.0 374.5 L714.8 374.4 L708.7 374.0 L702.6 373.3 L696.7 372.4 L691.0 371.2 L685.5 369.7 L680.3 368.1 L675.4 366.2 L670.8 364.1 L666.6 361.8 L662.8 359.4 L659.5 356.8 L656.7 354.0 L654.3 351.1 L652.4 348.2 L651.1 345.2 L650.3 342.1 L650.0 339.0 L650.3 335.9 L651.1 332.8 L652.4 329.8 L654.3 326.9 L656.7 324.0 L659.5 321.2 L662.8 318.6 L666.6 316.2 L670.8 313.9 L675.4 311.8 L680.3 309.9 L685.5 308.3 L691.0 306.8 L696.7 305.6 L702.6 304.7 L708.7 304.0 L714.8 303.6 L721.0 303.5 L727.2 303.6 L733.3 304.0 L739.4 304.7 L745.3 305.6 L751.0 306.8 L756.5 308.3 L761.7 309.9 L766.6 311.8 L771.2 313.9 L775.4 316.2 L779.2 318.6 L782.5 321.2 L785.3 324.0 L787.7 326.9 L789.6 329.8 L790.9 332.8 L791.7 335.9 Z" fill="#7e5802"/>
<path d="M789.1 339.1 L788.8 342.2 L788.0 345.2 L786.7 348.3 L784.8 351.2 L782.4 354.0 L779.6 356.8 L776.3 359.4 L772.5 361.8 L768.4 364.1 L763.8 366.2 L758.9 368.0 L753.7 369.7 L748.3 371.1 L742.6 372.3 L736.7 373.2 L730.7 373.9 L724.6 374.3 L718.4 374.4 L712.3 374.3 L706.2 373.9 L700.1 373.2 L694.3 372.3 L688.6 371.1 L683.1 369.7 L677.9 368.0 L673.0 366.2 L668.5 364.1 L664.3 361.8 L660.6 359.4 L657.2 356.8 L654.4 354.0 L652.0 351.2 L650.2 348.3 L648.9 345.2 L648.0 342.2 L647.8 339.1 L648.0 336.0 L648.9 333.0 L650.2 330.0 L652.0 327.1 L654.4 324.2 L657.2 321.5 L660.6 318.9 L664.3 316.4 L668.5 314.2 L673.0 312.1 L677.9 310.2 L683.1 308.6 L688.6 307.1 L694.3 306.0 L700.1 305.0 L706.2 304.4 L712.3 304.0 L718.4 303.8 L724.6 304.0 L730.7 304.4 L736.7 305.0 L742.6 306.0 L748.3 307.1 L753.7 308.6 L758.9 310.2 L763.8 312.1 L768.4 314.2 L772.5 316.4 L776.3 318.9 L779.6 321.5 L782.4 324.2 L784.8 327.1 L786.7 330.0 L788.0 333.0 L788.8 336.0 Z" fill="#d8960a"/>
</g></g>
<path d="M1220.9 245.7 L1226.5 249.4 L1231.7 253.4 L1236.5 257.5 L1241.2 261.7 L1245.5 265.9 L1249.6 270.2 L1253.4 274.6 L1257.0 279.1 L1260.2 283.6 L1263.3 288.2 L1266.0 292.8 L1268.4 297.4 L1270.6 302.1 L1272.5 306.8 L1274.1 311.5 L1275.5 316.3 L1276.5 321.0 L1277.2 325.8 L1277.7 330.6 L1277.9 335.4 L1277.8 340.1 L1277.4 344.9 L1276.7 349.7 L1275.7 354.4 L1274.4 359.1 L1272.9 363.7 L1271.0 368.4 L1268.9 373.0 L1266.5 377.5 L1263.8 382.0 L1260.9 386.4 L1257.6 390.8 L1254.1 395.1 L1250.4 399.3 L1246.4 403.5 L1242.1 407.6 L1237.5 411.6 L1232.7 415.4 L1227.6 419.2 L1222.0 422.7 L1218.7 420.6 L1223.0 416.4 L1227.3 412.4 L1231.4 408.3 L1235.3 404.2 L1239.0 400.1 L1242.5 396.0 L1245.7 391.8 L1248.7 387.6 L1251.5 383.3 L1254.0 379.0 L1256.3 374.7 L1258.3 370.4 L1260.1 366.1 L1261.7 361.7 L1263.0 357.3 L1264.0 352.9 L1264.9 348.5 L1265.5 344.1 L1265.8 339.7 L1265.9 335.2 L1265.7 330.8 L1265.3 326.3 L1264.7 321.9 L1263.8 317.4 L1262.7 313.0 L1261.3 308.5 L1259.7 304.1 L1257.8 299.7 L1255.7 295.3 L1253.3 290.9 L1250.8 286.5 L1247.9 282.1 L1244.9 277.8 L1241.6 273.4 L1238.1 269.1 L1234.3 264.8 L1230.4 260.6 L1226.2 256.3 L1221.9 252.1 L1217.5 247.7 Z" fill="#0a0ad2"/>
<path d="M841.4 361.6 L839.1 360.5 L837.1 359.3 L835.2 357.9 L833.5 356.5 L831.8 355.1 L830.3 353.5 L828.8 352.0 L827.4 350.4 L826.2 348.7 L825.0 347.0 L824.0 345.3 L823.1 343.6 L822.2 341.8 L821.5 340.0 L820.9 338.2 L820.4 336.4 L820.0 334.6 L819.7 332.7 L819.6 330.9 L819.5 329.0 L819.6 327.1 L819.7 325.3 L820.0 323.4 L820.4 321.6 L820.9 319.8 L821.5 318.0 L822.2 316.2 L823.1 314.4 L824.0 312.7 L825.0 311.0 L826.2 309.3 L827.4 307.6 L828.8 306.0 L830.3 304.5 L831.8 302.9 L833.5 301.5 L835.2 300.1 L837.1 298.7 L839.1 297.5 L841.4 296.4 L845.7 299.1 L844.9 300.8 L843.9 302.4 L842.9 304.0 L841.9 305.5 L841.0 307.1 L840.2 308.6 L839.4 310.1 L838.7 311.6 L838.0 313.0 L837.4 314.5 L836.8 316.0 L836.4 317.4 L835.9 318.9 L835.5 320.3 L835.2 321.8 L835.0 323.2 L834.8 324.7 L834.6 326.1 L834.5 327.6 L834.5 329.0 L834.5 330.4 L834.6 331.9 L834.8 333.3 L835.0 334.8 L835.2 336.2 L835.5 337.7 L835.9 339.1 L836.4 340.6 L836.8 342.0 L837.4 343.5 L838.0 345.0 L838.7 346.4 L839.4 347.9 L840.2 349.4 L841.0 350.9 L841.9 352.5 L842.9 354.0 L843.9 355.6 L844.9 357.2 L845.7 358.9 Z" fill="#0a0ad2"/>
</g></svg>
<div style="position:absolute;left:12px;top:75px;width:184px;height:355px;background:rgba(4,4,4,0.5)"></div>
<div style="position:absolute;left:22px;top:86px;font-size:12px;color:#ececec;white-space:nowrap">Feature type</div>
<div style="position:absolute;left:22px;top:105px;width:22px;height:22px;background:#262626"></div>
<div style="position:absolute;left:22px;top:126px;width:22px;height:22px;background:#262626"></div>
<div style="position:absolute;left:22px;top:147px;width:22px;height:22px;background:#262626"></div>
<div style="position:absolute;left:22px;top:168px;width:22px;height:22px;background:#262626"></div>
<div style="position:absolute;left:22px;top:189px;width:22px;height:22px;background:#262626"></div>
<div style="position:absolute;left:22px;top:210px;width:22px;height:22px;background:#262626"></div>
<div style="position:absolute;left:22px;top:231px;width:22px;height:22px;background:#262626"></div>
<div style="position:absolute;left:22px;top:252px;width:22px;height:22px;background:#262626"></div>
<div style="position:absolute;left:22px;top:273px;width:22px;height:22px;background:#262626"></div>
<div style="position:absolute;left:22px;top:294px;width:22px;height:22px;background:#262626"></div>
<div style="position:absolute;left:22px;top:315px;width:22px;height:22px;background:#262626"></div>
<div style="position:absolute;left:22px;top:336px;width:22px;height:22px;background:#262626"></div>
<div style="position:absolute;left:22px;top:357px;width:22px;height:22px;background:#262626"></div>
<div style="position:absolute;left:22px;top:378px;width:22px;height:22px;background:#262626"></div>
<div style="position:absolute;left:22px;top:399px;width:22px;height:22px;background:#262626"></div>
<div style="position:absolute;left:23px;top:106px;width:20px;height:20px;background:#ffff60"></div>
<div style="position:absolute;left:48px;top:109px;font-size:12px;color:#ececec;white-space:nowrap">Perimeter</div>
<div style="position:absolute;left:23px;top:127px;width:20px;height:20px;background:#ffa500"></div>
<div style="position:absolute;left:48px;top:130px;font-size:12px;color:#ececec;white-space:nowrap">External perimeter</div>
<div style="position:absolute;left:23px;top:148px;width:20px;height:20px;background:#0000ff"></div>
<div style="position:absolute;left:48px;top:151px;font-size:12px;color:#ececec;white-space:nowrap">Overhang perimeter</div>
<div style="position:absolute;left:23px;top:169px;width:20px;height:20px;background:#b03029"></div>
<div style="position:absolute;left:48px;top:172px;font-size:12px;color:#ececec;white-space:nowrap">Internal infill</div>
<div style="position:absolute;left:23px;top:190px;width:20px;height:20px;background:#d732d7"></div>
<div style="position:absolute;left:48px;top:193px;font-size:12px;color:#ececec;white-space:nowrap">Solid infill</div>
<div style="position:absolute;left:23px;top:211px;width:20px;height:20px;background:#ff1a1a"></div>
<div style="position:absolute;left:48px;top:214px;font-size:12px;color:#ececec;white-space:nowrap">Top solid infill</div>
<div style="position:absolute;left:23px;top:232px;width:20px;height:20px;background:#9999ff"></div>
<div style="position:absolute;left:48px;top:235px;font-size:12px;color:#ececec;white-space:nowrap">Bridge infill</div>
<div style="position:absolute;left:23px;top:253px;width:20px;height:20px;background:#ffa500"></div>
<div style="position:absolute;left:48px;top:256px;font-size:12px;color:#ececec;white-space:nowrap">Thin wall</div>
<div style="position:absolute;left:23px;top:274px;width:20px;height:20px;background:#ffffff"></div>
<div style="position:absolute;left:48px;top:277px;font-size:12px;color:#ececec;white-space:nowrap">Gap fill</div>
<div style="position:absolute;left:23px;top:295px;width:20px;height:20px;background:#845321"></div>
<div style="position:absolute;left:48px;top:298px;font-size:12px;color:#ececec;white-space:nowrap">Skirt</div>
<div style="position:absolute;left:23px;top:316px;width:20px;height:20px;background:#00ff00"></div>
<div style="position:absolute;left:48px;top:319px;font-size:12px;color:#ececec;white-space:nowrap">Support material</div>
<div style="position:absolute;left:23px;top:337px;width:20px;height:20px;background:#008000"></div>
<div style="position:absolute;left:48px;top:340px;font-size:12px;color:#ececec;white-space:nowrap">Support material interface</div>
<div style="position:absolute;left:23px;top:358px;width:20px;height:20px;background:#b3e3ab"></div>
<div style="position:absolute;left:48px;top:361px;font-size:12px;color:#ececec;white-space:nowrap">Wipe tower</div>
<div style="position:absolute;left:23px;top:379px;width:20px;height:20px;background:#c0c0c0"></div>
<div style="position:absolute;left:48px;top:382px;font-size:12px;color:#ececec;white-space:nowrap">Mill</div>
<div style="position:absolute;left:23px;top:400px;width:20px;height:20px;background:#28cc94"></div>
<div style="position:absolute;left:48px;top:403px;font-size:12px;color:#ececec;white-space:nowrap">Custom</div>
<svg style="position:absolute;left:0;top:0" width="200" height="970" viewBox="0 0 200 970"><path d="M12 890 L147.5 890 L150.8 893.3 L150.8 964 L12 964 Z" fill="rgba(4,4,4,0.5)"/><rect x="82.3" y="895" width="63.7" height="63.8" fill="#1e1e1e"/><path d="M21 914 L37 899 L76.8 899 L76.8 940.8 L62.3 954.8 L21 954.8 Z" fill="rgba(58,58,58,0.6)" stroke="#fff" stroke-width="1.4" stroke-linejoin="round"/><path d="M21 914 L62.3 914 L76.8 899 M62.3 914 L62.3 954.8" fill="none" stroke="#fff" stroke-width="1.4"/><path d="M86.3 914.4 L102.2 900 L142 900 L127.6 914.4 Z" fill="#1e1e1e" stroke="#f0f0f0" stroke-width="1.4" stroke-linejoin="round"/><path d="M86.3 920 L127.6 920 L142 905.5" fill="none" stroke="#d4d4d4" stroke-width="1.35"/><path d="M86.3 925 L127.6 925 L142 910.5" fill="none" stroke="#d4d4d4" stroke-width="1.35"/><path d="M86.3 930 L127.6 930 L142 915.5" fill="none" stroke="#d4d4d4" stroke-width="1.35"/><path d="M86.3 935 L127.6 935 L142 920.5" fill="none" stroke="#d4d4d4" stroke-width="1.35"/><path d="M86.3 940 L127.6 940 L142 925.5" fill="none" stroke="#d4d4d4" stroke-width="1.35"/><path d="M86.3 945 L127.6 945 L142 930.5" fill="none" stroke="#d4d4d4" stroke-width="1.35"/><path d="M86.3 950 L127.6 950 L142 935.5" fill="none" stroke="#d4d4d4" stroke-width="1.35"/><path d="M86.3 955 L127.6 955 L142 940.5" fill="none" stroke="#d4d4d4" stroke-width="1.35"/></svg>
</body></html>
